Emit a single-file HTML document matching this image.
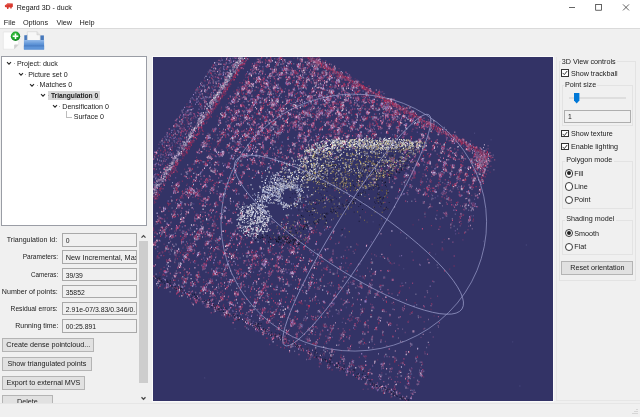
<!DOCTYPE html><html><head><meta charset="utf-8"><title>Regard 3D - duck</title><style>
*{box-sizing:border-box;margin:0;padding:0}
html,body{width:640px;height:417px;overflow:hidden;background:#f0f0f0}
body{filter:blur(0.3px);position:relative;font-family:"Liberation Sans",sans-serif;font-size:7.2px;color:#1a1a1a;line-height:1}
.abs{position:absolute}
.t{position:absolute;white-space:nowrap;line-height:9px;height:9px}
.fld{position:absolute;border:1px solid #a9a9a9;background:#f0f0f0;height:13.5px;left:62px;width:75px;overflow:hidden}
.fld span{position:absolute;left:2.8px;top:2px;white-space:nowrap;line-height:9px;font-size:6.6px}
.lbl{position:absolute;white-space:nowrap;line-height:9px;text-align:right;width:58px;left:0}
.btn{position:absolute;border:1px solid #b4b4b4;background:#e1e1e1;height:13.6px;text-align:center;line-height:12px;white-space:nowrap}
.chk{position:absolute;width:7.6px;height:7.6px;border:1px solid #333;background:#fff}
.rad{position:absolute;width:8.2px;height:8.2px;border:1px solid #3a3a3a;border-radius:50%;background:#fff}
.rad.on::after{content:"";position:absolute;left:1.1px;top:1.1px;width:4px;height:4px;border-radius:50%;background:#222}
.grp{position:absolute;border:1px solid #e3e3e3}
</style></head><body>
<div class="abs" style="left:0;top:0;width:640px;height:28.1px;background:#fff"></div>
<div class="abs" style="left:0;top:28.1px;width:640px;height:1.1px;background:#dadada"></div>
<svg class="abs" style="left:4px;top:1.8px" width="10" height="9" viewBox="0 0 10 9"><path d="M.8 3.4L3.6 1.2L8.8 1.5L8.9 4.8L7.8 5.2L7.6 6.6L6.2 6.6L6.2 5.2L4.6 5.6L4.4 7L3 7L3 5.5L1 5Z" fill="#d93a30"/><path d="M2 3.2L3.8 1.8L6.5 2" stroke="#f08a80" stroke-width=".7" fill="none"/></svg>
<div class="t" style="left:16.8px;top:3px;font-size:7.0px;color:#111">Regard 3D - duck</div>
<svg class="abs" style="left:560px;top:0" width="80" height="16" viewBox="0 0 80 16"><g stroke="#222" stroke-width="0.7" fill="none"><path d="M9 7.5h6"/><rect x="35.7" y="4.4" width="5.8" height="5.8"/><path d="M63 4.4l6 6M69 4.4l-6 6"/></g></svg>
<div class="t" style="left:3.8px;top:18px;font-size:7.3px">File</div>
<div class="t" style="left:22.9px;top:18px;font-size:7.3px">Options</div>
<div class="t" style="left:56.4px;top:18px;font-size:7.3px">View</div>
<div class="t" style="left:79.6px;top:18px;font-size:7.3px">Help</div>
<svg class="abs" style="left:2px;top:31px" width="46" height="21" viewBox="0 0 46 21">
<defs><radialGradient id="gg" cx=".45" cy=".4" r=".6"><stop offset="0" stop-color="#46cf46"/><stop offset=".7" stop-color="#1ea32e"/><stop offset="1" stop-color="#0b7a1c"/></radialGradient>
<linearGradient id="fg" x1="0" y1="0" x2="0" y2="1"><stop offset="0" stop-color="#93baea"/><stop offset=".45" stop-color="#5c92d6"/><stop offset="1" stop-color="#4a80c8"/></linearGradient></defs>
<path d="M1.3 1H16.7V13.5L12.2 18.2H1.3Z" fill="#fdfdfd" stroke="#dadada" stroke-width=".5"/>
<path d="M12.2 18.2V14.2Q12.2 13.5 13 13.5H16.7Z" fill="#cfcfcf"/>
<circle cx="13.5" cy="5.3" r="4.7" fill="url(#gg)"/>
<path d="M13.5 2.5v5.6M10.7 5.3h5.6" stroke="#fff" stroke-width="1.5"/>
<path d="M22.3 4.3h2.2l.8-.9h2.4v9h-5.4z" fill="#4678bc"/>
<path d="M37.6 4.4h4.3v8h-4.3z" fill="#4678bc"/>
<path d="M25.3 .7h9.6l3.3 3.2v6.4h-12.9z" fill="#f7f7f7" stroke="#cdcdcd" stroke-width=".5"/>
<path d="M34.9 .7v3.2h3.3" fill="#e2e2e2" stroke="#c4c4c4" stroke-width=".4"/>
<path d="M21.9 9h20.2v9.5h-20.2z" fill="url(#fg)"/>
<path d="M21.9 15.1h20.2" stroke="#3f73b8" stroke-width=".9"/>
<path d="M21.9 15.6h20.2v2.9h-20.2z" fill="#5e94d8"/>
</svg>
<div class="abs" style="left:1.3px;top:56.2px;width:145.6px;height:170.3px;background:#fff;border:1px solid #9a9da5"></div>
<div class="t" style="left:16.9px;top:59.9px;font-size:7.1px">Project: duck</div>
<svg class="abs" style="left:6.4px;top:61.1px" width="6" height="5" viewBox="0 0 6 5"><path d="M1 1.2l2 2L5 1.2" fill="none" stroke="#2a2a2a" stroke-width="1.1"/></svg>
<div class="abs" style="left:14.0px;top:63.2px;width:1px;height:1px;background:#b4b4b4"></div>
<div class="t" style="left:28.2px;top:70.6px;font-size:7.1px">Picture set 0</div>
<svg class="abs" style="left:17.8px;top:71.8px" width="6" height="5" viewBox="0 0 6 5"><path d="M1 1.2l2 2L5 1.2" fill="none" stroke="#2a2a2a" stroke-width="1.1"/></svg>
<div class="abs" style="left:25.4px;top:73.9px;width:1px;height:1px;background:#b4b4b4"></div>
<div class="t" style="left:39.6px;top:81.3px;font-size:7.1px">Matches 0</div>
<svg class="abs" style="left:29.1px;top:82.5px" width="6" height="5" viewBox="0 0 6 5"><path d="M1 1.2l2 2L5 1.2" fill="none" stroke="#2a2a2a" stroke-width="1.1"/></svg>
<div class="abs" style="left:36.7px;top:84.6px;width:1px;height:1px;background:#b4b4b4"></div>
<div class="abs" style="left:48.4px;top:90.7px;width:52px;height:9.6px;background:#d9d9d9"></div>
<div class="t" style="left:50.9px;top:91.0px;font-weight:bold;font-size:6.66px">Triangulation 0</div>
<svg class="abs" style="left:40.4px;top:93.2px" width="6" height="5" viewBox="0 0 6 5"><path d="M1 1.2l2 2L5 1.2" fill="none" stroke="#2a2a2a" stroke-width="1.1"/></svg>
<div class="abs" style="left:48.0px;top:95.3px;width:1px;height:1px;background:#b4b4b4"></div>
<div class="t" style="left:62.3px;top:102.7px;font-size:7.1px">Densification 0</div>
<svg class="abs" style="left:51.8px;top:103.9px" width="6" height="5" viewBox="0 0 6 5"><path d="M1 1.2l2 2L5 1.2" fill="none" stroke="#2a2a2a" stroke-width="1.1"/></svg>
<div class="abs" style="left:59.4px;top:106.0px;width:1px;height:1px;background:#b4b4b4"></div>
<div class="t" style="left:73.7px;top:113.4px;font-size:7.1px">Surface 0</div>
<div class="abs" style="left:66px;top:111.3px;width:1px;height:6px;background:#bcbcbc"></div><div class="abs" style="left:66px;top:116.6px;width:5.5px;height:1px;background:#bcbcbc"></div>
<div class="lbl" style="top:235.4px;width:57.2px"><span style="display:inline-block;transform-origin:100% 50%;transform:scaleX(0.985)">Triangulation Id:</span></div>
<div class="fld" style="top:233.2px"><span style="font-size:6.8px">0</span></div>
<div class="lbl" style="top:252.4px;width:58px"><span style="display:inline-block;transform-origin:100% 50%;transform:scaleX(0.905)">Parameters:</span></div>
<div class="fld" style="top:250.2px"><span style="font-size:7.3px">New Incremental, Max</span></div>
<div class="lbl" style="top:269.8px;width:58px"><span style="display:inline-block;transform-origin:100% 50%;transform:scaleX(0.87)">Cameras:</span></div>
<div class="fld" style="top:267.6px"><span style="font-size:6.8px">39/39</span></div>
<div class="lbl" style="top:287.1px;width:58px"><span style="display:inline-block;transform-origin:100% 50%;transform:scaleX(0.985)">Number of points:</span></div>
<div class="fld" style="top:284.9px"><span style="font-size:6.8px">35852</span></div>
<div class="lbl" style="top:304.1px;width:58px"><span style="display:inline-block;transform-origin:100% 50%;transform:scaleX(0.93)">Residual errors:</span></div>
<div class="fld" style="top:301.9px"><span style="font-size:6.9px">2.91e-07/3.83/0.346/0.</span></div>
<div class="lbl" style="top:321.4px;width:58px"><span style="display:inline-block;transform-origin:100% 50%;transform:scaleX(0.97)">Running time:</span></div>
<div class="fld" style="top:319.2px"><span style="font-size:6.8px">00:25.891</span></div>
<div class="btn" style="left:2.1px;top:338px;width:92.4px">Create dense pointcloud...</div>
<div class="btn" style="left:2.1px;top:357px;width:89.7px">Show triangulated points</div>
<div class="btn" style="left:2.1px;top:376.4px;width:82.7px">Export to external MVS</div>
<div class="btn" style="left:2.1px;top:394.8px;width:50.6px">Delete</div>
<div class="abs" style="left:139.3px;top:231px;width:8.4px;height:172.5px;background:#f0f0f0"></div>
<div class="abs" style="left:139.3px;top:241.2px;width:8.4px;height:141.8px;background:#cdcdcd"></div>
<svg class="abs" style="left:139.9px;top:234.4px" width="7" height="5" viewBox="0 0 7 5"><path d="M1.5 3.6l2-2L5.5 3.6" fill="none" stroke="#484848" stroke-width="1.25"/></svg>
<svg class="abs" style="left:139.9px;top:395.6px" width="7" height="5" viewBox="0 0 7 5"><path d="M1.5 1.3l2 2L5.5 1.3" fill="none" stroke="#484848" stroke-width="1.25"/></svg>
<div class="abs" style="left:0;top:403.3px;width:640px;height:13.7px;background:#f0f0f0;border-top:1px solid #e6e6e6"></div>
<div class="abs" style="left:556px;top:57px;width:84px;height:344px;border-left:1px solid #e6e6e6;border-bottom:1px solid #e6e6e6"></div>
<svg class="abs" style="left:630px;top:408px" width="9" height="8" viewBox="0 0 9 8"><g fill="#bdbdbd"><rect x="6.5" y="1" width="1" height="1"/><rect x="4.5" y="3" width="1" height="1"/><rect x="6.5" y="3" width="1" height="1"/><rect x="2.5" y="5" width="1" height="1"/><rect x="4.5" y="5" width="1" height="1"/><rect x="6.5" y="5" width="1" height="1"/></g></svg>
<div class="abs" style="left:152.8px;top:56.7px;width:400.09999999999997px;height:344.40000000000003px;background:#333366;overflow:hidden;outline:1px solid #fafafa">
<svg class="abs" style="left:0;top:0" width="400.09999999999997" height="344.40000000000003" viewBox="0 0 400.09999999999997 344.40000000000003">
<defs><filter id="b" x="0" y="0" width="100%" height="100%"><feGaussianBlur stdDeviation="0.45"/></filter></defs>
<g fill="none" filter="url(#b)"><g stroke-width="2.2">
<path stroke="#6e487a" d="M105.7 3.7h2M102.5 9.9h2M99.1 16.4h2M83.5 35.2h2M47.6 88.2h2M41.9 105.0h2M22.0 128.0h2M83.6 54.8h2M82.5 54.6h2M69.1 76.7h2M101.2 45.7h2M95.1 54.3h2M84.8 68.0h2M82.7 74.7h2M32.0 157.2h2M29.6 164.3h2M131.3 11.3h2M120.3 33.1h2M91.4 78.1h2M21.5 197.8h2M138.8 17.4h2M115.2 55.7h2M116.9 57.1h2M98.3 82.4h2M81.8 114.0h2M40.3 180.5h2M129.2 49.3h2M112.3 82.0h2M98.0 103.1h2M53.4 187.0h2M163.2 5.1h2M159.4 17.8h2M125.0 74.0h2M82.3 148.2h2M165.6 39.5h2M148.1 70.9h2M144.9 80.0h2M139.9 91.6h2M136.8 94.9h2M182.1 25.3h2M173.1 42.6h2M145.2 100.3h2M194.3 19.5h2M178.9 52.4h2M175.3 55.9h2M201.6 25.2h2M179.5 69.0h2M172.8 84.2h2M88.3 242.2h2M202.1 42.1h2M184.4 81.0h2M193.4 82.2h2M222.5 60.5h2M216.9 72.3h2M221.5 77.3h2M245.2 64.5h2M263.0 88.7h2M253.4 119.7h2M215.8 228.0h2M294.5 75.8h2M309.1 82.2h2M314.4 92.2h2M313.9 92.2h2M237.8 311.5h2M322.5 90.3h2M319.7 121.0h2"/>
<path stroke="#643363" d="M102.5 10.8h2M88.2 31.0h2M90.6 30.4h2M90.0 30.8h2M82.2 36.6h2M91.3 40.2h2M61.1 115.0h2M15.3 203.4h2M88.3 99.4h2M61.1 169.3h2M60.9 166.7h2M165.0 21.2h2M142.5 59.6h2M168.9 32.6h2M166.7 39.2h2M132.2 101.6h2M57.7 247.2h2M176.1 41.1h2M165.9 55.1h2M101.7 177.9h2M109.9 182.1h2M188.2 74.7h2M132.7 182.0h2M218.3 44.4h2M213.2 56.4h2M205.7 77.8h2M231.6 51.9h2M234.3 49.4h2M228.0 66.4h2M226.2 70.3h2M241.6 56.8h2M239.5 56.9h2M241.1 54.6h2M243.0 57.2h2M273.4 66.2h2M259.3 114.3h2M288.3 91.2h2M295.6 98.7h2M229.2 307.3h2M320.5 122.1h2M329.8 113.5h2"/>
<path stroke="#6a3b6f" d="M101.0 10.8h2M74.8 51.3h2M53.8 79.6h2M103.1 22.1h2M68.8 74.3h2M19.7 154.3h2M95.1 53.2h2M44.7 138.7h2M22.4 171.7h2M93.3 78.7h2M10.8 214.8h2M139.3 14.2h2M123.4 42.6h2M32.5 200.8h2M156.2 7.4h2M118.7 66.4h2M94.0 108.3h2M164.8 5.7h2M127.9 68.9h2M126.5 71.7h2M127.2 70.1h2M155.6 40.5h2M184.7 25.1h2M174.0 43.7h2M173.9 42.2h2M151.8 82.4h2M166.0 72.1h2M198.3 31.1h2M191.1 43.6h2M183.7 64.6h2M204.2 40.4h2M192.2 60.7h2M185.8 74.1h2M214.0 37.3h2M214.7 55.1h2M228.0 46.1h2M215.9 67.3h2M233.0 49.4h2M139.6 265.5h2M242.1 55.8h2M259.0 62.7h2M250.5 76.9h2M234.5 110.9h2M234.1 118.2h2M199.5 224.2h2M258.0 116.5h2M260.1 118.7h2M209.0 275.0h2M298.5 86.0h2M323.0 109.0h2"/>
<path stroke="#a17ea6" d="M101.6 11.3h2M93.9 35.5h2M35.8 135.0h2M8.8 173.9h2M123.1 6.9h2M121.9 12.6h2M120.2 14.1h2M104.0 41.4h2M104.3 40.5h2M69.0 95.1h2M52.5 143.2h2M147.7 4.2h2M118.6 44.9h2M107.2 69.6h2M98.8 83.9h2M42.9 182.2h2M120.3 65.0h2M162.9 10.1h2M161.3 12.0h2M172.2 9.4h2M172.5 16.2h2M157.8 39.7h2M150.8 55.0h2M149.0 55.2h2M161.0 44.0h2M180.2 45.1h2M199.4 30.0h2M191.9 42.5h2M185.2 55.9h2M176.6 78.9h2M185.2 73.1h2M141.6 186.9h2M222.0 60.9h2M209.6 86.6h2M137.0 267.6h2M177.4 203.2h2M250.8 59.5h2M220.5 125.5h2M250.6 75.5h2M236.6 108.4h2M266.7 84.2h2M206.7 226.5h2M279.5 67.4h2M262.8 107.6h2M279.2 89.0h2M205.5 285.5h2M285.0 103.2h2M259.4 274.4h2M315.1 163.3h2"/>
<path stroke="#7664a3" d="M96.3 16.6h2M89.2 31.0h2M88.8 31.1h2M95.2 34.8h2M36.0 132.7h2M114.3 25.7h2M111.7 30.3h2M81.6 76.2h2M132.2 26.2h2M117.7 47.2h2M120.6 46.9h2M150.6 29.8h2M56.6 225.1h2M177.8 33.5h2M173.6 65.1h2M156.5 97.2h2M189.5 49.0h2M187.4 58.4h2M182.4 81.1h2M123.7 200.2h2M232.0 50.4h2M234.4 50.3h2M240.4 54.9h2M244.7 73.4h2M257.5 63.5h2M252.3 67.1h2M316.5 129.9h2"/>
<path stroke="#985789" d="M91.7 28.7h2M88.8 30.4h2M88.1 31.2h2M53.4 79.5h2M115.7 4.5h2M105.5 22.2h2M67.9 76.5h2M36.6 132.4h2M110.3 25.9h2M49.9 141.9h2M117.8 55.6h2M90.4 99.5h2M41.7 179.3h2M134.6 44.1h2M121.8 67.8h2M109.2 90.3h2M109.0 88.3h2M58.6 168.7h2M30.0 224.1h2M164.8 6.0h2M142.2 50.1h2M134.4 56.3h2M132.3 65.0h2M125.8 75.0h2M123.4 78.0h2M159.2 34.2h2M145.6 62.4h2M174.1 42.8h2M148.0 98.5h2M97.5 185.3h2M188.2 30.3h2M179.3 52.6h2M163.4 82.7h2M151.5 102.0h2M194.6 38.8h2M187.2 47.8h2M189.3 49.2h2M187.1 57.5h2M227.1 47.9h2M233.6 51.8h2M233.8 59.9h2M233.2 75.4h2M242.8 70.7h2M155.3 283.3h2M250.7 95.3h2M238.7 222.9h2M222.0 271.4h2"/>
<path stroke="#5a4f8a" d="M93.7 25.6h2M79.5 42.7h2M10.1 151.4h2M75.4 70.5h2M32.4 134.8h2M120.5 48.1h2M111.5 60.7h2M93.2 93.3h2M149.4 28.9h2M146.2 35.2h2M149.8 35.7h2M170.7 10.5h2M166.4 20.6h2M158.0 52.5h2M144.1 79.3h2M185.0 17.7h2M183.3 22.9h2M73.8 229.0h2M194.7 22.9h2M173.9 59.3h2M187.3 50.1h2M179.7 246.7h2M193.2 312.6h2M287.1 119.5h2M307.1 138.6h2"/>
<path stroke="#9286b3" d="M94.7 26.7h2M80.2 45.2h2M24.1 129.1h2M87.1 48.4h2M81.7 54.4h2M83.4 55.0h2M8.5 175.0h2M117.3 18.5h2M96.2 52.0h2M91.6 59.5h2M17.6 178.7h2M111.2 43.2h2M79.1 101.3h2M146.7 2.3h2M30.6 199.4h2M147.2 20.2h2M128.1 52.4h2M102.3 98.7h2M70.7 154.0h2M163.6 12.1h2M149.1 28.3h2M148.4 30.5h2M128.9 70.3h2M120.7 84.8h2M170.6 14.9h2M179.1 12.9h2M174.2 43.5h2M166.7 54.8h2M151.3 83.8h2M108.6 206.8h2M188.9 67.6h2M189.5 67.5h2M178.3 87.8h2M212.1 37.9h2M204.8 79.7h2M228.6 47.1h2M220.2 121.9h2M271.0 136.8h2M208.8 311.3h2M281.9 135.0h2M315.2 143.4h2"/>
<path stroke="#914176" d="M93.8 26.6h2M78.5 44.0h2M52.8 81.0h2M82.9 56.6h2M112.0 26.1h2M79.0 79.7h2M135.8 5.1h2M74.8 106.3h2M65.9 117.2h2M143.8 8.9h2M119.3 47.5h2M145.8 20.6h2M120.6 66.4h2M120.1 67.0h2M128.7 69.3h2M50.3 206.8h2M164.8 21.5h2M175.7 16.9h2M166.7 38.2h2M167.6 37.7h2M185.2 16.6h2M175.5 42.6h2M173.6 44.2h2M164.5 59.2h2M146.1 99.2h2M178.3 53.0h2M202.6 26.6h2M187.2 61.0h2M114.6 193.3h2M194.1 61.5h2M122.7 208.7h2M101.7 245.9h2M215.3 34.3h2M198.5 69.7h2M106.5 259.2h2M225.1 35.0h2M224.2 37.2h2M219.6 44.9h2M228.6 49.7h2M233.4 58.2h2M242.4 57.2h2M240.2 59.4h2M234.5 68.8h2M258.5 62.8h2M239.7 102.6h2M260.9 116.4h2M273.8 105.8h2M291.7 106.9h2"/>
<path stroke="#883261" d="M88.7 31.4h2M54.5 78.7h2M92.3 37.0h2M26.8 140.5h2M108.2 32.4h2M97.7 52.8h2M120.2 31.3h2M107.3 50.6h2M135.1 20.5h2M135.8 21.4h2M134.3 22.3h2M165.3 4.0h2M126.0 73.7h2M172.5 8.0h2M141.3 65.5h2M51.7 232.2h2M152.7 58.4h2M145.3 72.2h2M174.5 57.5h2M198.3 29.7h2M181.7 69.4h2M204.3 42.9h2M233.6 50.7h2M221.1 79.4h2M298.8 82.4h2M329.2 118.5h2"/>
<path stroke="#c0487d" d="M89.0 29.8h2M91.9 41.3h2M74.4 68.9h2M75.4 69.0h2M112.0 43.6h2M145.4 21.3h2M75.5 163.9h2M177.1 51.3h2"/>
<path stroke="#777096" d="M84.3 35.9h2M70.5 59.9h2M55.7 78.1h2M52.8 81.1h2M103.2 22.8h2M83.2 54.6h2M79.3 61.0h2M40.0 123.0h2M124.0 7.7h2M111.4 27.0h2M145.1 10.6h2M139.4 14.6h2M99.6 82.4h2M86.6 103.8h2M165.2 6.2h2M160.1 17.1h2M59.6 216.6h2M167.2 36.6h2M166.3 36.5h2M148.9 66.7h2M140.9 88.9h2M170.7 47.9h2M93.1 199.3h2M184.3 40.4h2M203.0 62.8h2M211.0 60.8h2M207.2 78.7h2M155.2 230.7h2M179.5 216.9h2M257.5 56.6h2M237.8 130.2h2M218.1 205.6h2M270.9 89.9h2M215.8 234.3h2"/>
<path stroke="#a89cb9" d="M79.8 44.5h2M96.1 28.6h2M82.2 55.2h2M80.2 62.8h2M74.3 69.1h2M74.8 88.7h2M127.7 16.4h2M123.8 44.6h2M31.0 225.0h2M125.3 76.1h2M169.2 15.9h2M154.6 40.8h2M139.6 66.5h2M159.6 51.1h2M186.1 18.1h2M177.0 52.5h2M94.9 211.0h2M192.6 79.9h2M138.1 194.8h2M114.4 245.0h2M236.1 50.4h2M259.2 54.9h2M268.2 77.5h2M254.5 110.0h2M177.2 298.3h2M307.8 132.2h2"/>
<path stroke="#977cc2" d="M78.0 44.2h2M73.8 50.0h2M11.6 215.2h2M137.8 37.2h2M117.2 86.0h2M211.5 244.4h2"/>
<path stroke="#6b6493" d="M54.5 79.2h2M33.1 116.7h2M36.1 134.9h2M120.2 13.4h2M91.8 61.0h2M82.0 74.9h2M66.6 98.2h2M27.7 160.8h2M132.5 12.9h2M32.4 176.3h2M137.0 15.8h2M121.6 44.4h2M118.5 45.6h2M25.5 208.6h2M158.1 18.8h2M123.8 76.1h2M171.5 7.9h2M171.3 9.5h2M169.0 14.9h2M167.2 21.6h2M162.1 27.7h2M155.4 40.8h2M150.4 55.3h2M126.7 91.9h2M180.8 11.9h2M162.0 46.9h2M184.1 24.2h2M77.7 223.4h2M177.9 53.0h2M162.3 86.1h2M193.7 36.3h2M179.6 70.0h2M107.7 211.5h2M203.4 41.6h2M93.8 263.6h2M199.9 67.4h2M224.2 38.5h2M206.1 68.3h2M134.8 228.6h2M218.9 62.0h2M232.2 57.5h2M230.2 220.6h2M291.0 107.3h2M293.2 141.8h2M231.3 332.2h2M257.5 287.6h2"/>
<path stroke="#e2d0e2" d="M49.9 88.5h2M165.9 37.8h2M212.3 37.9h2M264.6 64.8h2"/>
<path stroke="#735f8b" d="M5.5 160.8h2M105.6 23.4h2M126.7 1.9h2M113.5 26.3h2M109.3 34.9h2M95.3 54.2h2M93.7 59.8h2M126.2 16.4h2M93.3 79.0h2M93.9 79.5h2M85.0 85.6h2M140.0 14.5h2M139.7 15.0h2M112.3 63.5h2M107.2 70.5h2M93.5 92.4h2M95.3 90.8h2M48.8 170.6h2M150.4 12.7h2M148.0 14.1h2M135.8 37.4h2M121.1 66.3h2M158.7 15.4h2M125.7 76.7h2M150.0 56.4h2M60.2 215.7h2M48.6 233.7h2M166.2 38.5h2M154.7 58.9h2M185.9 18.0h2M182.4 25.3h2M177.9 34.3h2M188.6 31.1h2M163.8 81.8h2M157.5 91.7h2M199.6 30.9h2M179.7 68.9h2M172.0 80.6h2M115.5 193.7h2M110.9 203.6h2M185.2 76.3h2M93.6 263.8h2M194.4 78.9h2M191.2 86.2h2M182.7 100.2h2M219.4 42.9h2M209.2 61.1h2M233.3 51.4h2M226.6 71.5h2M241.3 54.5h2M240.5 85.0h2M232.7 97.2h2M186.5 210.2h2M257.3 63.3h2M256.1 63.6h2M275.1 65.9h2M270.0 69.3h2M210.6 276.9h2M217.9 282.4h2M299.4 78.7h2M306.5 113.5h2M239.2 300.0h2M252.0 330.6h2"/>
<path stroke="#cb699a" d="M87.0 48.5h2M100.1 45.9h2M93.2 59.1h2M88.9 97.6h2M46.8 175.9h2M113.9 74.2h2M86.3 124.8h2M167.6 21.2h2M163.6 57.1h2M159.4 66.4h2M83.8 237.3h2M184.3 81.8h2M263.6 67.4h2"/>
<path stroke="#5c2f5e" d="M79.6 63.1h2M27.9 163.2h2M100.0 81.7h2M134.4 56.9h2M128.7 71.2h2M154.4 41.9h2M150.6 81.0h2M183.8 73.9h2M199.4 71.1h2M213.3 55.6h2M227.7 47.0h2M235.6 68.6h2M146.1 270.2h2M288.5 192.5h2"/>
<path stroke="#792c59" d="M104.8 38.1h2M44.1 158.4h2M129.5 52.2h2M124.2 57.9h2M119.4 84.2h2M169.1 15.2h2M257.6 62.3h2"/>
<path stroke="#c2b0d9" d="M93.2 60.6h2M46.8 172.8h2M137.8 36.5h2M146.2 78.7h2M170.9 43.6h2M185.6 72.7h2"/>
<path stroke="#d8a4c5" d="M69.0 95.0h2M140.2 14.9h2M133.5 44.3h2M164.7 6.6h2M165.8 21.0h2M142.0 60.2h2M175.4 21.4h2M183.9 54.6h2M177.9 69.6h2M237.3 42.5h2"/>
<path stroke="#4f4380" d="M3.5 199.6h2M101.3 95.1h2M159.5 16.0h2M138.7 87.6h2M178.7 35.6h2M102.0 273.5h2"/>
<path stroke="#644e92" d="M128.6 12.2h2M163.2 44.5h2M194.1 20.6h2M194.0 44.0h2M194.9 55.0h2M100.4 246.2h2M197.4 70.2h2M197.5 71.7h2M257.4 62.7h2M252.2 116.5h2"/>
<path stroke="#9c2952" d="M96.1 72.6h2M149.5 169.3h2M225.1 36.0h2M220.3 77.1h2"/>
<path stroke="#b2325f" d="M112.3 60.0h2M134.9 44.0h2M131.9 64.2h2M178.9 45.7h2M81.3 237.5h2M155.0 249.2h2M266.2 60.4h2M273.2 131.2h2"/>
</g><g stroke-width="1.4">
<path stroke="#6e487a" d="M112.3 3.8h1M103.8 2.2h1M101.6 11.5h1M101.8 14.9h1M93.9 20.4h1M89.0 25.8h1M92.0 27.3h1M91.8 31.4h1M87.7 29.7h1M91.3 30.8h1M84.7 33.1h1M80.9 41.0h1M81.7 42.7h1M81.8 41.7h1M80.5 41.3h1M77.3 53.1h1M73.5 61.9h1M65.9 67.3h1M62.3 70.8h1M50.3 87.9h1M56.1 89.9h1M45.1 93.9h1M43.6 103.9h1M42.6 104.0h1M35.7 121.3h1M20.3 134.5h1M5.2 163.8h1M4.8 162.3h1M113.9 8.5h1M105.1 23.0h1M109.4 20.6h1M95.7 35.5h1M97.1 33.4h1M83.4 49.3h1M87.9 47.4h1M80.9 54.7h1M83.7 55.9h1M81.4 53.1h1M88.8 53.9h1M84.0 56.0h1M81.6 63.4h1M80.6 61.4h1M70.1 77.7h1M72.2 77.5h1M60.4 92.4h1M61.4 94.3h1M57.6 97.0h1M39.1 125.3h1M35.2 138.0h1M36.7 132.1h1M39.4 140.3h1M33.1 128.4h1M44.1 132.8h1M27.6 154.0h1M27.4 149.9h1M18.4 158.1h1M13.2 167.1h1M7.5 177.7h1M5.6 173.3h1M1.3 176.0h1M1.4 187.0h1M127.2 1.7h1M125.1 3.5h1M129.1 1.5h1M120.7 14.2h1M115.5 19.6h1M117.5 16.1h1M111.4 26.8h1M117.3 26.6h1M114.5 26.2h1M110.2 29.9h1M109.7 32.7h1M99.1 47.8h1M97.1 43.0h1M99.2 48.1h1M95.8 55.0h1M99.5 49.8h1M95.4 53.9h1M94.1 53.3h1M101.2 55.8h1M87.1 61.9h1M87.3 67.6h1M85.2 67.0h1M87.6 66.5h1M84.4 74.4h1M83.6 73.6h1M80.2 75.0h1M85.8 75.4h1M78.0 89.6h1M70.8 95.2h1M61.5 113.6h1M60.7 113.2h1M52.3 122.6h1M51.3 128.3h1M51.9 127.4h1M47.9 133.4h1M43.9 134.8h1M40.0 136.8h1M46.5 139.2h1M22.7 173.7h1M15.8 177.5h1M20.4 180.0h1M16.1 182.3h1M12.1 193.3h1M7.6 198.3h1M135.6 4.3h1M134.3 6.3h1M131.9 10.7h1M138.0 10.7h1M127.7 10.4h1M135.5 13.5h1M128.3 17.0h1M123.0 14.9h1M121.0 25.5h1M124.4 22.7h1M123.5 29.8h1M116.8 29.7h1M122.3 36.7h1M111.4 43.4h1M107.5 52.0h1M107.4 52.1h1M107.5 54.5h1M103.4 56.7h1M107.1 57.5h1M99.9 66.2h1M85.4 86.3h1M81.4 85.0h1M83.9 98.6h1M81.4 96.0h1M83.2 92.3h1M71.6 106.6h1M63.0 125.3h1M57.1 147.2h1M34.7 172.5h1M29.3 181.0h1M23.7 194.7h1M4.5 222.3h1M142.9 15.7h1M134.3 24.3h1M133.0 19.1h1M136.4 25.3h1M131.8 31.8h1M118.4 51.4h1M118.5 47.9h1M111.6 64.5h1M107.1 78.4h1M104.1 74.9h1M108.6 74.2h1M104.4 76.6h1M100.4 81.4h1M100.1 81.4h1M91.2 90.8h1M96.8 91.7h1M92.9 97.2h1M89.6 98.8h1M93.9 97.5h1M77.1 126.0h1M76.9 123.4h1M77.9 123.0h1M80.0 122.2h1M64.3 148.6h1M59.0 162.9h1M46.9 173.0h1M32.4 195.6h1M42.4 188.2h1M33.5 189.3h1M37.2 186.5h1M36.6 188.8h1M34.9 201.6h1M30.3 200.2h1M24.6 209.8h1M24.0 216.2h1M10.9 231.3h1M159.2 2.7h1M158.9 1.0h1M149.8 16.3h1M148.0 11.9h1M147.4 19.9h1M151.4 21.3h1M140.3 33.1h1M137.7 35.0h1M133.8 44.9h1M129.8 49.6h1M130.7 53.8h1M122.3 53.7h1M128.2 51.3h1M126.0 62.6h1M120.8 63.2h1M116.2 72.6h1M113.1 81.1h1M85.7 125.4h1M77.1 146.8h1M51.4 198.0h1M34.8 217.6h1M29.9 210.6h1M29.0 225.5h1M29.8 226.8h1M29.7 222.6h1M166.3 10.1h1M165.0 5.5h1M162.4 10.4h1M161.5 11.9h1M163.0 8.9h1M161.4 10.4h1M162.0 11.8h1M164.1 17.7h1M159.9 17.8h1M165.1 17.0h1M157.5 22.1h1M152.3 26.5h1M150.2 29.5h1M149.4 30.2h1M147.7 36.0h1M148.5 35.8h1M144.3 41.5h1M138.1 43.6h1M144.0 43.1h1M139.6 45.8h1M143.9 52.4h1M142.2 49.4h1M134.1 66.3h1M135.9 68.6h1M131.5 69.4h1M127.7 68.2h1M126.0 72.6h1M130.2 69.4h1M128.4 69.9h1M129.7 68.8h1M122.6 70.5h1M123.0 80.4h1M120.2 84.5h1M113.5 94.4h1M110.7 98.7h1M119.4 96.1h1M111.1 98.6h1M106.6 108.9h1M109.5 103.0h1M83.2 148.8h1M89.1 147.4h1M75.5 153.2h1M79.3 155.8h1M49.8 211.6h1M49.1 211.2h1M37.8 226.6h1M42.5 221.7h1M168.8 9.1h1M165.2 17.1h1M172.8 14.1h1M165.0 17.4h1M166.7 17.7h1M169.7 24.2h1M164.6 18.1h1M158.2 26.2h1M161.4 27.4h1M162.7 23.2h1M160.1 34.6h1M159.0 31.1h1M160.7 34.2h1M154.4 41.8h1M155.4 39.4h1M150.2 49.8h1M149.6 60.1h1M149.0 55.3h1M148.5 55.4h1M144.6 59.3h1M147.0 57.5h1M141.5 61.2h1M142.0 69.0h1M134.9 79.7h1M127.3 90.1h1M119.0 98.4h1M118.7 101.8h1M117.0 103.5h1M81.8 173.2h1M78.8 183.2h1M79.3 179.5h1M78.8 178.4h1M75.8 187.7h1M70.2 196.1h1M61.3 214.3h1M61.3 215.5h1M59.8 217.1h1M61.1 215.1h1M62.9 213.9h1M56.9 221.9h1M55.4 226.9h1M42.8 243.0h1M172.8 25.0h1M167.6 31.4h1M166.2 40.4h1M169.2 39.3h1M168.2 37.0h1M164.6 34.2h1M163.0 40.5h1M168.6 39.6h1M158.3 50.2h1M153.3 56.7h1M156.8 56.9h1M155.4 55.5h1M154.7 57.9h1M155.7 58.7h1M142.3 73.0h1M144.9 77.1h1M138.8 85.6h1M130.5 102.0h1M129.2 97.4h1M95.2 172.1h1M87.2 183.7h1M83.8 190.1h1M78.9 198.4h1M75.2 200.3h1M76.1 203.6h1M73.0 221.9h1M70.4 217.6h1M57.8 237.7h1M50.0 244.7h1M184.4 19.0h1M185.6 18.6h1M186.7 19.0h1M184.2 22.4h1M185.0 20.2h1M185.8 24.7h1M185.1 24.7h1M183.9 27.0h1M182.1 26.4h1M180.2 34.5h1M176.0 33.0h1M175.7 36.1h1M175.6 34.0h1M168.7 42.2h1M174.0 41.9h1M173.6 45.5h1M171.9 40.8h1M173.7 42.4h1M162.5 51.9h1M165.8 62.1h1M164.6 60.7h1M168.4 61.2h1M153.4 87.7h1M152.3 82.2h1M151.9 83.4h1M146.3 88.1h1M145.1 94.0h1M151.0 98.0h1M140.2 103.5h1M103.1 174.8h1M94.7 193.9h1M98.5 196.6h1M86.4 211.7h1M78.1 217.0h1M66.1 237.0h1M66.8 243.8h1M69.5 241.3h1M195.8 19.6h1M194.2 16.8h1M190.7 27.9h1M188.4 34.3h1M189.4 32.2h1M179.3 52.3h1M178.0 53.3h1M181.0 52.6h1M183.7 51.5h1M174.4 60.9h1M168.0 64.5h1M166.0 73.1h1M166.3 78.6h1M161.1 84.2h1M163.5 86.3h1M161.6 86.1h1M154.5 89.6h1M148.5 110.4h1M111.7 181.4h1M102.8 197.8h1M98.8 207.9h1M95.3 217.6h1M70.5 259.0h1M75.8 259.7h1M68.4 258.1h1M204.2 26.5h1M198.0 30.8h1M198.4 28.1h1M193.0 31.8h1M200.2 40.8h1M192.3 34.2h1M191.8 51.9h1M189.6 52.3h1M184.4 58.5h1M188.1 59.4h1M184.9 56.8h1M182.5 68.0h1M182.4 62.3h1M180.8 65.9h1M179.7 65.0h1M175.8 77.5h1M174.0 82.6h1M174.3 83.0h1M170.0 91.8h1M161.9 102.7h1M116.7 190.9h1M115.3 194.8h1M104.9 206.4h1M105.8 217.8h1M107.2 216.8h1M103.1 226.6h1M95.2 228.8h1M87.3 250.0h1M77.9 258.8h1M80.2 260.8h1M82.0 261.2h1M203.3 36.5h1M204.3 39.8h1M205.6 41.5h1M204.1 42.5h1M189.2 59.2h1M185.5 65.7h1M187.8 74.5h1M188.6 74.1h1M184.8 74.6h1M191.0 76.4h1M185.7 77.3h1M179.6 81.5h1M180.8 81.2h1M183.3 83.0h1M180.8 75.8h1M183.0 89.8h1M144.6 158.7h1M144.9 163.5h1M143.4 167.9h1M144.6 168.1h1M137.6 173.7h1M133.9 182.4h1M129.6 188.8h1M129.2 199.7h1M125.6 201.2h1M119.3 214.7h1M116.8 218.1h1M107.9 235.5h1M111.1 241.1h1M108.7 235.3h1M101.5 241.7h1M94.5 258.5h1M92.1 265.3h1M96.5 268.4h1M216.1 34.3h1M213.2 38.9h1M213.0 39.4h1M201.0 66.0h1M196.8 71.1h1M198.1 71.4h1M198.9 70.2h1M189.7 78.5h1M151.6 165.7h1M145.5 174.3h1M148.4 168.1h1M144.3 175.1h1M146.2 186.6h1M143.9 184.4h1M142.4 185.0h1M139.2 194.6h1M135.3 193.3h1M130.3 216.8h1M127.7 215.7h1M125.9 222.7h1M123.5 228.5h1M109.1 251.3h1M114.4 255.3h1M107.7 262.4h1M106.8 261.0h1M111.2 260.5h1M103.9 258.3h1M108.3 260.4h1M226.0 33.1h1M218.4 43.8h1M218.3 45.9h1M219.0 44.9h1M216.5 46.4h1M217.5 50.3h1M210.4 61.0h1M156.4 172.0h1M154.4 184.5h1M142.5 211.6h1M135.4 212.8h1M134.1 225.4h1M127.6 231.0h1M116.8 264.3h1M119.6 266.5h1M105.1 274.3h1M226.5 48.3h1M223.6 47.5h1M220.5 61.9h1M222.1 62.3h1M217.6 74.6h1M214.5 80.7h1M216.5 85.5h1M157.2 195.5h1M130.5 258.5h1M118.4 283.0h1M126.8 278.7h1M239.6 47.3h1M234.5 50.6h1M236.3 53.9h1M231.8 51.3h1M236.3 51.9h1M232.9 52.0h1M231.9 60.3h1M234.4 60.6h1M227.1 70.4h1M227.0 71.5h1M173.4 191.8h1M158.5 210.6h1M163.9 207.2h1M166.7 207.4h1M157.4 223.7h1M149.8 235.4h1M151.5 230.3h1M143.6 254.2h1M139.6 263.1h1M140.1 265.8h1M243.3 47.1h1M237.9 67.7h1M234.0 63.7h1M233.8 76.1h1M228.5 87.6h1M216.6 125.3h1M191.7 179.9h1M191.2 171.5h1M182.3 186.7h1M168.3 213.0h1M164.2 232.0h1M153.5 248.0h1M148.1 275.4h1M147.7 270.9h1M144.5 269.5h1M144.8 275.2h1M149.0 268.1h1M146.5 269.3h1M145.9 271.6h1M143.7 277.4h1M143.0 276.1h1M137.2 290.6h1M140.0 283.7h1M250.5 60.9h1M244.5 69.8h1M246.2 65.1h1M227.0 112.8h1M220.1 125.9h1M193.7 190.1h1M192.2 206.0h1M183.9 214.0h1M181.3 216.7h1M174.5 226.6h1M174.1 236.7h1M158.3 273.6h1M153.6 282.6h1M155.6 281.1h1M153.6 282.7h1M154.5 291.3h1M259.0 53.9h1M259.6 55.8h1M257.5 54.8h1M259.5 63.8h1M257.6 59.1h1M257.7 63.2h1M252.3 74.8h1M240.6 102.0h1M237.6 106.6h1M235.6 118.2h1M228.8 128.0h1M199.7 194.4h1M181.4 239.4h1M178.4 248.7h1M168.9 273.2h1M163.7 271.3h1M164.3 282.6h1M162.1 285.9h1M157.2 300.3h1M157.4 300.5h1M155.3 302.4h1M251.5 93.2h1M251.7 102.2h1M242.3 115.8h1M242.1 110.8h1M242.7 121.6h1M239.1 124.4h1M213.3 187.7h1M202.5 217.9h1M197.3 225.3h1M203.9 228.9h1M187.7 242.0h1M192.2 246.0h1M185.4 256.9h1M179.5 269.3h1M174.8 273.1h1M172.4 279.1h1M173.9 293.7h1M172.3 292.1h1M168.4 290.0h1M166.2 302.6h1M167.6 303.8h1M166.3 303.5h1M274.9 62.8h1M266.8 76.9h1M269.7 79.0h1M270.2 80.1h1M266.3 85.2h1M258.5 92.4h1M265.3 91.8h1M260.7 99.5h1M256.7 104.3h1M258.6 104.5h1M254.9 108.0h1M252.8 119.6h1M252.7 122.6h1M252.7 119.7h1M251.2 128.0h1M251.2 127.0h1M221.2 197.8h1M222.8 199.1h1M214.0 211.1h1M209.7 219.9h1M211.1 221.5h1M207.0 230.0h1M199.3 247.9h1M195.9 258.2h1M192.4 266.4h1M189.6 275.4h1M189.7 271.7h1M189.4 277.3h1M186.9 282.2h1M185.7 287.7h1M185.7 283.5h1M178.1 294.4h1M178.3 297.9h1M264.4 106.6h1M261.1 115.6h1M259.8 117.0h1M257.2 113.5h1M230.3 200.2h1M222.1 214.5h1M220.7 215.2h1M221.1 217.6h1M215.5 234.1h1M215.8 233.2h1M215.7 234.9h1M212.7 242.6h1M208.5 254.1h1M209.1 251.5h1M205.0 264.2h1M198.4 263.1h1M195.5 281.3h1M195.9 281.4h1M194.6 293.2h1M189.1 302.3h1M187.0 311.9h1M283.1 84.1h1M276.5 104.3h1M269.6 116.9h1M272.1 118.9h1M272.9 124.7h1M263.1 133.9h1M262.2 132.7h1M247.3 175.5h1M240.7 206.3h1M227.4 230.5h1M225.9 229.8h1M226.9 228.9h1M210.6 267.7h1M211.3 270.0h1M196.9 291.5h1M199.3 307.3h1M198.0 307.5h1M290.0 90.2h1M283.7 97.3h1M278.8 114.0h1M277.0 122.6h1M270.7 131.6h1M272.0 136.4h1M272.3 137.6h1M265.2 162.9h1M238.5 236.7h1M232.7 244.0h1M223.4 270.0h1M221.1 287.4h1M206.5 310.2h1M205.3 309.2h1M205.3 321.9h1M287.0 117.3h1M285.7 118.9h1M281.6 132.8h1M281.3 134.9h1M238.6 246.3h1M235.2 268.5h1M235.3 267.3h1M229.1 277.0h1M231.9 284.5h1M219.0 308.4h1M216.8 312.2h1M216.3 315.6h1M213.1 326.2h1M310.2 89.1h1M305.7 82.0h1M308.7 84.6h1M301.4 98.1h1M302.8 96.5h1M298.6 100.3h1M298.4 109.7h1M290.9 131.0h1M291.5 130.5h1M291.8 136.7h1M290.2 137.6h1M290.6 136.4h1M290.6 134.8h1M248.9 252.4h1M244.8 271.6h1M243.5 268.0h1M233.3 288.7h1M235.8 299.7h1M228.6 308.7h1M220.9 329.9h1M222.6 332.0h1M219.9 331.1h1M214.5 332.1h1M316.9 84.0h1M309.4 100.4h1M309.7 100.5h1M308.8 96.1h1M308.8 108.6h1M306.6 111.8h1M307.3 112.7h1M303.7 115.4h1M305.2 120.4h1M304.6 132.3h1M298.2 134.5h1M299.6 131.8h1M295.1 143.1h1M292.9 145.5h1M296.5 143.6h1M286.8 161.7h1M251.7 275.5h1M242.2 303.5h1M242.3 301.3h1M238.0 314.6h1M236.2 307.2h1M236.8 320.1h1M235.4 320.5h1M229.4 329.6h1M232.6 329.0h1M321.0 94.6h1M311.4 118.2h1M308.8 123.5h1M311.4 125.0h1M310.7 129.3h1M303.8 146.9h1M301.8 153.0h1M288.7 185.2h1M267.4 260.3h1M257.0 289.4h1M255.0 294.7h1M244.1 320.0h1M244.3 324.6h1M329.5 97.7h1M327.0 101.4h1M326.5 108.3h1M321.7 107.9h1M325.7 109.4h1M323.4 119.9h1M320.7 122.9h1M320.9 123.4h1M315.8 144.1h1M310.9 148.4h1M306.7 168.7h1M267.5 280.4h1M262.1 300.5h1M254.0 319.5h1M254.3 323.0h1M252.5 320.2h1M260.4 320.6h1M254.4 331.2h1M330.5 114.6h1M321.6 137.0h1M318.4 146.6h1M316.5 160.4h1M317.6 158.9h1M315.2 169.3h1M279.7 280.0h1M271.6 296.8h1M267.8 317.8h1M267.5 318.1h1M269.3 315.0h1M266.9 318.2h1M267.4 315.8h1M263.3 327.3h1M264.0 327.8h1M257.6 336.1h1M260.4 335.4h1M260.3 334.6h1M19.2 79.4h1M16.2 76.6h1M49.8 43.4h1M31.4 73.2h1M17.0 98.4h1M57.0 37.5h1M22.1 75.5h1M0.7 107.7h1M23.3 67.8h1M5.4 87.4h1M45.9 39.0h1M35.4 75.9h1M1.8 97.5h1M38.0 61.4h1M44.7 44.1h1M27.4 70.5h1M25.8 87.1h1M11.4 79.7h1M67.2 10.9h1M18.5 86.0h1M37.9 69.1h1M63.5 5.5h1M31.6 58.4h1M66.0 12.0h1M65.6 26.8h1M14.0 85.2h1M59.2 18.7h1M48.7 37.0h1M15.4 88.1h1M52.4 35.1h1M36.9 56.7h1M35.9 66.7h1M26.0 71.6h1M42.5 36.1h1M58.5 30.9h1M3.5 106.4h1M9.3 106.1h1M51.1 30.7h1M45.4 56.4h1M39.1 52.4h1M2.2 109.3h1M8.7 82.4h1M9.1 81.6h1M51.4 23.7h1M19.5 97.7h1M56.9 25.7h1M33.6 63.5h1M35.6 72.4h1M66.8 14.6h1M76.5 10.0h1M70.6 7.1h1M5.0 106.3h1M38.5 72.3h1M68.7 32.2h1M86.5 2.6h1M71.7 28.5h1M74.2 21.4h1M71.3 28.1h1M85.5 4.3h1M53.6 52.6h1M31.1 88.0h1M0.5 132.5h1M2.2 131.3h1M88.9 2.9h1M35.4 77.2h1M19.3 104.0h1M11.4 117.3h1M29.3 89.4h1M10.9 110.8h1M60.0 45.6h1M84.6 7.5h1M7.0 122.6h1M19.2 100.9h1M68.0 29.5h1M69.3 25.7h1M12.2 113.4h1M48.7 65.2h1M8.8 116.3h1M28.5 92.1h1M69.7 25.8h1M50.0 56.0h1M24.6 95.4h1M18.4 106.6h1M45.9 69.9h1M33.8 84.7h1M12.5 114.5h1M68.8 27.1h1M14.5 116.8h1M14.3 116.5h1M22.4 99.7h1M5.7 126.2h1M19.5 108.0h1M13.0 119.9h1M82.0 16.5h1M59.2 49.7h1M65.8 43.9h1M4.5 138.4h1M58.5 53.5h1M50.7 63.4h1M9.9 123.6h1M0.6 140.4h1M1.5 142.2h1M15.2 117.7h1M40.8 78.8h1M65.5 40.0h1M55.6 57.0h1M72.1 33.5h1M62.2 46.2h1M42.8 78.5h1M87.9 7.9h1M22.4 108.4h1M65.9 42.7h1M21.5 112.4h1M89.6 4.7h1M54.9 60.1h1"/>
<path stroke="#9286b3" d="M113.4 0.8h1M100.9 10.6h1M102.4 16.5h1M94.0 26.2h1M91.1 31.2h1M84.2 35.7h1M79.2 44.7h1M70.3 58.9h1M52.0 80.7h1M53.7 79.0h1M36.4 114.0h1M18.3 128.7h1M19.0 125.6h1M21.2 135.4h1M21.1 134.1h1M9.9 150.5h1M10.1 150.9h1M4.2 159.2h1M104.0 24.2h1M99.6 28.2h1M98.7 33.8h1M92.7 42.0h1M93.0 42.4h1M78.8 58.3h1M87.1 59.1h1M83.8 55.4h1M81.0 69.1h1M75.2 71.6h1M36.8 135.3h1M37.3 133.4h1M41.6 135.5h1M26.9 144.6h1M18.2 157.2h1M2.2 185.4h1M126.0 2.7h1M126.6 1.3h1M127.5 7.2h1M122.1 5.2h1M121.5 9.9h1M114.2 20.2h1M118.2 17.4h1M113.8 26.9h1M109.0 33.3h1M96.4 52.5h1M92.4 59.1h1M93.7 59.9h1M91.4 57.8h1M93.3 59.3h1M94.3 59.5h1M85.1 67.9h1M82.0 75.3h1M84.1 72.4h1M82.4 76.2h1M82.5 77.4h1M82.2 74.3h1M79.4 84.3h1M56.6 122.5h1M40.3 137.0h1M44.6 138.1h1M24.6 169.6h1M13.7 189.0h1M2.6 217.1h1M131.7 4.9h1M133.2 10.8h1M129.3 13.1h1M134.3 12.0h1M125.6 16.2h1M115.9 40.5h1M105.7 56.2h1M105.2 56.5h1M99.5 67.7h1M99.7 65.8h1M99.1 60.2h1M93.1 71.9h1M95.8 67.8h1M91.9 78.1h1M86.5 86.1h1M84.9 87.3h1M86.3 87.1h1M80.8 98.6h1M70.0 108.7h1M67.0 118.8h1M54.9 139.6h1M51.5 148.8h1M42.7 158.4h1M31.5 179.2h1M32.3 175.4h1M21.3 194.0h1M13.9 205.8h1M4.2 224.6h1M11.9 223.0h1M145.7 8.4h1M138.4 13.5h1M132.9 23.1h1M129.0 33.5h1M123.6 43.4h1M119.7 46.8h1M120.3 52.4h1M121.0 49.1h1M112.6 62.9h1M109.0 70.6h1M102.5 75.5h1M100.1 83.4h1M89.8 100.0h1M94.3 99.6h1M92.4 98.7h1M87.5 108.7h1M82.3 112.9h1M81.3 114.0h1M82.8 108.0h1M65.8 140.9h1M66.6 136.4h1M61.7 148.5h1M58.0 155.9h1M53.8 174.4h1M41.9 182.1h1M44.8 181.7h1M46.3 179.2h1M30.9 201.4h1M32.3 197.9h1M27.3 206.5h1M26.7 208.1h1M15.2 228.0h1M154.6 7.0h1M147.8 20.4h1M139.7 32.4h1M137.4 46.6h1M130.2 51.9h1M120.3 71.1h1M89.3 108.2h1M89.1 118.0h1M85.4 136.9h1M76.8 143.0h1M68.8 157.2h1M54.1 186.6h1M165.9 4.5h1M160.7 16.4h1M158.8 17.9h1M158.1 17.3h1M150.2 29.0h1M152.1 30.8h1M150.9 28.1h1M145.4 31.7h1M128.4 69.5h1M123.4 77.9h1M123.6 77.1h1M123.6 76.7h1M118.6 84.2h1M118.8 82.9h1M120.1 91.9h1M109.8 106.2h1M94.6 141.1h1M74.7 164.8h1M67.0 182.1h1M62.4 190.9h1M169.7 7.2h1M172.8 13.2h1M163.2 25.2h1M158.7 33.1h1M154.6 40.5h1M157.0 41.1h1M154.5 39.7h1M149.4 48.8h1M151.1 58.3h1M127.9 75.6h1M116.7 108.9h1M86.1 163.0h1M84.6 170.8h1M83.5 182.6h1M73.8 191.6h1M74.9 187.8h1M69.2 217.3h1M54.6 226.3h1M56.3 225.0h1M62.8 223.1h1M53.0 230.0h1M50.9 231.5h1M50.8 230.2h1M49.2 231.1h1M173.2 28.2h1M168.6 31.6h1M169.0 39.0h1M167.0 37.5h1M167.2 38.4h1M157.7 46.9h1M160.8 46.7h1M164.9 50.2h1M159.6 49.5h1M156.4 57.5h1M157.3 59.6h1M145.4 77.8h1M139.1 86.1h1M90.0 170.1h1M78.5 201.0h1M71.7 211.3h1M71.3 217.2h1M70.5 218.9h1M52.8 250.1h1M53.4 247.8h1M184.6 24.8h1M185.5 23.2h1M177.8 35.3h1M178.6 44.4h1M174.5 41.7h1M178.7 44.7h1M174.2 43.2h1M167.2 55.9h1M166.4 51.7h1M169.3 58.0h1M167.9 54.2h1M165.5 56.5h1M148.0 90.2h1M83.4 221.0h1M84.3 226.6h1M63.2 251.5h1M194.3 21.5h1M191.0 33.9h1M178.5 53.0h1M164.6 81.4h1M149.5 102.1h1M101.8 200.4h1M102.5 199.6h1M87.5 226.8h1M87.6 230.5h1M87.8 229.4h1M84.7 235.3h1M76.0 248.0h1M75.6 252.3h1M200.3 25.7h1M198.9 31.6h1M198.2 30.9h1M196.8 38.5h1M195.4 37.3h1M187.8 48.6h1M186.8 57.5h1M187.9 58.4h1M179.8 70.7h1M119.1 188.2h1M116.4 195.2h1M112.0 210.5h1M108.3 226.8h1M83.9 246.0h1M195.2 55.5h1M190.0 67.8h1M191.3 68.1h1M188.8 67.4h1M181.4 80.1h1M178.9 89.1h1M125.0 202.4h1M128.8 202.2h1M126.4 200.9h1M116.6 217.4h1M115.7 216.3h1M107.7 233.8h1M107.9 238.6h1M108.6 236.8h1M107.5 234.4h1M108.5 237.6h1M97.0 253.6h1M210.9 44.3h1M207.2 53.6h1M199.6 64.4h1M196.4 70.5h1M199.1 71.4h1M144.7 183.6h1M144.0 184.0h1M140.3 194.2h1M138.8 193.6h1M134.1 191.4h1M135.5 203.9h1M128.7 214.1h1M114.5 239.6h1M110.4 253.1h1M110.9 250.8h1M109.3 261.8h1M219.4 44.3h1M217.5 48.6h1M218.3 45.0h1M211.0 62.2h1M211.2 62.1h1M204.2 79.1h1M154.3 180.6h1M134.5 227.1h1M134.0 224.8h1M129.8 249.6h1M126.6 245.7h1M122.6 252.8h1M115.2 265.2h1M114.0 263.1h1M109.3 273.5h1M225.7 52.3h1M222.3 61.3h1M219.5 59.9h1M220.8 60.5h1M214.8 74.2h1M156.8 203.3h1M130.9 255.5h1M234.4 50.1h1M236.3 53.2h1M229.3 50.7h1M234.0 51.2h1M229.1 56.0h1M229.8 62.7h1M227.7 64.0h1M228.3 64.2h1M191.5 149.8h1M164.0 197.2h1M163.9 207.6h1M160.0 218.2h1M241.9 57.2h1M242.2 54.5h1M243.2 55.9h1M239.6 61.1h1M241.1 59.7h1M229.1 87.9h1M152.8 261.9h1M148.1 269.3h1M251.3 55.5h1M250.8 59.2h1M178.0 225.9h1M159.8 269.4h1M156.9 283.6h1M257.9 63.7h1M251.0 67.7h1M247.9 85.7h1M246.3 93.7h1M236.7 109.8h1M225.4 133.7h1M188.0 231.4h1M170.4 269.3h1M265.7 60.0h1M248.6 101.1h1M245.1 111.6h1M200.2 226.8h1M191.1 246.3h1M178.7 271.3h1M170.3 293.1h1M168.0 303.8h1M274.0 65.5h1M269.9 68.7h1M265.0 85.4h1M263.3 84.0h1M264.4 84.1h1M263.9 91.6h1M256.5 103.7h1M251.8 119.4h1M254.0 117.9h1M208.3 231.0h1M173.9 308.4h1M276.9 72.1h1M275.2 80.6h1M271.5 93.2h1M268.6 103.0h1M221.5 217.1h1M190.5 301.7h1M263.6 132.9h1M263.0 131.4h1M223.1 237.4h1M207.9 284.1h1M289.9 90.9h1M270.4 137.3h1M215.9 285.2h1M209.1 312.5h1M205.2 319.1h1M300.5 83.9h1M296.7 93.6h1M290.9 104.7h1M290.1 105.4h1M290.6 113.5h1M290.5 115.7h1M291.9 112.4h1M287.3 119.2h1M288.0 119.1h1M225.0 296.9h1M304.3 90.1h1M300.5 102.2h1M295.1 125.4h1M290.7 130.9h1M229.5 307.6h1M226.6 321.8h1M227.4 319.2h1M224.6 332.7h1M313.4 87.7h1M312.6 92.5h1M315.5 91.9h1M310.4 101.6h1M305.8 114.8h1M293.1 156.1h1M322.7 102.7h1M312.5 116.3h1M325.2 108.8h1M322.3 115.1h1M320.2 121.1h1M315.6 127.9h1M312.0 148.7h1M311.6 150.6h1M262.5 301.7h1M263.2 304.0h1M257.2 314.7h1M255.3 316.6h1M257.7 317.1h1M333.5 110.2h1M324.3 140.7h1M319.1 151.9h1M317.7 153.6h1M317.4 150.3h1M316.4 160.5h1M316.9 163.0h1M257.4 333.3h1M25.7 69.2h1M73.8 15.3h1M70.1 9.9h1M60.2 11.5h1M60.7 14.1h1M3.5 96.0h1M47.0 26.8h1M7.8 104.0h1M49.4 41.1h1M31.9 77.1h1M34.8 53.3h1M61.1 5.8h1M49.3 29.3h1M53.5 40.2h1M27.7 67.0h1M70.3 15.6h1M29.3 63.9h1M45.1 39.9h1M10.6 85.6h1M26.7 71.5h1M37.4 66.6h1M37.7 65.8h1M47.9 55.9h1M12.8 82.7h1M44.2 58.7h1M60.3 33.3h1M50.8 59.7h1M87.4 5.6h1M1.3 132.1h1M48.6 62.3h1M88.8 1.5h1M25.3 95.1h1M73.3 27.5h1M36.7 76.5h1M62.6 44.5h1M75.2 23.3h1M1.4 133.1h1M34.7 84.7h1M10.0 126.9h1M14.8 118.0h1M21.9 100.5h1M77.4 16.5h1M56.0 48.7h1M1.8 129.5h1M88.1 1.8h1M86.6 8.4h1M84.8 9.3h1M72.2 26.9h1M32.3 87.7h1M72.2 22.7h1M49.7 61.5h1M75.7 19.9h1M67.3 33.7h1M5.7 129.2h1M37.1 78.8h1M76.7 17.4h1M35.0 83.1h1M52.2 55.9h1M33.2 82.2h1M33.1 87.5h1M93.8 1.7h1M59.8 46.7h1M50.7 61.1h1M1.7 128.2h1M22.7 101.6h1M0.7 135.3h1M16.2 112.4h1M49.4 61.2h1M44.2 65.9h1M24.6 98.9h1M34.1 85.0h1M74.2 19.5h1M66.1 35.9h1"/>
<path stroke="#c0487d" d="M108.2 0.8h1M97.3 12.7h1M99.6 13.2h1M101.2 8.4h1M96.5 17.1h1M94.1 25.1h1M92.2 24.1h1M85.9 34.9h1M83.5 33.0h1M81.1 43.8h1M81.8 43.7h1M82.3 40.5h1M79.4 42.4h1M79.3 42.8h1M80.2 42.9h1M74.3 51.8h1M73.5 52.8h1M72.1 58.6h1M70.9 58.5h1M60.6 73.4h1M51.7 86.1h1M53.4 79.3h1M53.2 89.2h1M53.5 87.3h1M51.2 89.3h1M36.2 112.1h1M36.5 111.2h1M37.2 112.0h1M33.9 121.4h1M38.0 119.5h1M22.3 130.7h1M24.3 125.9h1M24.1 127.5h1M25.4 127.4h1M23.3 133.2h1M15.4 146.9h1M9.8 154.2h1M8.5 161.8h1M1.2 179.6h1M114.9 3.3h1M106.2 19.7h1M105.9 23.0h1M98.7 26.5h1M103.0 25.8h1M88.2 48.3h1M90.0 48.4h1M84.5 53.3h1M83.3 55.9h1M83.1 55.5h1M79.4 64.0h1M75.0 72.5h1M78.8 71.3h1M64.3 84.0h1M62.1 93.9h1M57.4 100.9h1M61.7 98.9h1M54.6 103.4h1M54.0 107.8h1M42.8 122.4h1M40.0 123.9h1M36.3 130.8h1M37.2 132.5h1M35.6 135.6h1M37.0 133.7h1M38.4 135.8h1M34.0 138.7h1M23.0 143.0h1M21.9 159.5h1M21.2 156.2h1M15.7 167.9h1M8.9 171.3h1M126.6 1.7h1M120.7 13.4h1M118.4 12.1h1M119.0 14.4h1M117.4 16.8h1M113.9 26.3h1M112.5 26.7h1M111.3 30.0h1M107.0 33.2h1M107.5 33.1h1M103.8 38.4h1M100.2 45.6h1M99.7 46.4h1M99.2 45.9h1M99.4 41.9h1M100.2 46.1h1M99.1 45.8h1M95.6 56.0h1M97.6 51.5h1M97.0 52.7h1M92.0 59.6h1M84.5 68.0h1M88.5 74.5h1M83.9 76.1h1M80.6 79.9h1M81.9 78.5h1M79.6 81.5h1M69.7 97.8h1M67.4 96.8h1M64.6 97.1h1M61.6 114.8h1M62.0 112.8h1M52.9 121.8h1M51.9 125.2h1M59.2 123.4h1M50.8 124.9h1M51.5 128.2h1M49.0 129.7h1M44.5 138.8h1M43.2 135.9h1M40.4 132.6h1M29.4 161.9h1M26.9 165.7h1M24.6 170.8h1M26.1 168.9h1M22.2 178.8h1M19.4 178.9h1M0.8 209.1h1M135.2 6.6h1M136.1 5.3h1M132.0 12.0h1M130.0 13.7h1M133.7 11.6h1M131.8 15.4h1M127.8 18.0h1M128.7 17.1h1M129.2 17.7h1M120.8 21.6h1M124.9 22.2h1M120.4 30.2h1M119.8 29.1h1M120.7 32.5h1M118.1 37.9h1M109.6 37.4h1M106.7 52.4h1M104.9 54.0h1M100.3 68.2h1M98.4 72.0h1M95.9 73.6h1M94.3 77.0h1M92.7 80.2h1M91.7 79.2h1M89.7 89.7h1M84.1 87.1h1M86.2 86.9h1M81.2 93.2h1M68.1 117.0h1M69.2 118.2h1M65.1 125.5h1M57.0 132.6h1M61.2 128.5h1M57.5 132.8h1M58.1 130.8h1M49.6 144.2h1M53.3 147.4h1M54.5 142.7h1M49.7 147.3h1M47.0 159.0h1M43.9 159.2h1M44.0 160.8h1M44.6 159.5h1M41.5 164.0h1M23.6 193.6h1M11.6 213.8h1M10.6 214.2h1M148.2 4.2h1M147.4 3.1h1M143.6 7.5h1M138.6 17.9h1M136.2 20.9h1M136.0 19.8h1M132.1 17.3h1M133.0 20.2h1M133.6 26.3h1M127.9 34.4h1M123.6 42.9h1M119.5 47.6h1M120.7 48.3h1M117.8 50.0h1M119.8 47.6h1M112.6 60.7h1M106.1 69.6h1M109.5 68.1h1M104.2 75.9h1M105.0 74.9h1M108.1 74.9h1M99.0 81.6h1M102.2 84.5h1M99.0 84.4h1M95.0 89.3h1M95.7 91.9h1M97.1 91.7h1M92.9 97.8h1M84.1 109.6h1M80.0 118.1h1M74.2 121.3h1M75.0 129.1h1M66.4 143.3h1M67.7 139.8h1M66.4 143.3h1M67.4 137.1h1M59.6 153.3h1M62.4 145.5h1M61.4 147.4h1M56.6 153.7h1M57.5 160.3h1M55.5 171.6h1M51.7 177.1h1M42.8 181.5h1M43.0 179.0h1M42.7 180.2h1M36.8 177.7h1M42.1 180.0h1M35.8 189.7h1M37.3 190.8h1M29.9 204.1h1M33.4 200.9h1M24.3 211.0h1M22.6 218.6h1M158.0 1.9h1M155.0 6.2h1M154.6 7.9h1M154.1 11.1h1M146.0 13.8h1M146.3 21.8h1M143.7 26.4h1M140.5 23.6h1M140.1 32.6h1M135.4 36.1h1M137.9 36.1h1M133.8 44.5h1M126.2 51.0h1M129.0 53.7h1M125.3 53.3h1M119.8 60.3h1M121.0 66.0h1M118.0 64.8h1M117.0 73.4h1M116.3 72.0h1M114.1 76.5h1M113.3 72.2h1M116.5 73.9h1M110.8 78.6h1M112.8 80.3h1M112.8 82.5h1M109.0 85.8h1M99.9 103.1h1M100.7 104.4h1M100.8 101.5h1M93.3 109.6h1M88.0 120.6h1M88.8 126.1h1M83.3 133.5h1M63.2 154.7h1M64.4 171.2h1M54.7 178.6h1M56.7 177.7h1M58.9 178.1h1M52.3 188.1h1M45.4 197.6h1M39.7 196.6h1M41.1 203.8h1M31.2 229.1h1M29.4 225.9h1M23.1 236.9h1M23.8 235.7h1M165.5 4.9h1M163.5 1.5h1M161.1 12.4h1M162.8 8.8h1M160.7 11.9h1M161.8 18.1h1M160.3 17.9h1M160.2 17.2h1M152.5 30.2h1M142.0 50.4h1M135.7 56.8h1M139.8 57.4h1M137.3 56.4h1M133.7 65.8h1M130.6 73.1h1M123.0 77.4h1M116.3 92.1h1M111.8 97.1h1M111.7 98.2h1M109.4 101.0h1M107.8 105.8h1M82.2 148.8h1M74.5 163.7h1M72.8 166.8h1M76.6 164.2h1M64.8 183.5h1M64.4 189.9h1M57.9 200.9h1M58.0 199.3h1M57.0 203.1h1M61.2 192.5h1M45.2 215.1h1M44.1 220.8h1M43.4 223.1h1M37.3 225.7h1M41.6 227.6h1M171.4 7.8h1M172.7 17.7h1M167.2 21.4h1M168.0 20.2h1M164.7 23.3h1M159.4 32.2h1M160.1 34.6h1M159.4 33.7h1M157.2 41.2h1M155.9 40.1h1M154.8 46.7h1M145.0 61.6h1M141.2 59.8h1M146.7 59.6h1M145.0 60.3h1M146.0 61.3h1M134.9 68.9h1M142.0 68.7h1M140.2 69.2h1M119.3 102.4h1M86.6 169.5h1M79.2 177.2h1M80.9 177.3h1M73.9 188.5h1M73.4 196.6h1M70.5 207.5h1M60.4 214.2h1M63.3 211.0h1M62.2 214.1h1M62.1 214.0h1M62.2 213.9h1M56.4 223.9h1M49.3 231.7h1M48.4 232.6h1M43.5 244.0h1M42.8 245.7h1M176.2 20.0h1M169.7 29.7h1M164.9 39.1h1M163.5 44.2h1M159.5 50.4h1M151.4 66.4h1M151.1 65.7h1M148.6 70.3h1M147.4 72.4h1M142.2 70.2h1M147.1 72.5h1M148.2 77.0h1M140.2 96.5h1M134.2 93.4h1M134.8 100.0h1M126.1 118.4h1M93.3 174.8h1M87.0 179.5h1M87.1 185.8h1M84.3 188.0h1M80.4 187.2h1M79.2 200.1h1M78.5 199.6h1M73.2 208.3h1M72.5 216.0h1M67.4 226.0h1M59.1 236.7h1M59.3 234.9h1M58.4 236.0h1M60.9 238.1h1M55.6 247.0h1M53.9 247.7h1M183.3 26.2h1M182.3 25.2h1M185.1 25.1h1M183.9 24.9h1M183.8 23.6h1M186.2 21.4h1M182.6 29.0h1M185.1 29.0h1M181.3 29.6h1M177.9 34.8h1M180.0 35.2h1M178.8 35.0h1M179.3 33.9h1M177.8 36.7h1M176.6 39.0h1M176.4 33.1h1M177.3 41.8h1M174.6 42.4h1M174.9 43.7h1M176.3 38.6h1M169.7 47.3h1M165.8 54.5h1M166.0 57.7h1M164.2 59.9h1M163.4 59.0h1M159.2 68.6h1M159.4 69.3h1M156.2 73.8h1M156.9 74.4h1M155.4 76.0h1M157.4 74.8h1M152.3 82.0h1M148.5 90.5h1M147.8 89.3h1M139.0 107.5h1M105.0 172.1h1M102.8 178.3h1M95.0 196.4h1M90.6 203.8h1M84.6 214.2h1M83.2 216.0h1M85.2 216.2h1M80.5 224.4h1M68.0 240.9h1M67.3 240.3h1M63.6 249.7h1M194.3 21.2h1M192.4 15.1h1M196.3 20.2h1M187.9 29.2h1M189.9 33.2h1M188.2 34.9h1M187.0 40.1h1M174.3 53.0h1M177.6 52.4h1M178.9 53.7h1M176.1 49.9h1M175.2 53.7h1M176.9 55.5h1M174.1 56.0h1M175.1 58.5h1M174.9 58.8h1M167.1 72.5h1M159.1 87.9h1M154.3 95.9h1M100.3 199.2h1M100.7 198.6h1M100.4 199.6h1M103.0 198.9h1M100.2 198.5h1M98.0 195.0h1M98.0 207.6h1M102.2 208.4h1M96.5 212.4h1M102.4 207.5h1M86.0 219.9h1M87.4 228.5h1M74.9 239.7h1M78.5 245.8h1M73.8 254.8h1M73.9 256.4h1M202.4 27.9h1M204.3 25.0h1M202.2 26.5h1M201.4 28.7h1M203.6 26.6h1M200.5 29.4h1M193.4 35.6h1M191.2 35.8h1M195.0 42.8h1M188.4 47.9h1M189.1 49.5h1M182.3 49.9h1M188.1 49.4h1M187.0 58.3h1M184.8 57.3h1M186.3 58.3h1M185.8 57.1h1M188.3 59.1h1M185.2 54.8h1M183.3 55.7h1M182.5 62.8h1M183.7 62.2h1M178.1 70.8h1M176.3 72.3h1M178.3 71.8h1M176.8 78.3h1M120.7 187.6h1M114.9 193.3h1M111.6 204.4h1M101.5 223.7h1M81.8 261.7h1M206.3 33.5h1M203.8 43.6h1M200.7 47.8h1M195.7 55.3h1M197.9 53.5h1M190.4 56.7h1M199.1 52.0h1M189.9 68.1h1M186.8 73.5h1M184.3 75.3h1M183.4 79.8h1M183.1 81.3h1M178.9 89.8h1M145.8 165.5h1M135.2 186.1h1M134.9 181.3h1M126.0 200.8h1M122.5 196.2h1M126.9 198.9h1M119.3 213.4h1M113.0 223.9h1M115.7 214.3h1M116.9 216.6h1M111.7 226.4h1M110.8 230.5h1M104.8 231.8h1M109.5 240.6h1M98.1 253.2h1M94.8 265.5h1M212.7 38.3h1M212.5 37.8h1M209.9 44.0h1M210.4 43.2h1M211.9 52.5h1M206.8 63.2h1M201.8 64.4h1M200.7 65.6h1M201.2 69.9h1M199.1 78.8h1M195.6 77.8h1M194.5 80.7h1M190.9 86.8h1M189.5 90.7h1M187.1 91.7h1M161.6 145.7h1M141.2 186.8h1M142.7 185.6h1M138.6 194.1h1M139.2 189.7h1M140.9 191.4h1M128.6 214.4h1M125.9 220.1h1M128.6 220.2h1M109.3 252.5h1M108.8 256.6h1M102.7 271.3h1M104.1 272.8h1M215.9 45.6h1M215.5 42.9h1M214.8 44.6h1M216.4 42.9h1M218.1 49.9h1M219.2 45.4h1M219.0 49.8h1M214.1 57.1h1M213.8 56.2h1M215.5 56.1h1M214.0 55.5h1M213.9 54.6h1M207.9 69.4h1M207.4 76.8h1M207.5 76.7h1M173.0 141.5h1M152.3 180.4h1M150.3 190.2h1M146.2 203.2h1M149.4 203.3h1M139.9 214.4h1M140.4 214.5h1M138.0 215.3h1M141.6 215.0h1M134.0 226.1h1M129.2 233.7h1M129.1 233.3h1M120.0 243.9h1M131.9 245.1h1M127.6 244.0h1M121.8 245.8h1M121.2 255.2h1M117.2 254.9h1M115.1 263.7h1M109.7 261.7h1M113.5 264.4h1M114.4 266.1h1M110.7 274.2h1M230.4 41.7h1M227.7 49.0h1M225.3 51.1h1M220.7 59.6h1M219.1 72.9h1M212.8 82.4h1M163.0 184.7h1M156.2 201.9h1M157.6 204.3h1M152.3 213.6h1M150.9 213.1h1M151.9 209.9h1M146.0 224.7h1M145.6 226.6h1M137.0 244.7h1M131.9 251.9h1M134.5 249.2h1M125.0 270.4h1M119.6 281.0h1M120.3 281.1h1M238.6 46.2h1M233.6 50.4h1M232.7 51.0h1M232.6 52.2h1M235.7 50.4h1M235.4 50.6h1M233.5 50.7h1M234.2 49.6h1M232.0 59.2h1M233.9 59.6h1M233.0 58.5h1M233.7 58.1h1M229.1 65.1h1M219.1 76.8h1M164.7 205.4h1M161.1 225.7h1M159.7 220.9h1M157.4 228.1h1M145.6 245.1h1M141.8 247.6h1M144.0 261.9h1M137.3 264.0h1M141.7 266.3h1M140.7 266.1h1M133.9 274.8h1M133.0 276.0h1M135.2 277.4h1M242.7 49.0h1M240.4 48.6h1M243.9 49.8h1M243.7 55.1h1M244.0 54.6h1M243.3 55.6h1M242.3 55.0h1M235.4 67.0h1M146.9 269.0h1M143.5 279.7h1M142.9 277.9h1M140.0 284.6h1M246.8 66.2h1M246.2 65.4h1M245.1 71.4h1M168.0 260.3h1M162.4 269.8h1M146.0 290.1h1M257.6 63.9h1M256.3 58.4h1M250.7 77.6h1M250.3 79.6h1M240.1 101.0h1M197.5 206.6h1M163.8 285.9h1M162.3 287.0h1M257.4 79.9h1M254.9 98.7h1M241.6 119.9h1M178.5 272.5h1M273.7 65.9h1M271.1 69.2h1M272.3 76.7h1M267.2 84.0h1M266.2 83.2h1M257.1 103.9h1M190.3 284.1h1M278.4 68.6h1M275.7 81.7h1M268.4 95.6h1M270.1 93.0h1M268.1 103.1h1M265.0 107.4h1M264.2 106.5h1M263.4 105.7h1M201.5 266.7h1M290.1 73.7h1M278.0 84.4h1M275.5 105.1h1M267.1 124.5h1M234.2 213.8h1M221.7 236.8h1M195.9 310.0h1M288.6 90.1h1M289.9 90.6h1M288.8 90.2h1M290.0 90.2h1M288.5 95.8h1M284.4 109.5h1M281.5 117.0h1M279.6 116.8h1M280.7 115.7h1M274.1 133.0h1M272.1 136.9h1M211.3 299.6h1M205.2 321.9h1M297.5 83.4h1M296.8 100.3h1M291.0 109.0h1M290.9 106.0h1M293.5 102.8h1M292.0 106.4h1M291.2 113.6h1M287.3 119.2h1M286.1 121.7h1M280.3 131.2h1M268.9 171.8h1M245.7 235.7h1M212.3 327.0h1M308.3 84.4h1M297.4 116.1h1M296.6 117.0h1M291.6 131.2h1M316.4 94.0h1M313.2 91.8h1M309.0 99.9h1M308.4 100.2h1M309.0 100.0h1M308.2 109.3h1M306.3 113.0h1M305.2 120.4h1M293.7 147.1h1M295.0 142.1h1M320.4 99.9h1M315.3 109.9h1M311.7 117.1h1M306.6 139.0h1M298.3 147.7h1M303.0 153.4h1M299.0 163.2h1M250.4 301.9h1M327.3 102.0h1M327.5 100.9h1M327.5 99.9h1M327.3 100.3h1M324.8 110.4h1M325.6 107.1h1M321.5 120.6h1M319.0 117.6h1M318.3 129.7h1M314.9 135.4h1M329.7 118.0h1M327.3 125.4h1M329.9 126.4h1M326.9 132.3h1M323.9 138.6h1M268.7 318.7h1M61.5 10.7h1M70.5 7.4h1M20.6 68.6h1M46.0 29.9h1M40.4 56.6h1M11.0 111.4h1M10.2 111.9h1M36.8 44.1h1M56.7 13.2h1M26.1 60.5h1M2.1 117.5h1M26.9 58.2h1M73.4 12.0h1M23.5 77.6h1M18.7 90.3h1M29.0 62.1h1M71.0 20.1h1M60.3 8.5h1M26.9 84.4h1M0.5 111.7h1M47.4 47.1h1M64.5 38.9h1M12.3 123.6h1M48.1 69.9h1M45.0 72.5h1M23.5 105.8h1M71.8 33.4h1M55.0 58.7h1M24.3 106.7h1M35.4 89.5h1M37.4 84.0h1M66.5 42.0h1M29.2 96.5h1M74.1 30.6h1M1.7 141.6h1M48.5 66.9h1M61.8 48.3h1M87.8 7.7h1M58.0 54.8h1M91.2 6.7h1M72.2 34.6h1M80.4 22.7h1M31.8 91.2h1M88.3 4.5h1M64.6 40.5h1M20.1 115.2h1M88.5 10.7h1M71.0 29.7h1M190.5 19.7h1M282.2 69.7h1M199.3 24.7h1M270.4 63.6h1M159.6 3.4h1M321.4 93.9h1M158.1 1.8h1M317.7 90.6h1M320.5 90.4h1M161.1 4.3h1M311.9 85.9h1M225.2 40.4h1M253.4 56.2h1M265.8 62.9h1M275.6 66.0h1M249.5 52.0h1M206.8 28.2h1M283.4 74.1h1M256.7 56.7h1M170.8 8.3h1M180.9 15.4h1M244.5 50.5h1M241.7 48.7h1M286.5 72.2h1M193.4 20.1h1M255.1 54.9h1M217.0 33.5h1M336.4 99.3h1M180.1 14.5h1M313.7 87.6h1M275.7 66.2h1M237.9 43.9h1M324.5 94.0h1M199.3 26.6h1M285.9 75.5h1M312.0 86.6h1M303.4 82.0h1M160.4 3.3h1M329.3 97.7h1M268.1 62.1h1M211.8 31.5h1M291.3 76.1h1M256.9 55.9h1M179.2 16.0h1M170.4 8.4h1M304.3 81.8h1M167.1 7.5h1M156.8 1.4h1M303.3 81.5h1M324.0 92.1h1M200.5 27.4h1M331.7 109.1h1M329.2 113.1h1M323.5 112.1h1M330.5 97.6h1M328.9 110.6h1M330.6 100.8h1M336.7 98.8h1M334.3 107.2h1M319.2 108.6h1M317.3 102.1h1M329.5 100.7h1M322.9 101.7h1M130.8 282.0h1M133.4 284.8h1M196.6 315.0h1M118.3 278.0h1M101.2 268.8h1M139.0 287.0h1M107.5 272.0h1M250.3 340.5h1M155.7 296.9h1M129.3 283.6h1M33.3 236.9h1M102.0 268.7h1M252.7 343.7h1M176.4 302.3h1M147.1 288.8h1M60.7 250.9h1M220.5 326.8h1M172.8 304.0h1M95.3 266.7h1M164.4 301.3h1M71.5 252.6h1M190.2 311.9h1M200.0 317.7h1M132.6 283.4h1M166.6 302.0h1M141.6 286.3h1M224.5 330.6h1M251.5 342.8h1M180.7 307.9h1M112.5 276.2h1M132.8 283.3h1M220.8 328.6h1M59.8 247.2h1M35.9 238.8h1M71.0 250.9h1M150.0 293.5h1M218.5 322.6h1M129.3 280.4h1M25.9 230.0h1M0.5 219.2h1M26.2 234.3h1M226.8 330.2h1M63.5 248.5h1M246.3 336.1h1"/>
<path stroke="#a17ea6" d="M106.9 5.6h1M104.8 2.4h1M100.5 10.0h1M100.3 11.0h1M95.5 17.2h1M80.7 44.1h1M86.1 42.4h1M72.7 50.6h1M74.6 50.3h1M68.0 58.0h1M61.6 73.9h1M54.2 80.2h1M45.9 93.0h1M45.0 103.9h1M40.6 107.1h1M34.2 107.9h1M31.4 119.0h1M34.4 114.4h1M5.9 163.4h1M117.4 4.9h1M114.5 7.5h1M105.3 22.2h1M103.0 20.7h1M104.9 21.0h1M97.0 26.9h1M95.3 34.7h1M91.1 40.5h1M91.1 42.3h1M81.4 57.9h1M79.6 62.4h1M74.2 69.0h1M67.2 82.8h1M65.9 84.4h1M63.8 84.7h1M57.0 110.5h1M51.8 108.2h1M38.0 131.1h1M35.3 135.4h1M36.0 133.1h1M24.8 148.7h1M27.3 148.3h1M10.8 173.0h1M10.1 174.7h1M3.7 184.2h1M2.1 188.3h1M127.5 1.9h1M127.3 0.8h1M121.5 13.1h1M120.6 12.7h1M110.5 25.1h1M108.0 29.4h1M108.0 33.0h1M94.7 44.5h1M101.2 45.9h1M101.5 46.1h1M102.5 44.6h1M98.8 51.0h1M95.3 53.0h1M94.3 62.6h1M92.1 60.5h1M91.6 59.3h1M90.2 54.6h1M87.6 64.9h1M78.1 73.7h1M77.8 74.4h1M83.2 74.6h1M83.3 74.7h1M75.7 87.8h1M76.2 86.3h1M67.4 97.9h1M65.2 108.0h1M56.1 111.2h1M61.8 113.1h1M63.9 114.0h1M61.0 115.3h1M54.3 123.3h1M53.5 122.5h1M55.9 119.0h1M43.3 136.8h1M44.0 135.5h1M31.9 147.9h1M27.4 157.6h1M19.2 187.5h1M13.2 192.0h1M2.0 207.8h1M134.3 9.4h1M133.8 12.7h1M132.8 14.0h1M122.7 15.3h1M120.9 29.5h1M120.6 29.4h1M124.7 27.6h1M116.4 32.7h1M124.6 33.8h1M116.2 37.4h1M115.4 34.8h1M101.2 64.9h1M94.7 76.8h1M92.8 83.0h1M92.2 79.6h1M86.2 90.4h1M86.6 84.6h1M82.0 92.9h1M78.7 92.3h1M78.3 100.2h1M75.6 110.4h1M69.7 126.4h1M56.9 136.2h1M49.1 148.8h1M50.1 148.8h1M45.9 160.0h1M41.5 161.7h1M46.2 159.1h1M13.3 215.2h1M6.4 229.3h1M148.7 3.4h1M138.4 17.7h1M143.7 19.8h1M144.3 16.5h1M143.2 19.2h1M130.8 34.7h1M126.7 31.1h1M124.2 43.2h1M120.5 47.7h1M120.2 45.8h1M114.2 48.3h1M116.3 47.6h1M117.5 55.3h1M110.7 60.1h1M107.5 70.1h1M108.7 78.2h1M104.0 76.5h1M101.0 82.6h1M81.5 120.4h1M77.4 121.2h1M73.6 129.6h1M71.8 136.8h1M49.8 170.2h1M46.3 172.3h1M46.1 177.5h1M45.4 177.2h1M48.0 171.6h1M44.8 177.3h1M46.4 173.6h1M42.9 181.3h1M44.9 177.5h1M36.7 192.0h1M33.0 197.4h1M25.1 209.1h1M31.3 212.3h1M25.5 208.0h1M13.0 230.1h1M14.5 227.1h1M14.6 230.0h1M155.2 6.5h1M154.6 7.6h1M150.0 13.0h1M149.3 15.5h1M150.8 10.9h1M146.5 19.2h1M147.9 21.0h1M148.0 20.1h1M149.0 18.0h1M135.3 37.1h1M131.9 47.4h1M135.8 42.7h1M127.9 52.6h1M128.5 52.4h1M127.7 51.8h1M126.7 59.5h1M120.6 65.9h1M116.0 66.6h1M120.3 64.2h1M120.0 66.4h1M116.4 73.4h1M117.1 73.2h1M111.9 80.6h1M100.0 94.2h1M99.5 105.0h1M101.3 105.0h1M97.5 103.0h1M88.5 119.6h1M83.0 126.6h1M56.2 178.0h1M57.2 179.0h1M49.0 180.0h1M52.1 187.9h1M53.9 187.2h1M31.0 224.9h1M164.1 5.6h1M165.3 5.5h1M167.2 7.6h1M165.9 2.3h1M169.7 6.1h1M166.7 2.4h1M162.2 12.1h1M162.2 6.1h1M161.1 18.3h1M160.0 17.1h1M153.3 23.3h1M152.8 31.9h1M150.8 30.0h1M150.0 35.0h1M142.2 45.6h1M147.1 44.3h1M141.9 49.3h1M144.0 51.3h1M143.0 50.9h1M135.0 56.0h1M136.4 56.9h1M127.1 70.9h1M124.1 76.4h1M124.5 74.2h1M120.1 83.8h1M119.3 87.9h1M112.9 97.4h1M105.6 100.6h1M79.8 156.3h1M78.3 165.7h1M63.1 191.1h1M61.0 192.6h1M62.1 200.5h1M44.5 224.7h1M45.2 219.2h1M35.5 234.6h1M169.4 10.0h1M172.1 18.2h1M169.1 21.2h1M168.4 20.7h1M165.7 21.3h1M160.4 23.7h1M165.2 27.5h1M159.5 33.7h1M156.5 41.8h1M151.4 49.3h1M148.9 45.3h1M149.0 54.4h1M150.0 57.2h1M150.3 56.3h1M145.3 59.7h1M134.4 75.4h1M124.4 93.2h1M116.8 111.3h1M108.2 118.8h1M76.8 183.5h1M73.0 188.8h1M69.1 200.3h1M66.5 203.9h1M60.1 213.7h1M60.8 217.5h1M63.9 217.5h1M59.1 229.8h1M47.6 229.9h1M40.0 247.9h1M181.7 11.3h1M181.3 13.7h1M176.3 20.4h1M166.2 30.2h1M166.8 37.4h1M167.6 37.7h1M157.7 51.3h1M155.6 56.6h1M153.8 56.1h1M154.6 57.5h1M149.1 69.1h1M154.3 62.2h1M150.9 66.4h1M146.4 72.4h1M145.4 72.4h1M145.4 69.3h1M145.2 79.1h1M146.4 78.8h1M140.8 87.8h1M141.7 86.5h1M136.2 95.5h1M128.6 100.6h1M130.9 105.1h1M121.0 123.5h1M74.2 208.1h1M73.2 208.5h1M68.8 218.4h1M74.0 211.2h1M57.6 243.3h1M186.9 17.8h1M187.5 16.3h1M185.7 25.0h1M184.6 23.1h1M184.2 22.6h1M186.2 21.6h1M182.1 28.7h1M174.2 33.4h1M179.9 34.0h1M175.6 35.2h1M178.6 34.1h1M174.9 41.9h1M174.3 40.5h1M167.5 47.7h1M167.9 53.9h1M162.4 58.5h1M165.3 53.3h1M160.5 72.9h1M162.0 70.4h1M158.1 69.1h1M155.1 73.0h1M150.0 84.8h1M152.0 80.9h1M150.7 78.6h1M148.7 90.4h1M146.0 97.0h1M99.6 182.9h1M95.1 195.0h1M94.8 194.2h1M78.7 223.8h1M67.2 240.0h1M190.6 33.4h1M184.3 40.2h1M185.0 38.6h1M187.2 41.4h1M179.3 45.5h1M182.5 50.1h1M183.3 46.8h1M179.6 52.9h1M177.1 55.5h1M173.3 53.9h1M179.9 47.2h1M164.1 81.5h1M153.0 101.9h1M150.0 109.0h1M120.5 165.4h1M118.5 164.5h1M114.5 172.0h1M107.5 191.7h1M101.3 200.8h1M100.9 201.2h1M91.0 219.0h1M81.6 235.4h1M76.1 246.5h1M76.2 245.2h1M80.1 248.3h1M200.6 34.1h1M203.6 31.3h1M197.4 32.0h1M199.2 31.0h1M195.0 37.2h1M195.3 39.6h1M195.3 38.2h1M197.4 46.2h1M188.6 47.9h1M187.3 57.7h1M172.4 84.1h1M170.8 85.3h1M170.6 89.7h1M169.1 86.6h1M131.0 174.1h1M124.1 183.6h1M112.2 201.7h1M111.1 205.5h1M110.4 198.0h1M112.7 205.3h1M107.6 213.0h1M91.6 234.1h1M100.9 232.0h1M87.1 252.3h1M83.1 260.6h1M203.9 37.6h1M205.2 42.3h1M201.1 43.6h1M196.9 53.4h1M190.9 57.3h1M193.1 56.8h1M195.3 66.5h1M188.5 66.9h1M184.6 70.6h1M184.8 73.3h1M185.3 74.2h1M180.8 73.7h1M185.8 72.3h1M184.3 80.5h1M182.4 79.9h1M181.3 79.6h1M176.6 95.4h1M171.1 100.2h1M129.6 189.4h1M122.4 209.0h1M111.8 215.6h1M115.5 219.2h1M111.4 227.2h1M107.6 234.5h1M106.2 237.7h1M106.8 240.0h1M104.3 240.8h1M113.7 238.1h1M102.6 245.3h1M99.5 249.0h1M98.7 253.6h1M93.3 255.9h1M214.7 35.8h1M214.9 38.6h1M210.8 43.4h1M207.0 52.0h1M203.3 57.4h1M200.0 68.6h1M200.7 65.5h1M197.2 74.1h1M183.7 99.8h1M145.6 182.9h1M148.2 183.5h1M143.8 195.7h1M130.5 214.3h1M128.5 215.6h1M127.1 214.0h1M126.3 221.9h1M127.5 234.0h1M112.4 244.6h1M106.3 263.2h1M222.8 33.0h1M222.7 40.1h1M217.5 43.7h1M211.5 52.0h1M213.4 56.5h1M213.7 56.5h1M213.5 56.6h1M207.2 69.8h1M157.9 171.4h1M155.8 179.1h1M137.3 215.2h1M137.3 216.8h1M134.1 236.6h1M119.9 255.3h1M117.4 259.4h1M110.4 276.2h1M110.2 275.0h1M226.0 56.9h1M221.1 60.2h1M221.7 60.4h1M160.6 208.3h1M158.1 203.7h1M144.9 221.6h1M149.8 228.3h1M140.6 243.2h1M140.5 239.2h1M132.1 252.0h1M126.0 266.6h1M125.6 271.0h1M233.6 50.4h1M234.0 49.8h1M232.3 50.1h1M237.9 50.1h1M238.0 52.0h1M233.2 49.9h1M233.3 50.7h1M235.0 50.4h1M232.0 51.1h1M234.3 49.3h1M234.6 48.2h1M232.7 50.0h1M234.7 57.0h1M233.4 58.4h1M227.0 70.3h1M221.8 77.8h1M174.4 191.7h1M167.2 206.3h1M161.6 205.7h1M158.5 225.0h1M155.7 225.9h1M152.3 235.8h1M135.0 273.7h1M140.0 263.4h1M138.7 265.4h1M130.0 285.0h1M243.6 50.2h1M243.5 59.3h1M243.6 53.5h1M242.6 54.3h1M240.5 61.7h1M235.7 69.5h1M173.5 210.4h1M166.9 223.9h1M167.3 228.6h1M165.6 232.0h1M159.1 242.1h1M152.0 259.6h1M139.2 287.2h1M251.3 51.3h1M256.6 50.8h1M246.8 67.9h1M244.8 69.5h1M244.8 71.6h1M248.4 73.8h1M244.2 75.8h1M244.0 74.3h1M241.4 77.9h1M234.2 95.4h1M230.2 105.2h1M224.3 114.3h1M230.9 113.5h1M178.2 225.5h1M162.3 260.6h1M162.5 262.1h1M155.6 277.4h1M257.9 55.1h1M255.8 51.1h1M259.5 56.6h1M258.1 63.6h1M229.1 124.9h1M192.6 220.0h1M180.7 241.6h1M171.5 270.2h1M162.1 286.7h1M267.5 60.6h1M265.9 70.2h1M253.7 88.0h1M252.1 95.3h1M252.6 102.1h1M192.4 245.2h1M180.2 268.3h1M182.0 265.7h1M176.0 280.8h1M170.4 297.0h1M168.0 302.2h1M274.6 66.4h1M273.2 64.7h1M268.9 69.9h1M270.0 80.2h1M264.9 91.0h1M259.4 105.0h1M259.3 110.8h1M254.4 111.7h1M252.1 118.5h1M251.4 117.6h1M248.2 137.9h1M242.4 141.3h1M227.5 176.8h1M208.3 230.1h1M208.4 229.1h1M207.0 229.5h1M187.3 280.8h1M177.8 295.3h1M276.2 81.6h1M264.7 107.3h1M222.0 217.2h1M205.2 260.9h1M203.6 260.7h1M200.8 268.6h1M195.4 293.3h1M190.3 301.6h1M190.2 299.5h1M188.6 302.2h1M187.7 311.4h1M280.1 90.9h1M281.6 93.9h1M229.5 228.5h1M224.2 234.8h1M219.7 250.1h1M196.2 306.8h1M290.5 88.0h1M288.5 89.1h1M288.1 91.5h1M286.0 103.3h1M284.0 110.1h1M281.2 117.1h1M279.2 116.9h1M278.7 116.1h1M276.7 123.6h1M230.5 254.3h1M227.4 261.0h1M223.0 270.7h1M205.4 321.9h1M302.2 78.4h1M301.3 75.2h1M295.3 93.0h1M296.1 91.4h1M291.6 106.1h1M292.2 106.2h1M291.2 112.0h1M286.6 118.2h1M287.9 117.1h1M236.7 257.9h1M227.6 283.1h1M221.1 306.2h1M214.8 315.9h1M211.9 326.6h1M308.8 82.6h1M302.9 99.1h1M300.1 101.8h1M300.7 100.9h1M245.4 260.5h1M229.6 308.9h1M225.9 317.9h1M226.1 318.6h1M313.7 92.9h1M307.8 98.7h1M309.7 99.7h1M307.5 115.1h1M307.3 113.3h1M301.6 128.4h1M294.8 142.2h1M241.8 294.0h1M236.7 311.8h1M234.8 327.4h1M322.9 92.6h1M321.2 91.0h1M319.1 93.7h1M311.9 117.8h1M308.1 128.9h1M308.1 129.7h1M308.4 138.4h1M302.6 148.2h1M256.9 286.5h1M248.8 305.9h1M247.6 319.0h1M243.0 327.3h1M327.3 91.9h1M331.4 93.8h1M324.7 109.7h1M328.1 109.8h1M319.9 123.7h1M318.5 132.1h1M316.6 130.8h1M314.5 134.9h1M312.3 141.6h1M313.3 141.4h1M309.0 149.1h1M307.7 159.1h1M269.7 277.4h1M321.9 138.9h1M320.0 152.9h1M317.0 168.5h1M267.1 316.8h1M261.6 335.4h1M259.4 337.2h1M59.7 25.0h1M74.6 10.0h1M43.6 41.7h1M10.8 90.4h1M15.5 97.4h1M37.0 69.1h1M65.4 17.8h1M72.1 17.0h1M15.7 83.2h1M4.0 102.8h1M0.5 119.1h1M36.8 55.9h1M27.9 62.8h1M55.6 31.4h1M50.3 40.1h1M60.0 38.7h1M53.7 47.3h1M48.7 36.7h1M20.0 77.9h1M59.6 14.3h1M55.0 53.6h1M74.9 18.0h1M43.7 69.0h1M7.7 121.0h1M75.1 23.6h1M56.2 47.1h1M1.4 130.0h1M35.5 79.7h1M0.2 136.6h1M46.6 61.2h1M48.8 63.9h1M39.3 76.1h1M61.2 42.4h1M35.9 78.3h1M17.2 110.5h1M82.3 13.6h1M60.8 42.3h1M60.8 43.3h1M82.3 6.0h1M14.1 110.7h1M53.6 52.6h1M10.1 115.4h1M7.4 123.2h1M44.9 69.0h1M42.0 74.4h1M59.6 44.9h1M53.5 51.9h1M28.2 90.4h1M76.6 19.8h1M12.9 121.1h1M86.1 0.6h1M46.8 66.0h1M15.5 108.7h1M34.8 85.6h1M38.7 76.3h1M37.0 75.0h1M67.8 29.4h1M36.7 78.9h1M75.5 17.6h1M57.0 46.0h1M83.2 1.1h1M56.0 53.9h1M4.6 122.2h1M8.8 123.1h1M33.5 83.1h1M13.3 114.5h1M49.3 61.3h1M7.2 127.1h1M77.5 22.1h1M2.6 130.4h1M58.6 44.9h1M40.4 72.4h1M20.6 103.4h1M63.7 35.3h1M86.9 4.0h1M84.7 5.8h1M18.2 106.5h1M51.0 51.7h1M81.4 10.2h1M44.9 61.8h1M71.7 26.0h1M57.7 52.0h1M37.0 75.2h1M59.9 45.7h1M31.5 88.6h1M80.6 10.0h1M83.8 8.5h1M72.2 27.6h1M37.0 79.8h1M61.2 41.8h1M70.5 26.1h1M2.7 135.4h1M16.4 111.6h1M29.4 91.0h1M3.3 135.1h1M23.7 96.7h1M11.4 115.2h1M29.7 87.9h1M2.5 131.5h1M13.2 115.8h1M67.0 35.2h1M48.1 57.1h1M49.5 58.5h1M75.6 18.5h1M78.2 18.1h1M16.9 110.4h1M49.7 59.0h1M115.7 276.4h1M48.8 244.8h1M225.9 330.9h1M40.9 241.3h1M75.4 257.2h1M149.9 292.4h1M82.8 254.6h1M76.5 257.1h1M1.9 221.4h1M70.6 255.5h1M114.1 272.7h1M47.4 242.9h1M253.2 339.5h1M24.0 230.7h1M117.1 278.2h1M194.3 314.7h1M38.0 236.9h1M126.8 282.6h1M102.7 266.1h1M97.4 266.6h1M100.0 268.2h1M198.1 313.3h1M112.5 274.1h1M159.0 293.3h1M162.7 295.9h1M145.2 292.0h1M90.2 264.1h1M1.0 221.2h1M21.2 226.4h1M205.9 319.3h1M96.4 262.8h1M100.2 270.1h1M66.0 253.3h1"/>
<path stroke="#7664a3" d="M104.2 4.8h1M101.2 10.1h1M101.3 10.9h1M103.4 8.1h1M99.5 13.4h1M94.1 14.7h1M91.4 27.6h1M89.1 32.0h1M89.0 30.6h1M85.6 34.5h1M81.6 43.4h1M76.7 39.0h1M69.2 59.0h1M54.4 79.0h1M54.8 79.3h1M53.8 78.9h1M17.6 139.8h1M10.9 151.9h1M117.7 3.4h1M112.4 9.3h1M109.3 9.8h1M107.6 14.0h1M106.2 9.2h1M105.6 22.7h1M98.7 31.7h1M93.6 34.1h1M90.6 44.9h1M79.5 61.3h1M80.9 59.6h1M80.6 60.9h1M68.7 75.5h1M63.9 96.8h1M61.6 94.1h1M56.3 105.8h1M53.9 107.5h1M49.4 104.7h1M53.2 107.6h1M42.4 135.3h1M33.9 131.7h1M26.1 143.1h1M28.3 145.2h1M19.0 160.8h1M13.5 166.1h1M9.9 174.1h1M10.0 175.4h1M122.2 8.2h1M123.9 17.5h1M120.2 12.9h1M117.5 16.7h1M112.8 27.2h1M106.8 33.7h1M107.7 32.6h1M100.4 45.9h1M100.2 47.0h1M100.3 47.4h1M98.7 45.4h1M99.0 42.2h1M92.8 53.1h1M96.5 63.2h1M91.4 54.9h1M87.5 67.2h1M85.0 67.8h1M83.6 73.4h1M84.7 76.5h1M81.1 77.1h1M83.3 74.1h1M78.9 83.3h1M82.0 79.3h1M68.5 92.9h1M64.1 105.9h1M52.2 128.7h1M43.0 138.1h1M35.5 152.9h1M29.3 162.5h1M19.9 177.9h1M7.6 198.6h1M133.7 5.6h1M131.9 11.6h1M132.3 11.4h1M133.0 11.6h1M126.7 17.1h1M125.2 19.3h1M122.6 29.9h1M115.6 39.5h1M106.9 43.9h1M111.2 44.9h1M106.6 56.2h1M98.5 67.3h1M92.4 77.7h1M86.2 82.6h1M88.1 87.6h1M76.8 101.5h1M77.7 101.3h1M68.3 123.8h1M60.1 133.4h1M51.8 145.5h1M43.4 157.2h1M28.8 169.9h1M29.1 174.2h1M33.8 177.1h1M25.6 194.3h1M20.8 196.9h1M23.2 194.1h1M25.1 191.5h1M16.6 209.6h1M13.7 211.3h1M13.3 219.1h1M140.4 16.2h1M135.3 21.9h1M134.2 28.1h1M133.0 27.1h1M124.4 42.1h1M124.7 43.4h1M122.3 54.8h1M116.2 54.8h1M113.7 57.8h1M112.0 64.3h1M110.8 61.9h1M107.9 71.4h1M106.8 71.0h1M103.9 74.7h1M106.6 73.2h1M102.5 75.0h1M95.9 93.3h1M80.2 117.3h1M82.5 115.0h1M82.8 111.8h1M76.0 120.4h1M67.7 144.5h1M68.5 139.7h1M62.5 148.9h1M60.3 164.8h1M47.0 176.6h1M38.4 193.8h1M30.3 203.7h1M13.1 227.4h1M147.0 11.4h1M151.7 12.1h1M149.4 19.1h1M143.5 25.6h1M135.2 38.9h1M123.3 54.3h1M129.4 53.6h1M128.9 50.9h1M116.1 73.2h1M109.5 84.9h1M98.5 107.2h1M100.0 102.8h1M88.9 118.8h1M80.9 133.4h1M80.0 144.5h1M52.2 186.9h1M52.5 184.5h1M44.0 197.7h1M39.9 205.0h1M166.2 4.2h1M161.2 10.5h1M159.9 12.2h1M158.7 17.8h1M161.5 18.7h1M147.6 32.9h1M145.0 31.8h1M142.9 49.9h1M133.1 63.5h1M122.9 75.8h1M127.9 73.8h1M114.0 98.7h1M107.1 108.6h1M66.7 181.6h1M42.3 229.4h1M38.7 228.8h1M38.2 234.9h1M40.1 228.1h1M173.9 9.7h1M165.2 23.8h1M158.3 34.8h1M159.2 35.4h1M161.5 32.2h1M155.6 39.8h1M155.4 39.4h1M157.3 39.9h1M151.3 48.8h1M145.4 61.2h1M139.8 71.0h1M142.4 64.2h1M137.0 70.6h1M128.8 85.1h1M125.8 95.8h1M125.3 99.7h1M81.1 178.9h1M77.7 179.6h1M80.9 176.1h1M55.6 233.7h1M174.2 22.6h1M172.8 33.1h1M165.7 37.8h1M160.5 44.3h1M155.8 56.0h1M157.4 54.3h1M155.1 57.9h1M153.9 53.8h1M148.4 72.7h1M136.5 93.7h1M91.9 174.5h1M88.3 179.4h1M75.0 204.3h1M77.3 197.5h1M76.7 197.3h1M78.6 199.9h1M72.0 210.7h1M70.3 207.8h1M72.2 208.1h1M64.2 235.5h1M57.6 238.9h1M186.1 19.2h1M183.4 24.4h1M184.4 23.3h1M180.8 30.0h1M179.3 33.2h1M178.5 34.7h1M171.7 44.4h1M165.0 56.6h1M167.6 55.5h1M168.6 53.9h1M161.4 62.0h1M156.7 75.0h1M150.6 84.6h1M151.6 79.1h1M152.2 78.7h1M149.0 88.0h1M152.3 90.8h1M134.5 119.7h1M95.7 195.9h1M93.7 190.3h1M82.0 207.2h1M81.2 212.9h1M89.6 216.2h1M77.8 224.1h1M75.4 227.0h1M78.0 225.7h1M193.5 16.6h1M190.8 26.4h1M189.6 32.9h1M191.7 36.4h1M184.6 39.5h1M183.8 38.4h1M184.6 40.6h1M182.3 42.9h1M178.9 57.7h1M181.9 56.7h1M175.5 50.0h1M176.0 57.7h1M174.9 56.4h1M173.4 55.0h1M145.1 114.7h1M96.5 213.7h1M87.7 228.3h1M82.5 239.5h1M202.8 26.9h1M204.7 27.4h1M204.3 26.8h1M204.3 23.7h1M201.0 35.1h1M200.2 28.9h1M189.5 49.1h1M185.7 56.9h1M186.1 57.3h1M185.6 59.3h1M180.2 69.9h1M173.6 83.6h1M173.4 83.7h1M173.7 85.3h1M123.5 168.8h1M111.3 204.8h1M112.2 207.0h1M111.6 208.3h1M95.1 230.3h1M90.2 244.9h1M204.3 35.1h1M197.7 48.7h1M196.0 54.4h1M190.4 66.6h1M185.9 73.7h1M185.3 73.3h1M186.2 80.0h1M178.5 89.9h1M110.9 227.8h1M106.0 230.7h1M94.8 272.3h1M94.0 260.7h1M216.1 40.5h1M209.6 34.1h1M212.0 40.3h1M212.1 40.4h1M211.1 43.2h1M198.6 65.0h1M196.0 66.9h1M154.1 164.9h1M149.3 170.5h1M137.4 189.6h1M139.7 194.9h1M138.1 206.9h1M129.2 214.1h1M225.1 38.6h1M219.8 42.4h1M218.8 43.9h1M204.8 79.1h1M197.3 90.5h1M156.1 171.4h1M155.7 181.3h1M146.3 203.4h1M140.4 216.0h1M139.9 216.4h1M119.8 256.6h1M229.4 48.2h1M220.9 57.1h1M221.1 68.8h1M171.1 173.0h1M159.7 198.2h1M157.9 195.4h1M152.4 212.4h1M153.4 214.4h1M134.1 250.9h1M118.9 282.1h1M236.1 42.2h1M237.7 44.9h1M235.7 54.8h1M233.2 51.1h1M232.9 50.4h1M235.7 47.9h1M234.5 49.8h1M232.6 52.1h1M238.4 51.1h1M233.2 49.6h1M232.4 58.3h1M235.6 62.9h1M228.1 66.7h1M172.1 193.5h1M171.3 191.7h1M155.9 220.7h1M136.6 261.9h1M243.3 50.6h1M244.0 49.5h1M243.2 49.1h1M242.1 55.3h1M245.7 57.1h1M235.6 63.3h1M232.8 76.3h1M229.0 87.7h1M147.6 268.8h1M252.3 55.2h1M187.8 200.4h1M188.0 206.4h1M173.3 234.2h1M151.8 287.4h1M257.7 54.7h1M258.5 55.5h1M259.2 64.2h1M257.6 58.9h1M258.2 84.4h1M249.0 101.4h1M251.4 101.4h1M212.8 189.3h1M198.7 227.2h1M194.8 233.6h1M165.9 309.6h1M267.7 81.9h1M252.6 118.0h1M206.9 229.2h1M187.7 278.0h1M189.8 277.7h1M268.4 102.3h1M217.3 229.5h1M216.0 226.4h1M207.0 247.6h1M200.1 271.0h1M196.0 280.4h1M289.8 73.2h1M283.1 86.8h1M279.5 89.3h1M227.1 232.2h1M211.5 266.6h1M295.3 76.4h1M288.4 92.6h1M281.1 115.4h1M280.1 115.1h1M277.4 123.6h1M248.1 198.6h1M229.8 253.1h1M224.8 261.2h1M237.1 268.3h1M309.2 83.0h1M306.5 88.4h1M301.6 96.5h1M299.2 110.0h1M293.7 127.8h1M290.8 134.3h1M290.3 133.6h1M266.8 208.1h1M225.3 319.6h1M227.2 322.4h1M220.1 331.1h1M304.6 119.7h1M289.4 160.7h1M314.8 110.3h1M314.7 118.8h1M300.3 153.2h1M276.7 229.3h1M328.5 92.5h1M327.3 106.7h1M325.6 110.1h1M326.2 109.9h1M258.0 311.3h1M324.2 137.9h1M319.4 150.7h1M314.8 148.6h1M16.4 90.5h1M41.1 57.2h1M13.7 79.9h1M23.3 85.6h1M12.7 102.6h1M7.4 100.3h1M31.2 80.5h1M28.7 54.9h1M17.9 98.1h1M43.2 42.7h1M39.6 51.6h1M5.6 91.2h1M1.2 117.6h1M18.0 75.4h1M34.6 69.6h1M17.2 80.4h1M51.5 34.0h1M41.8 35.5h1M43.4 41.8h1M47.7 28.0h1M76.6 1.5h1M47.3 34.8h1M29.1 65.5h1M81.9 1.3h1M70.7 12.6h1M50.8 42.0h1M47.9 48.6h1M66.3 17.2h1M29.7 59.2h1M45.5 52.3h1M61.3 14.2h1M2.5 120.3h1M2.7 106.5h1M35.8 57.2h1M16.1 88.5h1M77.0 1.5h1M62.3 7.9h1M53.4 47.2h1M28.6 64.6h1M18.0 75.4h1M18.2 96.7h1M57.7 13.6h1M39.8 42.1h1M62.0 10.6h1M56.2 20.2h1M16.6 97.4h1M48.0 41.6h1M24.5 73.8h1M48.4 51.8h1M20.6 83.7h1M6.2 111.9h1M61.1 30.3h1M23.4 93.5h1M76.4 13.2h1M46.4 37.2h1M47.0 56.4h1M24.6 90.4h1M35.1 58.3h1M0.4 101.7h1M46.1 56.9h1M51.2 49.1h1M36.5 43.6h1M14.8 91.6h1M6.1 103.5h1M26.6 81.2h1M16.6 95.5h1M64.9 21.2h1M36.6 49.3h1M38.7 40.7h1M65.4 23.9h1M68.0 21.5h1M58.2 35.6h1M79.4 7.4h1M14.2 79.2h1M13.8 76.0h1M73.1 6.2h1M7.5 97.3h1M42.0 47.3h1M60.0 35.3h1M167.8 299.3h1M230.6 329.7h1M111.0 272.9h1M135.6 283.7h1M80.7 258.4h1M106.8 270.6h1M104.6 269.4h1M119.6 279.4h1M214.0 322.6h1M9.7 221.4h1M45.1 241.3h1M205.9 317.2h1M144.0 289.2h1M192.2 314.8h1M46.8 240.2h1M232.0 329.2h1M59.2 249.0h1M164.4 300.7h1M165.6 301.0h1M210.3 319.3h1M187.7 312.0h1M39.4 240.5h1M224.1 327.0h1M108.3 270.8h1M140.2 287.7h1M126.0 281.3h1M101.2 270.0h1M74.6 254.7h1M40.8 239.8h1M36.5 236.5h1M16.7 228.9h1M178.6 305.3h1M79.5 254.3h1M16.0 228.5h1"/>
<path stroke="#5a4f8a" d="M106.7 1.7h1M98.7 11.7h1M102.2 11.7h1M95.9 17.3h1M94.1 25.1h1M90.9 31.0h1M84.6 30.5h1M83.4 36.4h1M79.6 44.3h1M54.6 76.4h1M50.5 88.0h1M50.0 89.0h1M41.2 105.7h1M21.1 135.1h1M6.2 164.3h1M117.9 1.1h1M105.7 20.8h1M109.5 23.0h1M95.0 36.3h1M95.5 38.7h1M76.6 55.1h1M85.4 61.8h1M82.9 56.3h1M79.8 60.1h1M72.8 67.7h1M41.1 123.5h1M34.4 135.5h1M36.9 134.2h1M43.1 131.5h1M35.5 134.5h1M27.5 147.6h1M20.2 157.7h1M8.6 174.4h1M11.9 180.3h1M6.9 184.0h1M124.8 1.7h1M120.8 13.5h1M122.2 18.8h1M118.2 17.5h1M108.6 33.0h1M105.0 39.7h1M100.1 48.6h1M93.2 60.5h1M84.0 66.8h1M88.5 65.7h1M82.5 77.7h1M78.8 80.1h1M81.3 80.9h1M76.1 89.9h1M73.1 90.9h1M75.5 91.4h1M73.4 90.4h1M66.8 99.1h1M65.5 105.1h1M57.8 107.8h1M29.2 163.4h1M16.6 197.3h1M4.2 194.4h1M125.9 31.0h1M122.2 28.2h1M111.4 44.3h1M99.7 59.2h1M93.3 80.2h1M90.1 80.6h1M84.6 86.9h1M82.5 85.7h1M83.0 92.7h1M84.0 92.2h1M78.3 98.0h1M78.5 100.5h1M58.1 131.5h1M47.4 155.1h1M37.4 172.9h1M38.7 169.0h1M35.5 173.3h1M29.0 174.8h1M136.8 17.7h1M118.4 43.3h1M103.9 76.4h1M103.3 78.7h1M105.5 75.7h1M97.9 90.1h1M62.1 155.5h1M54.5 156.4h1M55.2 162.7h1M55.6 163.2h1M47.8 173.0h1M42.1 181.8h1M44.7 182.0h1M29.4 191.1h1M35.8 191.3h1M37.5 194.0h1M35.9 191.1h1M32.8 199.1h1M26.9 210.3h1M25.0 223.5h1M14.8 225.7h1M153.4 13.2h1M150.2 13.3h1M150.5 17.7h1M134.2 44.9h1M134.2 42.5h1M125.1 48.5h1M129.0 52.5h1M125.7 53.7h1M126.7 62.0h1M125.8 59.2h1M119.5 62.6h1M121.4 66.7h1M116.6 74.0h1M116.6 72.4h1M115.9 72.2h1M100.9 104.2h1M86.3 126.5h1M87.6 125.5h1M72.2 150.2h1M57.5 177.5h1M60.3 173.4h1M50.0 191.1h1M47.2 196.7h1M50.2 201.0h1M43.3 199.7h1M41.5 206.2h1M31.0 224.0h1M164.1 4.4h1M160.5 6.6h1M167.7 7.6h1M166.3 6.1h1M164.9 5.4h1M160.8 9.5h1M153.7 28.2h1M148.9 25.9h1M148.9 36.4h1M123.3 79.3h1M123.6 77.9h1M118.8 82.5h1M90.3 138.2h1M85.7 145.1h1M77.5 164.8h1M74.1 166.2h1M60.1 191.3h1M65.5 187.6h1M51.0 203.1h1M50.7 208.5h1M38.4 239.4h1M37.7 237.1h1M172.4 3.8h1M170.2 14.0h1M169.0 14.7h1M160.4 22.4h1M166.6 21.3h1M156.5 38.8h1M155.2 40.7h1M141.6 59.6h1M142.8 68.5h1M142.0 65.2h1M117.8 111.0h1M80.7 176.0h1M80.8 178.2h1M73.9 189.3h1M66.5 205.1h1M65.4 211.2h1M62.0 212.2h1M61.3 214.4h1M58.7 222.1h1M52.0 227.6h1M49.6 230.0h1M51.1 231.2h1M180.6 10.6h1M179.9 10.3h1M176.6 20.2h1M168.2 27.2h1M169.3 40.9h1M168.9 35.4h1M154.7 52.2h1M154.2 70.9h1M148.8 66.1h1M151.9 63.9h1M149.3 70.2h1M95.0 169.5h1M88.3 180.7h1M81.7 206.1h1M74.3 199.3h1M67.6 220.8h1M64.9 227.5h1M52.4 250.1h1M186.2 17.3h1M178.0 24.6h1M181.5 30.2h1M176.1 34.2h1M177.9 31.1h1M174.3 32.0h1M177.2 32.1h1M179.0 38.2h1M177.5 34.7h1M174.9 40.8h1M175.7 43.4h1M173.8 45.5h1M169.6 55.1h1M167.5 57.2h1M165.3 61.2h1M157.9 80.2h1M152.9 82.2h1M144.9 97.0h1M93.9 195.6h1M94.4 199.6h1M68.8 238.8h1M75.2 238.9h1M195.7 19.4h1M192.4 21.2h1M189.4 33.6h1M182.0 45.9h1M179.5 49.5h1M177.3 52.9h1M172.1 53.8h1M171.6 58.5h1M158.6 90.8h1M150.7 100.9h1M101.6 198.8h1M105.9 198.7h1M98.9 198.5h1M90.7 215.4h1M86.6 226.8h1M77.9 246.7h1M74.8 245.5h1M78.9 253.4h1M202.2 26.0h1M199.5 30.0h1M197.5 32.0h1M194.6 38.3h1M192.8 50.8h1M185.0 60.6h1M179.9 68.3h1M177.9 72.5h1M173.4 81.5h1M177.8 75.4h1M169.6 94.1h1M139.3 158.3h1M132.2 166.9h1M116.6 192.5h1M117.4 202.3h1M115.0 205.5h1M112.4 205.5h1M100.1 215.2h1M92.0 246.5h1M88.1 257.8h1M202.8 45.6h1M187.9 67.6h1M184.5 67.0h1M154.7 140.2h1M132.2 184.8h1M124.9 206.6h1M101.6 238.2h1M102.2 242.6h1M99.7 264.4h1M93.1 263.0h1M220.2 35.1h1M221.1 36.0h1M213.5 36.9h1M210.7 43.7h1M201.1 65.7h1M201.3 65.2h1M193.5 80.6h1M151.2 166.3h1M145.1 179.6h1M132.5 213.5h1M104.9 273.5h1M107.6 263.3h1M218.5 51.1h1M214.2 54.3h1M204.9 86.2h1M198.6 93.0h1M156.8 172.0h1M153.1 184.7h1M144.2 194.7h1M138.9 215.4h1M136.0 216.9h1M137.5 227.5h1M130.1 227.7h1M112.8 264.9h1M227.5 35.0h1M229.3 43.6h1M220.1 71.0h1M211.9 71.8h1M213.0 72.6h1M212.1 82.4h1M135.6 252.2h1M238.1 46.2h1M234.5 52.8h1M233.6 58.2h1M228.5 64.1h1M221.2 77.9h1M160.0 226.8h1M137.2 266.2h1M240.6 60.2h1M176.8 202.4h1M173.6 212.7h1M175.8 215.3h1M164.7 243.4h1M153.1 261.7h1M149.2 268.3h1M151.8 260.0h1M149.0 269.7h1M253.1 61.3h1M246.3 64.8h1M239.1 77.7h1M177.7 228.8h1M174.9 235.2h1M177.0 236.9h1M158.0 274.8h1M153.5 281.9h1M258.7 63.3h1M259.3 67.3h1M250.1 67.7h1M252.2 67.7h1M250.1 79.4h1M182.1 235.3h1M176.1 248.0h1M176.5 246.8h1M179.0 259.2h1M166.5 276.6h1M162.1 285.6h1M265.4 65.2h1M254.7 93.6h1M243.3 106.0h1M206.6 206.9h1M194.2 234.4h1M193.5 244.8h1M194.5 245.3h1M193.9 245.6h1M183.8 256.6h1M188.8 265.4h1M178.8 280.2h1M174.2 280.1h1M272.7 70.6h1M267.9 89.4h1M254.5 111.9h1M253.9 110.5h1M251.3 129.3h1M244.2 140.2h1M209.7 220.9h1M195.2 261.7h1M197.1 258.0h1M194.8 262.8h1M189.7 276.4h1M280.3 68.6h1M280.7 66.3h1M269.6 94.8h1M261.3 114.7h1M249.8 137.2h1M252.1 144.0h1M222.5 213.9h1M220.8 217.1h1M216.9 233.1h1M206.9 257.9h1M189.3 301.3h1M285.1 75.5h1M283.5 86.6h1M272.4 112.3h1M273.6 107.4h1M274.1 122.0h1M227.8 228.9h1M223.9 236.6h1M222.9 236.8h1M205.9 290.4h1M199.1 306.2h1M293.2 81.7h1M287.2 95.9h1M281.3 116.6h1M281.3 117.5h1M274.4 130.8h1M271.0 137.2h1M269.7 144.6h1M246.2 199.1h1M229.9 253.2h1M210.1 299.2h1M209.4 311.0h1M206.1 320.9h1M301.4 79.4h1M292.4 104.7h1M286.7 117.4h1M285.8 127.4h1M281.7 140.8h1M248.5 226.3h1M244.5 238.1h1M227.1 284.6h1M219.2 309.2h1M303.1 95.3h1M297.2 116.2h1M292.6 131.0h1M292.1 130.5h1M287.8 136.6h1M290.7 133.3h1M284.3 139.0h1M283.3 158.2h1M230.9 299.7h1M228.0 311.9h1M227.7 319.8h1M220.7 328.3h1M308.5 108.0h1M306.4 123.8h1M301.8 128.2h1M295.8 134.0h1M311.7 110.7h1M319.8 112.9h1M305.2 129.4h1M306.7 130.0h1M327.5 100.6h1M321.0 120.8h1M307.5 156.4h1M302.2 176.9h1M258.4 311.5h1M255.0 325.1h1M251.5 329.0h1M329.6 111.5h1M326.0 124.1h1M328.0 123.7h1M321.1 142.2h1M319.6 146.3h1M318.4 151.9h1M319.8 158.8h1M314.8 165.2h1M267.5 316.8h1M266.5 317.7h1M264.7 327.0h1M259.3 335.9h1M259.0 333.5h1M73.1 6.4h1M48.9 33.8h1M27.1 58.0h1M11.5 99.5h1M63.3 8.5h1M61.6 10.8h1M48.7 32.7h1M75.5 6.5h1M80.7 0.7h1M28.5 53.2h1M59.8 28.6h1M20.5 72.3h1M66.9 4.0h1M67.2 16.6h1M2.1 117.0h1M79.3 1.3h1M36.2 71.4h1M30.0 61.0h1M77.1 5.5h1M51.6 46.5h1M21.7 63.6h1M55.8 24.4h1M7.1 98.8h1M8.7 107.4h1M19.0 88.3h1M36.0 45.2h1M22.6 68.6h1M25.3 84.4h1M65.4 5.7h1M32.3 57.5h1M35.0 52.7h1M37.4 56.9h1M72.5 3.6h1M24.6 82.1h1M59.1 19.5h1M37.8 55.9h1M64.6 13.3h1M29.2 79.2h1M19.0 99.4h1M12.8 98.2h1M45.0 44.2h1M11.3 79.9h1M33.0 74.3h1M55.8 40.0h1M47.0 37.7h1M12.2 81.8h1M55.6 24.8h1M27.7 77.1h1M14.6 83.0h1M28.1 73.8h1M10.8 84.2h1M20.6 72.8h1M28.0 81.9h1M69.0 18.4h1M3.7 116.8h1M57.0 26.1h1M72.8 11.0h1M46.6 32.2h1M22.7 82.0h1M56.3 44.4h1M70.7 9.7h1M51.2 28.2h1M33.4 55.3h1M18.3 81.6h1M59.1 31.8h1M56.8 14.1h1M8.8 85.1h1M23.0 63.8h1M63.7 24.2h1M77.7 4.3h1M219.8 326.2h1M80.5 260.0h1M13.6 226.4h1M101.1 267.5h1M144.5 291.4h1M234.8 332.5h1M175.4 306.5h1M113.6 274.6h1M230.6 332.9h1M24.4 232.5h1M204.6 320.5h1M43.1 241.4h1M50.9 245.8h1M83.5 256.8h1M106.4 271.1h1M145.3 290.1h1M186.7 306.1h1M45.2 241.3h1M154.7 292.7h1"/>
<path stroke="#985789" d="M104.8 5.1h1M106.5 4.8h1M104.4 5.2h1M98.7 14.6h1M91.9 25.5h1M94.3 27.7h1M79.3 39.9h1M84.4 37.7h1M77.3 46.8h1M83.5 40.7h1M81.0 44.2h1M76.9 39.7h1M81.3 41.8h1M75.7 52.5h1M75.3 52.0h1M71.2 58.3h1M68.8 55.6h1M66.1 61.0h1M69.7 58.7h1M70.1 58.4h1M70.9 58.0h1M61.4 72.2h1M66.3 74.6h1M60.4 74.7h1M53.7 82.0h1M49.4 77.2h1M51.1 85.1h1M45.9 96.3h1M35.3 111.3h1M11.6 157.9h1M3.6 164.6h1M7.6 170.4h1M116.5 3.9h1M111.9 6.1h1M107.1 13.8h1M111.9 17.4h1M109.3 15.7h1M103.7 22.6h1M109.9 21.4h1M95.6 35.3h1M89.1 40.9h1M91.0 42.4h1M82.3 56.2h1M82.1 55.4h1M80.8 52.1h1M78.5 62.7h1M80.9 62.1h1M74.6 63.6h1M80.2 60.6h1M70.1 75.4h1M66.4 82.8h1M64.7 86.8h1M65.5 84.1h1M61.2 92.7h1M54.2 99.6h1M56.9 100.0h1M56.4 99.0h1M53.1 108.6h1M52.2 106.7h1M44.0 118.0h1M37.4 133.0h1M35.5 139.4h1M35.5 134.1h1M35.8 135.1h1M35.9 134.3h1M36.6 131.1h1M36.4 133.5h1M36.2 133.8h1M28.3 138.7h1M25.5 150.7h1M12.9 169.6h1M12.2 170.5h1M8.6 176.2h1M11.1 172.4h1M2.1 185.1h1M3.0 183.7h1M127.3 1.5h1M123.4 5.5h1M118.8 15.3h1M116.8 21.3h1M117.5 18.7h1M114.6 29.1h1M109.2 41.8h1M101.1 42.2h1M98.2 48.7h1M101.0 45.7h1M99.5 43.6h1M100.2 48.0h1M101.0 45.6h1M95.6 54.0h1M95.9 52.1h1M93.5 52.1h1M93.5 61.3h1M92.7 60.6h1M96.6 60.8h1M86.7 58.6h1M90.5 64.3h1M92.9 60.4h1M98.5 58.4h1M92.8 60.1h1M82.6 63.0h1M79.6 72.9h1M84.1 76.0h1M79.6 80.3h1M75.3 78.5h1M74.5 88.2h1M68.1 97.7h1M61.4 108.2h1M56.6 119.7h1M48.7 131.2h1M42.7 137.7h1M35.2 140.6h1M37.1 146.1h1M31.0 161.1h1M23.8 170.6h1M30.3 174.2h1M23.6 169.8h1M23.3 171.4h1M19.6 179.9h1M5.4 200.8h1M134.5 7.9h1M132.8 16.8h1M135.3 12.8h1M131.5 13.1h1M130.7 9.5h1M130.6 17.3h1M126.4 17.4h1M121.5 26.3h1M125.2 22.2h1M127.3 20.7h1M116.2 34.7h1M113.5 43.1h1M109.1 41.2h1M107.9 49.9h1M107.8 51.0h1M105.0 57.0h1M106.0 57.6h1M101.6 66.1h1M98.2 67.1h1M94.7 73.9h1M93.4 78.1h1M94.1 78.0h1M94.3 79.0h1M90.3 74.0h1M84.9 86.2h1M86.1 84.6h1M65.2 121.0h1M68.2 117.3h1M66.5 117.5h1M48.4 143.8h1M31.3 177.3h1M33.0 177.6h1M28.1 186.5h1M14.5 214.3h1M4.8 224.2h1M149.1 2.3h1M147.1 3.1h1M147.6 2.4h1M138.9 12.1h1M141.4 13.5h1M134.9 20.2h1M134.6 20.9h1M136.2 21.4h1M136.7 17.6h1M134.5 22.4h1M133.5 26.9h1M124.7 34.4h1M123.9 42.6h1M122.3 43.5h1M120.2 47.2h1M123.1 49.0h1M116.2 45.8h1M119.0 58.0h1M116.7 56.4h1M116.4 63.2h1M112.0 64.0h1M108.1 68.4h1M107.6 72.3h1M108.3 70.4h1M105.9 69.6h1M104.0 75.3h1M103.8 75.9h1M109.7 76.0h1M101.2 91.7h1M92.4 99.0h1M90.9 98.3h1M83.0 113.2h1M77.2 124.3h1M69.4 138.7h1M66.1 141.0h1M66.1 142.7h1M51.6 155.5h1M57.1 152.7h1M47.6 172.1h1M50.2 175.6h1M45.5 178.7h1M38.5 190.1h1M41.1 187.0h1M35.8 192.8h1M36.5 192.1h1M35.2 203.2h1M32.1 199.5h1M30.4 205.3h1M27.3 210.0h1M21.8 219.7h1M16.8 216.5h1M14.1 230.2h1M159.5 1.1h1M153.6 6.3h1M148.1 20.3h1M147.6 20.7h1M149.1 18.3h1M143.8 16.9h1M145.4 22.4h1M143.4 25.1h1M144.2 22.9h1M139.8 31.9h1M137.2 36.3h1M135.5 38.0h1M137.9 43.5h1M132.5 41.9h1M136.5 42.6h1M134.7 44.6h1M132.3 39.4h1M118.7 67.3h1M119.5 67.7h1M120.5 66.1h1M124.4 69.0h1M111.8 80.2h1M111.6 76.3h1M100.0 104.4h1M103.3 107.1h1M101.7 105.8h1M94.6 110.6h1M89.6 116.4h1M90.0 116.7h1M82.9 134.4h1M79.2 132.9h1M67.0 161.5h1M67.8 159.7h1M60.4 166.9h1M58.0 178.1h1M54.6 186.1h1M54.5 186.1h1M45.4 196.2h1M48.2 202.4h1M41.0 203.9h1M31.1 224.0h1M32.2 222.5h1M24.5 234.8h1M30.8 233.1h1M163.6 8.3h1M162.2 3.3h1M162.1 4.6h1M166.2 5.3h1M169.3 5.2h1M162.4 8.3h1M162.7 11.4h1M157.0 13.0h1M159.2 7.2h1M160.2 16.1h1M159.3 15.8h1M158.6 19.6h1M160.4 19.1h1M159.1 17.9h1M150.0 23.6h1M153.1 21.7h1M149.6 30.0h1M151.4 28.2h1M144.2 35.9h1M144.4 48.1h1M146.5 50.1h1M135.9 56.9h1M134.1 61.8h1M129.0 74.2h1M121.3 74.2h1M119.4 83.9h1M118.1 85.2h1M108.5 95.8h1M109.9 96.5h1M109.4 105.4h1M104.7 114.4h1M99.4 113.2h1M94.5 128.6h1M92.9 141.2h1M66.0 181.5h1M53.5 201.1h1M55.8 201.0h1M51.6 209.7h1M44.7 208.1h1M42.6 218.7h1M45.5 217.5h1M43.3 218.1h1M42.6 218.5h1M40.4 226.9h1M38.9 234.2h1M36.9 241.8h1M172.4 8.4h1M171.5 9.4h1M171.0 14.9h1M169.7 21.0h1M166.6 23.0h1M169.7 27.6h1M168.1 19.2h1M167.4 21.3h1M162.1 38.0h1M158.2 32.7h1M152.9 42.0h1M155.1 40.1h1M156.2 40.1h1M154.3 43.0h1M147.4 49.3h1M148.1 42.5h1M151.1 48.0h1M151.4 48.8h1M151.5 56.7h1M150.2 57.4h1M142.0 69.7h1M138.5 65.0h1M139.3 70.2h1M141.8 68.3h1M134.1 68.8h1M139.3 69.6h1M140.6 64.9h1M141.4 68.8h1M134.8 88.5h1M121.4 97.8h1M121.1 96.4h1M120.3 107.5h1M84.6 171.6h1M83.1 177.6h1M79.2 177.1h1M71.7 195.7h1M66.6 205.3h1M60.2 215.6h1M60.9 217.0h1M62.8 214.1h1M60.2 217.7h1M58.8 224.3h1M53.1 226.8h1M50.9 231.5h1M48.9 232.2h1M50.0 232.9h1M54.0 227.9h1M45.3 241.0h1M180.9 10.8h1M181.6 10.4h1M177.4 19.4h1M176.1 20.9h1M169.2 34.9h1M165.7 37.7h1M167.1 38.1h1M166.3 35.3h1M160.7 49.9h1M155.6 52.1h1M156.7 56.7h1M155.4 53.7h1M155.2 56.1h1M153.1 67.1h1M153.8 64.2h1M151.6 66.6h1M148.7 72.8h1M145.3 83.7h1M139.0 86.8h1M131.7 98.6h1M129.0 112.5h1M129.7 107.2h1M122.7 126.1h1M94.4 173.0h1M94.5 171.4h1M86.1 179.0h1M84.1 202.1h1M83.0 200.4h1M72.7 218.6h1M71.0 217.9h1M64.9 227.3h1M67.7 229.2h1M59.3 242.4h1M54.8 245.6h1M55.8 250.4h1M187.1 17.6h1M188.7 18.5h1M184.0 15.5h1M184.2 24.2h1M184.0 21.5h1M188.4 22.5h1M179.0 35.7h1M180.3 38.1h1M177.9 40.2h1M173.5 37.5h1M177.1 39.9h1M175.1 42.9h1M173.8 42.9h1M173.7 42.3h1M173.6 41.4h1M173.0 41.3h1M174.1 46.2h1M164.9 56.3h1M163.3 54.2h1M167.7 57.0h1M163.3 60.7h1M165.2 60.4h1M162.7 60.8h1M154.9 74.4h1M149.7 88.7h1M100.1 179.3h1M101.5 170.4h1M97.5 186.0h1M97.1 198.3h1M91.2 204.2h1M95.6 204.5h1M91.1 203.6h1M82.5 213.5h1M74.9 229.3h1M190.1 19.5h1M196.1 18.0h1M194.3 28.9h1M190.0 32.4h1M189.0 37.5h1M176.2 54.8h1M180.1 49.9h1M179.2 51.5h1M179.0 52.9h1M173.5 57.2h1M175.0 65.6h1M176.5 65.2h1M171.0 67.9h1M167.3 71.9h1M170.2 79.2h1M151.3 104.7h1M117.1 173.0h1M99.5 201.9h1M108.6 199.9h1M100.6 206.8h1M96.5 207.5h1M96.7 211.7h1M89.8 224.5h1M87.0 230.9h1M87.8 229.5h1M87.9 225.9h1M88.2 229.4h1M77.5 245.2h1M70.9 257.3h1M205.0 28.6h1M202.0 24.1h1M195.0 27.0h1M193.1 29.9h1M198.9 30.7h1M199.0 28.0h1M195.4 36.9h1M195.0 37.2h1M197.2 43.8h1M195.1 38.6h1M193.6 43.2h1M193.3 43.4h1M190.6 45.3h1M187.3 50.2h1M187.0 56.8h1M185.9 59.6h1M182.6 57.3h1M188.6 59.7h1M189.9 56.9h1M176.2 67.5h1M178.1 63.8h1M183.8 70.6h1M177.8 78.2h1M172.5 83.6h1M173.8 88.2h1M174.1 84.7h1M163.5 100.1h1M144.9 142.0h1M132.7 167.6h1M124.4 176.5h1M111.0 206.4h1M110.8 203.7h1M113.5 205.6h1M111.0 204.4h1M103.0 225.0h1M98.0 231.5h1M98.0 231.3h1M82.1 248.8h1M87.4 251.5h1M87.1 250.6h1M81.7 261.6h1M81.6 256.8h1M208.5 29.4h1M203.8 47.0h1M204.2 48.4h1M203.4 48.7h1M195.7 55.3h1M194.3 59.4h1M190.0 66.7h1M187.6 69.7h1M191.2 63.6h1M189.7 67.7h1M186.7 72.4h1M183.8 80.1h1M184.9 87.7h1M177.4 97.3h1M135.6 173.6h1M134.4 183.2h1M129.2 181.1h1M129.9 181.9h1M131.8 185.9h1M129.5 193.9h1M125.0 200.2h1M120.8 197.6h1M124.5 199.2h1M122.2 208.4h1M116.5 218.4h1M116.6 216.2h1M124.4 214.9h1M117.5 217.1h1M118.0 215.3h1M114.6 230.0h1M108.9 243.5h1M108.7 235.0h1M107.2 235.9h1M101.9 246.7h1M104.3 252.4h1M92.4 257.6h1M212.4 38.0h1M208.4 44.9h1M211.3 41.7h1M207.6 50.6h1M205.8 52.8h1M204.1 58.4h1M201.5 67.0h1M198.4 72.5h1M201.0 67.4h1M190.0 78.2h1M194.5 78.2h1M190.5 85.5h1M191.6 85.3h1M147.7 178.0h1M142.9 187.0h1M139.5 194.5h1M133.9 205.5h1M133.2 202.8h1M135.5 199.6h1M132.2 207.6h1M123.4 213.9h1M132.4 212.2h1M126.2 223.7h1M120.6 232.5h1M121.3 232.5h1M111.1 252.7h1M110.8 251.5h1M224.7 37.0h1M224.6 36.3h1M214.3 42.8h1M223.7 43.4h1M219.4 47.1h1M214.2 56.3h1M210.7 59.2h1M207.5 69.2h1M208.2 80.9h1M205.3 80.2h1M207.3 82.9h1M204.9 78.1h1M157.6 171.5h1M154.4 183.3h1M148.1 197.9h1M138.5 218.2h1M129.7 224.7h1M130.6 233.6h1M124.4 246.3h1M120.0 257.0h1M114.9 264.3h1M106.6 268.6h1M229.3 47.4h1M231.6 47.9h1M221.6 63.3h1M222.0 61.8h1M216.2 69.2h1M213.3 72.1h1M156.4 193.5h1M148.6 227.9h1M145.9 223.5h1M146.1 223.8h1M138.1 242.8h1M141.4 241.1h1M139.4 239.6h1M139.2 238.4h1M134.4 249.6h1M136.3 257.0h1M134.4 260.9h1M126.1 270.7h1M239.8 42.4h1M240.8 42.5h1M233.4 49.5h1M235.1 49.0h1M231.9 50.8h1M238.7 52.3h1M230.5 47.3h1M234.2 49.5h1M233.4 53.5h1M234.2 51.4h1M235.4 49.4h1M233.9 52.4h1M234.2 50.5h1M232.0 57.1h1M234.4 58.5h1M230.6 54.5h1M234.0 56.8h1M229.9 62.0h1M232.1 61.7h1M228.5 71.2h1M225.2 69.7h1M219.3 77.1h1M203.7 128.5h1M166.2 201.3h1M163.6 206.3h1M158.9 217.2h1M156.4 226.8h1M138.2 266.5h1M140.2 266.5h1M139.2 264.6h1M133.0 274.9h1M132.9 277.0h1M131.0 285.9h1M131.1 286.0h1M244.5 49.0h1M245.4 56.3h1M238.8 54.2h1M243.3 56.3h1M243.2 55.4h1M242.6 55.2h1M247.0 57.3h1M242.3 57.2h1M243.2 59.4h1M232.9 66.5h1M233.7 75.4h1M179.6 193.1h1M183.3 200.9h1M179.5 197.0h1M177.5 201.7h1M179.2 205.3h1M176.8 215.3h1M170.1 218.0h1M143.8 276.9h1M142.5 280.6h1M250.3 55.2h1M250.5 58.8h1M246.9 55.6h1M246.8 64.9h1M245.1 72.2h1M239.3 85.9h1M227.8 111.8h1M223.0 120.0h1M164.4 259.2h1M154.3 272.8h1M155.3 271.2h1M158.7 272.6h1M151.0 277.2h1M159.1 269.7h1M145.5 297.5h1M259.6 55.9h1M257.5 55.3h1M257.6 63.6h1M261.1 67.5h1M251.0 75.7h1M252.5 77.5h1M251.9 75.6h1M240.8 100.5h1M234.4 108.7h1M236.6 107.9h1M178.3 246.3h1M177.3 268.6h1M163.9 282.8h1M157.5 296.3h1M266.8 60.0h1M266.5 62.1h1M263.4 71.1h1M245.8 104.5h1M246.1 107.9h1M249.0 112.3h1M248.7 108.3h1M243.2 121.2h1M240.7 126.2h1M235.9 125.2h1M200.5 227.1h1M194.1 242.7h1M184.7 271.6h1M175.5 280.2h1M175.6 283.5h1M172.4 290.9h1M273.7 66.8h1M274.2 70.2h1M268.3 68.8h1M269.4 70.1h1M268.6 79.4h1M266.0 84.0h1M262.7 92.5h1M265.0 88.2h1M262.1 98.2h1M256.7 105.1h1M253.5 111.3h1M244.4 141.7h1M205.6 229.8h1M203.9 242.5h1M274.8 79.2h1M275.5 80.4h1M267.9 104.1h1M271.2 105.1h1M261.5 104.1h1M265.5 108.5h1M259.3 121.0h1M257.8 130.5h1M253.6 135.7h1M215.2 229.7h1M218.2 231.1h1M207.7 256.3h1M188.5 310.3h1M283.7 82.8h1M279.4 92.1h1M275.8 98.9h1M271.3 112.9h1M269.2 124.9h1M265.6 132.3h1M262.2 144.4h1M228.5 234.8h1M223.8 236.0h1M218.7 250.3h1M214.5 263.5h1M212.1 264.9h1M214.7 268.8h1M207.5 285.1h1M295.5 76.7h1M297.1 77.7h1M294.0 80.6h1M293.2 82.9h1M289.2 92.4h1M289.4 92.9h1M287.4 94.1h1M284.8 102.6h1M279.5 114.9h1M275.3 128.4h1M275.8 128.4h1M271.6 135.2h1M270.5 146.0h1M234.5 232.8h1M232.9 240.2h1M296.0 92.0h1M295.8 92.8h1M291.9 105.5h1M291.7 106.1h1M291.4 104.7h1M292.3 106.9h1M292.8 112.5h1M290.0 107.3h1M292.0 111.8h1M286.6 117.9h1M284.6 128.7h1M249.4 228.6h1M240.1 245.4h1M240.8 252.6h1M233.6 265.1h1M235.8 266.9h1M221.2 304.8h1M212.5 308.1h1M211.6 326.9h1M216.8 327.2h1M213.0 325.2h1M307.6 87.9h1M300.7 100.6h1M296.8 126.6h1M292.0 132.1h1M288.7 135.8h1M253.0 242.8h1M251.0 249.1h1M250.8 251.7h1M249.7 253.5h1M249.3 250.9h1M246.8 259.7h1M242.0 274.0h1M228.8 308.0h1M229.7 311.2h1M230.3 324.6h1M218.6 330.2h1M222.7 330.7h1M314.9 93.0h1M312.1 101.9h1M305.6 102.2h1M305.7 113.0h1M303.8 120.9h1M301.0 127.2h1M292.7 135.5h1M297.8 143.0h1M290.9 156.5h1M292.3 157.3h1M285.4 172.4h1M274.4 202.5h1M321.5 90.8h1M321.0 99.2h1M322.3 95.5h1M313.4 117.9h1M312.2 117.6h1M301.1 150.3h1M271.4 239.9h1M270.2 248.7h1M252.7 294.7h1M235.7 335.4h1M327.6 100.9h1M327.2 102.9h1M328.6 112.0h1M319.2 123.1h1M319.4 126.7h1M312.8 147.0h1M307.2 156.7h1M305.9 165.2h1M299.4 185.1h1M336.5 95.8h1M335.1 97.7h1M333.7 105.3h1M331.0 112.8h1M329.9 114.8h1M327.7 127.2h1M327.1 135.0h1M322.8 138.8h1M319.4 148.3h1M318.8 147.6h1M316.4 161.7h1M316.0 159.8h1M311.2 175.5h1M284.9 259.6h1M273.9 297.2h1M268.3 305.2h1M265.4 324.7h1M258.8 336.7h1M258.0 339.9h1M33.6 58.2h1M32.0 72.7h1M79.2 8.8h1M46.1 46.2h1M0.1 102.2h1M25.4 74.7h1M64.1 20.5h1M21.8 80.3h1M77.2 3.1h1M72.5 15.9h1M41.6 59.2h1M51.7 35.0h1M30.6 71.0h1M23.0 62.5h1M16.4 91.5h1M59.8 26.2h1M47.8 28.4h1M34.4 54.5h1M81.5 3.9h1M12.3 96.3h1M22.2 63.4h1M61.3 32.6h1M61.8 19.9h1M14.3 95.1h1M14.5 100.9h1M73.7 0.8h1M30.6 71.8h1M58.0 16.5h1M9.5 97.8h1M72.7 5.8h1M11.6 104.2h1M55.6 14.5h1M13.7 75.8h1M9.9 104.0h1M32.2 60.6h1M57.9 42.7h1M79.6 14.0h1M6.4 123.7h1M16.0 111.3h1M24.3 101.6h1M21.4 100.3h1M45.5 66.6h1M45.1 65.2h1M60.0 46.9h1M85.0 3.3h1M63.6 40.3h1M54.0 56.6h1M81.1 6.8h1M53.6 53.3h1M27.3 86.9h1M3.1 127.5h1M15.3 110.6h1M38.3 73.4h1M60.3 38.4h1M64.6 35.8h1M70.7 29.0h1M69.7 27.7h1M26.2 90.7h1M15.1 112.7h1M19.4 101.7h1M58.2 40.3h1M68.5 32.1h1M46.8 60.4h1M47.4 66.1h1M1.3 133.6h1M0.9 130.2h1M44.2 70.4h1M46.7 63.7h1M41.1 71.0h1M71.6 22.4h1M60.8 38.2h1M45.1 66.2h1M55.9 53.7h1M13.4 110.5h1M63.1 39.4h1M54.5 52.9h1M31.5 90.9h1M5.0 127.8h1M33.2 93.8h1M72.6 32.6h1M49.6 65.0h1M16.4 118.3h1M89.8 11.6h1M44.1 77.1h1M11.8 123.7h1M70.7 35.7h1M60.8 51.3h1M62.3 46.8h1M4.0 139.2h1M92.1 1.8h1M17.8 114.4h1M62.2 49.1h1M84.0 12.7h1M59.5 52.1h1M17.0 119.0h1M71.2 34.6h1M84.5 13.5h1M89.2 5.9h1M3.3 137.4h1"/>
<path stroke="#cb699a" d="M108.7 5.1h1M105.2 5.0h1M101.6 15.4h1M95.8 25.3h1M94.9 25.9h1M90.1 32.7h1M89.4 30.2h1M81.9 39.7h1M85.8 39.3h1M83.5 38.2h1M81.6 36.6h1M80.0 41.8h1M81.5 41.2h1M75.6 51.2h1M77.7 53.2h1M69.0 60.2h1M59.4 72.1h1M60.0 74.1h1M61.6 72.2h1M54.6 79.6h1M54.8 79.7h1M54.4 79.9h1M54.6 81.3h1M52.3 85.8h1M50.6 84.1h1M52.2 86.2h1M48.7 85.9h1M51.2 86.7h1M36.0 113.2h1M22.8 127.0h1M22.2 136.0h1M21.1 133.2h1M5.6 163.5h1M5.1 164.0h1M115.9 3.2h1M117.8 2.9h1M115.5 7.7h1M108.9 16.7h1M104.5 12.9h1M105.1 23.2h1M104.4 24.7h1M103.7 21.4h1M105.8 20.2h1M98.2 26.6h1M96.0 33.3h1M96.4 34.9h1M96.7 35.9h1M90.1 40.3h1M87.8 49.6h1M83.5 53.6h1M85.4 53.0h1M83.0 54.3h1M84.0 54.2h1M78.9 62.8h1M77.7 62.5h1M79.3 60.2h1M82.8 60.9h1M72.0 72.8h1M75.5 68.0h1M76.3 70.1h1M68.9 80.0h1M66.6 83.5h1M66.0 84.2h1M66.2 83.8h1M62.2 93.7h1M58.7 101.6h1M55.6 99.7h1M49.2 113.0h1M42.9 119.8h1M32.5 137.6h1M38.2 134.5h1M38.9 132.0h1M29.4 136.8h1M35.5 135.7h1M30.9 136.0h1M25.0 148.0h1M24.1 149.0h1M26.1 148.7h1M26.1 148.1h1M28.5 151.3h1M26.9 146.8h1M14.2 167.7h1M10.4 173.3h1M12.6 178.9h1M7.0 173.3h1M3.7 176.6h1M5.8 183.5h1M1.3 186.9h1M1.3 185.4h1M0.2 187.5h1M118.9 15.7h1M120.2 14.3h1M116.7 17.9h1M120.5 19.7h1M108.3 29.2h1M113.4 27.9h1M112.0 26.7h1M113.2 27.1h1M102.5 42.8h1M105.2 37.6h1M100.0 48.4h1M97.3 54.2h1M94.0 59.1h1M94.8 60.6h1M91.8 63.5h1M82.9 67.9h1M90.0 65.9h1M88.1 67.0h1M83.7 74.1h1M85.0 78.8h1M79.1 79.6h1M76.9 81.9h1M81.1 79.4h1M65.2 97.7h1M67.5 98.8h1M70.3 96.4h1M68.4 97.1h1M62.4 117.3h1M50.6 119.0h1M52.4 123.2h1M51.0 127.7h1M47.3 127.2h1M35.1 147.9h1M32.6 154.4h1M27.9 162.6h1M23.9 170.9h1M23.0 168.8h1M23.5 171.1h1M31.6 168.7h1M18.5 179.6h1M18.2 180.2h1M12.3 190.3h1M126.5 16.7h1M121.8 29.7h1M120.0 31.8h1M121.3 30.8h1M113.2 41.4h1M100.8 64.4h1M99.6 75.9h1M90.7 83.4h1M90.6 78.2h1M91.0 77.6h1M93.5 78.0h1M92.3 80.1h1M86.0 95.4h1M82.7 92.3h1M83.0 93.5h1M78.7 100.0h1M74.1 109.0h1M75.6 109.4h1M73.7 110.7h1M66.9 117.8h1M58.4 133.2h1M48.8 148.7h1M51.9 158.6h1M23.8 195.9h1M23.8 194.1h1M15.5 203.0h1M4.4 223.3h1M146.8 6.4h1M146.5 8.5h1M144.6 7.9h1M145.5 9.5h1M139.0 17.3h1M132.9 24.4h1M140.4 20.4h1M135.5 33.3h1M134.7 26.7h1M124.5 42.0h1M121.5 47.8h1M117.5 50.6h1M117.7 45.2h1M117.9 41.9h1M120.9 47.1h1M122.9 46.3h1M116.7 56.7h1M111.8 66.5h1M111.6 64.1h1M109.8 59.3h1M107.9 72.0h1M109.9 71.2h1M109.0 70.1h1M107.9 71.5h1M109.0 69.9h1M104.5 81.4h1M106.4 74.4h1M103.4 77.6h1M100.0 83.4h1M101.7 81.3h1M95.9 89.7h1M97.3 87.6h1M91.3 97.3h1M90.5 97.5h1M82.1 114.4h1M81.1 115.5h1M79.3 122.2h1M78.8 122.0h1M78.6 122.2h1M66.9 139.4h1M55.3 157.6h1M46.9 172.9h1M52.9 175.1h1M41.2 184.6h1M36.6 193.2h1M36.8 189.1h1M37.6 194.0h1M37.2 192.6h1M29.6 197.7h1M32.6 200.5h1M26.7 215.7h1M26.9 209.0h1M20.1 223.1h1M20.6 218.5h1M14.0 225.9h1M17.1 228.6h1M157.5 2.8h1M151.4 11.5h1M150.2 12.2h1M146.0 22.1h1M145.5 19.3h1M141.6 28.1h1M139.3 34.7h1M140.7 31.3h1M135.6 36.4h1M133.5 43.4h1M133.9 45.8h1M133.7 45.0h1M135.4 43.2h1M123.7 59.4h1M120.0 66.1h1M115.4 75.4h1M113.1 82.3h1M114.5 81.0h1M114.6 79.9h1M102.4 95.1h1M100.2 104.8h1M100.6 103.6h1M96.6 101.7h1M91.0 116.5h1M89.4 115.0h1M85.5 124.9h1M86.6 126.7h1M66.8 156.6h1M71.5 159.5h1M56.1 177.4h1M58.4 178.5h1M56.9 191.5h1M50.9 196.0h1M33.6 221.4h1M36.1 215.9h1M32.0 222.8h1M165.2 6.4h1M163.4 3.5h1M163.2 3.2h1M164.9 4.7h1M163.6 4.2h1M167.6 10.2h1M160.6 10.5h1M161.6 11.1h1M156.8 17.1h1M160.1 15.5h1M163.9 19.4h1M154.4 23.1h1M156.1 23.5h1M150.5 25.9h1M150.5 30.0h1M147.3 39.5h1M152.4 38.2h1M144.7 42.0h1M144.3 42.5h1M146.6 46.5h1M142.5 51.1h1M141.4 49.9h1M141.6 48.7h1M133.0 63.2h1M129.3 69.5h1M123.5 76.2h1M117.5 85.1h1M107.4 106.1h1M105.5 115.8h1M105.3 116.3h1M77.2 161.8h1M63.7 182.4h1M52.7 207.7h1M50.5 212.1h1M49.7 209.8h1M42.9 218.1h1M175.9 7.4h1M170.1 6.9h1M172.4 7.4h1M173.8 9.1h1M172.4 7.4h1M171.0 23.7h1M156.7 43.2h1M154.9 39.2h1M155.7 40.8h1M157.3 40.8h1M154.8 39.1h1M157.2 39.2h1M149.8 54.4h1M149.8 55.8h1M149.5 55.6h1M149.3 55.7h1M147.8 56.0h1M146.7 66.6h1M140.5 67.6h1M139.9 68.6h1M134.0 74.1h1M121.7 104.5h1M116.9 110.8h1M117.5 111.5h1M116.7 110.4h1M84.2 171.3h1M83.1 181.8h1M79.7 177.7h1M70.1 197.0h1M56.7 224.0h1M56.3 224.7h1M50.0 230.7h1M44.1 244.3h1M42.4 245.4h1M41.9 243.9h1M178.4 20.4h1M173.4 24.3h1M166.1 37.8h1M167.8 37.5h1M167.0 38.5h1M166.6 36.8h1M154.2 56.5h1M153.4 55.9h1M149.9 65.6h1M152.0 66.7h1M147.2 70.5h1M146.8 78.3h1M145.4 78.2h1M139.6 87.1h1M129.2 107.2h1M95.3 172.7h1M93.9 173.2h1M84.1 188.4h1M80.1 198.2h1M80.0 199.2h1M78.5 207.9h1M72.3 210.0h1M62.4 232.0h1M59.4 238.8h1M58.8 242.5h1M56.5 239.4h1M54.9 249.0h1M54.0 247.0h1M187.4 15.9h1M184.3 23.7h1M179.6 34.7h1M173.8 45.1h1M173.9 40.7h1M174.9 40.5h1M176.3 42.9h1M171.7 48.7h1M171.9 49.2h1M168.5 54.4h1M169.0 56.0h1M167.1 55.0h1M162.9 62.7h1M160.3 68.1h1M150.9 75.8h1M151.7 84.5h1M152.5 80.2h1M145.3 96.8h1M144.7 96.8h1M74.6 224.8h1M73.2 230.6h1M69.2 242.5h1M69.1 241.2h1M188.8 28.6h1M195.8 25.8h1M184.5 38.7h1M182.2 42.1h1M185.1 39.0h1M184.7 38.9h1M179.8 47.7h1M177.4 54.1h1M178.3 52.4h1M179.9 51.3h1M176.5 53.4h1M177.1 53.9h1M178.7 53.1h1M179.0 50.8h1M174.9 58.1h1M175.3 56.6h1M173.1 65.5h1M166.2 72.8h1M160.6 83.2h1M169.2 80.8h1M158.6 90.9h1M159.7 87.8h1M106.8 191.0h1M107.3 190.5h1M101.7 200.1h1M102.9 197.9h1M102.9 199.2h1M101.5 199.1h1M90.7 219.7h1M81.5 235.8h1M77.2 245.2h1M202.9 27.4h1M203.8 25.1h1M197.9 30.5h1M199.8 28.5h1M198.4 29.4h1M194.9 28.6h1M199.8 29.9h1M198.2 31.5h1M199.8 41.1h1M195.8 37.1h1M193.6 42.9h1M187.5 48.9h1M189.3 49.8h1M189.0 50.8h1M189.5 52.0h1M182.3 63.4h1M178.7 71.2h1M173.1 80.1h1M169.9 91.5h1M133.3 160.0h1M130.1 176.6h1M112.6 203.7h1M111.2 202.9h1M105.6 221.8h1M103.2 224.5h1M98.1 232.1h1M88.6 247.5h1M79.6 265.7h1M85.9 253.9h1M202.5 40.7h1M204.8 41.2h1M197.4 45.2h1M191.7 57.5h1M190.5 66.0h1M193.3 63.6h1M190.0 67.0h1M185.8 72.6h1M181.7 80.6h1M184.5 80.3h1M182.3 77.2h1M181.5 100.6h1M144.1 158.4h1M134.7 180.2h1M134.3 181.6h1M125.1 210.8h1M125.8 210.3h1M124.8 206.3h1M112.4 233.5h1M113.4 229.9h1M109.8 231.5h1M103.1 233.6h1M107.6 237.4h1M105.4 238.0h1M95.4 254.8h1M96.6 252.8h1M93.8 265.6h1M93.8 265.3h1M206.8 52.3h1M206.1 52.4h1M203.0 57.5h1M203.7 63.1h1M199.8 66.5h1M200.5 65.6h1M199.2 70.1h1M191.4 85.1h1M190.6 86.0h1M188.7 85.5h1M192.9 90.0h1M142.0 184.1h1M143.3 189.3h1M140.4 192.7h1M139.7 193.3h1M140.1 195.3h1M140.1 190.7h1M124.9 214.1h1M108.9 255.3h1M108.5 255.9h1M224.8 36.4h1M219.0 43.6h1M219.0 45.2h1M215.7 52.2h1M212.7 61.7h1M207.5 70.2h1M206.1 78.7h1M207.0 77.1h1M204.7 73.4h1M200.5 91.0h1M158.3 174.7h1M154.7 180.6h1M155.1 179.4h1M151.1 189.4h1M146.9 200.7h1M145.1 206.8h1M143.9 209.1h1M139.7 217.1h1M133.8 227.0h1M131.1 232.0h1M122.7 254.3h1M115.4 270.7h1M232.0 46.3h1M212.0 71.2h1M214.1 79.4h1M176.4 170.2h1M167.5 176.9h1M166.3 175.9h1M151.9 210.7h1M119.1 282.2h1M119.6 281.3h1M121.1 279.1h1M237.2 43.7h1M232.1 45.9h1M232.8 49.8h1M233.7 52.7h1M234.5 50.2h1M232.8 58.2h1M231.9 60.1h1M228.9 64.9h1M227.0 63.7h1M228.5 66.6h1M224.4 69.1h1M225.0 71.8h1M179.8 175.7h1M167.5 197.8h1M167.7 199.0h1M160.7 211.3h1M156.8 226.0h1M157.4 225.9h1M147.9 244.0h1M138.3 266.8h1M139.9 265.7h1M138.2 269.3h1M139.2 263.8h1M140.6 266.4h1M244.4 47.7h1M242.8 55.3h1M238.9 58.5h1M243.3 55.5h1M238.4 57.7h1M244.0 64.6h1M206.2 124.2h1M173.1 211.8h1M252.1 52.8h1M252.0 52.7h1M253.3 51.2h1M250.0 58.2h1M250.9 60.1h1M247.5 63.0h1M236.8 80.8h1M227.9 114.0h1M187.2 212.0h1M171.3 245.7h1M159.6 259.8h1M261.9 56.2h1M257.0 62.1h1M258.0 62.4h1M257.2 64.0h1M253.0 68.2h1M252.2 69.1h1M253.0 68.5h1M239.7 102.9h1M191.1 220.3h1M182.8 239.8h1M171.1 268.8h1M163.1 284.8h1M266.5 60.8h1M263.3 66.9h1M257.9 81.5h1M256.0 85.0h1M176.9 280.8h1M178.4 292.1h1M274.6 66.1h1M271.2 68.4h1M269.9 68.9h1M270.9 72.0h1M268.7 77.8h1M269.1 81.1h1M266.4 84.2h1M265.3 82.4h1M265.8 94.3h1M261.4 99.8h1M257.7 104.0h1M250.8 119.7h1M188.6 277.3h1M175.8 310.8h1M218.5 223.0h1M227.4 213.6h1M197.0 289.2h1M280.5 90.9h1M277.2 97.1h1M273.2 110.0h1M266.5 133.0h1M224.3 237.6h1M214.6 275.0h1M193.3 318.0h1M194.2 314.0h1M295.1 76.2h1M290.3 91.8h1M285.1 103.2h1M281.1 117.0h1M281.0 117.6h1M279.9 115.3h1M281.0 117.4h1M279.0 115.6h1M275.3 132.7h1M273.3 137.0h1M205.8 320.1h1M297.7 78.8h1M303.4 81.0h1M297.8 94.3h1M295.1 99.4h1M290.0 101.3h1M292.1 106.8h1M286.5 119.7h1M287.8 119.4h1M285.7 117.5h1M236.6 266.3h1M212.2 308.2h1M301.1 96.6h1M298.7 110.7h1M299.1 109.5h1M235.7 292.0h1M316.8 88.5h1M313.1 92.3h1M307.5 107.7h1M306.4 112.1h1M306.6 113.6h1M305.8 112.9h1M306.8 113.7h1M306.5 113.1h1M301.1 117.6h1M306.6 121.7h1M303.6 125.5h1M302.5 126.8h1M292.6 155.8h1M322.1 91.3h1M316.8 111.4h1M314.7 111.5h1M309.2 123.3h1M251.0 307.6h1M241.6 324.9h1M328.2 102.3h1M326.2 102.0h1M324.2 110.0h1M325.3 108.7h1M326.3 108.4h1M324.5 110.6h1M324.6 109.4h1M323.8 111.2h1M319.4 124.2h1M320.0 126.0h1M252.0 321.8h1M337.4 98.6h1M328.7 118.9h1M329.4 118.5h1M329.4 119.1h1M327.0 133.1h1M321.4 149.2h1M55.3 26.0h1M35.1 66.9h1M65.5 3.4h1M27.4 75.5h1M73.9 9.8h1M65.3 26.5h1M2.9 96.6h1M52.7 44.7h1M15.7 71.9h1M22.5 66.9h1M2.0 95.4h1M10.7 112.2h1M51.4 43.8h1M7.1 108.2h1M61.6 33.0h1M35.7 50.1h1M65.5 7.1h1M80.2 7.4h1M63.9 35.7h1M72.6 21.6h1M65.8 34.5h1M18.9 105.9h1M72.8 24.6h1M60.1 44.1h1M66.9 32.0h1M64.6 36.0h1M42.0 70.1h1M73.5 22.5h1M45.1 67.4h1M61.0 42.6h1M4.0 131.3h1M80.9 9.7h1M72.4 21.1h1M32.7 85.3h1M52.8 55.8h1M8.0 118.8h1M19.9 109.1h1M22.8 103.7h1M69.6 26.7h1M28.5 88.7h1M37.9 78.0h1M72.5 25.1h1M76.9 17.7h1M45.1 63.3h1M49.0 60.9h1M40.0 75.3h1M63.5 41.0h1M4.7 123.7h1M12.2 114.2h1M30.8 88.8h1M51.5 57.7h1M41.8 80.6h1M37.3 85.6h1M61.7 45.4h1M1.8 135.9h1M58.6 51.9h1M87.6 11.0h1M71.4 33.1h1M10.8 128.2h1M19.3 111.7h1M40.3 83.6h1M0.5 139.2h1M65.7 40.6h1M84.2 17.7h1M22.3 106.9h1"/>
<path stroke="#6a3b6f" d="M102.8 5.4h1M103.5 5.8h1M101.4 11.8h1M104.2 7.7h1M98.3 9.3h1M100.6 11.1h1M100.3 11.6h1M96.1 17.9h1M91.9 18.0h1M92.3 20.3h1M90.4 23.1h1M94.3 23.8h1M88.6 32.1h1M85.9 32.2h1M89.5 32.3h1M91.4 31.5h1M80.7 43.5h1M81.5 45.5h1M81.0 49.0h1M68.1 50.3h1M72.2 54.0h1M72.3 49.8h1M70.8 59.5h1M71.5 56.5h1M75.5 59.9h1M53.4 82.1h1M53.1 78.8h1M53.1 93.8h1M50.6 88.3h1M55.5 87.1h1M46.0 91.6h1M47.9 95.5h1M43.0 100.4h1M45.8 106.3h1M31.4 119.0h1M22.9 130.3h1M24.5 128.6h1M26.1 125.1h1M19.6 129.9h1M23.4 128.1h1M17.9 129.6h1M23.9 131.7h1M8.1 153.3h1M11.9 150.1h1M6.6 164.6h1M4.9 159.4h1M6.0 163.1h1M114.3 5.0h1M116.8 1.7h1M112.7 3.8h1M113.8 10.2h1M115.6 7.1h1M104.9 22.2h1M106.5 22.8h1M111.0 20.0h1M108.3 24.3h1M102.7 22.2h1M101.2 33.5h1M99.3 26.7h1M99.8 28.5h1M97.1 28.5h1M95.9 35.1h1M95.5 34.1h1M98.5 37.7h1M87.0 42.0h1M91.1 50.3h1M77.9 57.7h1M87.5 57.6h1M74.9 69.5h1M77.0 68.2h1M79.6 72.0h1M70.1 77.7h1M69.6 77.5h1M62.9 94.4h1M65.5 88.9h1M55.6 97.2h1M59.4 97.8h1M56.7 103.5h1M43.4 124.3h1M42.9 119.4h1M36.5 134.5h1M34.0 133.4h1M34.4 133.6h1M31.2 135.5h1M33.6 139.9h1M37.4 134.6h1M28.9 139.8h1M29.6 141.0h1M29.0 135.9h1M28.5 138.9h1M29.2 138.3h1M24.3 142.2h1M21.9 145.8h1M21.8 152.7h1M25.0 157.9h1M14.3 170.3h1M16.5 168.3h1M8.9 173.5h1M2.2 187.3h1M126.1 1.0h1M126.6 2.0h1M129.2 6.2h1M126.4 2.2h1M125.6 5.1h1M119.6 14.5h1M121.2 11.6h1M119.1 19.5h1M110.5 25.1h1M107.8 27.2h1M108.5 32.8h1M107.5 36.3h1M100.4 46.3h1M101.9 46.4h1M101.8 44.2h1M101.5 45.4h1M103.8 46.5h1M100.7 45.0h1M92.8 52.2h1M94.6 54.3h1M98.8 52.1h1M96.5 51.3h1M89.6 53.8h1M90.5 60.3h1M91.8 62.9h1M81.2 74.6h1M82.8 72.7h1M80.4 78.6h1M82.3 81.0h1M80.3 78.7h1M72.7 90.3h1M68.9 97.3h1M67.9 92.6h1M69.1 97.6h1M64.3 104.5h1M59.0 112.1h1M56.8 112.3h1M52.7 123.5h1M55.3 124.4h1M54.5 121.4h1M51.9 127.4h1M52.5 124.3h1M49.7 127.1h1M46.1 137.5h1M38.3 134.8h1M44.2 133.0h1M38.9 135.2h1M46.5 137.2h1M29.2 160.9h1M32.2 159.6h1M25.7 169.8h1M22.8 170.4h1M21.1 174.1h1M14.2 178.9h1M15.5 195.0h1M17.9 191.4h1M10.6 187.1h1M133.4 10.3h1M129.9 10.9h1M133.5 12.9h1M132.0 16.9h1M124.7 17.0h1M131.3 17.9h1M130.2 17.8h1M126.5 18.0h1M126.1 16.9h1M122.1 23.9h1M125.4 23.6h1M123.2 28.7h1M119.5 31.4h1M118.4 28.0h1M117.6 35.2h1M117.3 35.9h1M105.8 44.4h1M109.7 46.0h1M107.4 54.8h1M99.6 66.2h1M94.9 65.5h1M101.2 64.4h1M102.0 65.3h1M97.0 68.8h1M92.9 74.6h1M94.1 76.2h1M95.2 76.9h1M91.8 75.1h1M95.5 76.6h1M87.6 89.2h1M78.0 99.1h1M73.2 110.3h1M58.5 130.6h1M47.3 142.9h1M52.3 134.0h1M55.4 141.6h1M44.9 159.4h1M45.0 159.0h1M44.6 158.3h1M49.5 155.0h1M44.5 159.0h1M42.7 167.8h1M27.8 175.2h1M35.2 173.4h1M32.2 176.2h1M24.5 194.8h1M23.0 198.9h1M21.8 201.4h1M21.4 193.1h1M7.3 222.4h1M147.2 2.2h1M141.1 19.6h1M141.8 17.4h1M143.2 16.2h1M137.3 12.7h1M140.5 19.0h1M141.8 15.2h1M115.7 43.1h1M120.9 49.5h1M113.0 55.9h1M118.7 50.7h1M104.7 66.6h1M106.7 69.9h1M107.9 69.8h1M106.8 81.0h1M100.4 79.7h1M107.3 77.5h1M104.1 78.1h1M98.5 83.2h1M96.6 94.4h1M100.0 88.9h1M98.6 88.9h1M97.6 90.9h1M86.6 97.0h1M95.0 94.6h1M87.8 102.6h1M88.9 101.9h1M82.9 113.5h1M80.1 120.3h1M76.4 120.6h1M72.1 131.7h1M67.9 137.5h1M72.2 140.2h1M69.6 137.6h1M62.6 145.6h1M63.2 145.3h1M49.0 167.2h1M49.2 172.8h1M44.9 173.6h1M34.0 197.2h1M36.5 190.3h1M37.6 188.8h1M32.5 200.2h1M32.9 198.4h1M25.5 215.3h1M147.6 12.5h1M145.5 20.8h1M148.1 20.4h1M140.6 21.9h1M144.5 29.6h1M145.0 24.3h1M144.3 25.8h1M144.5 26.4h1M140.2 34.7h1M136.6 36.9h1M135.2 34.2h1M134.5 46.1h1M125.1 51.9h1M126.4 58.7h1M119.2 62.3h1M119.0 66.1h1M118.7 65.5h1M115.7 74.4h1M114.2 72.1h1M116.0 73.4h1M112.0 71.3h1M113.8 82.0h1M106.0 87.5h1M107.2 87.4h1M109.7 83.4h1M104.5 83.1h1M94.5 110.1h1M82.0 135.2h1M76.9 143.7h1M59.6 166.9h1M55.8 180.2h1M51.8 179.6h1M56.0 184.2h1M51.3 187.7h1M53.1 185.3h1M46.4 194.6h1M45.3 197.5h1M41.0 195.8h1M37.0 205.5h1M29.1 225.4h1M30.3 222.2h1M28.6 229.5h1M32.8 224.3h1M22.3 231.0h1M27.8 234.4h1M24.0 232.6h1M164.2 6.0h1M166.6 7.0h1M162.2 6.0h1M164.9 3.3h1M162.9 8.1h1M161.7 15.8h1M159.0 7.0h1M162.6 12.0h1M162.3 12.7h1M160.5 16.3h1M151.8 23.4h1M152.5 27.3h1M150.2 30.7h1M141.6 42.9h1M141.0 45.3h1M145.4 51.9h1M141.2 48.5h1M131.7 56.5h1M140.8 54.6h1M138.1 53.8h1M127.2 71.4h1M130.0 75.2h1M125.6 72.9h1M118.6 85.9h1M124.9 81.9h1M113.0 97.3h1M108.7 95.9h1M110.5 103.1h1M109.8 109.6h1M106.5 108.6h1M94.7 130.9h1M91.4 137.7h1M83.9 146.8h1M80.6 155.1h1M77.5 161.9h1M77.0 163.4h1M62.7 185.5h1M60.7 183.1h1M62.5 196.9h1M69.5 188.7h1M58.5 199.9h1M57.5 200.3h1M62.4 197.0h1M56.2 200.4h1M62.6 199.5h1M51.9 209.4h1M48.1 208.6h1M43.1 222.4h1M42.4 235.5h1M35.7 231.5h1M169.8 9.3h1M171.5 6.2h1M172.4 8.7h1M172.2 8.3h1M166.8 23.5h1M169.5 21.3h1M162.7 23.2h1M158.0 25.2h1M167.3 24.7h1M160.0 21.0h1M158.2 35.5h1M155.6 38.4h1M152.0 36.3h1M158.6 42.3h1M155.7 50.8h1M151.8 53.9h1M150.8 55.1h1M149.7 57.1h1M146.4 57.1h1M139.3 71.3h1M135.3 68.9h1M141.7 63.3h1M140.6 68.3h1M141.6 72.6h1M136.0 72.2h1M134.8 81.9h1M129.7 89.5h1M89.0 155.4h1M86.5 157.7h1M88.5 157.8h1M80.7 177.5h1M83.5 171.7h1M85.7 177.9h1M73.0 191.2h1M72.0 196.1h1M64.2 205.5h1M60.3 216.2h1M58.0 213.0h1M61.9 213.0h1M52.8 224.4h1M56.7 222.7h1M48.1 232.8h1M50.4 235.7h1M48.0 234.5h1M55.5 232.3h1M42.5 241.8h1M38.4 245.7h1M185.6 11.6h1M182.3 16.2h1M179.2 12.3h1M173.7 21.2h1M180.7 17.0h1M179.7 18.4h1M177.2 21.9h1M175.7 16.1h1M176.1 19.0h1M173.2 20.4h1M173.4 24.8h1M168.3 27.9h1M165.2 28.5h1M163.7 34.1h1M165.3 38.0h1M166.8 37.9h1M161.1 44.7h1M159.2 52.9h1M152.3 60.2h1M153.6 52.4h1M155.8 67.6h1M146.7 68.5h1M145.3 70.5h1M148.7 70.0h1M145.8 76.4h1M145.6 81.6h1M150.2 81.5h1M139.4 95.5h1M128.6 99.9h1M128.5 108.2h1M126.6 115.1h1M97.5 172.6h1M88.5 180.9h1M86.8 183.7h1M90.1 182.6h1M91.0 177.6h1M87.3 181.6h1M87.9 189.8h1M76.7 195.4h1M84.5 196.3h1M80.7 199.2h1M80.5 201.0h1M82.2 201.1h1M74.4 209.6h1M79.4 205.4h1M73.7 208.6h1M63.7 233.5h1M59.4 238.4h1M51.5 248.8h1M186.8 18.2h1M179.4 24.1h1M185.1 20.0h1M183.8 25.6h1M182.8 28.5h1M184.5 23.6h1M180.5 24.7h1M176.5 39.2h1M175.5 39.4h1M175.0 41.4h1M172.7 42.0h1M174.4 43.3h1M175.4 43.4h1M171.0 39.3h1M175.3 51.0h1M165.4 61.3h1M163.3 57.8h1M159.9 70.5h1M154.1 74.5h1M155.9 74.4h1M155.6 74.8h1M156.1 74.7h1M153.0 81.3h1M150.2 77.4h1M151.6 86.4h1M148.4 77.2h1M157.8 81.3h1M145.4 88.2h1M151.6 86.7h1M141.8 100.3h1M129.6 123.2h1M91.8 186.7h1M98.5 198.6h1M89.0 196.9h1M92.4 196.2h1M90.6 206.0h1M77.6 223.4h1M84.0 222.1h1M76.4 224.4h1M69.1 236.6h1M68.8 233.9h1M67.3 244.4h1M62.6 248.9h1M60.6 255.2h1M196.5 19.3h1M191.4 23.1h1M186.9 27.5h1M188.0 32.9h1M179.5 47.1h1M182.8 46.0h1M181.6 45.3h1M181.3 46.8h1M177.6 53.5h1M179.9 51.2h1M178.9 58.2h1M176.6 53.0h1M175.7 57.3h1M172.4 69.4h1M165.7 74.4h1M165.6 79.9h1M162.4 76.6h1M163.7 82.3h1M159.7 80.5h1M158.1 88.1h1M156.4 94.8h1M111.1 185.3h1M111.8 183.3h1M101.3 205.8h1M101.4 198.3h1M104.6 198.5h1M101.4 210.7h1M95.6 213.2h1M91.8 216.0h1M98.1 214.6h1M93.5 216.6h1M87.6 216.6h1M86.8 228.0h1M73.4 256.7h1M73.2 254.1h1M76.0 258.8h1M73.9 254.5h1M73.6 255.3h1M74.2 253.7h1M202.6 26.7h1M203.4 23.2h1M199.4 27.3h1M201.9 35.0h1M201.6 34.3h1M199.4 31.3h1M199.1 27.3h1M200.8 33.5h1M202.8 32.8h1M201.9 28.8h1M198.2 28.0h1M193.7 31.0h1M194.2 39.2h1M192.7 40.1h1M195.2 37.5h1M195.4 44.3h1M193.2 43.4h1M188.9 45.0h1M184.2 50.8h1M185.0 50.8h1M188.2 59.9h1M181.8 62.1h1M185.0 65.7h1M186.1 66.2h1M178.8 67.9h1M180.9 66.8h1M184.1 67.7h1M177.3 67.8h1M181.3 65.2h1M180.8 68.4h1M172.3 81.3h1M168.2 94.6h1M137.5 168.8h1M122.2 181.2h1M117.1 193.4h1M116.6 193.6h1M112.0 205.4h1M116.3 206.2h1M104.6 208.2h1M110.1 225.9h1M93.0 241.8h1M83.1 252.4h1M86.4 251.6h1M82.0 247.4h1M209.7 30.7h1M204.9 33.9h1M206.9 36.7h1M192.7 55.4h1M197.8 53.6h1M192.9 63.3h1M195.2 60.4h1M189.6 67.3h1M182.3 75.6h1M184.7 73.2h1M183.6 79.9h1M183.0 79.6h1M180.8 77.4h1M187.3 83.6h1M177.2 92.4h1M178.9 88.7h1M181.4 90.4h1M178.5 97.1h1M136.5 183.2h1M132.8 184.6h1M133.9 191.2h1M125.7 189.6h1M129.1 187.8h1M128.5 188.4h1M126.5 197.7h1M123.3 205.4h1M123.6 202.3h1M117.1 216.4h1M114.9 216.7h1M116.9 217.7h1M110.3 220.8h1M108.5 226.4h1M112.8 233.1h1M108.1 235.0h1M109.4 232.8h1M112.3 238.9h1M109.4 233.2h1M103.5 243.1h1M91.4 261.5h1M217.2 35.1h1M209.2 40.2h1M211.3 39.1h1M213.8 41.7h1M208.1 39.3h1M205.3 48.5h1M206.0 57.7h1M198.5 62.7h1M198.2 70.4h1M200.7 66.9h1M199.4 63.2h1M201.4 64.9h1M199.6 65.2h1M199.0 67.8h1M192.0 80.7h1M194.9 78.6h1M191.9 82.7h1M155.2 169.0h1M149.5 169.9h1M151.7 164.6h1M150.2 181.8h1M147.4 179.6h1M141.4 184.5h1M145.7 188.6h1M138.2 183.0h1M139.4 195.7h1M138.5 192.9h1M138.9 194.1h1M137.4 187.8h1M137.8 192.1h1M135.5 204.0h1M133.1 222.2h1M115.2 241.2h1M106.9 252.3h1M228.7 39.1h1M217.5 38.6h1M217.1 50.5h1M220.6 53.4h1M217.4 48.7h1M212.6 55.7h1M212.3 52.6h1M211.6 62.5h1M208.0 67.0h1M209.0 69.7h1M211.4 77.0h1M201.8 79.1h1M203.5 76.7h1M201.7 76.9h1M202.1 82.3h1M163.4 172.6h1M150.8 191.1h1M143.0 212.2h1M137.8 212.1h1M143.0 219.4h1M133.5 222.6h1M133.3 227.2h1M117.9 261.9h1M114.3 264.4h1M117.1 263.5h1M120.4 260.4h1M111.5 272.7h1M229.2 34.7h1M222.2 62.0h1M221.9 62.4h1M221.3 61.4h1M219.4 66.0h1M215.6 74.9h1M217.6 73.3h1M219.0 74.4h1M160.0 197.0h1M156.4 202.3h1M152.7 212.4h1M152.2 211.8h1M153.1 215.5h1M137.3 252.0h1M135.1 249.6h1M129.8 258.7h1M129.8 257.9h1M129.8 267.1h1M124.9 268.7h1M123.1 272.3h1M130.6 270.9h1M116.2 287.5h1M234.2 48.2h1M233.0 52.4h1M236.3 51.1h1M233.0 58.9h1M230.2 56.1h1M232.9 57.8h1M229.9 59.4h1M234.2 56.4h1M230.0 59.7h1M229.4 65.5h1M229.8 62.1h1M226.1 70.7h1M224.3 80.7h1M177.3 169.8h1M167.4 201.4h1M170.1 204.5h1M163.3 205.9h1M162.2 208.2h1M155.8 229.6h1M157.8 226.0h1M139.7 267.8h1M137.9 266.8h1M138.1 267.6h1M142.2 267.1h1M140.8 263.9h1M135.8 272.5h1M134.7 276.3h1M130.1 285.0h1M123.6 288.4h1M244.8 51.8h1M245.0 49.4h1M242.6 54.4h1M242.7 55.1h1M240.3 55.4h1M243.6 51.5h1M243.6 55.3h1M240.6 60.1h1M240.1 65.3h1M238.1 67.8h1M233.6 66.0h1M233.4 68.6h1M233.8 74.8h1M233.7 73.0h1M233.1 75.2h1M212.0 123.5h1M179.6 195.3h1M178.7 202.7h1M172.7 212.3h1M163.8 231.7h1M166.7 230.8h1M162.5 239.8h1M161.8 240.2h1M154.8 251.8h1M152.3 263.5h1M147.1 274.3h1M146.4 271.0h1M143.7 278.7h1M137.6 290.2h1M136.1 295.2h1M250.4 59.2h1M249.2 59.5h1M239.7 83.0h1M236.4 90.1h1M227.8 111.9h1M228.9 111.7h1M226.5 113.0h1M215.3 137.6h1M191.7 193.4h1M179.9 228.8h1M172.5 229.4h1M169.0 244.4h1M170.2 251.3h1M170.7 246.1h1M166.3 253.0h1M173.0 252.5h1M159.6 270.2h1M158.4 261.1h1M162.6 262.1h1M155.5 272.8h1M156.2 272.2h1M162.1 275.2h1M154.3 282.9h1M154.3 284.3h1M152.6 281.8h1M153.7 279.9h1M147.0 293.1h1M259.7 58.5h1M249.3 78.9h1M254.1 76.8h1M240.0 102.3h1M236.3 110.1h1M239.6 118.3h1M235.8 123.2h1M203.1 187.0h1M195.3 192.8h1M190.1 221.6h1M191.0 219.6h1M185.2 232.0h1M182.0 238.3h1M179.3 243.3h1M177.2 248.6h1M176.1 247.7h1M177.6 246.5h1M175.0 256.0h1M170.4 267.1h1M175.0 260.1h1M170.9 268.8h1M172.8 268.3h1M162.6 287.9h1M162.6 287.4h1M162.5 287.7h1M161.2 287.9h1M162.1 288.0h1M156.0 301.3h1M258.5 74.2h1M253.5 84.2h1M253.0 93.8h1M253.3 93.5h1M252.1 99.5h1M242.5 114.5h1M242.2 121.0h1M240.9 119.5h1M210.0 200.3h1M200.7 224.3h1M194.7 229.3h1M193.8 236.3h1M193.5 244.4h1M191.0 245.9h1M176.6 270.3h1M172.3 279.2h1M172.4 284.7h1M170.5 298.2h1M165.8 309.5h1M265.0 83.5h1M253.3 119.8h1M252.1 119.5h1M252.6 120.2h1M247.0 133.2h1M216.3 214.5h1M206.4 227.9h1M196.1 259.2h1M199.4 259.7h1M189.8 261.5h1M189.0 278.2h1M192.1 275.2h1M189.7 277.7h1M188.1 279.9h1M181.1 294.8h1M280.1 66.9h1M275.0 81.9h1M274.2 83.7h1M271.5 81.4h1M272.3 88.2h1M269.0 92.1h1M272.4 92.5h1M261.4 114.5h1M260.8 115.4h1M259.6 120.8h1M256.0 130.0h1M257.2 128.8h1M257.5 128.1h1M221.0 216.3h1M219.4 217.2h1M217.5 228.0h1M214.6 236.9h1M216.5 230.8h1M214.6 237.5h1M207.8 255.6h1M205.4 263.3h1M204.8 263.6h1M201.0 267.2h1M202.5 269.6h1M196.3 278.8h1M196.1 292.3h1M194.9 291.1h1M188.2 300.9h1M189.9 301.5h1M186.8 310.3h1M186.4 313.6h1M286.2 77.6h1M280.0 89.5h1M275.2 96.4h1M271.9 117.1h1M269.5 119.5h1M268.0 124.0h1M264.5 133.0h1M265.1 133.0h1M238.4 206.9h1M226.9 228.7h1M225.1 234.7h1M224.8 238.1h1M217.1 247.1h1M218.3 251.0h1M218.7 247.8h1M220.5 251.3h1M213.3 267.5h1M214.9 270.7h1M212.5 286.8h1M205.8 300.3h1M198.2 307.0h1M196.6 316.5h1M194.2 311.3h1M278.3 110.0h1M281.9 108.1h1M279.2 116.5h1M276.9 122.4h1M276.5 124.8h1M276.9 131.5h1M273.4 136.8h1M245.6 208.1h1M229.1 241.6h1M229.2 241.7h1M232.6 254.7h1M225.0 260.5h1M219.2 279.0h1M218.2 280.6h1M211.6 298.6h1M294.9 98.3h1M289.5 108.5h1M290.1 117.9h1M283.7 128.8h1M280.9 135.5h1M277.0 134.4h1M278.4 149.7h1M275.4 150.3h1M271.6 159.7h1M258.6 194.8h1M247.5 229.1h1M229.2 274.0h1M227.9 283.1h1M214.6 317.8h1M217.6 315.7h1M216.2 323.6h1M209.7 332.4h1M313.4 86.4h1M298.1 113.0h1M296.0 128.3h1M293.1 132.5h1M291.4 126.7h1M288.9 136.6h1M278.6 187.2h1M255.9 230.9h1M239.4 279.8h1M231.2 298.7h1M230.0 308.2h1M230.2 306.0h1M226.5 319.1h1M228.3 315.9h1M226.9 318.8h1M226.8 319.3h1M316.2 86.4h1M312.4 87.4h1M309.1 100.7h1M310.0 98.1h1M309.3 105.2h1M307.1 110.0h1M303.9 122.1h1M299.6 127.5h1M290.9 140.8h1M294.9 143.2h1M291.9 158.8h1M292.4 157.6h1M256.6 257.3h1M241.1 300.5h1M241.1 301.8h1M237.9 312.0h1M236.5 313.8h1M233.4 329.2h1M231.3 335.8h1M321.9 98.6h1M321.5 96.8h1M306.2 139.0h1M307.2 137.5h1M307.0 148.9h1M298.5 165.8h1M297.4 168.7h1M288.8 191.0h1M277.3 241.4h1M266.6 260.0h1M253.3 296.7h1M251.4 307.9h1M249.7 306.2h1M247.6 306.2h1M246.5 314.2h1M245.6 315.7h1M240.9 329.0h1M236.4 335.4h1M238.3 336.6h1M326.2 101.3h1M328.3 107.5h1M324.3 111.7h1M321.0 116.2h1M322.3 124.6h1M315.2 128.4h1M317.6 129.9h1M317.3 129.4h1M317.1 130.1h1M318.3 138.4h1M315.2 136.1h1M310.7 146.8h1M310.1 152.4h1M310.2 157.8h1M305.3 176.3h1M284.1 239.3h1M277.8 248.7h1M278.6 247.1h1M270.7 264.7h1M270.2 272.0h1M262.4 305.2h1M263.9 299.1h1M256.3 312.3h1M257.1 319.3h1M255.7 326.2h1M256.6 320.7h1M257.5 313.6h1M253.8 317.3h1M253.1 343.9h1M336.8 98.7h1M332.4 106.2h1M332.9 117.0h1M327.3 115.3h1M319.4 149.3h1M320.4 146.0h1M318.4 151.7h1M320.4 147.9h1M316.5 160.3h1M314.5 172.7h1M309.4 182.9h1M275.5 287.7h1M271.3 295.0h1M267.4 310.5h1M265.8 316.9h1M268.0 314.8h1M267.1 317.1h1M266.0 324.6h1M56.7 39.6h1M57.1 38.7h1M31.0 57.3h1M51.6 46.0h1M54.7 24.3h1M31.2 81.6h1M48.5 49.2h1M0.7 100.1h1M46.4 49.3h1M38.2 63.1h1M65.2 29.5h1M6.5 108.2h1M64.1 29.7h1M0.8 109.0h1M20.4 75.6h1M35.1 50.1h1M58.2 40.7h1M54.0 31.4h1M65.6 12.6h1M46.1 47.0h1M29.2 73.1h1M51.6 23.9h1M11.3 88.2h1M37.3 63.2h1M51.1 50.9h1M48.3 51.4h1M14.7 85.8h1M38.0 46.8h1M6.7 97.6h1M25.6 68.1h1M51.8 48.3h1M83.0 0.8h1M33.1 58.8h1M67.9 1.2h1M40.0 59.8h1M26.2 70.7h1M48.5 32.4h1M40.3 61.4h1M33.8 66.9h1M38.3 55.4h1M62.5 20.3h1M28.8 71.6h1M41.2 65.3h1M6.2 119.7h1M42.7 39.4h1M34.8 64.6h1M24.7 68.5h1M25.9 68.5h1M60.1 20.1h1M23.7 85.1h1M48.9 26.3h1M66.1 12.6h1M63.1 17.6h1M34.7 90.8h1M6.3 133.4h1M32.0 94.5h1M64.4 43.5h1M88.3 8.0h1M1.4 139.9h1M73.3 28.1h1M84.8 4.9h1M91.4 5.0h1M28.4 97.2h1M7.7 134.6h1M55.1 58.0h1M80.8 19.7h1M80.9 18.4h1M3.3 134.5h1M56.8 58.0h1M37.7 84.4h1M90.1 4.0h1M74.8 27.2h1M66.6 39.9h1M63.4 47.3h1M54.3 57.8h1M45.5 75.8h1M33.4 92.9h1M83.9 15.6h1M23.5 105.6h1M86.2 9.0h1M53.0 66.1h1M45.1 77.4h1M31.3 97.1h1M39.7 80.3h1M8.0 127.1h1M323.1 92.1h1M201.7 23.9h1M291.8 77.4h1M233.0 46.6h1M324.8 93.8h1M322.0 93.4h1M204.2 27.8h1M313.3 88.5h1M193.0 21.7h1M294.7 76.4h1M226.2 40.0h1M300.1 79.2h1M306.2 82.6h1M263.3 61.0h1M319.1 88.9h1M304.7 84.4h1M210.7 30.0h1M214.7 31.8h1M317.5 89.5h1M281.5 73.1h1M198.6 23.4h1M258.7 55.4h1M232.6 42.6h1M257.8 57.4h1M267.8 62.2h1M218.8 35.8h1M311.4 84.8h1M295.5 79.4h1M170.4 8.8h1M313.0 86.6h1M200.8 27.3h1M167.3 6.3h1M168.9 9.1h1M178.0 12.3h1M224.6 39.0h1M180.7 13.4h1M250.8 52.2h1M253.0 53.1h1M179.1 13.7h1M295.3 76.2h1M305.2 84.4h1M317.4 89.8h1M278.1 69.0h1M198.9 23.7h1M233.7 43.5h1M272.1 65.9h1M171.2 9.7h1M281.0 69.1h1M292.2 76.9h1M170.8 8.1h1M279.0 71.9h1M250.6 52.3h1M186.9 17.6h1M285.5 74.8h1M310.4 84.4h1M245.3 50.7h1M239.1 46.9h1M154.4 1.1h1M292.4 75.4h1M228.5 40.5h1M312.7 87.7h1M252.8 53.8h1M181.1 14.0h1M178.7 13.4h1M327.4 96.2h1M205.1 28.7h1M154.3 1.6h1M198.2 23.3h1M186.6 19.4h1M170.5 7.9h1M330.7 98.8h1M307.5 83.5h1M298.5 79.8h1M282.9 69.1h1M315.8 90.6h1M235.3 44.2h1M183.1 15.3h1M329.7 99.6h1M329.3 103.6h1M337.7 101.0h1M337.3 100.1h1M323.0 101.6h1M326.0 115.1h1M329.3 103.0h1M331.5 108.8h1M330.4 99.5h1M327.5 105.0h1M328.9 102.3h1M330.2 105.8h1M332.4 101.7h1M321.5 105.0h1M337.4 109.2h1M327.1 96.6h1M326.7 104.7h1M331.3 100.6h1M327.6 99.6h1M329.4 105.1h1M333.3 101.6h1M330.5 102.6h1M322.3 99.2h1M327.9 109.2h1M331.7 98.8h1M110.4 272.8h1M139.2 280.6h1M146.8 291.0h1M155.9 296.6h1M140.0 288.5h1M145.4 286.9h1M123.2 278.5h1M93.0 262.0h1M208.3 321.9h1M125.1 278.2h1M223.8 325.7h1M232.3 334.0h1M94.9 261.5h1M243.9 334.1h1M245.5 336.5h1M73.6 253.9h1M124.8 277.8h1"/>
<path stroke="#914176" d="M105.3 3.1h1M105.9 5.8h1M98.9 6.7h1M101.8 11.0h1M97.6 17.4h1M96.9 18.6h1M93.1 16.8h1M94.9 21.0h1M93.8 26.0h1M92.7 26.7h1M93.8 30.7h1M90.4 30.6h1M90.0 33.3h1M90.0 32.1h1M94.0 33.4h1M90.9 30.2h1M78.9 43.4h1M80.9 46.2h1M82.2 41.3h1M75.4 46.1h1M80.0 43.8h1M69.8 59.0h1M69.5 57.0h1M74.7 60.0h1M71.1 56.8h1M70.2 59.5h1M69.6 57.5h1M67.5 66.1h1M65.2 64.9h1M51.1 89.1h1M53.1 84.3h1M43.1 95.0h1M44.3 95.2h1M47.1 94.7h1M42.6 105.8h1M42.9 104.8h1M43.1 103.3h1M36.4 112.4h1M24.2 126.4h1M25.2 127.0h1M20.1 134.0h1M6.4 150.5h1M8.7 154.6h1M6.8 165.3h1M6.3 164.0h1M7.5 161.1h1M10.7 162.1h1M7.1 165.3h1M113.4 10.2h1M109.6 12.0h1M100.4 21.5h1M106.4 22.0h1M104.0 22.8h1M110.2 22.7h1M96.9 27.5h1M89.6 36.6h1M92.2 42.0h1M90.8 49.1h1M82.1 56.1h1M82.8 56.3h1M82.3 55.4h1M82.6 55.2h1M84.5 55.6h1M85.1 54.3h1M88.9 53.7h1M80.5 60.6h1M82.7 67.5h1M80.3 62.3h1M80.6 60.4h1M70.0 76.7h1M70.5 75.4h1M66.6 77.8h1M60.7 91.1h1M53.1 107.9h1M53.4 107.4h1M52.2 105.1h1M47.6 122.0h1M41.5 124.3h1M43.8 118.2h1M36.5 134.4h1M43.1 137.1h1M36.6 138.6h1M32.3 132.3h1M40.9 136.0h1M39.6 135.8h1M36.4 136.0h1M24.1 150.5h1M18.9 159.2h1M17.6 165.1h1M10.0 174.2h1M10.3 175.2h1M1.8 187.0h1M0.3 187.3h1M1.5 186.3h1M0.2 187.2h1M2.1 191.6h1M130.4 2.8h1M127.2 0.5h1M124.4 5.7h1M124.5 6.5h1M129.0 3.6h1M123.0 7.5h1M129.2 7.1h1M118.9 12.1h1M123.5 18.0h1M120.0 15.8h1M117.4 17.7h1M116.9 24.0h1M113.2 26.2h1M115.0 28.4h1M104.6 30.8h1M111.4 34.6h1M104.1 41.2h1M102.7 39.6h1M101.4 45.3h1M96.1 54.6h1M99.1 53.0h1M97.2 51.5h1M95.4 54.6h1M93.0 59.3h1M91.7 61.2h1M96.2 61.7h1M93.7 59.6h1M93.9 59.3h1M92.8 61.6h1M86.6 66.7h1M83.1 74.3h1M83.0 73.5h1M81.8 76.7h1M68.0 97.1h1M64.9 107.5h1M61.7 112.3h1M53.6 122.2h1M53.8 125.2h1M43.1 137.0h1M42.9 135.7h1M42.8 135.5h1M29.5 161.1h1M23.0 172.6h1M16.6 179.2h1M17.6 179.4h1M17.8 179.7h1M16.3 180.7h1M17.8 180.1h1M15.3 191.8h1M6.3 196.0h1M0.1 208.9h1M136.0 5.9h1M133.0 10.8h1M131.9 12.2h1M126.1 16.6h1M126.4 17.1h1M126.1 17.4h1M123.3 29.4h1M122.2 31.3h1M115.2 39.7h1M115.8 35.4h1M110.5 43.6h1M107.2 53.4h1M109.8 50.6h1M108.8 58.6h1M101.3 66.1h1M98.6 62.5h1M94.5 78.3h1M84.3 88.1h1M85.7 87.1h1M87.2 82.7h1M82.5 94.1h1M83.2 91.2h1M78.3 99.2h1M74.2 108.3h1M64.5 125.4h1M60.2 135.7h1M59.0 133.9h1M60.2 127.8h1M54.3 139.9h1M54.2 142.6h1M45.6 160.7h1M44.7 160.1h1M41.2 160.3h1M41.2 163.3h1M40.1 168.4h1M31.5 176.9h1M31.4 178.0h1M31.7 177.5h1M30.4 181.3h1M33.0 179.6h1M16.2 202.7h1M13.4 204.7h1M17.4 204.3h1M12.2 213.6h1M9.8 217.2h1M10.6 210.4h1M148.1 3.6h1M146.8 9.9h1M140.1 14.4h1M140.7 15.1h1M140.4 15.0h1M132.2 20.5h1M139.2 25.5h1M127.9 35.5h1M126.7 32.7h1M124.1 42.8h1M124.5 43.8h1M123.0 42.4h1M123.8 42.8h1M123.5 43.3h1M119.6 48.6h1M123.9 47.1h1M119.3 42.3h1M121.1 45.5h1M120.5 47.9h1M117.5 46.7h1M119.2 46.3h1M120.9 47.7h1M118.2 55.3h1M119.7 51.8h1M111.6 63.1h1M105.1 70.4h1M107.3 71.4h1M108.3 65.9h1M106.4 70.4h1M109.4 68.2h1M103.0 68.9h1M109.3 66.8h1M104.6 81.3h1M103.9 77.8h1M104.8 74.2h1M103.0 71.2h1M100.3 83.1h1M92.9 96.6h1M88.3 107.3h1M70.9 126.9h1M71.9 127.0h1M72.2 128.5h1M75.8 129.7h1M71.0 131.8h1M72.9 126.5h1M63.6 136.7h1M65.8 138.1h1M55.4 158.8h1M59.0 154.3h1M56.4 161.5h1M49.2 159.8h1M60.2 163.4h1M48.7 176.8h1M42.4 178.7h1M44.1 176.1h1M41.7 179.2h1M39.1 175.9h1M42.5 181.0h1M45.3 176.3h1M31.8 187.9h1M37.4 190.7h1M40.6 192.5h1M39.4 186.4h1M36.3 190.7h1M39.5 186.6h1M35.3 194.4h1M34.0 186.5h1M32.9 199.7h1M34.7 197.9h1M34.7 197.4h1M35.9 202.3h1M21.6 216.1h1M13.4 228.8h1M158.8 1.8h1M159.0 0.5h1M160.7 1.8h1M154.2 5.9h1M149.7 13.2h1M151.0 13.0h1M146.5 21.7h1M143.6 26.6h1M134.8 40.3h1M136.8 37.4h1M127.1 48.0h1M129.5 50.8h1M128.0 54.5h1M127.2 54.1h1M130.4 48.8h1M126.6 59.3h1M124.1 60.6h1M125.3 57.4h1M119.4 66.5h1M120.3 65.8h1M121.1 66.5h1M121.5 64.6h1M117.2 68.9h1M122.3 64.6h1M115.3 73.8h1M116.8 72.6h1M116.5 74.0h1M114.3 79.3h1M111.6 82.9h1M97.8 103.0h1M101.2 103.7h1M95.0 111.9h1M95.0 111.8h1M80.0 133.5h1M61.3 159.1h1M54.4 175.4h1M54.5 187.3h1M53.0 187.6h1M56.6 183.6h1M44.4 199.0h1M45.7 195.9h1M41.1 204.6h1M36.0 211.8h1M33.4 214.7h1M34.2 217.9h1M23.8 232.5h1M24.6 233.0h1M25.6 232.6h1M25.9 239.2h1M25.1 234.2h1M166.1 5.0h1M163.9 6.6h1M166.4 6.6h1M165.5 0.6h1M165.0 4.3h1M164.7 4.0h1M161.7 12.0h1M161.9 10.4h1M164.4 16.2h1M162.0 10.7h1M161.3 12.8h1M160.3 18.2h1M155.8 15.4h1M155.5 21.1h1M153.5 22.4h1M152.2 24.7h1M154.2 22.7h1M157.5 24.9h1M149.3 28.4h1M145.0 30.6h1M150.0 29.7h1M147.8 28.7h1M151.0 30.4h1M148.3 36.3h1M146.7 36.9h1M137.5 48.6h1M138.5 47.7h1M140.3 59.0h1M134.7 57.7h1M132.1 57.3h1M137.9 58.1h1M138.5 60.4h1M135.0 61.3h1M138.5 60.1h1M134.8 60.4h1M131.8 64.6h1M128.5 69.5h1M128.2 72.5h1M130.6 68.2h1M124.5 74.4h1M125.1 76.8h1M114.3 93.9h1M112.1 96.8h1M113.4 97.1h1M112.0 98.2h1M113.0 97.4h1M113.8 95.9h1M108.6 107.2h1M106.0 103.8h1M75.6 166.1h1M69.0 165.6h1M71.9 173.7h1M68.5 177.9h1M65.6 192.6h1M66.0 183.6h1M60.4 194.0h1M58.0 198.9h1M54.5 203.0h1M50.9 211.1h1M51.5 207.7h1M50.2 209.3h1M45.0 218.0h1M46.5 220.0h1M36.4 236.5h1M176.3 6.9h1M171.4 8.1h1M175.3 10.7h1M173.5 17.4h1M170.0 15.2h1M173.6 17.4h1M166.9 22.3h1M169.2 20.5h1M164.9 16.1h1M158.2 35.7h1M159.0 32.5h1M155.2 41.0h1M159.0 41.1h1M156.9 39.8h1M158.1 39.5h1M156.0 40.3h1M154.6 41.1h1M144.1 59.8h1M145.6 61.4h1M144.9 59.8h1M142.4 68.1h1M137.4 66.0h1M143.3 68.5h1M136.1 73.1h1M134.6 74.9h1M127.2 96.2h1M123.4 98.7h1M118.6 103.2h1M118.6 103.5h1M88.6 158.2h1M77.1 176.1h1M83.5 178.0h1M79.4 177.2h1M75.8 187.7h1M70.1 197.1h1M69.4 194.9h1M69.9 208.6h1M66.1 205.4h1M65.6 206.1h1M62.1 214.9h1M64.2 215.8h1M58.6 223.4h1M57.2 222.6h1M52.1 231.5h1M51.0 233.3h1M51.0 232.0h1M49.8 237.4h1M42.0 242.1h1M40.7 242.8h1M43.6 242.2h1M172.7 25.7h1M168.7 32.1h1M165.2 30.9h1M168.9 38.6h1M169.1 43.9h1M167.9 36.4h1M164.0 42.1h1M166.3 38.6h1M162.2 44.3h1M167.0 42.7h1M161.3 46.3h1M164.7 51.2h1M159.0 48.9h1M153.5 54.2h1M148.5 67.3h1M151.9 66.5h1M150.4 66.1h1M149.0 72.7h1M145.9 77.9h1M143.3 85.7h1M139.9 86.5h1M137.3 93.4h1M136.3 104.5h1M133.8 109.2h1M128.3 105.2h1M94.3 173.1h1M90.6 177.3h1M93.4 180.8h1M79.9 199.8h1M84.1 201.1h1M73.2 199.1h1M77.4 200.6h1M74.1 207.4h1M70.4 214.2h1M70.6 216.6h1M60.8 232.5h1M61.8 239.1h1M59.1 234.8h1M57.7 255.8h1M53.3 246.7h1M55.6 246.9h1M54.2 249.0h1M55.9 245.5h1M188.2 17.4h1M192.6 15.6h1M185.1 29.1h1M183.7 24.6h1M184.1 31.5h1M178.8 30.0h1M179.3 36.0h1M178.1 36.5h1M172.0 42.4h1M173.6 41.5h1M174.0 42.8h1M175.6 42.5h1M172.8 45.0h1M174.2 41.8h1M174.5 42.1h1M173.6 47.1h1M164.2 51.4h1M167.0 54.9h1M155.5 67.9h1M159.0 70.2h1M160.2 68.8h1M150.0 84.9h1M151.2 83.9h1M150.7 82.7h1M151.7 82.1h1M147.8 89.6h1M152.8 92.0h1M147.5 90.5h1M149.9 91.2h1M149.8 89.2h1M145.0 100.4h1M144.5 98.3h1M96.3 177.9h1M92.1 187.6h1M98.8 184.1h1M84.5 208.3h1M84.4 214.8h1M71.0 228.8h1M70.4 239.7h1M68.5 240.6h1M67.4 235.3h1M62.3 251.0h1M62.0 249.1h1M193.6 20.6h1M194.3 21.7h1M191.5 23.0h1M197.5 20.5h1M197.0 22.5h1M190.6 27.1h1M190.3 28.9h1M190.1 27.4h1M191.7 27.9h1M189.9 31.2h1M187.6 37.1h1M178.9 47.9h1M177.2 52.2h1M178.0 52.9h1M174.9 48.5h1M177.0 58.8h1M175.0 58.1h1M173.6 56.9h1M171.6 56.4h1M175.4 56.0h1M174.7 67.8h1M167.5 70.6h1M162.3 71.9h1M168.1 86.2h1M158.8 89.5h1M158.6 89.1h1M161.2 85.6h1M154.8 93.3h1M151.8 96.7h1M153.3 100.8h1M111.9 182.6h1M112.0 186.5h1M107.8 198.2h1M101.2 201.3h1M100.3 199.0h1M101.8 195.5h1M102.0 197.8h1M93.4 208.2h1M94.9 203.0h1M98.2 211.5h1M92.8 216.0h1M87.9 227.2h1M81.1 235.0h1M83.3 236.9h1M78.2 245.8h1M77.6 246.6h1M76.0 247.7h1M72.3 258.2h1M200.0 27.9h1M201.8 27.5h1M205.3 24.7h1M202.5 29.5h1M205.0 28.3h1M198.4 31.4h1M198.3 32.6h1M199.6 29.4h1M196.4 39.5h1M188.6 46.3h1M188.1 50.9h1M188.1 45.1h1M184.8 47.0h1M186.5 44.6h1M179.2 68.3h1M178.5 68.9h1M172.3 84.6h1M171.1 93.7h1M134.2 161.0h1M133.5 160.5h1M130.2 171.0h1M128.1 171.8h1M131.2 169.7h1M116.9 189.9h1M119.5 196.9h1M109.5 204.6h1M112.0 205.2h1M113.6 205.8h1M109.4 207.3h1M112.2 205.6h1M97.7 231.5h1M98.0 231.6h1M97.7 231.8h1M96.8 240.1h1M86.4 249.4h1M87.1 249.1h1M87.5 252.1h1M207.4 28.8h1M201.3 52.0h1M196.5 56.3h1M195.5 60.9h1M192.3 60.2h1M190.9 66.7h1M189.6 66.1h1M192.6 67.1h1M185.3 73.8h1M184.2 75.0h1M180.3 75.1h1M181.4 73.5h1M181.4 79.5h1M184.3 81.2h1M188.8 80.8h1M178.7 89.3h1M151.6 148.2h1M147.0 167.6h1M151.0 164.0h1M128.2 191.4h1M131.0 186.9h1M127.9 189.7h1M126.2 196.3h1M125.3 200.9h1M118.7 202.2h1M125.5 203.0h1M127.2 211.7h1M117.8 215.9h1M115.1 222.1h1M111.8 227.2h1M111.0 226.7h1M109.5 231.7h1M114.7 229.2h1M112.3 228.3h1M111.6 231.0h1M103.3 238.0h1M100.0 247.5h1M101.9 245.6h1M91.6 269.5h1M213.4 31.1h1M217.8 33.1h1M209.7 37.7h1M214.4 39.0h1M213.2 38.2h1M211.3 45.0h1M210.8 44.1h1M209.1 42.9h1M208.4 49.4h1M207.8 52.1h1M204.9 55.7h1M198.2 70.6h1M194.9 73.8h1M197.6 70.2h1M191.6 78.6h1M146.9 180.0h1M141.7 180.8h1M136.4 193.0h1M139.1 193.5h1M137.9 195.9h1M136.2 194.5h1M137.5 196.6h1M135.2 205.4h1M125.4 213.3h1M124.7 220.6h1M112.1 251.5h1M110.4 252.4h1M108.8 253.8h1M109.9 253.8h1M227.7 38.2h1M225.4 36.9h1M219.4 44.7h1M219.1 50.4h1M217.8 50.5h1M220.1 52.0h1M214.6 56.2h1M213.3 54.8h1M209.6 64.4h1M208.0 70.1h1M208.0 68.8h1M205.3 72.5h1M204.5 81.2h1M196.8 88.6h1M199.8 90.5h1M154.4 185.3h1M154.7 182.0h1M143.3 208.9h1M133.3 226.1h1M130.3 234.3h1M123.5 247.5h1M127.9 242.3h1M124.4 246.2h1M127.5 247.0h1M125.6 247.9h1M126.2 256.0h1M113.0 265.7h1M114.5 273.9h1M111.4 272.5h1M230.2 42.2h1M225.8 39.5h1M228.0 50.2h1M221.0 62.4h1M220.4 63.1h1M226.6 61.2h1M218.8 67.7h1M219.2 66.6h1M214.6 76.0h1M191.9 132.3h1M162.6 187.2h1M164.4 192.5h1M159.1 209.4h1M151.0 213.1h1M158.3 211.4h1M150.1 214.5h1M147.1 222.2h1M151.6 223.7h1M145.0 230.3h1M129.5 258.5h1M127.5 264.7h1M234.2 48.8h1M234.3 47.1h1M232.9 51.7h1M234.7 50.4h1M234.3 49.8h1M233.9 51.1h1M233.1 54.5h1M235.9 52.4h1M221.9 68.3h1M219.3 79.7h1M221.6 75.0h1M219.5 74.7h1M193.1 143.3h1M166.0 199.3h1M157.2 224.8h1M155.2 233.0h1M161.1 230.5h1M163.1 225.8h1M155.8 230.6h1M156.6 225.6h1M148.9 233.6h1M139.1 265.7h1M138.4 266.3h1M136.2 257.8h1M128.3 271.3h1M131.3 279.9h1M127.3 290.4h1M244.8 48.8h1M241.6 49.5h1M244.1 56.4h1M242.0 53.5h1M243.5 54.5h1M244.1 56.2h1M242.7 62.5h1M238.8 61.1h1M239.9 61.7h1M236.0 69.3h1M236.2 68.8h1M233.8 74.8h1M228.6 84.3h1M215.1 113.1h1M176.3 204.0h1M178.1 201.9h1M170.4 211.1h1M161.6 243.0h1M158.9 243.8h1M153.6 256.9h1M157.9 259.2h1M147.1 269.4h1M143.5 262.2h1M145.6 271.5h1M143.4 284.1h1M137.2 290.4h1M253.2 51.4h1M252.2 51.8h1M245.9 68.8h1M248.0 66.0h1M227.6 113.9h1M185.9 209.7h1M174.4 235.2h1M174.6 234.9h1M167.3 255.2h1M159.2 262.3h1M161.6 277.6h1M154.4 283.7h1M257.1 57.9h1M255.1 59.8h1M250.7 76.6h1M248.8 80.4h1M251.2 76.6h1M249.9 81.0h1M248.6 93.1h1M236.9 101.8h1M239.9 105.0h1M239.4 102.3h1M238.9 101.1h1M242.4 106.4h1M185.2 232.2h1M180.1 239.2h1M179.8 247.9h1M173.3 269.9h1M169.3 273.9h1M162.3 287.6h1M154.2 295.9h1M158.1 297.1h1M157.7 298.1h1M259.4 72.3h1M252.8 92.8h1M250.2 102.8h1M246.6 107.4h1M240.7 111.2h1M231.4 145.4h1M204.8 207.9h1M190.6 243.4h1M190.1 247.5h1M195.7 245.4h1M176.8 271.1h1M178.0 273.8h1M177.4 274.9h1M173.0 284.4h1M270.5 61.2h1M274.3 66.0h1M270.2 71.2h1M269.7 77.6h1M269.1 78.0h1M265.7 84.9h1M265.8 82.8h1M266.1 95.9h1M250.9 119.2h1M245.1 134.7h1M199.0 254.1h1M196.4 263.7h1M193.2 280.0h1M187.9 281.3h1M190.6 278.4h1M280.4 69.6h1M279.0 72.6h1M270.8 84.4h1M264.6 109.2h1M258.7 114.3h1M261.7 115.2h1M215.9 235.2h1M208.6 252.7h1M201.9 261.3h1M203.8 262.2h1M201.9 268.4h1M196.6 278.8h1M190.0 302.0h1M284.7 86.5h1M286.7 87.0h1M278.9 92.7h1M271.9 117.9h1M265.2 136.3h1M234.3 201.3h1M224.3 238.3h1M211.3 265.8h1M209.5 282.1h1M198.3 304.8h1M190.4 306.5h1M289.7 90.8h1M289.8 90.7h1M291.0 96.5h1M278.3 119.4h1M279.3 115.1h1M279.7 116.5h1M277.0 124.3h1M275.8 130.1h1M274.9 139.2h1M270.4 145.3h1M235.4 236.2h1M230.4 252.9h1M225.1 260.4h1M226.0 263.0h1M223.3 272.6h1M219.1 280.1h1M208.3 309.2h1M295.7 83.8h1M300.0 84.4h1M290.7 109.1h1M291.2 106.3h1M291.3 107.1h1M289.3 110.7h1M289.1 117.1h1M290.2 112.2h1M286.5 122.2h1M288.3 117.7h1M287.0 119.4h1M286.8 115.7h1M286.1 120.0h1M286.8 127.6h1M276.9 148.9h1M259.7 203.1h1M236.4 258.8h1M213.4 327.5h1M309.3 83.8h1M308.2 84.5h1M310.6 82.6h1M304.4 93.0h1M301.3 91.9h1M302.0 101.9h1M300.9 102.0h1M297.5 108.2h1M300.9 108.3h1M291.8 122.7h1M295.1 127.3h1M288.5 139.8h1M289.8 135.2h1M259.1 226.3h1M220.1 328.2h1M314.3 86.3h1M316.1 87.1h1M309.4 99.5h1M310.0 103.2h1M307.0 114.3h1M305.1 122.4h1M303.0 117.1h1M301.2 129.5h1M293.3 139.1h1M293.4 157.4h1M276.2 195.6h1M254.7 265.1h1M237.9 322.4h1M321.7 91.8h1M323.4 90.7h1M321.4 96.9h1M316.0 111.2h1M313.1 118.0h1M311.3 123.0h1M305.7 135.0h1M306.7 138.9h1M305.8 138.2h1M304.4 145.3h1M297.3 167.5h1M279.3 224.3h1M270.8 249.7h1M241.0 329.9h1M330.7 94.3h1M329.2 101.8h1M328.2 101.2h1M325.7 107.8h1M326.7 109.7h1M330.1 108.3h1M325.8 109.4h1M320.9 114.3h1M320.1 120.2h1M320.0 122.9h1M318.3 121.1h1M312.2 149.0h1M310.7 152.9h1M307.3 164.4h1M306.9 161.3h1M253.8 327.0h1M334.1 99.7h1M332.2 112.6h1M324.6 140.5h1M316.2 146.0h1M316.4 161.8h1M300.7 199.0h1M285.8 265.7h1M269.1 312.8h1M268.0 318.3h1M24.6 84.3h1M33.5 49.8h1M52.5 41.9h1M74.8 15.9h1M13.4 88.5h1M15.8 77.5h1M19.7 96.1h1M28.7 74.2h1M11.5 92.3h1M13.2 97.7h1M42.3 33.1h1M16.8 91.1h1M34.5 65.1h1M44.2 55.4h1M49.2 39.1h1M41.4 43.2h1M40.9 57.8h1M53.7 27.8h1M45.5 35.6h1M65.1 29.1h1M16.3 80.6h1M43.2 32.2h1M27.6 75.7h1M14.6 88.8h1M45.0 56.0h1M34.7 57.6h1M59.2 22.9h1M0.9 125.3h1M26.4 82.9h1M57.5 37.0h1M33.0 76.1h1M14.3 107.5h1M65.1 20.4h1M31.4 57.7h1M27.4 71.8h1M56.3 23.6h1M4.2 93.5h1M30.2 74.5h1M77.3 5.0h1M35.9 71.4h1M81.3 0.9h1M4.9 98.8h1M71.5 8.0h1M23.8 86.4h1M46.8 41.3h1M53.9 32.4h1M54.3 61.6h1M21.9 111.2h1M65.1 43.7h1M69.9 34.4h1M57.8 56.5h1M57.3 55.1h1M22.3 107.8h1M22.5 113.2h1M48.8 73.2h1M68.8 38.1h1M20.5 110.7h1M85.2 12.6h1M42.5 78.0h1M64.4 46.9h1M92.8 3.5h1M53.7 60.4h1M9.5 131.8h1M54.9 60.7h1M13.0 121.4h1M51.5 62.5h1M4.5 136.0h1M85.8 7.7h1M30.3 93.3h1M83.7 15.8h1M40.8 80.2h1M71.0 35.6h1M84.5 14.8h1M67.8 36.7h1M50.4 67.3h1M234.7 44.4h1M301.8 82.0h1M294.9 77.7h1M301.5 81.0h1M222.4 38.4h1M163.2 6.0h1M237.0 45.3h1M250.6 52.9h1M275.7 66.8h1M239.9 47.8h1M243.2 47.4h1M255.9 58.7h1M284.4 70.9h1M315.5 88.8h1M166.2 6.4h1M212.3 33.9h1M244.5 49.7h1M304.8 84.0h1M326.9 94.0h1M189.9 20.2h1M173.8 10.4h1M249.3 52.8h1M199.6 24.4h1M233.3 44.0h1M301.6 81.3h1M224.0 38.1h1M289.9 72.9h1M270.4 67.7h1M225.5 39.5h1M322.3 92.1h1M235.6 43.5h1M160.9 4.4h1M300.2 80.6h1M231.6 42.4h1M292.8 78.0h1M318.7 91.0h1M165.8 4.9h1M211.5 32.4h1M277.2 68.2h1M321.9 91.9h1M284.8 70.5h1M188.1 16.3h1M235.9 43.9h1M158.5 1.3h1M272.6 65.2h1M188.9 18.7h1M274.8 69.2h1M167.2 9.5h1M175.2 12.0h1M214.4 34.4h1M294.7 78.0h1M171.2 9.2h1M258.2 57.3h1M332.7 96.8h1M190.1 20.9h1M301.5 81.2h1M323.7 93.6h1M279.9 69.9h1M318.2 90.0h1M319.3 90.9h1M162.7 6.7h1M302.7 82.1h1M302.6 81.2h1M270.7 64.4h1M241.4 46.2h1M202.6 27.6h1M299.8 78.6h1M320.0 90.2h1M336.0 99.1h1M203.7 28.6h1M266.3 60.4h1M305.2 86.5h1M179.7 12.5h1M330.1 96.0h1M213.6 34.9h1M328.4 111.0h1M325.6 106.0h1M331.8 113.4h1M330.4 102.5h1M324.9 106.1h1M322.2 95.9h1M333.7 100.0h1M323.4 102.9h1M336.4 103.2h1M325.4 103.2h1M319.5 102.9h1M329.7 109.0h1M67.7 252.9h1M34.6 237.3h1M89.2 262.4h1M134.7 286.2h1M121.3 277.3h1M241.2 337.4h1M183.4 310.4h1M124.7 281.8h1M154.6 293.0h1M199.4 314.6h1M132.2 281.6h1M22.7 231.1h1M23.0 230.2h1M209.4 320.5h1M215.5 322.4h1M117.6 277.7h1M40.2 240.5h1M154.8 294.2h1M235.4 331.7h1M131.6 284.1h1M37.4 236.3h1M84.6 262.0h1M64.7 249.2h1M142.6 288.0h1M106.5 272.6h1M73.8 254.3h1M194.2 314.5h1M80.6 257.2h1M144.4 290.4h1M118.9 277.3h1M238.3 336.6h1M183.9 306.3h1M186.6 304.5h1M149.1 292.0h1M115.8 273.4h1M47.4 241.6h1M165.8 300.3h1M193.7 315.1h1M155.8 294.6h1M185.1 308.3h1M50.8 245.2h1M84.0 262.0h1M123.7 280.1h1M57.9 244.2h1M236.6 335.0h1M241.9 332.1h1M62.1 251.0h1"/>
<path stroke="#735f8b" d="M103.8 5.0h1M101.2 7.0h1M93.3 32.3h1M89.9 30.3h1M90.1 36.0h1M85.1 35.5h1M78.8 45.4h1M79.5 43.6h1M76.4 45.6h1M83.6 45.2h1M70.1 58.2h1M66.4 65.3h1M58.6 73.9h1M63.8 78.0h1M58.9 81.7h1M54.3 79.2h1M50.1 86.8h1M53.1 87.8h1M53.7 86.6h1M50.7 92.2h1M43.8 102.9h1M45.8 105.7h1M42.1 104.1h1M37.7 113.3h1M36.7 112.1h1M37.4 113.6h1M22.1 129.1h1M21.2 133.0h1M4.1 162.7h1M2.5 167.1h1M117.0 2.7h1M106.8 14.9h1M102.4 24.8h1M103.2 25.3h1M105.9 22.5h1M98.5 28.1h1M94.9 29.4h1M93.7 44.0h1M91.0 54.0h1M76.8 55.8h1M78.1 65.6h1M72.5 64.9h1M69.9 77.3h1M60.4 92.6h1M61.9 92.3h1M62.3 98.9h1M53.9 107.9h1M44.3 110.3h1M42.9 121.3h1M43.2 131.6h1M33.3 135.2h1M37.6 135.1h1M39.2 133.9h1M36.8 133.5h1M20.0 157.4h1M21.7 154.8h1M8.2 177.7h1M10.0 175.0h1M0.5 185.7h1M123.8 2.4h1M121.3 1.7h1M120.7 13.4h1M119.9 12.7h1M115.1 19.0h1M117.4 17.3h1M108.4 33.1h1M102.1 45.4h1M100.8 45.2h1M97.8 50.0h1M90.3 55.7h1M86.3 69.2h1M79.6 82.9h1M70.1 98.1h1M70.4 94.7h1M62.3 112.1h1M61.8 116.3h1M50.0 129.6h1M52.2 126.9h1M46.2 134.3h1M30.4 165.1h1M26.5 173.2h1M17.1 184.5h1M13.4 189.1h1M135.2 13.2h1M134.0 16.1h1M132.5 12.0h1M128.7 13.6h1M124.2 22.2h1M127.3 21.0h1M124.0 22.3h1M124.7 27.1h1M120.6 30.1h1M121.1 29.0h1M117.5 34.3h1M112.2 42.1h1M106.1 45.5h1M110.5 48.6h1M107.4 49.0h1M96.7 70.6h1M94.0 78.6h1M93.1 78.8h1M97.1 80.6h1M79.5 97.9h1M79.1 100.9h1M81.7 96.4h1M74.4 109.4h1M55.7 140.2h1M46.8 161.7h1M29.7 180.4h1M21.6 202.9h1M149.0 1.0h1M145.4 8.0h1M144.9 7.8h1M140.5 14.2h1M136.0 19.7h1M136.3 25.9h1M140.9 19.9h1M133.0 23.3h1M129.0 34.3h1M118.3 42.7h1M114.4 48.4h1M120.7 58.4h1M114.8 64.7h1M107.9 71.0h1M103.7 74.6h1M103.1 76.2h1M99.8 90.7h1M63.6 134.3h1M69.8 136.9h1M61.9 149.1h1M53.3 161.5h1M47.4 168.4h1M50.5 174.8h1M42.4 180.2h1M36.6 192.1h1M41.2 193.8h1M35.6 193.8h1M39.8 186.4h1M33.5 191.0h1M38.8 192.8h1M31.2 202.4h1M18.8 221.1h1M22.8 214.0h1M17.8 223.5h1M19.2 230.7h1M158.9 0.6h1M150.1 13.6h1M146.6 23.4h1M141.5 37.2h1M131.1 48.4h1M133.7 43.2h1M134.8 43.7h1M129.3 53.7h1M131.6 53.3h1M130.0 52.5h1M116.5 71.1h1M116.5 75.6h1M103.1 95.8h1M100.1 104.7h1M70.9 151.9h1M61.5 167.4h1M57.5 184.3h1M57.7 177.4h1M53.1 185.3h1M54.7 190.8h1M35.2 216.7h1M30.6 221.0h1M31.4 221.7h1M31.3 224.9h1M27.8 229.9h1M22.3 231.6h1M164.8 4.4h1M165.0 8.6h1M158.0 7.2h1M160.5 13.8h1M157.8 8.9h1M162.9 11.3h1M162.3 9.8h1M160.6 16.5h1M154.3 23.4h1M152.5 17.3h1M145.4 28.7h1M148.6 36.6h1M145.9 43.0h1M139.4 48.2h1M143.7 54.9h1M130.9 66.8h1M124.7 76.8h1M119.0 85.7h1M119.4 84.1h1M112.5 98.0h1M110.2 92.0h1M111.0 100.8h1M107.4 107.4h1M104.8 115.3h1M101.8 118.2h1M89.9 145.4h1M77.1 163.0h1M63.9 185.8h1M57.2 196.5h1M48.2 208.6h1M49.2 212.8h1M48.6 208.0h1M45.0 220.4h1M44.3 215.1h1M42.1 235.5h1M177.8 7.5h1M170.4 8.2h1M171.3 10.7h1M168.2 16.1h1M165.6 22.1h1M164.7 24.5h1M161.9 26.5h1M159.3 42.4h1M145.8 55.7h1M140.5 67.8h1M143.5 64.1h1M122.5 90.3h1M123.3 101.6h1M119.1 115.7h1M111.9 125.9h1M80.7 177.5h1M71.5 196.3h1M60.4 214.2h1M66.8 215.6h1M57.1 226.3h1M56.7 225.2h1M50.1 222.8h1M181.2 8.6h1M183.9 15.7h1M173.5 25.6h1M174.2 24.5h1M173.8 25.3h1M168.3 30.9h1M162.0 37.8h1M167.1 42.6h1M171.1 39.9h1M162.7 55.1h1M150.9 57.8h1M151.8 66.3h1M147.4 66.2h1M149.7 77.3h1M147.8 70.6h1M148.5 72.8h1M150.1 67.0h1M145.7 75.6h1M147.8 76.3h1M145.1 79.9h1M145.2 78.5h1M135.8 89.4h1M135.9 93.2h1M101.8 165.3h1M78.8 198.5h1M77.2 196.6h1M73.7 208.9h1M70.4 207.2h1M65.4 231.0h1M64.8 229.2h1M58.9 243.2h1M189.4 18.8h1M186.9 20.2h1M186.5 17.1h1M185.3 25.1h1M185.3 23.9h1M176.5 29.6h1M176.6 43.1h1M164.5 56.9h1M163.5 57.1h1M164.4 54.5h1M167.0 51.1h1M164.7 59.1h1M156.0 83.9h1M152.0 82.1h1M149.5 89.9h1M144.9 100.2h1M97.0 185.6h1M90.3 205.9h1M92.3 203.7h1M83.6 215.5h1M88.0 217.7h1M81.0 220.8h1M78.7 223.3h1M67.3 243.5h1M67.5 240.3h1M62.4 251.1h1M190.7 27.6h1M180.6 37.7h1M189.3 38.7h1M175.3 57.3h1M170.7 65.2h1M171.5 67.5h1M168.8 73.4h1M163.0 79.1h1M165.5 86.0h1M160.6 90.9h1M112.0 182.6h1M110.1 191.9h1M103.2 200.6h1M91.5 229.8h1M82.1 237.7h1M79.1 247.1h1M72.8 256.3h1M198.4 30.7h1M201.3 36.2h1M191.5 39.4h1M194.1 38.5h1M199.6 38.4h1M195.8 38.0h1M190.8 43.5h1M176.5 78.8h1M124.9 173.8h1M111.4 202.4h1M111.0 206.8h1M111.8 205.3h1M110.3 206.6h1M108.2 207.2h1M112.8 205.4h1M105.6 214.3h1M103.3 227.2h1M99.4 227.2h1M90.6 242.4h1M209.6 25.1h1M203.1 30.7h1M205.2 33.7h1M193.6 58.9h1M186.0 73.9h1M187.0 69.2h1M176.8 96.8h1M148.6 154.3h1M136.5 173.6h1M134.2 184.2h1M108.5 236.5h1M105.4 234.8h1M104.8 236.3h1M99.8 249.0h1M96.8 248.8h1M214.0 35.8h1M214.5 37.4h1M210.5 39.7h1M210.6 46.1h1M210.1 43.5h1M196.5 67.5h1M203.8 62.8h1M198.4 71.2h1M188.3 87.2h1M160.3 153.5h1M146.9 179.2h1M141.5 178.3h1M136.7 195.5h1M141.4 195.2h1M139.2 195.0h1M136.8 191.6h1M128.3 215.9h1M115.7 247.5h1M219.6 50.4h1M211.6 61.2h1M208.7 79.1h1M204.7 80.8h1M173.5 143.4h1M164.1 166.2h1M154.1 181.3h1M124.8 249.5h1M127.0 252.8h1M118.7 261.4h1M121.4 257.1h1M112.1 273.1h1M227.5 46.6h1M216.3 60.1h1M220.9 63.6h1M222.4 61.3h1M220.1 61.5h1M221.0 72.3h1M220.0 68.1h1M214.8 72.6h1M216.1 74.5h1M216.3 70.2h1M209.0 87.6h1M172.6 171.7h1M166.7 178.0h1M160.9 193.2h1M142.1 222.9h1M236.8 52.6h1M234.4 50.5h1M238.3 52.1h1M230.6 49.0h1M233.4 48.0h1M235.3 50.5h1M222.4 78.5h1M206.0 120.4h1M158.5 218.4h1M151.6 243.8h1M126.1 277.9h1M131.5 279.0h1M249.4 49.3h1M243.7 59.5h1M244.2 52.5h1M243.4 53.5h1M243.6 55.6h1M241.6 55.0h1M243.1 62.6h1M178.3 200.4h1M167.3 221.8h1M166.6 223.6h1M166.0 246.2h1M150.6 261.5h1M150.2 263.3h1M142.3 277.3h1M137.6 288.1h1M137.0 289.0h1M245.7 61.1h1M237.8 83.9h1M232.1 87.3h1M224.0 108.5h1M222.4 119.2h1M206.9 160.2h1M190.1 199.3h1M184.4 211.8h1M183.7 216.0h1M176.9 228.4h1M167.4 256.4h1M161.4 266.4h1M158.8 273.4h1M156.1 271.7h1M158.8 277.0h1M155.9 281.6h1M154.1 282.3h1M255.0 54.5h1M258.3 63.3h1M258.4 63.4h1M256.0 63.8h1M235.9 101.2h1M239.1 105.1h1M240.0 101.3h1M200.7 196.2h1M190.8 219.8h1M185.5 228.5h1M184.8 231.0h1M185.6 230.7h1M177.6 249.8h1M171.0 267.5h1M171.8 267.0h1M166.4 278.0h1M167.2 277.5h1M153.1 302.5h1M157.0 298.5h1M264.1 59.4h1M255.7 84.4h1M246.5 108.3h1M242.3 109.0h1M242.7 116.8h1M241.6 121.8h1M199.4 225.6h1M200.3 227.0h1M194.8 225.9h1M195.8 232.9h1M189.6 247.5h1M192.4 245.0h1M185.5 255.1h1M184.7 253.6h1M179.4 271.6h1M173.3 286.0h1M176.9 275.2h1M269.0 79.2h1M261.4 97.2h1M248.5 127.2h1M217.9 202.2h1M208.2 226.8h1M204.9 235.7h1M198.3 249.4h1M200.0 247.2h1M192.0 266.2h1M190.9 273.9h1M188.8 277.6h1M179.0 295.0h1M280.0 66.1h1M277.3 63.0h1M275.4 81.7h1M275.3 81.2h1M268.3 101.9h1M270.4 101.3h1M258.1 123.1h1M254.5 133.4h1M234.5 202.7h1M217.5 218.9h1M217.6 230.8h1M215.9 233.7h1M207.4 252.2h1M195.8 282.0h1M196.3 291.3h1M194.3 290.8h1M190.1 302.5h1M188.0 311.4h1M184.5 305.6h1M279.2 89.6h1M284.0 89.8h1M272.6 110.5h1M267.4 125.1h1M264.3 134.0h1M261.5 142.1h1M222.3 238.2h1M224.7 235.4h1M218.2 259.6h1M211.2 268.0h1M207.0 283.7h1M197.7 307.4h1M200.2 303.6h1M199.3 305.6h1M296.7 77.5h1M290.5 95.2h1M282.6 110.5h1M285.2 116.3h1M283.0 116.7h1M280.6 115.8h1M276.8 124.8h1M274.4 130.4h1M273.8 129.6h1M271.6 136.2h1M230.6 254.6h1M222.6 271.1h1M219.3 290.9h1M209.0 310.9h1M208.6 310.2h1M206.4 310.5h1M206.0 320.9h1M295.3 102.7h1M292.6 106.5h1M290.9 112.5h1M281.9 132.7h1M279.6 141.6h1M278.3 142.5h1M276.6 147.2h1M276.0 149.8h1M274.9 150.7h1M229.0 275.7h1M227.4 284.8h1M216.4 315.5h1M213.4 324.0h1M292.9 129.9h1M289.2 125.6h1M291.5 131.7h1M288.9 137.6h1M289.0 148.9h1M266.1 207.5h1M244.5 271.6h1M239.5 279.8h1M228.1 309.7h1M227.4 307.2h1M305.9 113.0h1M304.1 121.9h1M298.3 134.7h1M289.9 155.9h1M292.5 155.4h1M258.4 256.2h1M249.1 272.1h1M244.9 281.0h1M233.0 330.2h1M231.0 335.3h1M320.9 97.7h1M316.4 109.9h1M305.7 137.5h1M297.0 167.7h1M297.3 170.7h1M273.7 233.8h1M274.1 235.5h1M257.7 287.1h1M237.7 337.6h1M238.3 339.6h1M330.6 94.5h1M326.4 105.6h1M325.0 110.5h1M324.9 109.4h1M321.0 120.5h1M316.9 130.4h1M314.9 135.3h1M315.8 142.2h1M311.9 148.9h1M312.2 151.7h1M312.2 150.5h1M312.3 147.2h1M307.5 157.6h1M308.0 156.9h1M277.4 248.6h1M275.0 262.5h1M271.3 271.5h1M264.0 292.2h1M254.8 321.6h1M254.8 320.4h1M254.5 320.1h1M335.6 98.8h1M329.1 119.4h1M325.9 133.6h1M327.0 133.9h1M320.5 147.8h1M318.8 171.8h1M312.2 175.0h1M285.0 270.1h1M284.6 268.6h1M268.3 317.5h1M265.9 315.1h1M268.1 315.6h1M264.2 327.2h1M265.2 327.1h1M24.1 68.2h1M37.2 41.9h1M58.9 22.0h1M51.1 20.9h1M44.4 32.2h1M0.4 120.2h1M78.2 8.5h1M51.4 33.5h1M44.9 47.4h1M32.2 57.0h1M65.2 23.7h1M43.5 33.8h1M47.7 25.4h1M66.5 13.8h1M67.2 17.6h1M0.6 127.5h1M35.4 66.6h1M61.6 16.5h1M2.9 112.3h1M34.7 61.1h1M57.8 18.0h1M28.6 53.8h1M60.2 23.3h1M32.5 54.9h1M10.6 101.9h1M25.9 59.5h1M24.7 69.1h1M29.3 55.8h1M66.2 17.6h1M72.3 19.8h1M67.6 31.8h1M12.8 116.4h1M60.2 41.8h1M9.6 123.2h1M84.2 9.1h1M6.7 126.4h1M38.2 80.2h1M40.1 73.9h1M30.7 87.6h1M76.5 18.3h1M23.6 98.0h1M11.8 118.7h1M75.3 19.0h1M29.4 90.6h1M18.3 110.4h1M79.4 12.6h1M56.8 48.0h1M21.3 100.6h1M38.8 79.1h1M66.5 32.9h1M36.0 84.5h1M71.8 26.4h1M76.8 21.8h1M32.9 82.3h1M31.5 88.4h1M22.9 101.4h1M73.6 21.1h1M76.7 14.9h1M47.4 58.2h1M11.1 117.4h1M86.1 7.8h1M67.5 31.1h1M1.2 133.7h1M26.3 95.7h1M7.7 122.7h1M57.7 46.8h1M29.9 86.3h1M24.4 94.4h1M18.0 107.6h1M23.4 99.5h1M76.1 18.8h1M2.6 128.5h1M84.4 8.3h1M27.2 94.8h1M41.9 69.2h1M53.9 51.3h1M70.0 31.8h1M44.9 62.2h1M56.2 46.2h1M49.6 59.8h1M63.9 37.8h1M19.5 104.5h1M41.2 71.7h1M158.3 298.0h1M189.8 312.6h1M225.1 329.1h1M222.0 328.6h1M249.3 340.3h1M6.6 221.0h1M96.4 265.0h1M37.7 236.8h1M64.3 252.8h1M29.1 230.8h1M122.0 279.3h1M143.4 289.1h1M1.1 221.6h1M15.1 227.0h1M26.5 233.4h1M240.4 334.7h1M228.0 331.8h1M69.9 255.5h1M13.4 227.1h1M19.8 227.6h1M159.8 298.2h1M87.3 257.3h1"/>
<path stroke="#e2d0e2" d="M102.8 12.6h1M100.2 9.5h1M98.0 18.7h1M84.6 36.9h1M70.7 59.6h1M67.1 56.9h1M68.6 57.8h1M65.1 68.1h1M56.5 80.8h1M50.4 85.5h1M50.6 87.0h1M48.3 94.6h1M43.5 104.2h1M22.9 128.2h1M8.3 154.6h1M105.3 20.7h1M103.3 23.0h1M99.6 27.9h1M98.7 27.5h1M94.9 35.0h1M97.5 35.0h1M95.2 34.7h1M85.6 54.8h1M80.9 62.4h1M69.8 76.1h1M63.1 95.1h1M54.0 108.1h1M52.5 107.3h1M45.1 117.7h1M34.1 135.9h1M36.8 134.1h1M40.3 135.9h1M21.3 157.6h1M11.3 175.3h1M3.5 183.3h1M0.5 188.2h1M128.0 2.1h1M121.2 13.7h1M113.3 26.8h1M113.0 26.4h1M102.4 45.9h1M98.9 45.5h1M96.3 54.3h1M94.7 54.0h1M96.8 52.9h1M93.0 62.0h1M94.0 58.0h1M84.9 74.1h1M79.0 81.5h1M65.2 95.3h1M62.7 105.6h1M60.7 114.0h1M57.7 114.0h1M27.1 162.2h1M30.1 160.7h1M17.1 179.3h1M128.5 16.0h1M111.5 42.5h1M118.8 43.3h1M115.9 43.4h1M108.4 51.5h1M108.0 52.7h1M107.3 51.6h1M105.6 56.1h1M91.4 76.6h1M92.5 78.2h1M77.9 98.7h1M66.3 125.2h1M60.2 132.4h1M49.6 152.2h1M45.0 160.4h1M37.9 168.0h1M40.4 167.9h1M33.9 177.2h1M25.2 192.2h1M21.4 195.8h1M14.7 205.6h1M16.7 203.9h1M4.5 226.1h1M141.2 13.6h1M133.6 22.4h1M124.4 43.6h1M123.7 42.5h1M123.7 44.2h1M123.4 43.1h1M124.0 43.5h1M121.0 47.5h1M119.3 48.3h1M113.2 63.7h1M107.3 73.4h1M104.0 76.5h1M105.0 76.3h1M103.7 76.5h1M105.1 76.7h1M94.3 88.3h1M81.9 113.4h1M79.6 122.5h1M69.8 136.8h1M70.1 137.8h1M53.0 162.0h1M53.3 162.9h1M48.0 174.2h1M44.3 179.7h1M41.2 174.5h1M41.2 181.4h1M37.5 189.9h1M32.9 200.1h1M26.0 210.3h1M26.8 206.1h1M21.4 218.9h1M155.3 6.6h1M150.0 13.2h1M151.2 15.5h1M145.7 20.6h1M144.4 25.2h1M138.4 38.7h1M129.2 45.0h1M128.6 52.6h1M130.3 51.8h1M106.5 87.2h1M103.3 94.5h1M99.0 104.7h1M99.2 103.2h1M76.9 141.4h1M71.5 150.2h1M68.3 160.9h1M32.1 221.8h1M37.6 221.6h1M26.1 231.8h1M26.1 234.0h1M26.2 233.3h1M165.0 5.8h1M161.9 11.0h1M161.5 11.3h1M160.1 17.2h1M153.3 23.4h1M142.6 48.5h1M140.5 47.8h1M141.6 48.3h1M136.8 57.3h1M132.9 51.5h1M133.9 65.3h1M111.4 98.2h1M107.4 105.5h1M104.8 115.3h1M83.2 152.1h1M83.6 146.7h1M39.7 226.9h1M28.4 238.7h1M172.5 7.9h1M171.8 5.6h1M165.1 23.5h1M166.9 20.3h1M166.7 23.0h1M166.3 21.8h1M165.6 22.6h1M162.1 27.3h1M162.2 29.1h1M155.8 39.1h1M150.2 55.4h1M146.9 50.6h1M141.6 67.7h1M88.8 158.6h1M79.8 176.7h1M75.8 186.6h1M72.0 189.3h1M60.2 214.4h1M62.1 215.5h1M63.1 215.3h1M178.5 20.7h1M177.3 20.7h1M178.0 18.4h1M176.1 22.9h1M172.7 24.7h1M170.0 31.2h1M167.1 31.2h1M157.6 44.7h1M157.3 58.1h1M152.0 67.2h1M145.5 78.0h1M124.7 116.7h1M78.0 201.5h1M78.0 199.3h1M80.1 198.9h1M57.1 234.9h1M55.9 246.7h1M54.5 245.2h1M189.0 16.3h1M185.7 22.4h1M185.9 22.7h1M176.1 34.3h1M175.6 42.8h1M174.6 39.9h1M173.3 43.0h1M154.9 74.2h1M68.0 242.6h1M61.7 254.1h1M62.2 251.3h1M196.6 23.8h1M180.6 44.8h1M175.5 56.9h1M171.8 68.3h1M158.4 89.2h1M153.0 100.9h1M104.6 184.9h1M110.2 184.5h1M95.6 214.3h1M73.0 256.4h1M202.7 24.5h1M193.7 39.4h1M191.9 38.1h1M189.1 53.3h1M189.6 45.5h1M182.9 64.4h1M173.1 81.2h1M173.5 88.2h1M117.3 186.7h1M110.2 203.7h1M110.6 208.9h1M111.3 204.7h1M184.0 73.2h1M182.8 82.2h1M183.0 81.8h1M179.6 88.5h1M179.7 89.1h1M178.0 96.6h1M144.2 166.9h1M132.5 183.7h1M124.5 200.3h1M101.6 249.3h1M209.9 44.5h1M202.7 65.4h1M200.6 66.0h1M192.1 85.1h1M142.3 186.4h1M138.9 195.3h1M117.2 229.1h1M220.4 44.8h1M219.4 51.5h1M219.7 48.9h1M216.1 55.6h1M211.7 62.0h1M207.5 75.3h1M158.3 171.2h1M147.3 203.6h1M138.7 216.3h1M138.3 216.4h1M139.8 215.7h1M138.8 219.7h1M132.5 227.3h1M228.9 46.4h1M213.1 78.9h1M160.9 210.6h1M150.1 200.9h1M155.7 204.3h1M151.8 213.5h1M131.7 252.3h1M129.7 253.2h1M232.9 51.3h1M234.8 50.0h1M233.5 50.5h1M222.0 78.1h1M156.5 229.3h1M152.8 234.0h1M140.4 267.1h1M138.9 266.4h1M243.7 50.5h1M246.0 49.7h1M241.6 56.9h1M239.7 62.7h1M233.0 75.3h1M170.7 229.1h1M253.2 51.1h1M251.8 63.5h1M250.3 59.4h1M248.9 59.3h1M247.1 65.5h1M243.7 79.0h1M170.4 244.7h1M258.7 56.9h1M257.0 63.3h1M257.9 62.0h1M254.5 62.2h1M253.2 71.8h1M157.0 297.6h1M261.2 66.4h1M170.2 290.3h1M253.0 118.5h1M280.4 63.7h1M279.8 67.6h1M277.6 74.2h1M284.7 77.5h1M276.7 106.7h1M273.3 110.3h1M218.4 253.5h1M217.4 259.9h1M202.3 310.7h1M290.8 87.3h1M289.2 94.4h1M304.6 89.6h1M301.9 102.9h1M316.6 87.1h1M313.4 92.1h1M307.8 113.0h1M299.8 129.6h1M317.0 110.5h1M315.1 112.2h1M313.3 119.1h1M312.4 117.0h1M310.9 122.8h1M252.7 297.5h1M255.1 294.9h1M247.3 315.4h1M242.4 327.6h1M326.5 101.5h1M324.5 109.0h1M326.2 109.9h1M320.4 123.6h1M315.7 136.2h1M315.8 136.5h1M335.0 97.3h1M267.3 316.3h1M36.1 81.0h1M41.2 73.1h1M14.1 113.2h1M82.6 5.5h1M71.8 26.0h1M58.3 43.6h1M86.3 3.3h1M85.2 1.3h1M71.6 26.9h1M62.9 38.2h1M48.4 63.9h1M47.9 65.8h1M18.8 105.9h1M49.6 59.2h1M13.2 116.4h1M3.8 127.6h1M91.0 1.4h1M32.7 88.6h1M10.4 119.6h1M64.1 36.0h1M47.4 64.0h1M10.1 121.5h1M25.2 95.4h1M28.0 94.6h1M40.9 72.7h1M65.8 35.8h1M71.8 23.0h1M49.8 55.8h1M85.2 8.7h1M10.5 119.4h1M73.9 24.8h1M27.9 96.5h1M72.4 25.4h1M77.6 16.7h1M87.1 1.3h1M45.2 67.5h1M37.2 80.0h1M330.1 106.6h1M327.3 107.8h1M328.3 107.2h1M319.4 105.8h1M330.9 105.5h1M323.2 103.9h1M324.4 104.1h1"/>
<path stroke="#644e92" d="M101.3 6.2h1M90.1 36.5h1M72.0 54.0h1M50.7 87.5h1M22.2 120.8h1M94.4 37.1h1M35.8 129.7h1M6.6 175.6h1M123.9 5.5h1M107.6 31.4h1M98.2 53.1h1M94.6 61.2h1M40.0 151.9h1M13.9 190.3h1M9.3 195.2h1M134.6 13.5h1M122.2 15.2h1M117.6 35.4h1M88.4 77.4h1M92.1 78.4h1M80.5 90.2h1M70.2 114.0h1M43.7 169.1h1M123.7 43.4h1M120.2 46.9h1M102.6 74.2h1M67.8 139.3h1M46.4 173.5h1M22.3 216.8h1M136.6 38.5h1M137.5 37.2h1M120.1 66.5h1M105.3 86.9h1M98.6 103.2h1M167.1 6.4h1M162.7 11.1h1M161.2 17.8h1M113.8 96.1h1M103.2 115.5h1M58.2 189.5h1M174.0 9.4h1M175.3 10.5h1M157.3 40.7h1M155.0 46.7h1M139.5 70.8h1M134.3 74.1h1M116.1 109.8h1M79.4 180.4h1M64.8 218.9h1M63.1 213.3h1M43.1 242.6h1M159.5 50.4h1M85.3 185.9h1M85.6 187.4h1M180.9 34.3h1M166.1 56.6h1M157.2 72.2h1M161.9 70.6h1M87.8 215.3h1M78.6 223.4h1M83.9 220.1h1M180.8 43.7h1M90.2 218.7h1M172.6 83.8h1M129.9 167.9h1M203.0 40.7h1M190.5 68.3h1M184.2 81.4h1M133.3 182.6h1M110.7 228.8h1M101.3 244.1h1M98.3 258.1h1M98.9 266.2h1M93.4 265.6h1M210.3 42.1h1M206.5 57.2h1M208.7 48.3h1M191.7 85.6h1M139.9 206.9h1M199.6 90.1h1M157.7 174.9h1M155.0 174.5h1M128.1 249.4h1M119.7 257.4h1M234.0 46.9h1M235.9 52.5h1M227.7 75.9h1M155.9 229.3h1M153.8 234.0h1M170.4 243.6h1M159.5 268.3h1M181.4 241.0h1M158.5 299.0h1M263.8 75.2h1M217.8 184.9h1M271.2 68.4h1M206.6 219.2h1M176.7 310.3h1M279.4 67.7h1M222.1 215.3h1M267.7 124.7h1M296.0 92.6h1M287.2 120.4h1M316.2 86.8h1M303.6 123.3h1M301.8 173.8h1M334.8 99.5h1M318.7 146.8h1M319.6 147.3h1M319.1 146.5h1"/>
<path stroke="#792c59" d="M100.1 9.1h1M85.8 34.5h1M88.6 26.3h1M90.5 29.5h1M89.0 37.3h1M80.4 43.4h1M81.6 40.5h1M67.8 51.9h1M74.0 53.5h1M70.3 60.4h1M68.9 57.1h1M66.1 71.6h1M54.6 80.1h1M51.0 85.4h1M16.8 146.6h1M15.4 154.1h1M7.4 166.4h1M105.7 23.1h1M104.0 23.5h1M97.5 29.4h1M99.6 26.9h1M95.4 35.3h1M89.8 48.9h1M70.1 76.8h1M61.6 93.1h1M38.6 135.3h1M37.0 135.5h1M35.4 133.0h1M36.8 134.7h1M33.7 146.9h1M9.3 173.1h1M10.5 171.0h1M113.1 23.8h1M104.4 40.6h1M102.9 42.9h1M97.4 51.8h1M92.1 58.4h1M85.9 61.5h1M95.1 60.6h1M86.5 69.8h1M66.8 97.1h1M53.8 121.6h1M53.5 123.2h1M36.7 136.7h1M45.0 135.0h1M45.7 134.3h1M34.3 156.4h1M13.2 189.8h1M14.9 191.1h1M3.5 201.2h1M136.0 6.0h1M132.0 12.4h1M130.5 11.9h1M116.0 36.3h1M112.0 43.2h1M115.8 46.0h1M100.6 64.4h1M96.4 72.5h1M76.8 102.7h1M75.4 107.3h1M58.0 131.1h1M58.1 132.3h1M32.1 177.4h1M30.0 180.2h1M7.5 212.2h1M140.3 14.9h1M141.4 14.2h1M133.0 27.6h1M128.1 32.0h1M114.8 47.4h1M119.5 49.0h1M118.3 48.4h1M113.3 61.0h1M111.0 63.4h1M113.0 60.3h1M106.8 72.8h1M110.1 75.9h1M97.8 84.9h1M97.5 90.6h1M81.0 107.2h1M82.1 111.9h1M73.3 128.8h1M73.1 138.8h1M46.4 182.1h1M43.3 177.0h1M33.7 194.2h1M30.6 195.8h1M159.1 1.3h1M161.4 1.5h1M156.9 0.7h1M150.5 11.4h1M150.6 22.1h1M135.8 38.5h1M136.4 37.3h1M135.4 45.1h1M127.6 53.2h1M124.3 54.1h1M127.6 58.8h1M100.1 102.8h1M100.3 104.6h1M91.5 112.8h1M89.3 123.7h1M83.3 132.1h1M69.6 145.7h1M63.9 162.2h1M43.0 189.4h1M41.3 204.7h1M31.9 223.3h1M31.8 221.9h1M165.2 4.4h1M164.4 5.8h1M162.0 10.7h1M164.4 9.6h1M159.4 18.9h1M145.0 41.9h1M124.6 75.0h1M123.8 77.9h1M108.8 94.6h1M93.8 140.0h1M84.3 145.1h1M72.7 167.9h1M72.0 175.0h1M59.8 193.9h1M55.8 201.8h1M169.1 4.1h1M169.9 17.3h1M168.4 21.6h1M166.9 22.5h1M166.7 20.1h1M163.6 31.3h1M161.9 25.1h1M156.3 40.1h1M149.9 56.4h1M143.5 63.8h1M147.2 58.6h1M142.8 68.4h1M135.5 74.7h1M76.0 185.9h1M70.7 183.4h1M73.7 199.0h1M69.9 208.6h1M61.8 215.3h1M62.6 214.8h1M50.4 225.3h1M49.9 229.8h1M50.0 229.1h1M181.4 15.1h1M167.2 37.9h1M166.9 37.1h1M166.7 40.5h1M165.2 38.7h1M160.8 38.6h1M163.7 45.9h1M159.7 50.4h1M157.9 53.1h1M156.2 55.0h1M151.6 64.9h1M151.5 66.3h1M144.1 80.9h1M135.4 91.5h1M94.6 171.8h1M87.1 186.8h1M69.7 219.0h1M71.5 217.6h1M59.7 226.1h1M185.7 15.2h1M185.8 19.8h1M184.2 23.0h1M185.6 27.4h1M180.0 36.2h1M175.5 34.4h1M176.9 38.3h1M167.0 64.6h1M159.8 59.8h1M155.5 68.1h1M152.4 82.6h1M152.2 81.5h1M151.7 79.8h1M149.7 88.8h1M99.6 185.6h1M76.9 225.5h1M71.1 236.0h1M68.7 239.3h1M193.9 21.7h1M197.2 25.5h1M190.3 34.0h1M183.5 46.2h1M177.3 48.9h1M178.5 52.2h1M172.0 55.3h1M173.7 66.6h1M149.5 109.5h1M100.4 197.8h1M99.8 200.1h1M90.2 218.5h1M85.1 231.1h1M76.4 258.4h1M204.3 26.2h1M198.3 30.7h1M198.6 31.1h1M195.8 38.0h1M194.4 37.3h1M188.3 49.4h1M185.2 59.6h1M191.9 56.8h1M186.4 57.2h1M181.8 67.5h1M179.3 69.5h1M175.6 82.7h1M165.1 92.5h1M129.9 162.3h1M116.5 192.8h1M110.9 204.4h1M108.0 203.6h1M111.7 205.8h1M110.9 206.5h1M108.0 212.5h1M82.5 252.3h1M204.0 42.9h1M205.9 42.0h1M197.3 53.3h1M198.1 56.1h1M193.3 62.0h1M190.3 67.0h1M187.7 74.9h1M185.5 75.0h1M178.0 87.4h1M175.8 97.8h1M135.2 180.1h1M124.0 204.0h1M116.4 216.1h1M109.6 232.7h1M108.6 236.6h1M107.5 235.4h1M108.4 236.4h1M104.2 244.2h1M101.0 242.8h1M98.3 255.7h1M213.9 39.9h1M207.1 55.2h1M192.1 83.3h1M137.4 188.1h1M132.7 204.2h1M132.3 204.3h1M126.8 221.7h1M124.5 219.4h1M214.6 43.1h1M216.8 52.4h1M215.1 54.1h1M215.2 55.4h1M213.4 56.2h1M208.9 60.2h1M162.5 175.3h1M156.0 177.9h1M144.6 199.7h1M141.0 212.0h1M143.8 207.5h1M122.9 237.1h1M119.7 258.0h1M118.6 249.9h1M108.9 277.4h1M226.2 50.8h1M221.9 52.7h1M218.8 67.2h1M238.2 52.1h1M234.4 50.6h1M234.2 49.7h1M236.0 52.7h1M233.8 50.1h1M228.7 64.5h1M225.5 70.5h1M223.0 66.2h1M177.4 179.8h1M167.1 198.8h1M164.4 207.7h1M139.3 264.6h1M139.6 268.5h1M133.0 278.4h1M135.1 289.9h1M243.7 50.0h1M239.4 65.9h1M240.0 63.1h1M188.7 177.4h1M155.3 250.0h1M136.8 288.3h1M255.0 49.5h1M249.3 59.2h1M244.7 72.4h1M243.6 70.7h1M189.7 201.2h1M174.7 234.9h1M163.1 246.6h1M258.0 66.0h1M242.8 106.6h1M233.5 106.7h1M201.8 192.7h1M187.8 231.3h1M181.3 237.8h1M171.3 253.6h1M161.7 287.4h1M156.0 301.1h1M262.6 68.2h1M242.3 120.5h1M242.1 120.6h1M234.0 140.4h1M179.2 269.7h1M263.9 86.4h1M261.7 85.3h1M262.7 89.8h1M199.0 248.3h1M197.7 261.9h1M280.6 66.2h1M268.2 103.1h1M256.9 128.8h1M203.9 265.9h1M187.5 312.3h1M283.8 86.4h1M278.7 92.0h1M268.7 125.9h1M266.9 124.6h1M236.3 213.8h1M289.1 89.4h1M285.5 98.7h1M281.2 115.5h1M281.2 115.3h1M277.6 125.0h1M275.0 131.3h1M208.0 312.8h1M301.7 80.3h1M302.9 79.4h1M294.2 93.5h1M292.1 110.4h1M279.4 134.1h1M276.6 149.5h1M236.5 267.2h1M214.5 316.4h1M309.7 82.8h1M310.1 83.8h1M295.1 123.4h1M218.8 331.5h1M319.5 87.5h1M309.5 108.5h1M300.1 118.0h1M301.1 127.7h1M301.6 127.4h1M296.4 141.9h1M295.8 140.4h1M261.6 245.9h1M241.3 305.4h1M321.4 98.5h1M313.1 118.0h1M311.6 119.1h1M240.3 331.7h1M237.5 340.1h1M329.5 96.4h1M324.0 112.5h1M323.9 109.9h1M321.6 116.4h1M320.6 120.5h1M333.3 105.4h1M327.8 123.3h1M324.1 149.8h1M320.0 162.2h1M315.6 163.1h1M316.6 159.7h1M300.6 209.0h1M35.1 87.1h1M29.4 101.2h1M64.4 41.5h1M63.5 48.4h1M88.2 6.4h1M39.5 84.0h1M39.7 80.6h1M0.9 141.6h1M61.6 48.4h1M37.2 87.5h1M60.1 48.6h1M29.6 98.8h1M71.3 33.3h1M79.5 21.9h1M46.2 70.5h1M78.5 22.6h1M1.5 137.9h1M53.5 61.9h1M81.6 17.6h1M68.3 40.7h1M14.8 118.8h1M54.1 60.7h1M91.5 4.8h1M86.7 11.7h1M84.2 11.5h1M22.2 106.4h1M53.0 59.6h1M14.6 120.2h1"/>
<path stroke="#b2325f" d="M101.6 11.0h1M101.0 11.5h1M102.6 8.0h1M95.4 24.7h1M96.9 28.9h1M95.0 22.4h1M93.6 25.2h1M92.6 32.5h1M89.0 31.5h1M80.2 41.7h1M74.8 41.6h1M82.2 39.8h1M68.5 61.0h1M71.1 58.0h1M60.0 73.6h1M55.7 83.7h1M46.7 103.4h1M43.0 103.6h1M39.0 112.0h1M24.9 134.4h1M23.4 131.3h1M20.2 134.9h1M117.1 0.6h1M114.7 8.0h1M114.6 9.9h1M107.3 27.5h1M103.9 21.3h1M108.5 22.7h1M95.3 33.3h1M94.6 34.9h1M84.7 53.1h1M83.8 54.7h1M78.2 61.4h1M80.5 60.4h1M81.0 61.4h1M73.8 71.2h1M75.1 69.0h1M67.3 81.3h1M71.5 75.5h1M68.6 77.4h1M72.3 78.4h1M66.4 84.9h1M56.6 100.1h1M52.2 107.2h1M38.2 132.0h1M34.8 133.2h1M37.2 135.8h1M37.3 134.6h1M20.4 157.6h1M7.0 179.3h1M11.2 173.7h1M127.7 1.3h1M126.8 1.1h1M126.3 2.0h1M121.3 13.2h1M121.2 15.0h1M116.6 17.2h1M115.3 18.7h1M113.7 28.0h1M110.8 21.7h1M108.2 32.3h1M106.5 34.9h1M103.7 41.4h1M100.2 46.2h1M96.3 43.9h1M96.4 52.7h1M88.7 58.6h1M98.2 61.0h1M92.9 61.1h1M92.8 61.0h1M94.1 58.4h1M82.2 74.4h1M79.6 89.3h1M69.2 96.6h1M51.9 129.9h1M43.4 136.9h1M43.1 137.1h1M23.1 171.3h1M19.0 180.4h1M11.5 194.1h1M138.0 6.8h1M132.3 11.5h1M130.9 10.7h1M131.2 13.2h1M126.7 18.2h1M124.0 35.2h1M122.1 33.9h1M114.7 32.1h1M121.5 29.7h1M113.8 47.5h1M112.6 45.4h1M110.2 46.4h1M107.5 52.5h1M108.6 51.5h1M109.4 51.0h1M103.6 57.2h1M107.8 55.2h1M100.1 64.1h1M101.6 62.2h1M97.1 71.6h1M89.6 78.3h1M93.6 79.9h1M94.7 75.4h1M97.8 76.5h1M83.6 90.8h1M61.6 126.3h1M52.7 142.5h1M27.2 179.2h1M28.4 182.5h1M148.4 3.0h1M144.1 9.3h1M145.9 9.8h1M138.7 13.9h1M135.7 20.7h1M135.8 27.1h1M133.0 27.3h1M128.1 33.5h1M124.7 41.5h1M121.5 41.8h1M118.5 50.6h1M117.2 64.4h1M113.3 62.9h1M110.1 75.6h1M105.0 75.5h1M98.6 81.1h1M96.4 89.5h1M91.6 100.0h1M84.1 106.5h1M84.6 106.0h1M78.3 125.4h1M49.5 163.9h1M42.6 180.7h1M35.7 194.8h1M37.5 190.4h1M37.4 190.9h1M35.9 190.9h1M38.1 190.0h1M34.0 198.3h1M155.5 9.5h1M142.6 16.3h1M144.4 24.9h1M144.1 27.3h1M140.9 38.8h1M133.9 46.2h1M126.9 50.0h1M127.1 60.0h1M124.6 53.0h1M129.1 62.3h1M120.3 66.9h1M114.3 73.3h1M115.8 81.2h1M87.5 118.4h1M66.0 159.5h1M68.2 159.3h1M58.2 181.7h1M52.8 186.7h1M32.6 222.5h1M25.2 235.1h1M28.3 234.5h1M164.3 6.9h1M162.6 10.5h1M161.5 11.6h1M162.5 11.8h1M154.4 20.1h1M149.6 27.3h1M145.7 40.6h1M145.4 40.8h1M140.2 51.6h1M140.7 49.6h1M128.5 68.4h1M121.5 76.3h1M124.1 78.1h1M124.1 74.8h1M119.9 84.3h1M116.8 77.7h1M113.6 96.3h1M108.7 107.5h1M102.2 114.1h1M100.5 120.4h1M82.2 155.5h1M74.8 164.0h1M72.2 173.9h1M53.2 204.0h1M49.3 209.9h1M37.5 228.3h1M41.3 225.6h1M174.8 9.8h1M172.9 11.9h1M172.6 8.5h1M174.3 20.3h1M170.4 15.2h1M170.3 17.8h1M164.7 22.2h1M167.0 21.5h1M163.3 26.1h1M163.4 36.2h1M157.1 40.3h1M157.1 40.4h1M157.2 39.8h1M153.0 48.4h1M156.7 46.1h1M148.9 53.9h1M144.6 61.4h1M142.7 58.2h1M144.8 59.7h1M140.2 68.5h1M142.2 66.7h1M142.5 64.3h1M134.3 80.7h1M128.3 88.5h1M125.1 93.5h1M129.3 100.0h1M108.9 116.5h1M88.1 158.9h1M87.9 156.3h1M81.0 176.0h1M79.2 177.8h1M80.4 176.7h1M75.3 188.8h1M73.4 187.2h1M70.1 195.6h1M71.4 196.7h1M71.7 196.6h1M70.0 195.9h1M66.8 205.9h1M62.9 217.6h1M60.3 217.4h1M65.7 215.6h1M61.4 214.7h1M49.6 233.3h1M50.9 232.4h1M49.6 230.2h1M162.1 46.7h1M161.0 43.6h1M159.4 56.7h1M151.8 67.2h1M147.5 70.6h1M147.3 81.3h1M128.2 108.5h1M128.1 107.1h1M93.1 174.5h1M95.5 173.0h1M80.6 197.8h1M53.9 249.7h1M185.2 27.5h1M186.2 19.2h1M182.5 30.0h1M177.2 29.7h1M177.3 38.2h1M178.9 34.9h1M176.1 29.6h1M171.3 38.7h1M173.7 42.8h1M174.3 43.2h1M160.8 63.8h1M162.8 59.9h1M157.6 67.2h1M155.9 73.4h1M154.7 78.2h1M156.2 78.6h1M148.2 92.2h1M113.3 167.8h1M93.4 196.6h1M87.6 212.5h1M84.2 214.1h1M79.5 224.5h1M77.0 224.6h1M73.9 230.4h1M63.5 248.9h1M64.5 252.5h1M62.2 249.8h1M190.3 32.6h1M178.8 52.1h1M173.4 60.5h1M174.6 64.5h1M169.1 69.8h1M164.9 79.6h1M159.7 88.9h1M151.8 101.9h1M117.2 181.4h1M106.6 192.5h1M101.6 202.4h1M98.6 203.2h1M102.7 194.2h1M91.0 217.8h1M90.6 227.7h1M77.7 250.6h1M75.3 258.0h1M73.6 257.1h1M200.9 29.8h1M199.9 26.8h1M194.0 27.1h1M193.5 39.0h1M195.0 38.8h1M186.9 51.0h1M187.3 47.0h1M188.8 48.2h1M188.3 48.3h1M187.2 55.7h1M183.0 63.8h1M178.4 68.9h1M167.7 92.1h1M130.3 171.0h1M117.0 189.2h1M115.3 208.2h1M108.4 212.4h1M93.2 242.4h1M89.3 256.4h1M88.5 250.0h1M81.4 262.8h1M205.2 34.7h1M202.0 35.8h1M204.0 40.6h1M204.5 40.9h1M202.7 36.7h1M181.2 74.0h1M178.3 88.8h1M141.7 169.5h1M128.2 195.1h1M125.4 199.7h1M122.1 208.9h1M108.3 233.4h1M108.3 237.4h1M109.6 236.3h1M111.5 229.0h1M101.9 244.5h1M104.1 242.1h1M92.2 264.6h1M218.4 34.6h1M210.6 39.5h1M210.1 42.8h1M209.4 43.1h1M197.3 70.0h1M197.7 72.4h1M198.5 70.0h1M192.2 76.4h1M145.6 192.3h1M140.7 194.6h1M132.7 205.4h1M118.4 227.1h1M120.2 231.6h1M118.2 241.4h1M115.4 237.8h1M113.7 243.2h1M222.4 37.4h1M220.2 44.0h1M220.9 44.5h1M223.4 46.9h1M218.8 50.2h1M214.9 55.4h1M209.9 61.7h1M213.2 61.0h1M208.0 69.5h1M206.2 75.9h1M205.7 79.1h1M163.2 166.9h1M159.8 175.7h1M160.4 173.5h1M150.4 189.6h1M142.8 200.5h1M141.1 209.3h1M125.8 237.0h1M119.3 258.0h1M117.2 259.3h1M113.4 281.2h1M224.3 62.5h1M222.5 64.8h1M216.5 74.4h1M130.5 259.9h1M125.8 272.9h1M238.8 45.2h1M236.0 51.5h1M237.2 46.1h1M233.6 50.0h1M235.8 55.0h1M235.9 62.5h1M223.7 67.3h1M226.3 69.6h1M220.2 81.4h1M176.7 182.3h1M168.5 204.2h1M147.4 245.9h1M141.7 254.4h1M141.6 259.9h1M138.6 264.7h1M138.0 265.8h1M140.2 265.9h1M131.0 286.4h1M244.9 57.4h1M241.6 61.8h1M236.6 57.8h1M240.5 58.1h1M233.4 75.1h1M173.4 212.7h1M251.5 54.8h1M249.3 58.9h1M249.7 60.9h1M248.2 66.4h1M245.7 67.5h1M245.5 66.3h1M241.6 79.6h1M184.9 219.0h1M157.9 275.8h1M258.1 53.5h1M255.8 61.2h1M258.9 63.7h1M257.9 61.2h1M247.3 87.0h1M238.3 102.9h1M240.3 100.7h1M185.3 227.7h1M185.7 229.9h1M266.7 61.8h1M264.0 67.5h1M187.7 253.0h1M166.4 306.6h1M274.3 67.0h1M274.4 66.3h1M273.3 69.2h1M268.1 70.7h1M246.2 131.8h1M176.5 304.4h1M281.2 69.0h1M271.1 92.3h1M263.4 107.9h1M265.3 107.1h1M209.3 255.2h1M280.3 91.1h1M280.5 90.3h1M276.4 99.0h1M275.6 104.0h1M273.0 111.6h1M236.7 205.9h1M227.4 228.4h1M211.4 266.2h1M210.9 285.7h1M292.0 85.6h1M291.0 89.8h1M279.2 115.8h1M278.8 131.1h1M271.9 138.0h1M233.0 245.0h1M228.9 253.0h1M225.3 266.0h1M222.0 271.4h1M208.2 311.3h1M205.9 318.6h1M300.1 78.2h1M299.8 79.6h1M297.3 94.5h1M295.3 97.6h1M291.8 106.1h1M291.4 107.3h1M293.1 113.8h1M290.8 113.8h1M287.4 118.1h1M285.4 125.8h1M279.5 134.0h1M307.8 86.7h1M301.6 102.2h1M296.9 125.3h1M239.4 279.1h1M315.0 90.3h1M314.1 91.6h1M307.4 113.6h1M305.7 119.1h1M306.4 116.7h1M301.6 127.4h1M302.1 127.2h1M230.0 336.1h1M321.4 94.0h1M320.8 98.0h1M316.9 103.8h1M309.8 131.0h1M249.7 306.1h1M327.8 98.6h1M327.2 110.4h1M324.2 113.0h1M321.8 121.6h1M320.1 123.8h1M319.7 130.5h1M322.6 129.6h1M315.0 133.6h1M306.5 159.8h1M291.0 213.9h1M263.7 300.3h1M330.2 106.9h1M329.5 118.1h1M327.9 120.6h1M329.7 123.2h1M58.0 21.2h1M5.2 117.7h1M28.1 74.1h1M31.2 80.7h1M20.6 69.8h1M27.2 78.2h1M18.3 93.2h1M47.0 47.5h1M18.4 78.2h1M56.9 16.0h1M11.6 93.7h1M87.4 7.6h1M88.8 3.4h1M33.9 92.2h1M90.1 6.8h1M6.4 131.4h1M66.1 42.7h1M40.5 77.9h1M81.7 16.1h1M75.6 29.4h1M86.2 8.3h1M87.0 7.9h1M82.0 20.2h1M55.3 59.7h1M70.2 35.8h1M44.4 77.0h1M71.3 33.7h1M92.5 0.7h1M43.1 81.7h1M19.2 112.1h1M3.3 141.8h1M89.3 3.3h1M7.3 131.3h1M20.9 109.3h1M54.6 58.6h1M47.4 70.3h1M32.7 91.5h1M80.0 19.8h1M83.0 15.0h1M23.8 104.1h1M29.5 98.1h1M81.0 22.6h1"/>
<path stroke="#d8a4c5" d="M105.1 12.3h1M103.0 10.7h1M102.2 10.8h1M100.4 8.8h1M95.1 24.4h1M93.2 25.2h1M91.0 31.2h1M77.6 46.9h1M72.1 59.0h1M71.5 55.8h1M65.7 63.2h1M66.8 66.0h1M55.1 80.9h1M50.1 89.2h1M50.7 87.6h1M47.8 94.7h1M44.4 95.5h1M41.7 104.0h1M32.6 115.1h1M32.7 119.8h1M23.7 127.4h1M25.5 128.6h1M24.4 135.3h1M28.9 134.4h1M18.0 143.5h1M10.0 151.9h1M4.8 164.2h1M2.8 164.6h1M115.7 9.3h1M106.1 14.9h1M103.4 22.1h1M105.8 24.8h1M105.0 20.3h1M106.9 22.4h1M100.1 26.8h1M102.7 30.1h1M85.4 42.1h1M84.6 44.3h1M83.6 55.1h1M84.3 54.8h1M81.0 62.8h1M81.2 61.7h1M80.2 61.4h1M61.1 92.7h1M53.6 100.4h1M56.6 99.5h1M58.0 102.1h1M54.5 101.0h1M42.0 123.6h1M32.6 134.8h1M40.3 133.2h1M35.0 140.8h1M19.2 159.4h1M15.0 168.1h1M15.0 168.3h1M8.6 170.3h1M0.0 187.3h1M114.3 21.1h1M116.6 16.7h1M110.7 26.4h1M108.6 33.6h1M104.4 39.8h1M101.9 50.4h1M103.1 51.7h1M101.4 43.7h1M95.5 47.8h1M96.0 61.1h1M87.3 67.2h1M83.9 77.1h1M75.0 88.4h1M67.7 97.8h1M61.8 105.3h1M59.3 114.2h1M49.9 129.8h1M42.4 136.3h1M43.9 136.7h1M42.0 139.4h1M42.0 138.9h1M38.6 150.7h1M34.8 155.0h1M33.3 155.1h1M35.1 155.7h1M29.5 164.4h1M27.7 164.7h1M134.6 6.4h1M132.6 12.4h1M131.5 12.4h1M124.7 21.7h1M121.2 30.8h1M120.9 30.0h1M119.8 30.4h1M116.3 37.7h1M116.8 35.1h1M114.5 37.2h1M107.0 53.3h1M97.5 71.1h1M101.5 65.6h1M100.5 64.5h1M91.8 79.2h1M95.5 80.1h1M87.3 81.5h1M95.4 77.0h1M82.0 94.2h1M84.5 92.0h1M87.0 95.1h1M83.3 94.2h1M77.8 90.6h1M84.6 102.1h1M74.8 110.3h1M66.8 117.1h1M57.9 130.7h1M58.6 131.0h1M51.7 141.2h1M54.3 141.7h1M45.5 161.0h1M46.9 157.7h1M28.2 184.7h1M23.8 194.3h1M14.2 212.1h1M6.4 224.4h1M147.9 2.8h1M147.7 2.5h1M148.8 2.8h1M144.1 9.5h1M145.2 11.1h1M146.6 7.1h1M139.5 13.9h1M135.0 20.4h1M128.6 34.5h1M123.4 42.2h1M120.4 48.1h1M119.5 46.8h1M119.5 49.1h1M118.7 57.6h1M116.1 55.5h1M119.6 59.2h1M106.3 70.4h1M108.9 67.9h1M109.1 70.8h1M104.8 74.9h1M105.7 77.2h1M105.5 73.7h1M104.9 77.1h1M101.7 78.7h1M95.8 93.3h1M102.2 90.2h1M97.0 89.4h1M99.0 96.7h1M91.6 99.2h1M80.0 121.1h1M74.4 126.0h1M67.0 137.6h1M66.2 139.7h1M59.8 153.1h1M48.9 171.4h1M42.0 179.3h1M34.8 191.2h1M36.0 192.8h1M26.1 209.0h1M21.4 219.8h1M154.4 7.8h1M150.7 13.7h1M150.5 11.9h1M143.7 25.6h1M136.2 37.2h1M133.1 46.6h1M127.4 52.4h1M126.7 53.8h1M125.7 57.4h1M128.5 56.4h1M121.3 65.7h1M122.3 65.0h1M115.6 66.0h1M119.9 66.8h1M116.8 72.9h1M118.1 73.5h1M114.1 80.0h1M105.5 86.8h1M104.2 92.8h1M98.3 103.0h1M95.8 112.4h1M95.7 111.7h1M87.5 125.7h1M85.2 126.8h1M80.4 133.8h1M77.1 144.4h1M68.3 159.5h1M60.3 172.9h1M55.6 177.7h1M54.6 185.9h1M54.4 184.4h1M53.6 186.7h1M41.4 210.8h1M33.6 215.1h1M165.1 5.6h1M165.0 3.1h1M161.9 5.5h1M165.0 6.6h1M161.2 11.7h1M162.3 11.0h1M161.1 9.0h1M159.3 14.9h1M160.6 10.4h1M161.0 15.7h1M153.1 24.8h1M153.3 25.0h1M149.5 29.0h1M144.4 28.8h1M149.5 36.6h1M148.4 43.0h1M140.1 49.4h1M138.0 52.5h1M135.0 55.8h1M134.1 62.5h1M129.1 69.0h1M124.8 76.0h1M125.3 75.4h1M119.0 83.5h1M117.0 90.6h1M113.3 99.0h1M106.3 98.9h1M112.7 98.2h1M93.0 136.8h1M84.6 150.0h1M71.8 161.0h1M77.0 163.4h1M69.3 174.3h1M70.0 174.3h1M66.5 181.4h1M64.4 191.9h1M62.3 190.8h1M38.8 224.7h1M35.1 237.9h1M171.9 7.2h1M171.9 7.1h1M169.7 16.3h1M167.1 21.6h1M161.9 26.2h1M160.8 25.9h1M161.7 26.5h1M159.4 34.2h1M159.1 31.3h1M155.7 43.3h1M150.4 60.4h1M148.4 60.8h1M144.6 58.9h1M141.6 65.3h1M134.5 82.2h1M127.7 95.3h1M121.8 101.0h1M115.4 106.6h1M84.2 177.0h1M76.6 186.8h1M74.6 188.6h1M73.3 188.8h1M72.5 193.0h1M71.8 196.1h1M71.0 196.5h1M61.0 216.3h1M62.2 217.6h1M43.7 239.3h1M39.5 247.1h1M180.9 9.6h1M182.3 16.0h1M180.6 13.2h1M177.3 20.4h1M176.5 20.6h1M176.2 19.2h1M171.0 26.0h1M173.4 24.8h1M164.9 30.5h1M169.1 31.7h1M162.9 35.4h1M162.1 45.2h1M152.6 55.6h1M145.8 78.2h1M140.1 86.6h1M139.3 88.4h1M140.3 86.7h1M137.2 92.2h1M133.4 101.2h1M88.0 180.3h1M86.0 186.5h1M79.4 200.1h1M79.3 200.3h1M71.3 212.7h1M77.1 213.9h1M59.2 236.6h1M56.8 236.6h1M55.2 247.3h1M186.6 17.1h1M186.6 18.0h1M184.6 23.9h1M184.0 23.9h1M177.3 36.0h1M177.8 34.2h1M178.9 36.1h1M173.1 42.9h1M174.1 42.1h1M174.3 43.1h1M174.9 43.2h1M173.0 40.7h1M171.3 48.0h1M171.4 49.1h1M168.6 56.6h1M163.8 59.8h1M158.4 68.5h1M155.4 77.5h1M155.2 87.5h1M97.5 185.4h1M98.4 185.3h1M95.3 195.9h1M79.1 223.2h1M71.9 231.8h1M65.8 244.1h1M70.8 239.2h1M65.0 246.1h1M63.4 252.1h1M65.4 250.4h1M194.9 20.6h1M195.1 31.3h1M185.1 28.8h1M185.6 36.5h1M181.0 49.8h1M179.7 50.6h1M174.8 66.4h1M168.9 72.4h1M169.7 83.6h1M149.4 110.0h1M100.6 199.1h1M98.7 202.8h1M103.7 199.4h1M91.6 218.7h1M93.2 217.0h1M82.5 234.6h1M81.1 236.8h1M76.7 246.6h1M73.1 255.9h1M72.4 255.5h1M202.7 26.5h1M202.6 26.7h1M203.1 27.9h1M190.9 42.6h1M186.9 50.4h1M190.1 47.4h1M188.8 49.5h1M189.9 48.7h1M185.3 56.7h1M186.5 56.1h1M185.6 57.8h1M182.5 63.5h1M182.9 61.5h1M178.5 68.3h1M179.9 68.7h1M180.4 69.3h1M120.0 188.4h1M111.9 207.1h1M109.5 207.9h1M105.0 222.0h1M208.4 29.5h1M201.4 45.9h1M194.1 60.6h1M190.4 67.7h1M191.5 64.4h1M185.5 70.6h1M178.5 97.3h1M144.0 166.1h1M124.9 202.1h1M119.1 202.0h1M120.5 209.0h1M102.7 245.8h1M98.8 255.1h1M93.2 266.6h1M211.5 45.9h1M212.6 45.4h1M206.7 51.6h1M195.2 79.1h1M194.1 79.3h1M191.2 86.9h1M191.9 86.3h1M147.2 178.9h1M144.2 182.8h1M144.3 195.4h1M138.1 195.4h1M140.0 196.9h1M135.7 205.0h1M133.1 203.1h1M133.7 202.5h1M130.1 211.9h1M129.7 222.5h1M123.3 232.6h1M102.0 272.1h1M223.9 37.1h1M213.8 54.5h1M213.7 55.6h1M214.9 55.4h1M209.7 68.5h1M205.0 77.8h1M205.3 79.0h1M206.3 78.3h1M202.9 81.5h1M156.6 170.5h1M158.2 175.0h1M156.2 181.7h1M144.4 209.3h1M129.6 233.6h1M125.8 247.2h1M113.9 262.3h1M116.1 263.2h1M108.9 275.6h1M109.6 277.5h1M235.0 41.6h1M229.8 52.1h1M223.6 53.1h1M162.5 186.6h1M155.0 206.9h1M150.9 212.3h1M150.5 212.1h1M144.0 231.7h1M134.4 250.7h1M127.5 259.6h1M128.7 260.4h1M131.2 257.2h1M128.8 259.5h1M125.7 257.4h1M124.8 272.0h1M127.5 268.7h1M237.7 44.4h1M236.9 42.8h1M234.6 51.1h1M235.4 51.2h1M234.9 50.6h1M233.2 45.6h1M235.8 50.0h1M233.5 58.1h1M229.4 58.7h1M228.7 65.6h1M223.0 77.4h1M196.1 139.4h1M180.3 174.3h1M168.5 200.4h1M158.6 220.4h1M142.6 254.3h1M144.1 254.9h1M139.0 266.2h1M138.2 266.0h1M132.8 273.3h1M132.1 283.2h1M245.4 49.2h1M245.3 50.1h1M241.9 53.6h1M241.8 54.1h1M241.8 54.9h1M242.8 54.0h1M238.7 60.1h1M236.5 68.0h1M235.7 71.5h1M233.3 74.9h1M162.2 239.5h1M136.1 293.8h1M245.0 73.1h1M215.9 141.7h1M259.1 63.6h1M251.9 68.5h1M173.7 256.3h1M262.8 57.9h1M253.6 92.4h1M250.4 100.6h1M213.0 188.7h1M272.9 67.3h1M268.3 77.7h1M265.9 85.7h1M263.1 89.0h1M256.9 103.7h1M258.2 104.1h1M207.8 242.7h1M190.3 277.5h1M178.6 293.7h1M272.5 88.4h1M273.0 88.7h1M272.6 93.4h1M268.4 103.1h1M264.3 106.3h1M264.9 107.1h1M228.4 197.4h1M221.9 214.7h1M190.2 304.1h1M281.4 85.6h1M282.6 85.9h1M281.1 90.4h1M279.9 88.4h1M281.1 89.9h1M211.2 266.7h1M287.9 96.3h1M279.6 116.8h1M278.0 115.2h1M280.1 114.1h1M269.8 137.8h1M232.1 240.1h1M301.2 81.3h1M298.6 84.0h1M299.3 84.4h1M297.2 90.9h1M292.5 106.4h1M292.5 114.0h1M286.6 119.0h1M235.2 267.8h1M218.4 316.7h1M214.8 315.6h1M309.8 84.0h1M310.6 84.5h1M302.0 98.2h1M299.0 109.9h1M299.2 108.1h1M300.3 110.9h1M300.1 110.5h1M297.2 118.2h1M233.1 311.7h1M230.7 306.5h1M308.8 100.0h1M307.4 110.4h1M307.2 113.1h1M302.4 128.6h1M301.8 128.3h1M275.5 205.7h1M231.8 332.4h1M322.4 91.8h1M322.4 91.3h1M310.1 123.2h1M308.2 131.5h1M302.6 147.6h1M295.4 181.8h1M330.5 93.9h1M328.9 95.3h1M321.6 121.8h1M255.2 319.4h1M333.3 103.2h1M332.4 108.8h1M329.4 124.5h1M325.9 136.8h1M326.0 132.7h1M51.2 45.1h1M48.0 34.0h1M51.6 32.8h1M64.1 14.6h1M21.7 76.9h1M26.3 64.5h1M18.3 100.4h1M7.2 115.3h1M62.2 11.7h1M3.0 95.3h1M55.3 30.2h1M62.7 26.5h1M8.5 83.7h1M65.3 7.3h1M49.1 59.1h1M17.6 110.7h1M13.4 110.5h1M21.3 100.5h1M9.5 121.8h1M56.9 48.8h1M69.3 30.6h1M55.0 54.7h1M34.9 82.0h1M60.2 45.7h1M84.0 6.3h1M38.3 72.6h1M0.4 132.6h1M79.4 12.5h1M13.7 110.3h1M86.1 3.3h1M0.3 132.0h1M3.2 124.0h1M74.2 19.5h1M59.0 42.8h1M38.9 74.2h1M67.9 30.4h1M70.2 27.9h1M58.3 44.9h1M7.8 120.2h1M22.5 100.9h1M13.0 116.7h1M83.0 12.2h1M21.2 99.2h1M25.7 96.2h1M75.5 15.8h1M51.7 49.5h1M25.4 97.8h1M76.6 16.6h1M26.3 96.8h1M18.5 109.7h1M36.3 237.0h1M236.4 333.9h1M249.1 340.6h1M243.3 336.9h1M73.3 254.2h1M183.4 310.6h1M257.4 341.3h1M227.8 329.8h1M58.9 248.1h1M237.8 332.4h1M251.6 341.5h1M96.9 267.4h1M242.9 335.3h1M241.4 338.6h1M145.5 288.7h1M102.4 267.6h1M5.1 223.6h1M182.9 306.1h1M105.1 271.1h1M184.6 310.3h1M211.3 320.6h1M222.5 327.8h1M166.8 298.4h1M61.0 250.4h1M102.8 268.3h1M86.0 261.0h1M154.9 296.1h1M108.1 272.4h1M124.4 279.3h1M228.9 329.2h1M243.2 338.1h1"/>
<path stroke="#883261" d="M100.8 12.6h1M102.7 7.2h1M95.1 19.4h1M94.1 25.9h1M93.3 30.8h1M88.7 33.2h1M86.4 25.6h1M82.1 39.6h1M83.4 33.3h1M82.9 39.0h1M80.9 41.8h1M54.4 84.0h1M51.7 86.5h1M47.5 95.5h1M42.7 106.1h1M37.0 112.1h1M30.7 119.4h1M28.8 124.3h1M25.0 127.3h1M20.7 128.6h1M23.2 133.5h1M18.2 143.2h1M14.9 148.0h1M0.2 173.0h1M1.7 175.1h1M0.1 171.1h1M117.9 4.0h1M112.0 2.8h1M108.1 14.5h1M106.3 21.4h1M104.7 24.2h1M105.1 23.0h1M107.4 25.4h1M96.8 27.1h1M95.9 34.7h1M97.2 33.9h1M91.9 41.5h1M89.2 48.9h1M78.8 54.1h1M78.4 64.5h1M72.2 80.2h1M71.7 79.4h1M64.0 87.9h1M55.5 94.4h1M62.7 90.1h1M52.1 105.6h1M53.1 106.7h1M47.8 103.8h1M50.6 107.2h1M40.0 124.2h1M35.3 134.2h1M19.7 158.2h1M12.0 177.2h1M12.2 175.8h1M2.3 184.8h1M0.8 188.2h1M130.4 4.8h1M128.3 1.2h1M124.0 6.6h1M122.9 8.3h1M124.5 4.2h1M123.7 2.0h1M121.7 12.8h1M122.1 13.7h1M115.3 27.4h1M110.2 30.3h1M110.0 23.4h1M99.8 42.3h1M103.8 43.5h1M103.0 47.2h1M98.5 49.6h1M95.6 55.6h1M96.0 54.5h1M94.8 52.6h1M94.1 59.0h1M93.5 59.3h1M89.3 58.3h1M95.8 65.6h1M92.7 60.5h1M88.0 68.0h1M83.1 75.9h1M75.9 73.7h1M80.2 81.7h1M81.2 80.9h1M79.8 79.3h1M74.0 93.0h1M77.3 91.0h1M73.8 89.7h1M67.6 95.9h1M67.3 96.9h1M63.5 107.4h1M60.8 106.2h1M63.5 104.9h1M53.5 123.6h1M50.7 128.4h1M42.1 136.9h1M45.6 133.5h1M41.9 138.0h1M43.3 136.7h1M41.7 139.8h1M42.5 136.8h1M24.9 158.9h1M18.6 180.1h1M8.6 194.9h1M131.8 12.9h1M122.0 27.6h1M117.5 37.4h1M99.6 65.3h1M98.7 71.7h1M91.1 72.9h1M93.9 76.6h1M86.0 87.3h1M82.8 87.1h1M83.2 93.4h1M85.3 95.1h1M79.1 100.0h1M74.3 110.4h1M75.6 107.2h1M73.8 109.5h1M75.5 108.1h1M68.7 115.8h1M67.8 116.6h1M64.8 126.4h1M58.9 134.1h1M55.3 142.0h1M54.1 141.4h1M53.8 142.5h1M42.3 157.9h1M31.8 178.4h1M33.0 174.8h1M29.7 182.6h1M28.0 183.7h1M13.1 202.9h1M13.6 203.9h1M11.1 218.2h1M9.4 218.1h1M5.1 230.8h1M141.1 13.6h1M142.8 14.7h1M133.4 23.9h1M135.5 21.3h1M139.0 23.9h1M134.8 21.9h1M128.8 35.3h1M122.4 34.8h1M124.1 35.1h1M129.1 33.5h1M120.0 46.1h1M117.5 56.2h1M117.2 55.4h1M122.4 56.4h1M106.8 70.0h1M108.9 69.9h1M107.5 73.4h1M102.5 80.0h1M100.0 72.7h1M100.9 79.3h1M104.9 76.4h1M101.8 83.7h1M100.0 77.3h1M95.6 90.7h1M96.3 89.4h1M93.7 102.6h1M87.1 101.0h1M92.1 99.9h1M83.9 106.7h1M87.0 107.9h1M78.0 113.6h1M78.9 124.1h1M79.4 121.4h1M73.9 132.3h1M67.4 143.3h1M68.7 137.0h1M67.4 138.1h1M62.9 147.6h1M56.2 147.9h1M61.6 148.6h1M64.2 147.7h1M63.1 146.1h1M54.4 166.6h1M46.6 176.0h1M47.7 172.7h1M43.1 179.8h1M42.1 179.2h1M46.1 181.2h1M34.1 193.3h1M35.0 194.5h1M36.2 191.0h1M37.6 193.6h1M23.9 201.8h1M31.5 202.1h1M29.6 198.1h1M12.3 230.5h1M16.0 228.2h1M7.0 228.0h1M153.3 8.4h1M149.4 9.3h1M149.7 7.6h1M151.6 11.7h1M148.9 11.4h1M146.0 19.7h1M147.7 23.4h1M149.4 24.8h1M144.3 15.9h1M136.2 37.7h1M138.8 36.6h1M134.6 44.6h1M134.5 46.0h1M129.8 52.8h1M128.8 52.6h1M131.1 48.5h1M127.5 58.6h1M125.1 58.5h1M128.4 58.8h1M115.8 74.4h1M112.9 80.4h1M112.9 81.5h1M106.8 89.7h1M107.1 91.5h1M97.3 102.6h1M100.1 104.5h1M82.2 132.2h1M83.0 134.4h1M59.1 166.8h1M59.0 179.5h1M60.5 172.5h1M56.4 176.2h1M58.5 176.1h1M53.3 185.4h1M46.8 197.4h1M46.1 196.1h1M30.5 213.4h1M28.3 220.8h1M30.2 224.3h1M23.7 231.9h1M29.7 237.8h1M23.6 236.2h1M20.8 230.8h1M161.5 5.6h1M165.6 5.5h1M165.0 5.3h1M164.7 0.6h1M165.0 5.8h1M160.8 13.0h1M159.5 16.7h1M158.9 17.8h1M157.8 18.1h1M158.7 14.5h1M155.1 19.1h1M147.4 29.9h1M151.2 30.3h1M149.9 29.9h1M149.6 29.1h1M149.9 36.7h1M149.5 34.9h1M144.8 44.3h1M140.7 48.7h1M134.0 59.0h1M128.0 70.0h1M128.0 72.9h1M130.2 68.5h1M124.4 75.9h1M116.3 79.6h1M118.3 83.2h1M116.0 91.8h1M112.1 99.4h1M110.4 97.7h1M108.3 105.1h1M109.6 106.3h1M111.3 107.2h1M95.6 119.4h1M91.4 140.1h1M92.5 138.8h1M84.9 146.1h1M62.8 181.5h1M63.1 190.0h1M60.1 191.5h1M52.7 206.5h1M45.1 218.3h1M45.2 225.3h1M172.3 7.4h1M174.2 8.5h1M171.9 4.6h1M172.3 7.3h1M171.0 16.3h1M168.5 17.1h1M166.2 22.3h1M166.1 22.7h1M161.1 23.0h1M167.8 18.6h1M165.1 24.5h1M169.1 23.4h1M166.6 22.9h1M159.4 33.8h1M156.1 36.4h1M151.3 38.4h1M155.1 39.7h1M149.1 56.2h1M145.5 59.5h1M142.4 63.9h1M136.2 67.0h1M140.4 68.9h1M141.8 66.6h1M142.9 65.5h1M124.5 96.4h1M120.0 103.4h1M81.0 178.0h1M81.4 178.2h1M74.3 178.9h1M76.6 187.2h1M78.0 190.0h1M66.6 205.1h1M65.7 207.4h1M69.3 201.4h1M54.7 215.8h1M64.3 216.7h1M56.1 224.2h1M56.1 223.6h1M52.0 228.6h1M53.3 234.2h1M50.4 232.4h1M54.2 234.0h1M42.2 245.3h1M179.7 11.1h1M178.9 15.7h1M178.5 24.0h1M171.8 28.0h1M168.5 34.9h1M167.3 31.8h1M169.2 37.1h1M169.7 40.7h1M150.9 67.9h1M147.7 64.4h1M145.2 78.0h1M139.4 86.4h1M138.3 94.5h1M134.7 106.5h1M129.4 105.7h1M127.4 111.4h1M82.8 180.3h1M86.9 185.3h1M76.9 204.9h1M70.2 214.5h1M68.7 227.3h1M54.9 242.8h1M54.3 248.3h1M53.9 249.9h1M53.8 249.4h1M187.8 16.0h1M185.5 21.1h1M185.8 21.5h1M183.9 24.3h1M182.8 19.2h1M183.8 21.0h1M181.5 30.6h1M180.8 29.2h1M182.2 27.1h1M177.1 36.3h1M176.7 29.6h1M175.7 41.5h1M173.1 43.6h1M175.8 45.4h1M173.2 45.6h1M173.2 44.5h1M172.0 48.4h1M171.3 48.7h1M166.2 55.2h1M166.5 57.6h1M169.0 52.8h1M165.7 56.2h1M167.4 53.6h1M159.2 59.8h1M153.9 74.2h1M155.1 75.3h1M152.8 81.8h1M148.1 90.2h1M144.8 92.1h1M139.6 109.8h1M101.9 176.1h1M95.7 189.9h1M96.2 195.0h1M87.5 218.5h1M77.4 223.9h1M71.4 225.3h1M80.5 222.0h1M73.5 231.9h1M73.6 242.7h1M67.0 241.3h1M67.6 240.6h1M62.1 252.8h1M194.6 22.8h1M191.3 29.0h1M190.1 29.8h1M184.1 38.4h1M184.7 38.0h1M181.0 45.1h1M179.7 48.6h1M178.5 51.7h1M178.8 50.5h1M181.0 51.2h1M177.0 51.8h1M176.1 57.9h1M173.6 67.1h1M162.6 71.4h1M163.4 80.6h1M159.7 88.5h1M153.6 92.7h1M156.0 96.7h1M100.8 200.4h1M100.7 200.7h1M105.3 201.0h1M99.5 201.8h1M99.0 205.0h1M100.8 200.3h1M83.3 235.7h1M80.9 243.2h1M83.0 242.0h1M78.0 245.4h1M72.0 259.9h1M72.0 257.3h1M69.8 249.0h1M205.2 31.8h1M203.6 24.5h1M203.2 26.9h1M198.5 31.7h1M199.8 29.7h1M191.2 40.6h1M198.5 35.7h1M187.0 51.5h1M187.0 48.2h1M190.8 49.5h1M187.2 51.9h1M183.8 60.3h1M186.9 55.5h1M182.5 65.4h1M181.4 63.5h1M179.2 70.1h1M172.7 77.6h1M175.1 72.7h1M174.7 77.1h1M145.8 136.5h1M132.2 167.4h1M127.9 167.2h1M114.9 195.5h1M118.3 202.8h1M104.7 204.5h1M109.3 207.0h1M113.0 203.2h1M113.5 203.6h1M111.1 206.9h1M112.3 205.3h1M111.4 206.3h1M104.3 217.7h1M98.4 230.0h1M97.1 234.3h1M89.3 242.0h1M88.3 246.8h1M86.1 252.0h1M80.8 263.4h1M81.2 258.0h1M209.4 25.0h1M211.1 31.0h1M202.6 40.2h1M197.2 52.8h1M191.1 57.5h1M189.8 66.3h1M187.4 67.0h1M188.9 69.1h1M189.7 66.7h1M189.9 67.9h1M188.6 71.8h1M188.2 75.1h1M185.0 74.9h1M177.4 98.3h1M149.8 149.3h1M133.7 182.5h1M132.9 184.4h1M134.2 182.8h1M128.7 190.6h1M125.1 201.5h1M122.4 207.4h1M123.8 201.5h1M127.6 201.3h1M117.2 211.8h1M122.1 210.2h1M123.8 209.9h1M115.4 216.7h1M115.4 216.8h1M110.8 227.0h1M111.6 227.4h1M107.0 236.0h1M107.5 237.5h1M105.6 247.1h1M99.2 252.6h1M93.2 262.4h1M215.5 29.2h1M215.7 42.1h1M212.6 39.2h1M210.3 43.7h1M210.1 48.2h1M207.1 52.5h1M198.5 69.0h1M202.3 60.8h1M189.8 87.0h1M147.9 168.6h1M144.9 184.6h1M142.7 186.8h1M137.5 193.6h1M140.7 195.0h1M141.7 196.7h1M136.5 187.9h1M126.4 222.6h1M111.2 253.0h1M109.1 253.7h1M219.7 44.5h1M220.9 49.9h1M215.5 56.4h1M212.3 62.8h1M206.8 79.1h1M181.4 133.5h1M162.1 169.9h1M158.5 173.5h1M156.3 176.8h1M155.1 181.0h1M134.3 224.4h1M132.7 240.3h1M123.7 251.6h1M118.6 258.7h1M121.1 255.6h1M114.4 264.3h1M109.0 276.1h1M230.9 39.6h1M233.8 42.2h1M228.1 47.2h1M229.5 46.7h1M232.9 49.0h1M224.2 66.4h1M221.1 61.9h1M221.1 60.5h1M221.4 61.5h1M216.7 74.4h1M216.4 73.5h1M161.9 203.8h1M156.8 205.0h1M151.4 212.5h1M151.8 213.2h1M145.8 223.5h1M145.5 222.5h1M127.5 259.3h1M240.6 43.1h1M234.7 48.9h1M234.8 53.2h1M233.2 49.8h1M237.6 49.9h1M236.3 51.5h1M231.3 54.7h1M222.2 78.9h1M220.5 89.0h1M162.9 211.6h1M158.0 219.8h1M157.1 228.2h1M156.5 227.0h1M139.8 267.0h1M139.4 267.2h1M140.1 263.9h1M137.3 266.1h1M140.0 266.6h1M138.9 266.2h1M129.1 285.9h1M131.0 290.9h1M244.0 49.3h1M242.2 54.5h1M244.9 55.4h1M243.0 55.1h1M241.3 54.2h1M238.8 52.6h1M246.8 53.8h1M241.6 63.6h1M237.0 66.6h1M229.1 89.0h1M217.4 118.9h1M185.6 185.2h1M175.7 202.4h1M171.6 212.3h1M172.7 211.5h1M168.3 220.1h1M167.7 224.2h1M156.2 241.1h1M253.1 51.1h1M245.5 71.7h1M243.1 79.7h1M241.8 80.0h1M226.9 113.8h1M227.9 111.1h1M193.3 201.0h1M146.8 291.4h1M259.6 56.2h1M258.4 63.3h1M257.8 62.5h1M257.8 62.6h1M258.3 64.6h1M239.6 101.7h1M233.7 116.7h1M193.8 214.2h1M182.0 237.5h1M179.3 242.5h1M173.7 255.4h1M171.6 269.4h1M166.0 281.2h1M162.1 287.1h1M160.8 300.4h1M156.9 297.4h1M258.0 80.4h1M257.1 83.1h1M257.9 82.8h1M252.4 86.4h1M243.7 112.3h1M241.6 120.5h1M203.2 214.1h1M176.6 281.7h1M274.1 66.7h1M271.4 69.4h1M259.5 102.0h1M258.0 103.2h1M251.8 123.4h1M217.5 205.5h1M211.3 219.0h1M208.9 230.4h1M207.3 229.0h1M194.2 262.4h1M179.8 292.6h1M175.0 308.1h1M178.6 312.9h1M174.6 311.7h1M278.3 75.4h1M274.5 81.4h1M268.9 103.7h1M263.9 106.0h1M265.0 108.3h1M257.5 122.1h1M252.2 144.2h1M219.5 216.6h1M215.9 234.1h1M212.8 242.4h1M196.2 272.7h1M201.3 272.4h1M187.3 300.3h1M188.4 311.7h1M292.5 77.0h1M282.1 84.3h1M283.2 84.7h1M279.9 89.8h1M275.7 100.1h1M273.9 97.0h1M276.5 104.6h1M276.3 106.7h1M275.2 105.6h1M274.0 113.6h1M267.2 127.8h1M217.5 257.8h1M207.3 286.9h1M200.3 308.5h1M197.5 307.9h1M289.5 90.4h1M289.9 90.6h1M289.1 89.9h1M283.5 107.2h1M280.4 117.8h1M279.2 114.5h1M279.3 115.8h1M280.4 116.0h1M277.2 123.5h1M272.3 136.5h1M274.0 133.7h1M222.8 271.9h1M207.3 308.9h1M202.8 320.2h1M301.7 79.5h1M302.7 79.2h1M295.8 96.1h1M296.1 98.4h1M293.9 108.2h1M288.8 104.9h1M286.8 119.1h1M288.7 116.5h1M287.4 119.0h1M286.5 117.4h1M280.3 133.8h1M246.8 229.1h1M246.4 234.1h1M229.5 278.3h1M309.4 82.6h1M303.0 96.5h1M290.9 131.0h1M292.4 130.3h1M290.5 136.6h1M283.6 153.6h1M277.9 168.6h1M314.7 93.8h1M314.2 90.7h1M308.5 108.6h1M305.9 112.8h1M301.7 127.6h1M295.6 141.9h1M286.5 169.7h1M257.8 255.8h1M258.9 254.9h1M229.7 333.6h1M324.0 92.6h1M321.6 94.4h1M322.1 97.9h1M320.1 99.9h1M320.2 105.3h1M318.3 110.6h1M314.0 117.0h1M313.7 117.5h1M314.0 117.7h1M306.0 135.6h1M300.3 149.0h1M256.0 295.0h1M245.2 308.4h1M245.7 314.2h1M246.8 325.4h1M322.2 105.5h1M320.1 122.6h1M318.7 127.7h1M314.5 136.5h1M309.6 158.4h1M307.6 166.9h1M278.0 246.9h1M254.0 324.1h1M255.1 324.3h1M255.5 327.9h1M336.1 98.9h1M329.9 110.9h1M328.5 121.2h1M331.6 119.7h1M329.6 115.3h1M326.4 125.5h1M326.8 124.6h1M326.6 123.6h1M326.4 129.9h1M319.5 164.0h1M311.1 176.0h1M269.1 307.1h1M59.9 34.2h1M38.4 60.8h1M3.8 117.8h1M33.7 62.9h1M73.5 3.2h1M21.3 74.0h1M59.7 8.0h1M66.5 21.8h1M9.0 88.7h1M29.1 66.8h1M27.8 65.1h1M12.1 108.8h1M9.9 95.0h1M23.4 67.1h1M58.9 10.3h1M58.2 21.2h1M79.3 8.9h1M2.3 100.1h1M71.1 20.4h1M22.2 69.7h1M7.2 93.5h1M11.1 84.9h1M31.6 73.6h1M74.1 17.2h1M58.1 16.5h1M14.6 85.2h1M44.8 58.6h1M72.7 12.4h1M29.1 84.4h1M25.1 81.4h1M67.6 17.3h1M21.1 67.9h1M64.8 28.3h1M33.8 73.7h1M58.4 30.0h1M0.8 98.2h1M38.4 49.5h1M10.3 90.2h1M41.9 73.5h1M76.7 27.0h1M70.6 38.1h1M22.4 110.5h1M75.4 28.2h1M85.6 13.3h1M48.7 67.2h1M36.1 85.0h1M34.8 90.3h1M45.1 74.2h1M4.2 133.9h1M30.3 94.2h1M6.5 132.0h1M23.5 107.8h1M13.1 119.4h1M63.6 42.5h1M77.3 27.3h1M16.3 122.7h1M83.1 17.4h1M85.1 13.3h1M70.0 34.2h1M55.0 60.0h1M50.7 66.3h1M45.2 70.9h1M92.0 4.2h1M20.9 115.0h1M3.4 136.4h1M43.8 78.2h1M53.6 58.3h1M6.7 133.2h1M83.7 15.6h1M62.9 46.9h1M57.9 59.7h1M39.3 84.0h1M65.8 39.2h1M18.6 116.1h1M22.8 108.4h1M85.5 14.2h1M32.1 91.0h1M61.4 45.5h1M39.9 78.2h1M20.7 113.6h1M74.6 26.9h1M73.5 29.9h1M6.5 131.7h1M59.6 53.1h1M4.0 139.1h1"/>
<path stroke="#643363" d="M105.1 13.6h1M105.2 8.3h1M93.3 27.9h1M80.4 34.5h1M88.2 35.2h1M82.3 43.6h1M81.3 41.4h1M83.6 45.2h1M63.7 59.3h1M75.0 55.3h1M66.2 62.5h1M67.0 64.3h1M57.0 77.9h1M56.4 76.7h1M53.9 79.6h1M49.5 86.2h1M57.7 86.5h1M50.8 87.7h1M53.3 84.8h1M47.1 95.5h1M49.6 91.0h1M31.1 112.3h1M41.6 115.3h1M25.7 124.7h1M24.2 128.6h1M23.9 128.3h1M22.4 129.6h1M15.8 146.7h1M13.5 151.2h1M6.7 160.8h1M4.3 163.9h1M13.7 161.1h1M2.9 175.5h1M117.3 2.8h1M102.7 25.2h1M100.6 21.8h1M102.6 22.3h1M102.7 25.2h1M104.7 25.5h1M97.9 32.2h1M97.6 35.4h1M87.5 40.0h1M89.2 47.7h1M89.3 45.6h1M88.7 47.1h1M82.6 54.5h1M77.2 56.6h1M83.8 54.4h1M80.4 56.1h1M83.5 55.7h1M81.2 53.1h1M81.2 62.8h1M82.1 60.0h1M82.0 61.6h1M79.1 70.9h1M64.3 85.6h1M62.4 92.8h1M60.3 92.2h1M59.9 93.2h1M56.4 100.0h1M45.8 118.0h1M33.7 127.3h1M34.1 138.0h1M37.0 134.1h1M35.6 134.3h1M30.9 147.8h1M21.2 155.1h1M14.1 168.5h1M8.5 175.6h1M8.5 175.2h1M0.4 186.2h1M127.8 1.4h1M125.7 11.6h1M123.0 10.1h1M122.0 8.8h1M123.0 14.9h1M118.5 11.1h1M120.1 13.7h1M117.7 17.4h1M111.5 27.5h1M110.5 33.2h1M97.3 53.0h1M93.4 51.9h1M91.6 62.2h1M86.5 66.1h1M86.0 63.1h1M86.6 66.9h1M84.7 79.9h1M86.1 74.9h1M80.0 71.8h1M81.6 77.8h1M84.1 81.0h1M68.1 96.5h1M66.2 98.5h1M46.3 132.9h1M44.1 135.6h1M16.7 172.4h1M18.2 179.6h1M16.1 173.1h1M9.2 196.1h1M5.0 196.7h1M4.6 199.8h1M140.4 1.2h1M135.4 10.6h1M135.6 12.7h1M131.4 16.7h1M125.8 17.0h1M122.7 17.4h1M128.4 17.4h1M122.1 22.5h1M122.3 22.1h1M126.4 29.8h1M121.9 30.2h1M107.9 42.7h1M108.0 45.8h1M104.5 61.3h1M97.2 72.8h1M92.9 77.0h1M94.4 78.1h1M93.6 77.5h1M85.2 88.6h1M84.3 84.2h1M88.2 84.6h1M84.5 87.4h1M78.5 109.4h1M65.1 116.4h1M60.7 130.5h1M46.3 159.2h1M40.9 154.9h1M33.4 177.2h1M32.7 179.2h1M32.1 180.2h1M24.7 195.0h1M17.8 190.5h1M22.6 199.7h1M12.5 217.9h1M152.6 0.6h1M147.2 3.2h1M144.3 2.3h1M145.1 11.0h1M141.4 15.2h1M123.3 42.1h1M120.6 44.1h1M118.5 54.4h1M102.7 71.5h1M102.6 74.6h1M105.7 75.4h1M104.1 78.8h1M100.4 82.5h1M100.0 84.3h1M91.4 99.5h1M81.9 114.9h1M83.2 113.5h1M85.5 115.7h1M77.8 121.3h1M69.8 135.8h1M59.9 149.4h1M58.2 151.9h1M46.8 179.8h1M48.4 173.9h1M45.0 174.5h1M36.3 183.0h1M42.5 178.9h1M38.7 190.6h1M35.0 194.1h1M29.7 190.2h1M28.1 193.9h1M25.7 199.5h1M33.6 200.2h1M35.2 199.1h1M21.5 205.8h1M18.7 225.5h1M11.9 231.2h1M8.5 227.5h1M155.3 10.3h1M149.0 7.5h1M150.5 12.4h1M151.6 14.5h1M138.8 33.9h1M134.8 42.8h1M127.4 54.2h1M132.4 54.4h1M125.7 59.5h1M130.2 55.5h1M125.6 62.0h1M120.2 65.2h1M116.8 62.2h1M117.4 72.7h1M113.5 76.9h1M99.9 104.1h1M88.7 117.6h1M87.1 127.2h1M82.8 136.2h1M70.4 150.7h1M60.9 160.7h1M62.0 168.3h1M57.9 179.6h1M58.8 177.3h1M54.6 176.2h1M60.3 175.5h1M51.3 186.1h1M53.7 187.7h1M55.7 183.2h1M57.0 187.8h1M42.3 204.0h1M29.4 221.8h1M30.3 224.5h1M28.3 221.8h1M29.2 225.7h1M30.8 224.3h1M165.2 6.3h1M160.8 2.5h1M160.9 10.9h1M162.1 11.4h1M162.1 13.1h1M162.5 15.6h1M160.4 14.5h1M159.9 17.3h1M154.4 22.9h1M154.2 23.1h1M148.4 29.8h1M139.7 42.2h1M131.3 56.2h1M130.7 57.5h1M134.2 52.7h1M130.0 69.4h1M129.9 71.2h1M124.2 79.3h1M124.4 77.7h1M117.8 87.4h1M116.5 91.4h1M112.3 99.7h1M112.6 97.4h1M107.5 107.5h1M80.0 155.3h1M58.4 196.5h1M57.0 199.8h1M55.7 202.6h1M45.4 217.7h1M36.6 235.9h1M37.0 235.3h1M175.7 10.2h1M170.6 15.7h1M168.5 18.6h1M164.8 22.3h1M166.9 20.6h1M167.4 22.4h1M161.8 27.0h1M161.9 26.5h1M158.5 33.3h1M157.1 37.2h1M139.2 67.0h1M88.4 159.9h1M79.2 178.4h1M81.5 174.9h1M81.8 175.7h1M79.1 179.5h1M69.0 194.5h1M67.5 193.5h1M68.3 189.9h1M58.9 218.9h1M61.6 215.7h1M60.6 208.3h1M57.3 223.1h1M51.3 230.3h1M44.1 244.4h1M45.5 238.3h1M180.2 9.5h1M175.7 19.9h1M174.9 19.1h1M167.7 31.0h1M173.3 30.1h1M167.4 36.7h1M164.3 34.2h1M166.0 34.1h1M166.8 36.4h1M167.8 37.6h1M169.2 37.4h1M167.2 34.4h1M159.3 47.8h1M154.3 58.1h1M150.8 64.8h1M149.2 71.0h1M147.9 75.9h1M125.4 117.9h1M100.9 164.8h1M78.7 198.3h1M79.7 196.2h1M81.8 194.7h1M72.4 210.3h1M71.1 207.4h1M73.4 210.7h1M67.9 221.9h1M67.8 222.0h1M51.7 243.5h1M184.9 17.4h1M183.8 20.1h1M180.5 21.0h1M185.7 22.8h1M182.1 26.8h1M185.5 22.6h1M179.5 25.2h1M179.1 28.9h1M181.0 36.9h1M175.7 40.0h1M172.9 43.7h1M173.8 41.9h1M175.3 41.6h1M176.8 39.6h1M167.6 55.6h1M171.5 58.0h1M166.3 58.1h1M167.3 54.2h1M164.0 59.1h1M155.7 63.4h1M153.1 67.6h1M157.8 70.2h1M152.2 81.8h1M151.9 83.0h1M149.5 76.5h1M151.5 81.2h1M85.3 212.8h1M79.7 224.7h1M70.2 247.5h1M62.8 241.5h1M69.6 237.8h1M60.7 252.2h1M61.5 249.5h1M192.8 23.4h1M189.4 25.5h1M186.4 30.6h1M184.7 41.0h1M178.3 40.2h1M183.9 44.1h1M182.2 41.4h1M175.9 53.5h1M175.0 53.0h1M178.3 52.3h1M179.6 52.9h1M176.5 60.4h1M163.3 84.1h1M166.9 77.3h1M160.8 88.7h1M155.7 98.0h1M113.0 165.9h1M103.8 197.7h1M102.0 200.5h1M97.0 219.8h1M87.5 228.8h1M82.0 234.7h1M75.3 253.9h1M203.5 26.4h1M203.9 25.6h1M200.9 28.1h1M201.6 21.9h1M200.3 32.9h1M196.6 27.0h1M196.4 45.8h1M193.9 44.0h1M186.1 50.5h1M187.5 50.3h1M189.6 49.9h1M185.6 60.7h1M188.2 58.9h1M181.6 65.7h1M176.9 73.3h1M180.8 66.2h1M182.5 73.8h1M179.5 67.3h1M178.7 73.0h1M169.3 91.3h1M143.0 144.8h1M133.0 160.4h1M133.0 169.9h1M133.0 166.1h1M130.7 171.0h1M117.4 193.4h1M119.1 191.6h1M110.8 206.5h1M105.2 207.0h1M110.1 203.7h1M106.8 210.7h1M80.6 249.6h1M206.3 43.2h1M197.4 53.5h1M192.2 52.7h1M196.3 53.6h1M191.5 65.8h1M189.4 65.0h1M186.4 73.2h1M185.4 78.3h1M180.7 77.6h1M188.7 82.7h1M183.4 80.9h1M131.3 180.3h1M125.4 200.1h1M128.6 206.9h1M122.0 210.7h1M116.2 218.4h1M113.1 224.3h1M108.1 235.5h1M215.1 32.0h1M212.5 38.2h1M210.7 43.4h1M211.3 43.7h1M211.9 49.2h1M199.0 69.9h1M140.3 193.0h1M110.6 253.0h1M224.5 36.3h1M218.7 47.8h1M213.6 51.2h1M210.8 60.7h1M211.7 60.5h1M206.9 67.7h1M207.0 69.7h1M207.2 79.4h1M206.1 75.8h1M153.7 181.6h1M140.0 214.8h1M115.1 254.3h1M120.4 259.2h1M120.4 256.0h1M121.4 255.7h1M124.6 263.4h1M122.7 254.2h1M115.6 266.4h1M114.6 262.9h1M230.1 43.2h1M229.5 48.5h1M230.0 47.7h1M226.6 53.0h1M220.9 62.8h1M224.7 63.4h1M216.3 65.2h1M213.9 69.0h1M223.2 67.6h1M218.2 80.3h1M157.3 203.6h1M148.2 210.6h1M150.4 211.6h1M145.4 223.6h1M145.2 227.3h1M140.2 232.3h1M130.3 259.8h1M121.2 277.9h1M236.4 43.9h1M231.1 44.5h1M233.0 50.9h1M236.3 51.9h1M233.7 51.7h1M239.4 48.9h1M235.4 50.4h1M238.4 50.5h1M225.5 71.9h1M167.3 199.1h1M162.9 207.2h1M148.6 246.7h1M147.5 245.2h1M140.5 265.6h1M140.6 261.8h1M138.4 264.3h1M139.5 266.9h1M137.2 262.8h1M139.9 264.5h1M133.2 281.4h1M131.5 286.6h1M239.0 53.2h1M240.2 61.3h1M238.3 72.3h1M238.0 67.4h1M237.2 68.4h1M234.6 75.9h1M173.9 208.5h1M166.2 229.9h1M161.6 241.5h1M145.4 267.5h1M146.5 266.8h1M146.2 270.0h1M252.3 53.3h1M252.1 63.1h1M247.5 56.3h1M244.9 72.5h1M242.1 79.1h1M244.7 75.2h1M241.1 85.4h1M212.0 155.2h1M189.9 210.5h1M176.0 225.7h1M174.6 234.7h1M162.2 259.2h1M160.0 262.9h1M163.1 262.0h1M156.5 274.0h1M160.6 270.4h1M260.4 56.1h1M258.5 56.0h1M258.5 60.3h1M238.6 89.5h1M245.7 95.3h1M240.1 102.5h1M228.6 128.2h1M230.5 120.7h1M204.3 188.0h1M196.3 208.0h1M194.6 210.9h1M190.6 216.6h1M188.8 231.9h1M182.0 236.7h1M180.5 237.7h1M181.5 238.4h1M169.9 269.3h1M169.8 268.2h1M166.6 278.5h1M167.1 275.0h1M154.6 299.0h1M157.5 298.1h1M261.9 70.8h1M252.4 100.4h1M251.3 106.9h1M242.3 120.1h1M193.8 235.9h1M196.0 234.9h1M195.9 233.5h1M195.0 231.6h1M193.0 236.8h1M194.2 237.4h1M187.1 252.2h1M177.7 274.5h1M174.3 283.1h1M175.5 277.1h1M165.8 306.3h1M167.7 307.1h1M261.7 90.5h1M257.0 103.8h1M250.0 119.4h1M250.8 113.5h1M248.3 125.4h1M218.2 196.9h1M210.9 221.6h1M208.9 219.2h1M204.8 237.5h1M199.7 247.6h1M197.7 257.8h1M188.9 276.0h1M189.3 279.9h1M190.1 276.4h1M189.9 274.2h1M191.1 275.4h1M178.7 298.4h1M174.7 308.9h1M175.9 305.3h1M175.7 308.4h1M275.9 85.8h1M272.0 90.6h1M268.5 103.7h1M267.9 103.6h1M265.5 115.3h1M253.9 128.4h1M257.6 128.0h1M236.9 188.0h1M229.9 199.8h1M229.4 199.9h1M217.4 226.2h1M211.0 251.9h1M207.1 264.1h1M204.7 262.6h1M196.4 278.8h1M198.2 287.9h1M194.7 291.4h1M187.6 298.3h1M186.7 309.9h1M288.1 72.9h1M279.6 89.2h1M274.3 111.0h1M273.0 110.4h1M271.5 117.4h1M267.7 122.0h1M264.7 133.8h1M234.9 213.5h1M230.7 221.3h1M226.5 229.7h1M226.3 228.2h1M226.3 239.2h1M207.0 284.0h1M198.7 307.9h1M198.8 302.8h1M199.0 307.4h1M194.3 311.5h1M290.3 90.1h1M286.7 101.0h1M282.9 109.1h1M281.5 113.6h1M280.5 115.6h1M281.4 117.1h1M280.0 114.9h1M230.8 242.6h1M224.8 262.8h1M225.0 266.9h1M213.0 299.3h1M212.2 301.1h1M207.3 310.6h1M211.6 314.3h1M203.7 318.8h1M300.0 86.5h1M296.0 93.3h1M295.8 100.2h1M299.0 101.3h1M291.5 112.1h1M291.1 114.4h1M285.2 122.0h1M286.1 121.2h1M286.4 127.7h1M280.3 133.6h1M282.1 133.1h1M271.5 155.5h1M238.0 266.8h1M224.2 302.9h1M216.0 313.0h1M215.2 313.5h1M310.0 81.9h1M304.1 98.0h1M301.6 101.7h1M303.7 102.6h1M297.8 118.8h1M297.5 118.5h1M296.6 125.4h1M292.0 131.0h1M294.1 132.6h1M294.3 128.5h1M287.5 144.0h1M227.0 321.4h1M312.0 91.3h1M310.0 99.5h1M308.7 116.1h1M306.2 113.1h1M309.5 115.1h1M305.4 117.4h1M305.8 118.1h1M296.9 134.0h1M297.6 145.3h1M291.5 141.6h1M296.0 141.3h1M292.6 155.1h1M254.3 264.8h1M255.1 264.3h1M248.2 285.3h1M242.3 303.3h1M232.1 331.4h1M322.3 91.4h1M316.0 111.4h1M312.3 120.4h1M313.9 114.3h1M310.0 125.5h1M312.7 122.6h1M310.6 135.5h1M303.0 147.7h1M249.8 304.9h1M246.8 314.0h1M242.5 319.6h1M245.4 316.4h1M241.4 329.8h1M244.4 324.9h1M240.8 332.7h1M325.8 109.0h1M319.4 125.2h1M309.4 157.4h1M307.6 158.9h1M296.2 212.1h1M258.3 311.8h1M256.8 316.3h1M332.8 107.7h1M331.9 112.8h1M329.3 112.3h1M328.9 119.4h1M325.2 122.3h1M327.1 135.6h1M320.6 147.6h1M318.8 146.5h1M280.6 258.9h1M270.1 312.9h1M270.2 320.0h1M268.6 315.2h1M256.9 332.4h1M60.7 30.5h1M29.5 69.6h1M33.2 60.9h1M31.0 50.6h1M12.1 98.4h1M11.7 85.3h1M19.6 82.5h1M12.7 100.4h1M21.6 89.4h1M54.6 36.5h1M1.3 112.8h1M33.7 60.4h1M31.1 67.8h1M16.4 87.5h1M21.5 67.7h1M50.7 23.2h1M71.5 21.3h1M27.1 84.9h1M35.9 65.9h1M51.9 47.7h1M22.7 64.4h1M60.4 14.1h1M37.5 62.2h1M15.9 93.0h1M62.3 14.4h1M36.6 50.2h1M21.8 87.0h1M29.9 60.2h1M40.3 43.1h1M33.4 47.1h1M48.6 50.8h1M63.3 33.9h1M55.8 40.1h1M54.0 17.0h1M45.2 33.5h1M19.0 90.8h1M37.9 84.7h1M66.1 45.7h1M0.5 141.0h1M27.4 98.3h1M84.0 15.4h1M72.4 33.3h1M84.6 6.1h1M79.6 19.2h1M22.3 106.5h1M55.3 59.2h1M85.2 10.3h1M80.5 17.8h1M37.1 85.5h1M76.5 27.1h1M60.8 51.0h1M8.0 129.7h1M68.5 40.6h1M47.8 71.9h1M2.2 145.4h1M57.0 55.6h1M19.2 111.7h1M53.9 62.1h1M46.6 74.2h1M75.9 26.0h1M71.1 33.9h1M21.5 112.0h1M89.2 5.4h1M25.1 105.7h1M9.7 126.2h1M56.1 60.3h1M71.9 37.2h1M63.4 47.1h1M57.2 54.0h1M63.1 46.7h1M40.3 85.2h1M39.9 82.6h1M29.1 96.1h1M56.3 56.8h1M47.2 70.5h1M34.3 90.8h1M76.3 25.7h1M90.5 8.9h1M0.7 146.2h1M57.5 59.4h1M37.8 85.7h1M33.6 88.5h1M74.9 30.0h1M25.0 103.3h1M59.5 54.7h1M27.3 103.0h1M38.8 85.9h1M76.3 29.3h1M61.5 50.5h1M88.7 5.2h1M30.9 97.4h1M53.4 65.2h1M19.0 112.4h1M62.0 47.5h1M26.2 103.2h1"/>
<path stroke="#5c2f5e" d="M100.9 11.5h1M97.4 28.3h1M88.3 36.4h1M79.9 45.5h1M78.5 46.5h1M81.6 44.4h1M74.9 50.2h1M69.1 61.9h1M61.4 77.6h1M54.5 79.5h1M50.1 92.0h1M38.7 107.2h1M36.9 119.4h1M20.9 135.9h1M6.8 162.0h1M6.2 165.2h1M5.5 164.3h1M5.7 158.1h1M112.5 3.9h1M109.6 12.0h1M102.3 12.5h1M95.7 35.4h1M101.9 33.2h1M84.1 54.9h1M85.2 56.6h1M84.1 52.8h1M69.6 83.4h1M60.9 83.0h1M65.6 84.6h1M31.3 133.9h1M37.6 133.2h1M116.6 12.0h1M113.8 21.7h1M100.8 43.5h1M98.4 51.0h1M93.5 58.8h1M85.8 68.2h1M81.6 80.8h1M60.8 98.1h1M60.6 114.1h1M64.8 116.9h1M48.4 139.4h1M24.9 169.2h1M132.4 11.9h1M132.1 10.6h1M127.4 17.6h1M122.0 25.7h1M120.0 31.5h1M80.3 97.0h1M78.7 100.1h1M58.1 130.1h1M48.4 139.9h1M51.3 149.9h1M23.3 195.1h1M6.1 215.8h1M144.3 3.0h1M141.8 17.2h1M126.1 33.5h1M128.7 44.0h1M120.7 48.0h1M121.3 50.0h1M112.2 62.1h1M111.0 62.8h1M113.3 59.0h1M106.2 73.6h1M105.5 81.4h1M83.8 108.1h1M77.6 123.8h1M67.5 137.4h1M47.0 175.6h1M36.9 192.0h1M38.5 191.9h1M35.9 194.4h1M37.8 187.8h1M37.3 191.9h1M38.6 203.3h1M35.6 191.4h1M25.8 208.8h1M23.6 220.9h1M155.2 7.3h1M154.7 4.9h1M141.2 28.2h1M139.7 32.0h1M129.1 52.9h1M125.0 49.4h1M123.4 57.8h1M120.5 67.0h1M89.6 118.6h1M66.4 159.4h1M52.6 179.4h1M58.7 176.8h1M31.1 215.9h1M25.5 221.5h1M158.8 5.2h1M163.3 6.8h1M162.0 6.9h1M160.0 15.4h1M152.3 23.9h1M148.7 34.5h1M147.0 32.3h1M146.6 35.7h1M124.0 78.8h1M121.4 86.0h1M111.5 115.4h1M77.4 163.2h1M61.6 191.6h1M60.9 187.6h1M63.4 191.1h1M55.0 197.4h1M55.9 194.4h1M36.0 236.4h1M174.0 6.6h1M170.4 16.6h1M169.3 14.2h1M170.7 15.0h1M161.0 23.1h1M161.7 27.1h1M160.4 31.8h1M158.3 33.2h1M150.2 42.6h1M154.0 47.7h1M137.0 70.1h1M135.0 69.0h1M124.3 85.1h1M126.4 95.0h1M81.7 176.0h1M81.0 178.8h1M71.0 192.8h1M68.8 199.8h1M58.4 214.0h1M67.3 215.8h1M55.4 222.0h1M51.8 231.5h1M46.2 244.4h1M180.1 21.6h1M177.0 20.2h1M168.3 41.4h1M154.6 54.1h1M158.9 51.3h1M126.4 107.8h1M81.7 199.1h1M79.1 200.0h1M81.1 195.6h1M75.9 194.5h1M59.3 226.7h1M58.4 237.3h1M55.1 246.6h1M59.8 249.0h1M187.5 18.7h1M183.3 24.3h1M177.7 38.3h1M174.4 35.8h1M174.2 42.2h1M174.4 44.5h1M169.9 52.2h1M167.2 59.0h1M169.7 54.8h1M160.9 58.1h1M149.8 75.2h1M151.1 80.0h1M103.2 179.1h1M73.5 229.5h1M68.3 242.0h1M196.0 20.9h1M188.3 24.6h1M104.0 200.6h1M98.2 192.7h1M98.6 209.4h1M93.7 207.0h1M96.4 217.8h1M85.8 221.6h1M89.8 228.7h1M84.7 235.1h1M197.7 46.6h1M192.9 44.8h1M179.3 69.4h1M176.9 76.6h1M172.7 80.2h1M125.3 175.8h1M120.2 183.9h1M115.6 197.0h1M117.5 193.8h1M89.8 245.2h1M85.5 251.8h1M200.6 39.2h1M195.7 50.6h1M189.3 58.7h1M186.8 66.4h1M178.0 88.6h1M152.2 142.1h1M127.0 199.1h1M105.7 236.4h1M210.8 44.4h1M214.7 43.5h1M199.6 74.9h1M143.2 187.2h1M137.3 197.8h1M139.3 189.3h1M134.3 202.3h1M129.1 214.2h1M126.6 221.1h1M120.7 231.6h1M118.0 236.8h1M224.0 36.9h1M222.4 40.8h1M214.6 56.6h1M206.0 70.7h1M157.7 176.9h1M155.9 180.0h1M150.8 207.7h1M139.6 223.2h1M126.6 246.3h1M119.4 257.4h1M218.4 63.3h1M170.4 170.1h1M153.8 212.8h1M231.8 54.2h1M231.7 47.0h1M171.8 192.2h1M148.4 246.7h1M141.0 264.6h1M131.8 285.5h1M243.3 54.8h1M243.9 51.8h1M242.7 54.9h1M240.6 51.5h1M242.8 52.7h1M236.7 69.9h1M174.8 210.0h1M152.3 262.9h1M148.0 266.5h1M246.1 77.0h1M227.8 112.2h1M178.1 224.6h1M169.0 250.0h1M237.3 108.5h1M234.9 113.4h1M235.5 117.6h1M189.7 221.7h1M185.0 229.2h1M176.0 251.7h1M175.7 252.5h1M175.0 257.4h1M174.0 258.5h1M170.1 267.8h1M161.8 292.0h1M231.6 151.7h1M189.5 234.3h1M174.1 282.4h1M171.1 286.7h1M170.3 296.2h1M268.2 83.4h1M269.7 74.7h1M246.6 132.1h1M211.6 220.3h1M198.5 249.3h1M186.7 280.2h1M186.5 276.6h1M188.1 293.9h1M177.6 300.4h1M173.7 309.4h1M275.6 72.2h1M267.5 101.3h1M266.9 102.5h1M266.2 106.6h1M256.9 119.8h1M209.6 254.3h1M209.7 253.8h1M205.4 262.2h1M196.5 292.1h1M285.3 76.6h1M276.7 123.4h1M259.6 167.8h1M210.4 299.4h1M209.4 308.5h1M301.9 82.7h1M291.5 95.3h1M282.8 127.7h1M284.9 131.0h1M284.6 127.6h1M278.3 137.0h1M245.2 235.6h1M240.6 242.0h1M240.6 247.3h1M235.4 266.1h1M221.5 304.1h1M310.4 85.3h1M302.7 96.2h1M294.1 128.8h1M289.7 135.9h1M230.0 305.3h1M226.5 319.5h1M227.7 319.5h1M304.3 118.1h1M290.8 182.4h1M268.8 252.1h1M248.3 306.0h1M314.7 139.4h1M311.2 149.7h1M305.6 162.9h1M277.5 252.5h1M332.1 116.9h1M332.3 116.7h1M328.5 122.2h1M325.5 134.2h1M319.8 147.1h1M316.5 159.4h1M267.7 317.5h1M263.8 323.7h1M65.9 41.8h1M83.0 12.5h1M7.3 131.1h1M65.0 39.4h1M2.2 140.1h1M77.1 24.8h1M31.5 97.3h1M30.1 96.7h1M64.7 42.7h1M15.8 120.4h1M62.8 50.4h1M34.7 91.0h1M86.6 8.1h1M18.2 113.8h1M30.6 96.1h1M55.8 53.4h1M87.5 8.2h1M62.2 46.6h1M4.9 140.7h1M20.4 110.6h1M77.1 23.4h1M78.1 22.7h1M49.1 68.1h1M60.4 48.1h1M45.2 70.7h1M58.8 55.4h1M7.3 131.7h1M35.7 86.2h1"/>
<path stroke="#4f4380" d="M105.0 11.7h1M81.4 44.3h1M55.3 89.5h1M50.6 91.1h1M45.2 96.2h1M82.3 54.9h1M62.6 92.9h1M110.3 28.4h1M94.0 55.5h1M92.3 60.7h1M80.7 80.0h1M67.4 99.2h1M60.9 111.2h1M40.3 147.0h1M132.2 16.7h1M121.1 33.1h1M119.9 29.2h1M114.2 52.3h1M97.0 74.9h1M31.1 175.5h1M29.8 184.4h1M143.8 12.4h1M102.5 72.0h1M105.5 78.0h1M102.9 76.2h1M91.0 98.8h1M30.1 224.6h1M164.9 5.0h1M67.0 177.9h1M43.9 218.3h1M42.1 229.6h1M141.3 67.0h1M82.1 176.0h1M79.9 176.1h1M162.3 44.8h1M48.9 246.8h1M172.6 41.4h1M98.9 206.6h1M204.1 23.5h1M203.1 25.4h1M198.2 31.1h1M197.6 29.5h1M193.9 42.6h1M200.1 34.1h1M205.9 45.1h1M198.9 51.0h1M135.1 176.6h1M124.7 187.5h1M122.8 203.7h1M135.3 204.7h1M106.3 257.8h1M116.7 251.9h1M219.2 50.1h1M229.8 41.9h1M174.8 172.4h1M231.8 52.2h1M233.2 56.2h1M155.1 230.1h1M241.6 51.6h1M162.2 237.0h1M243.4 79.8h1M233.2 99.3h1M164.1 255.1h1M258.6 53.7h1M192.8 250.5h1M180.0 271.0h1M252.9 119.6h1M252.9 120.9h1M244.6 138.7h1M280.2 92.2h1M275.8 105.3h1M263.9 136.1h1M223.7 235.0h1M219.4 251.6h1M279.7 115.1h1M292.7 105.5h1M284.1 127.6h1M278.2 137.8h1M288.9 135.2h1M305.1 129.5h1M300.1 148.1h1M325.9 108.2h1"/>
<path stroke="#6b6493" d="M101.1 11.8h1M97.9 17.1h1M97.0 28.5h1M88.5 30.6h1M90.2 30.4h1M82.8 39.0h1M80.8 40.5h1M78.4 43.5h1M74.6 50.4h1M73.8 51.6h1M66.6 64.0h1M64.7 67.4h1M61.2 72.0h1M27.8 117.3h1M4.2 166.6h1M102.2 25.5h1M104.5 21.4h1M107.2 17.9h1M90.6 40.4h1M81.8 55.3h1M77.2 66.7h1M67.9 80.8h1M52.3 109.4h1M48.3 114.6h1M36.7 136.6h1M33.3 135.3h1M24.0 157.4h1M8.4 176.7h1M8.1 177.2h1M124.9 6.8h1M129.1 4.8h1M118.8 16.5h1M117.0 18.2h1M114.3 19.6h1M111.8 27.0h1M107.9 35.2h1M99.1 59.1h1M91.6 61.8h1M93.8 65.7h1M91.5 60.8h1M87.3 68.0h1M82.8 75.4h1M61.0 111.9h1M46.0 124.3h1M44.8 135.9h1M37.1 148.4h1M38.4 146.6h1M140.3 6.8h1M134.6 16.8h1M120.2 29.6h1M124.6 28.8h1M113.5 40.7h1M111.4 45.2h1M112.2 54.6h1M92.3 78.6h1M80.6 84.0h1M86.8 84.2h1M87.3 90.1h1M69.2 106.5h1M76.5 111.2h1M66.6 123.8h1M59.8 130.0h1M56.3 134.6h1M57.5 132.6h1M52.1 145.5h1M22.7 187.7h1M18.8 192.4h1M17.4 192.7h1M13.4 207.7h1M144.1 1.5h1M124.8 39.7h1M127.8 40.4h1M117.1 45.7h1M114.1 53.0h1M114.4 63.6h1M104.9 71.3h1M104.0 76.4h1M96.9 89.4h1M87.6 108.3h1M43.9 180.8h1M37.5 190.7h1M34.3 196.4h1M37.4 190.1h1M33.1 184.8h1M36.3 190.9h1M38.7 192.6h1M12.9 229.6h1M153.0 7.0h1M147.9 20.1h1M143.4 25.7h1M141.4 33.4h1M139.9 31.9h1M135.7 45.8h1M125.3 55.8h1M115.7 67.4h1M119.8 66.9h1M103.5 87.2h1M98.7 103.7h1M82.6 133.4h1M62.7 168.4h1M60.4 176.6h1M57.5 178.5h1M54.3 186.2h1M45.9 195.3h1M28.0 230.8h1M33.1 225.4h1M33.9 222.2h1M32.9 226.0h1M29.9 226.1h1M30.1 226.8h1M25.9 234.3h1M23.9 233.5h1M163.6 7.3h1M166.7 8.7h1M162.7 11.8h1M158.3 18.8h1M156.2 14.7h1M149.1 28.9h1M146.7 31.2h1M123.7 75.7h1M125.2 79.9h1M119.5 84.7h1M117.4 82.8h1M112.6 98.3h1M63.8 183.5h1M52.5 215.3h1M51.8 211.6h1M169.9 6.9h1M172.3 7.2h1M171.2 18.8h1M160.8 29.8h1M160.7 30.8h1M154.5 39.4h1M151.2 46.4h1M147.3 48.7h1M143.5 70.0h1M124.7 94.5h1M118.8 105.3h1M63.8 211.8h1M58.3 212.0h1M51.7 230.6h1M49.3 233.5h1M180.6 13.4h1M179.5 16.8h1M177.5 21.6h1M171.1 32.4h1M167.4 38.8h1M154.7 56.5h1M154.6 59.0h1M151.9 67.1h1M148.9 62.6h1M140.9 80.8h1M79.8 197.1h1M72.4 208.3h1M68.4 211.7h1M185.6 20.7h1M184.4 23.9h1M181.4 30.9h1M182.3 29.8h1M175.2 35.5h1M176.0 42.0h1M169.1 53.1h1M168.1 55.6h1M148.6 84.9h1M102.2 181.2h1M103.4 178.3h1M86.5 201.0h1M79.7 222.4h1M78.0 233.1h1M188.6 31.0h1M190.1 32.4h1M185.4 31.9h1M177.8 54.6h1M174.9 54.0h1M171.1 57.7h1M116.6 167.0h1M98.6 200.1h1M101.6 199.4h1M103.1 200.1h1M96.9 208.4h1M85.9 221.1h1M89.8 227.8h1M199.2 30.9h1M198.6 30.5h1M180.2 68.1h1M174.8 66.5h1M178.7 70.0h1M176.1 83.2h1M111.7 206.0h1M114.9 207.9h1M109.8 204.2h1M99.5 229.5h1M82.0 261.5h1M82.9 262.1h1M200.7 37.5h1M203.4 43.5h1M204.4 40.8h1M195.7 55.5h1M198.2 58.0h1M191.3 64.0h1M192.4 68.4h1M187.3 63.4h1M185.8 75.0h1M141.6 164.8h1M126.1 195.7h1M111.4 227.3h1M93.3 264.3h1M209.1 51.1h1M205.6 53.7h1M206.3 52.9h1M206.5 56.7h1M204.0 57.0h1M151.4 165.5h1M144.1 191.8h1M141.0 195.2h1M145.1 191.1h1M111.5 255.3h1M219.9 47.2h1M207.2 81.9h1M206.4 77.4h1M142.3 209.7h1M113.5 274.0h1M230.5 36.6h1M218.7 60.2h1M219.6 66.4h1M213.8 72.3h1M217.5 74.4h1M214.0 78.9h1M162.2 187.4h1M163.0 186.2h1M150.4 212.2h1M117.8 280.8h1M233.1 50.8h1M235.0 49.0h1M235.1 49.1h1M229.9 64.3h1M221.6 78.7h1M163.1 222.4h1M158.4 222.1h1M156.0 229.2h1M137.4 267.3h1M139.6 268.3h1M243.5 56.1h1M231.0 82.0h1M230.7 82.0h1M216.3 111.8h1M213.9 115.6h1M187.7 178.7h1M185.2 186.4h1M179.5 194.4h1M176.6 212.8h1M160.8 240.7h1M149.1 276.2h1M147.4 268.3h1M147.9 267.8h1M138.0 288.0h1M138.9 288.4h1M253.6 53.5h1M247.0 63.9h1M239.1 85.3h1M187.8 200.0h1M178.1 226.5h1M160.1 272.0h1M157.0 275.4h1M147.8 292.8h1M141.1 294.2h1M258.9 56.2h1M255.4 59.1h1M240.8 102.7h1M239.0 100.8h1M240.1 102.7h1M240.8 102.9h1M192.5 213.6h1M171.7 260.2h1M163.5 285.7h1M162.2 288.7h1M156.6 302.3h1M265.2 64.6h1M256.7 83.0h1M256.6 84.7h1M208.1 203.6h1M204.0 213.3h1M195.6 235.5h1M193.3 233.9h1M192.5 244.3h1M180.0 271.3h1M174.6 281.4h1M175.0 281.3h1M166.7 305.4h1M271.0 67.1h1M266.4 81.7h1M264.2 87.9h1M207.6 226.7h1M199.8 247.0h1M188.2 278.2h1M184.7 288.3h1M275.9 67.1h1M281.0 67.7h1M270.4 107.9h1M254.4 137.5h1M254.0 144.6h1M218.8 227.9h1M217.5 228.4h1M212.8 240.1h1M209.1 254.7h1M208.3 254.4h1M203.9 262.9h1M191.2 302.8h1M291.0 70.4h1M267.8 125.7h1M235.6 204.3h1M235.0 214.2h1M226.6 229.9h1M223.1 238.0h1M222.8 236.7h1M224.2 262.4h1M211.3 266.8h1M205.9 285.8h1M209.7 287.1h1M198.0 308.8h1M197.4 309.6h1M196.2 305.8h1M193.5 315.7h1M290.7 91.1h1M286.9 100.4h1M279.1 115.5h1M280.5 116.4h1M281.6 116.9h1M271.4 137.2h1M230.1 243.4h1M218.6 284.5h1M208.8 310.4h1M207.8 309.4h1M302.0 79.0h1M293.7 92.3h1M290.3 110.1h1M294.4 115.1h1M286.7 124.1h1M284.4 127.8h1M278.6 141.2h1M279.1 138.6h1M252.2 225.8h1M244.1 238.2h1M239.5 252.3h1M234.0 265.8h1M227.3 285.2h1M213.1 326.3h1M297.2 118.1h1M293.9 125.5h1M292.3 131.1h1M290.8 131.7h1M289.8 136.1h1M282.7 162.3h1M233.5 299.5h1M228.7 306.4h1M226.8 318.1h1M228.3 318.1h1M221.6 329.8h1M313.7 88.1h1M307.9 112.2h1M303.9 119.4h1M303.9 130.6h1M297.0 133.4h1M295.0 140.7h1M263.2 247.7h1M232.5 317.1h1M310.8 123.4h1M301.8 157.1h1M284.4 210.6h1M283.7 207.9h1M280.4 224.7h1M257.2 286.9h1M249.3 306.8h1M245.9 315.0h1M248.1 318.8h1M239.3 335.2h1M324.6 115.5h1M319.9 122.8h1M322.5 123.2h1M257.0 313.9h1M257.0 321.6h1M339.7 98.1h1M331.9 112.8h1M325.1 120.4h1M317.9 146.2h1M318.2 152.6h1M315.2 153.2h1M276.7 275.4h1M273.1 290.5h1M270.3 314.3h1M266.7 305.2h1M266.0 313.1h1M268.0 319.5h1M266.8 318.9h1M264.2 323.3h1M260.6 333.2h1M47.4 50.0h1M37.5 57.6h1M25.1 75.5h1M62.8 25.2h1M42.5 60.6h1M1.1 99.8h1M55.2 15.5h1M53.3 33.5h1M35.8 67.0h1M49.9 28.5h1M6.6 85.1h1M51.0 29.4h1M70.0 15.3h1M15.9 84.4h1M37.5 52.6h1M23.2 67.8h1M29.9 52.5h1M36.3 52.8h1M30.5 60.5h1M58.0 10.4h1M23.3 69.5h1M2.3 125.8h1M43.0 41.5h1M56.3 13.1h1M61.8 25.0h1M62.3 29.5h1M61.3 33.0h1M13.4 77.8h1M60.7 37.0h1M78.1 5.4h1M58.0 38.0h1M23.8 62.0h1M3.8 101.6h1M24.3 73.7h1M76.4 6.1h1M55.4 40.9h1M44.2 30.7h1M49.8 28.6h1M65.8 16.0h1M21.2 85.1h1M42.0 35.6h1M72.4 7.2h1M37.1 62.0h1M83.8 8.3h1M53.9 53.7h1M48.7 62.1h1M15.2 114.9h1M83.6 6.1h1M26.8 86.8h1M40.6 71.9h1M8.7 117.7h1M73.8 19.9h1M52.7 55.5h1M71.0 24.9h1M45.3 63.6h1M14.3 113.2h1M10.5 118.2h1M57.5 49.7h1M61.3 43.2h1M75.1 22.9h1M67.4 35.6h1M39.6 74.7h1M46.6 66.7h1M57.9 45.0h1M86.0 1.5h1M25.6 93.2h1M70.4 29.3h1M23.0 102.4h1M65.8 36.4h1M10.5 122.6h1M3.0 133.4h1M48.8 58.3h1M33.1 85.8h1M51.0 58.7h1M20.9 103.4h1M73.7 26.6h1M30.4 86.7h1M49.2 62.5h1M24.3 97.5h1M38.5 76.0h1M56.9 49.3h1M21.3 98.2h1M86.7 5.6h1M5.0 127.1h1M53.1 51.5h1M3.0 133.1h1M2.8 133.9h1M22.5 98.6h1M5.1 127.7h1M59.2 46.3h1M83.6 12.6h1M82.4 10.4h1M62.2 43.9h1M5.5 124.1h1M81.2 15.1h1M21.0 100.9h1M78.8 12.3h1"/>
<path stroke="#a89cb9" d="M97.6 17.6h1M95.9 16.9h1M93.3 26.3h1M88.6 32.9h1M84.5 37.6h1M80.9 43.9h1M53.8 78.8h1M51.4 89.6h1M20.5 131.4h1M18.4 143.8h1M11.8 151.5h1M3.7 164.9h1M11.3 164.3h1M6.0 176.0h1M115.7 7.4h1M109.4 14.1h1M102.0 25.1h1M98.3 29.7h1M99.9 29.4h1M98.0 26.6h1M98.4 39.1h1M82.0 56.0h1M84.9 53.7h1M83.2 67.0h1M70.4 77.9h1M64.8 84.4h1M62.1 93.8h1M55.0 99.3h1M56.7 101.2h1M50.4 104.9h1M31.5 146.7h1M23.1 151.3h1M20.2 158.4h1M121.2 14.0h1M119.5 14.9h1M116.1 18.0h1M115.3 31.2h1M93.0 59.8h1M86.0 68.1h1M73.8 87.8h1M68.9 99.0h1M57.6 113.2h1M59.7 115.3h1M37.5 147.8h1M18.2 171.7h1M12.3 191.7h1M12.9 191.1h1M136.9 5.6h1M131.4 11.5h1M132.1 13.1h1M131.3 11.7h1M122.1 30.3h1M117.2 36.8h1M117.9 37.4h1M111.3 43.2h1M107.3 45.3h1M92.9 78.8h1M77.2 111.4h1M51.7 149.4h1M29.5 176.3h1M20.4 189.2h1M16.2 201.9h1M136.9 26.6h1M135.4 25.8h1M120.8 52.1h1M119.6 47.3h1M115.7 54.6h1M106.7 62.1h1M108.8 70.1h1M107.0 69.7h1M104.2 77.1h1M104.9 74.8h1M105.0 74.8h1M102.2 77.9h1M104.7 73.7h1M95.1 90.5h1M92.9 98.8h1M91.1 98.3h1M48.4 172.0h1M41.4 182.7h1M42.1 187.5h1M35.9 191.8h1M28.0 206.9h1M22.7 216.5h1M13.1 230.9h1M155.9 5.7h1M151.8 5.2h1M135.8 38.0h1M133.8 43.4h1M128.5 54.5h1M127.2 59.7h1M121.5 65.8h1M120.9 66.6h1M122.1 67.2h1M112.8 80.9h1M108.1 90.3h1M93.8 112.4h1M25.3 228.2h1M29.3 219.8h1M164.2 7.5h1M159.9 5.5h1M164.3 5.5h1M159.4 18.1h1M153.9 22.6h1M149.7 20.7h1M150.5 28.8h1M142.6 50.4h1M130.5 64.0h1M129.9 68.8h1M124.2 76.5h1M121.7 75.2h1M120.8 77.7h1M119.4 81.0h1M104.8 113.9h1M91.4 138.7h1M66.2 179.9h1M62.3 183.9h1M43.7 218.0h1M43.6 219.3h1M172.4 9.5h1M168.6 15.1h1M173.1 17.5h1M166.9 26.5h1M158.8 21.6h1M162.6 26.0h1M155.0 39.2h1M160.6 38.4h1M154.6 39.5h1M156.5 40.3h1M154.2 40.1h1M124.5 95.7h1M127.3 95.9h1M88.1 158.4h1M81.2 177.3h1M60.8 214.7h1M56.4 224.0h1M56.3 225.7h1M50.5 232.2h1M46.5 236.0h1M49.1 232.1h1M180.4 13.6h1M177.5 18.6h1M168.1 35.0h1M166.2 39.1h1M168.0 38.4h1M157.2 52.6h1M158.2 60.2h1M154.1 57.9h1M151.5 65.2h1M140.5 87.0h1M137.5 95.1h1M133.2 100.2h1M125.0 118.1h1M87.8 181.7h1M76.0 196.8h1M75.1 200.3h1M79.0 198.1h1M59.5 237.3h1M54.5 247.5h1M54.3 249.9h1M186.1 24.2h1M185.7 24.7h1M185.0 23.0h1M177.3 27.8h1M178.0 35.6h1M178.5 35.2h1M177.0 39.1h1M171.7 53.2h1M163.7 60.5h1M152.3 83.9h1M149.1 89.3h1M102.2 173.1h1M89.9 198.9h1M84.7 217.1h1M192.9 31.5h1M190.0 32.9h1M180.8 51.6h1M172.3 66.6h1M168.7 72.2h1M163.2 79.5h1M107.7 192.0h1M96.1 198.4h1M97.1 215.4h1M83.3 231.4h1M81.6 236.6h1M73.5 256.2h1M203.6 25.9h1M195.9 38.1h1M192.2 43.9h1M194.9 41.3h1M189.6 51.8h1M188.6 45.9h1M184.5 52.2h1M188.7 49.6h1M185.0 57.2h1M182.1 56.3h1M133.0 170.7h1M133.0 170.0h1M114.7 191.3h1M107.7 211.8h1M102.9 225.0h1M90.9 245.8h1M205.4 49.3h1M192.9 53.2h1M195.5 55.7h1M189.1 59.9h1M193.8 69.0h1M184.5 77.0h1M143.9 165.5h1M128.9 190.4h1M110.4 225.5h1M105.4 237.3h1M105.1 235.0h1M106.3 234.5h1M113.7 236.4h1M217.4 34.4h1M213.1 38.2h1M203.8 58.2h1M209.3 62.0h1M197.9 71.2h1M188.1 86.3h1M128.4 212.7h1M125.5 220.6h1M217.7 49.6h1M210.2 63.0h1M206.4 71.0h1M203.8 72.1h1M206.2 78.7h1M222.5 51.5h1M225.9 52.3h1M220.8 60.5h1M151.7 212.0h1M146.8 222.9h1M146.2 223.1h1M127.2 260.4h1M231.3 51.2h1M234.1 50.3h1M232.4 52.8h1M230.5 49.3h1M230.3 56.5h1M232.3 58.4h1M221.0 78.2h1M220.8 76.9h1M154.9 225.5h1M155.3 227.8h1M144.1 253.4h1M139.3 263.0h1M129.4 282.8h1M246.0 57.5h1M235.6 69.2h1M201.9 146.1h1M166.6 222.5h1M156.7 243.9h1M251.1 59.0h1M248.2 66.0h1M238.8 91.1h1M197.4 189.9h1M174.1 236.5h1M164.8 253.8h1M157.9 273.8h1M258.8 54.9h1M189.4 224.1h1M187.4 230.1h1M162.3 290.8h1M157.5 297.4h1M244.3 112.9h1M241.5 121.9h1M195.1 232.5h1M196.1 235.6h1M193.7 235.9h1M194.7 233.8h1M192.9 244.5h1M192.9 244.5h1M182.7 252.9h1M171.7 294.7h1M270.4 78.8h1M268.8 89.6h1M266.5 84.0h1M266.5 82.6h1M254.9 118.3h1M246.0 133.3h1M241.1 149.8h1M212.0 218.7h1M198.1 256.0h1M189.8 279.6h1M183.1 288.2h1M269.4 101.9h1M265.9 107.7h1M231.2 201.4h1M218.0 212.1h1M208.9 254.2h1M284.0 85.8h1M272.7 118.8h1M212.1 267.9h1M195.6 309.0h1M290.7 88.0h1M288.0 96.4h1M280.4 118.0h1M228.9 254.2h1M294.6 99.3h1M293.1 102.7h1M291.9 106.3h1M292.3 112.7h1M286.7 117.5h1M282.5 129.3h1M276.4 149.6h1M229.6 274.9h1M221.0 305.0h1M221.6 304.8h1M221.5 304.2h1M309.7 82.7h1M296.4 120.1h1M298.4 114.4h1M292.2 132.4h1M286.6 146.3h1M285.9 146.0h1M232.4 297.5h1M308.4 101.4h1M305.9 113.3h1M304.8 120.5h1M231.1 336.3h1M314.4 111.4h1M312.0 122.3h1M240.0 334.6h1M238.5 336.9h1M326.8 100.8h1M324.5 109.4h1M321.2 121.3h1M312.4 148.3h1M255.6 320.9h1M335.4 103.5h1M329.7 115.9h1M329.1 118.3h1M325.7 117.0h1M325.1 122.8h1M328.6 122.7h1M319.2 151.4h1M274.8 285.4h1M88.4 0.8h1M76.7 19.5h1M30.3 87.7h1M71.3 25.3h1M33.0 80.3h1M28.6 91.7h1M85.7 5.4h1M44.1 66.2h1M2.7 127.3h1M62.6 38.0h1M18.3 105.1h1M85.8 3.5h1M75.5 23.5h1M55.0 49.4h1M79.4 10.2h1M2.9 135.6h1M13.3 117.2h1M46.8 58.8h1M13.7 113.3h1M86.5 1.5h1M4.6 128.4h1M74.1 23.7h1M48.0 62.9h1M45.7 61.6h1M38.1 76.2h1M48.7 57.9h1M82.0 16.0h1M15.3 112.6h1M12.1 116.5h1M29.3 84.9h1M62.4 42.7h1M57.3 51.9h1M67.6 29.1h1M80.5 8.7h1M80.4 14.5h1M19.4 107.0h1M86.2 2.5h1M24.1 102.4h1M11.3 116.3h1M73.5 27.7h1M40.1 72.6h1M65.6 33.1h1M42.6 71.2h1M35.2 85.6h1M3.4 128.0h1M61.5 39.9h1M56.7 49.6h1M85.9 3.5h1M59.4 48.1h1M11.6 119.7h1M16.6 106.5h1M23.8 104.0h1M68.5 29.1h1M5.7 122.8h1M11.4 120.0h1M44.5 69.0h1M88.6 5.7h1M57.1 44.3h1M55.9 55.8h1M21.2 101.5h1M85.1 6.6h1M58.1 45.8h1M7.5 122.3h1M24.6 94.9h1M3.8 124.7h1M75.9 20.1h1M46.9 65.9h1M67.0 41.1h1M327.4 103.8h1M321.3 103.0h1M326.9 108.0h1M333.4 107.3h1M328.0 104.1h1M330.0 90.6h1M334.3 106.2h1M328.0 109.1h1M331.6 102.9h1M330.5 104.3h1M326.7 117.2h1M329.7 97.2h1M327.8 109.2h1M327.8 104.1h1M330.9 87.8h1M328.0 103.1h1M335.1 98.2h1M332.0 102.4h1M329.8 97.9h1"/>
<path stroke="#777096" d="M93.7 25.2h1M82.8 37.9h1M71.4 58.9h1M68.2 55.9h1M55.9 78.8h1M48.9 90.6h1M52.9 87.9h1M51.5 85.5h1M51.3 87.7h1M36.6 112.8h1M22.0 134.1h1M18.5 143.5h1M18.6 151.0h1M105.3 21.4h1M94.8 35.2h1M92.0 40.2h1M90.6 39.2h1M80.9 49.4h1M81.6 60.0h1M70.0 72.3h1M68.0 76.5h1M66.1 83.4h1M64.6 81.0h1M56.9 92.4h1M61.8 91.7h1M58.1 100.3h1M47.2 119.4h1M43.1 117.9h1M42.8 117.1h1M33.8 132.1h1M28.2 145.1h1M20.9 160.1h1M17.3 165.9h1M12.6 171.6h1M9.4 173.7h1M11.8 172.7h1M3.8 177.1h1M2.5 185.1h1M125.8 5.4h1M118.7 12.9h1M123.6 17.1h1M102.5 44.5h1M102.0 45.2h1M97.6 52.9h1M95.6 53.7h1M91.2 60.8h1M82.5 75.4h1M79.8 81.6h1M80.1 80.6h1M68.8 95.1h1M65.7 99.5h1M38.1 145.7h1M28.0 156.4h1M21.7 176.3h1M18.4 181.1h1M136.3 6.3h1M130.2 6.7h1M136.3 6.6h1M119.7 36.8h1M117.2 35.0h1M114.8 35.6h1M97.0 70.3h1M93.3 77.8h1M86.5 86.2h1M75.4 95.8h1M60.2 131.4h1M64.9 129.7h1M56.8 132.7h1M53.1 142.6h1M47.4 165.0h1M36.9 171.1h1M22.4 186.9h1M18.0 194.0h1M3.7 228.6h1M148.4 3.3h1M144.2 1.0h1M126.3 36.9h1M127.3 36.5h1M118.3 49.0h1M115.9 56.2h1M100.9 80.9h1M102.6 92.9h1M80.8 121.5h1M58.6 153.3h1M49.5 172.9h1M41.6 182.3h1M35.1 189.8h1M30.5 199.5h1M32.5 201.5h1M25.3 206.3h1M21.2 205.1h1M16.6 234.7h1M151.1 13.0h1M150.3 11.3h1M126.0 59.0h1M117.5 69.6h1M117.6 70.7h1M111.5 81.9h1M77.3 144.6h1M69.8 153.0h1M69.6 155.3h1M59.0 166.8h1M58.1 178.5h1M34.3 220.5h1M28.3 229.3h1M31.3 226.0h1M161.8 7.7h1M165.0 5.9h1M162.8 9.2h1M159.9 14.5h1M159.4 17.1h1M155.0 21.8h1M150.0 39.2h1M139.3 49.2h1M148.5 48.9h1M135.0 58.0h1M133.6 55.1h1M124.4 71.3h1M124.5 72.2h1M125.3 75.9h1M112.7 98.7h1M108.2 114.6h1M85.3 144.9h1M84.1 149.0h1M85.8 147.4h1M64.2 183.1h1M51.4 196.2h1M34.0 240.0h1M172.4 13.8h1M165.9 20.9h1M171.2 19.9h1M152.1 37.7h1M148.5 56.5h1M146.7 57.8h1M145.9 60.8h1M134.6 82.3h1M81.8 174.4h1M181.1 10.7h1M169.6 31.8h1M167.4 27.8h1M162.0 47.3h1M163.1 45.8h1M154.8 57.1h1M88.0 180.0h1M81.2 201.4h1M73.3 207.9h1M74.0 207.5h1M182.5 14.6h1M186.4 20.6h1M186.2 25.4h1M181.2 20.7h1M177.4 35.2h1M179.5 32.9h1M177.7 36.8h1M176.0 45.4h1M173.5 38.0h1M174.3 43.1h1M171.3 47.5h1M166.2 55.0h1M153.9 67.5h1M156.7 73.8h1M154.7 85.0h1M149.5 81.0h1M146.5 97.6h1M140.9 96.1h1M133.3 113.3h1M77.7 225.3h1M77.0 227.9h1M192.1 19.5h1M189.9 30.8h1M189.8 31.2h1M184.6 38.7h1M174.7 45.9h1M178.0 54.5h1M176.7 48.3h1M165.7 80.5h1M104.0 204.8h1M87.1 227.3h1M75.5 253.1h1M204.4 24.5h1M199.3 29.8h1M187.8 46.4h1M189.1 49.3h1M187.9 49.1h1M185.0 59.3h1M113.4 202.4h1M204.1 47.8h1M190.2 66.8h1M124.5 199.5h1M128.2 199.0h1M118.3 214.6h1M113.2 224.9h1M103.6 244.7h1M96.4 249.1h1M93.3 271.0h1M202.3 72.2h1M124.8 209.8h1M128.8 222.1h1M122.7 230.1h1M122.3 232.9h1M223.6 37.6h1M211.1 63.4h1M201.2 87.7h1M152.1 188.5h1M178.1 162.8h1M143.7 231.4h1M235.8 47.0h1M233.5 51.2h1M233.0 47.1h1M227.4 59.7h1M177.9 180.8h1M138.5 263.6h1M243.6 53.3h1M243.7 62.1h1M241.8 60.3h1M231.8 80.5h1M188.8 177.8h1M164.5 230.4h1M153.3 253.7h1M146.5 270.5h1M146.7 267.0h1M138.3 289.8h1M137.3 290.0h1M245.1 72.1h1M166.0 254.9h1M165.6 255.1h1M155.8 273.3h1M148.2 292.9h1M250.7 77.3h1M242.4 108.1h1M236.3 102.5h1M176.3 254.1h1M174.5 256.2h1M162.5 284.7h1M249.7 104.1h1M234.7 134.2h1M205.2 207.3h1M202.3 230.7h1M199.1 240.7h1M178.6 271.6h1M176.7 277.2h1M270.1 68.1h1M252.0 119.2h1M189.2 276.1h1M176.0 296.0h1M179.9 297.6h1M174.1 310.2h1M274.5 81.1h1M260.6 113.2h1M252.2 123.7h1M258.5 129.3h1M256.8 129.4h1M217.0 227.6h1M216.5 236.4h1M216.9 236.3h1M214.7 235.9h1M185.9 310.3h1M292.9 72.8h1M276.7 104.8h1M264.4 134.0h1M264.8 133.9h1M258.3 144.3h1M226.2 229.6h1M209.0 276.8h1M208.4 284.2h1M206.7 284.8h1M199.9 305.2h1M296.6 79.7h1M286.9 95.8h1M287.4 96.0h1M269.7 146.1h1M271.0 144.6h1M253.1 181.1h1M225.7 260.2h1M221.3 272.6h1M218.7 279.8h1M215.2 290.3h1M204.6 318.2h1M294.7 102.6h1M292.0 107.0h1M290.1 108.6h1M271.4 157.0h1M236.2 257.5h1M212.7 325.7h1M302.3 95.7h1M301.1 110.3h1M290.6 130.9h1M282.1 161.5h1M316.8 87.2h1M303.2 121.3h1M293.2 159.0h1M262.4 237.2h1M247.0 284.2h1M249.2 284.6h1M243.1 303.2h1M236.2 314.7h1M235.0 321.6h1M228.5 333.9h1M304.1 147.5h1M298.8 161.8h1M297.5 167.1h1M264.9 260.5h1M264.7 258.9h1M244.2 316.7h1M320.5 122.2h1M311.0 149.4h1M300.6 169.1h1M303.9 172.1h1M256.2 313.3h1M331.8 111.7h1M323.8 138.0h1M312.9 151.5h1M318.5 152.0h1M268.1 308.0h1M264.1 323.8h1M75.6 21.8h1M74.4 23.6h1M43.8 66.4h1M52.3 59.8h1M44.0 63.9h1M81.4 14.2h1M43.6 67.2h1M2.8 128.6h1M54.2 48.5h1M36.7 75.4h1M63.6 44.2h1M61.6 39.8h1M35.7 77.2h1M5.9 127.8h1M52.4 55.3h1M26.8 98.4h1M30.8 89.2h1M77.5 13.8h1M33.3 87.9h1M71.3 22.0h1M78.8 16.8h1M71.9 26.4h1M40.0 79.5h1M71.3 24.0h1M20.4 102.2h1M10.0 124.6h1M38.8 70.5h1M77.3 17.7h1M87.6 6.2h1M21.7 104.4h1M54.4 55.3h1M19.7 103.4h1M11.9 116.1h1M75.0 24.0h1M39.1 74.3h1M26.8 88.8h1M29.9 93.5h1M0.7 128.1h1M48.1 59.9h1M78.4 19.1h1M3.9 123.9h1M5.7 123.6h1M83.3 7.7h1M63.4 36.8h1M19.6 104.7h1M85.6 4.3h1M33.5 79.9h1M46.3 65.8h1M86.2 3.2h1M2.6 127.3h1M60.4 43.2h1M36.6 83.0h1M10.7 116.7h1M2.7 128.5h1M84.4 3.9h1M333.2 102.0h1M327.9 111.2h1M325.3 111.3h1M324.7 101.5h1M334.2 99.6h1M328.3 95.3h1M328.5 105.6h1M322.5 111.6h1M334.4 99.5h1M329.1 102.1h1M324.5 103.0h1M332.6 99.7h1M330.1 103.2h1M329.7 101.7h1M328.4 96.6h1M327.3 102.1h1M323.4 98.1h1M327.9 106.7h1M326.9 106.4h1M330.5 103.7h1M331.1 114.8h1M330.0 94.8h1M330.6 102.2h1M328.7 105.2h1"/>
<path stroke="#9c2952" d="M87.9 33.9h1M79.9 43.1h1M75.0 53.4h1M70.9 57.8h1M53.5 79.5h1M52.8 81.7h1M56.6 89.9h1M43.4 102.7h1M45.1 104.4h1M36.5 114.6h1M22.9 132.5h1M29.1 134.6h1M14.3 146.2h1M3.6 165.3h1M95.9 26.4h1M96.1 36.4h1M81.9 55.1h1M78.5 63.9h1M68.5 77.4h1M65.2 86.3h1M50.9 111.2h1M54.3 104.0h1M53.2 107.8h1M35.8 134.3h1M38.9 128.7h1M36.0 133.7h1M35.3 135.6h1M27.0 147.8h1M19.8 159.7h1M20.8 159.9h1M109.8 28.4h1M96.3 52.9h1M92.2 60.1h1M95.0 59.0h1M84.5 76.4h1M75.5 87.6h1M74.3 89.0h1M57.6 124.1h1M44.6 141.6h1M24.9 171.1h1M4.1 199.1h1M10.3 198.6h1M126.3 15.5h1M116.4 34.3h1M117.4 38.1h1M112.3 44.4h1M109.8 48.8h1M103.7 56.5h1M108.7 60.7h1M91.5 81.2h1M92.5 80.8h1M84.3 86.5h1M60.2 132.2h1M46.4 146.8h1M26.8 195.7h1M141.6 16.0h1M134.1 27.1h1M123.3 38.4h1M112.6 63.6h1M111.4 63.9h1M98.8 74.8h1M103.1 77.0h1M97.9 84.5h1M100.2 81.2h1M98.0 88.0h1M88.4 108.2h1M76.1 125.7h1M80.1 121.2h1M68.9 145.7h1M43.9 175.2h1M36.1 192.2h1M34.5 190.7h1M32.1 201.5h1M21.4 223.3h1M147.3 20.8h1M149.7 26.4h1M142.7 27.1h1M144.6 26.4h1M138.0 43.0h1M128.4 52.5h1M122.3 54.0h1M120.8 65.4h1M119.5 66.5h1M99.2 106.7h1M99.1 104.7h1M30.8 218.3h1M34.6 216.2h1M32.2 224.8h1M164.7 5.2h1M161.8 11.3h1M160.6 14.9h1M159.7 18.0h1M149.0 29.2h1M147.4 38.7h1M142.9 36.7h1M65.7 183.2h1M44.9 217.5h1M42.9 219.5h1M34.0 237.0h1M172.1 7.8h1M151.0 49.5h1M149.2 55.6h1M140.4 66.9h1M140.0 68.1h1M125.1 95.2h1M76.9 180.6h1M59.7 217.0h1M57.8 225.6h1M47.9 233.7h1M47.2 233.8h1M42.8 242.2h1M179.5 11.6h1M177.2 18.7h1M178.0 19.2h1M171.3 33.3h1M164.3 46.8h1M155.9 56.2h1M92.6 176.3h1M87.8 181.6h1M77.7 197.0h1M188.5 18.3h1M176.5 36.4h1M172.7 47.0h1M161.2 57.4h1M168.7 53.3h1M97.0 185.5h1M99.4 195.2h1M85.2 221.6h1M69.4 242.6h1M65.8 249.9h1M63.1 251.8h1M191.0 26.7h1M190.1 27.8h1M181.6 46.5h1M168.0 71.2h1M164.2 80.1h1M164.7 82.7h1M161.0 90.7h1M86.9 231.2h1M198.9 29.6h1M196.4 46.6h1M186.2 45.4h1M187.1 58.8h1M186.8 57.8h1M178.7 69.5h1M109.1 202.6h1M87.0 256.3h1M87.2 250.3h1M203.7 35.2h1M204.0 34.5h1M192.5 61.2h1M193.0 59.9h1M191.6 67.0h1M184.8 74.0h1M183.7 81.3h1M183.8 81.8h1M150.1 147.6h1M126.9 200.6h1M110.2 229.0h1M205.7 52.7h1M201.9 57.2h1M140.3 194.1h1M224.4 37.4h1M219.0 46.8h1M213.3 56.9h1M213.8 61.9h1M214.1 60.1h1M203.4 77.7h1M152.0 186.3h1M150.5 192.2h1M147.8 201.4h1M115.8 262.0h1M218.2 59.8h1M222.3 57.1h1M216.3 69.6h1M218.0 78.1h1M213.8 79.7h1M173.2 171.1h1M156.8 204.3h1M145.3 227.6h1M143.9 230.1h1M138.8 241.4h1M130.9 259.4h1M232.0 46.6h1M230.6 54.9h1M220.7 76.8h1M146.4 245.5h1M138.2 266.7h1M243.6 54.3h1M243.3 55.6h1M242.1 56.3h1M237.9 64.5h1M234.3 76.4h1M245.7 65.1h1M244.3 70.7h1M242.2 78.4h1M161.7 262.9h1M159.2 287.0h1M160.4 286.3h1M258.2 79.9h1M244.8 112.8h1M207.7 228.7h1M270.0 98.7h1M261.3 120.8h1M280.8 88.3h1M211.6 265.8h1M210.3 310.6h1M214.8 316.7h1M298.4 109.9h1M307.6 104.1h1M307.5 107.5h1M305.0 120.1h1M299.1 128.5h1M241.2 304.2h1M321.1 98.0h1M317.3 105.6h1M312.7 117.1h1M311.6 122.2h1M310.9 122.7h1M312.2 123.4h1M303.0 145.6h1M326.3 101.7h1M323.1 116.6h1M325.1 121.1h1M10.1 128.1h1M35.3 86.8h1M52.4 62.4h1M65.4 42.4h1M54.2 57.3h1M49.6 74.4h1M74.2 30.6h1M36.5 89.8h1M34.7 91.4h1M79.8 20.3h1M12.9 121.4h1M34.8 86.0h1M89.0 7.6h1M66.1 40.7h1"/>
<path stroke="#c2b0d9" d="M88.7 31.8h1M90.3 32.3h1M84.8 36.5h1M79.2 45.2h1M80.0 42.3h1M75.5 51.7h1M68.9 58.6h1M72.4 57.4h1M49.2 89.7h1M20.2 136.0h1M10.4 153.8h1M3.6 156.3h1M118.9 3.8h1M114.1 7.8h1M106.0 21.7h1M95.5 33.6h1M95.5 35.3h1M92.3 41.9h1M83.0 55.5h1M80.2 60.9h1M61.6 92.1h1M56.3 100.9h1M51.0 111.2h1M42.6 120.5h1M46.7 116.9h1M40.3 116.4h1M36.1 135.5h1M38.5 132.0h1M37.6 137.2h1M37.5 133.6h1M40.0 127.5h1M24.2 146.9h1M25.5 148.5h1M131.3 3.0h1M121.9 5.3h1M121.0 12.5h1M116.5 19.4h1M114.1 27.8h1M100.7 47.8h1M102.3 43.0h1M96.4 54.7h1M92.4 60.8h1M91.7 60.6h1M84.8 66.6h1M81.7 79.7h1M78.1 80.9h1M79.2 80.8h1M69.7 94.5h1M69.7 97.4h1M68.7 94.8h1M69.3 96.7h1M61.3 107.6h1M50.5 128.7h1M52.2 127.7h1M40.7 134.2h1M15.4 185.8h1M14.5 192.1h1M132.9 15.6h1M133.0 8.8h1M132.7 11.7h1M127.8 17.1h1M125.9 17.9h1M119.9 31.4h1M124.6 31.2h1M123.1 28.3h1M124.4 31.4h1M98.0 72.7h1M94.3 66.8h1M93.7 78.5h1M89.0 79.3h1M84.4 84.8h1M84.6 92.1h1M83.7 92.4h1M73.3 110.2h1M54.1 142.9h1M43.5 161.9h1M38.7 177.5h1M15.0 209.1h1M3.1 226.7h1M145.0 7.0h1M144.7 9.8h1M135.8 20.4h1M118.3 48.0h1M120.2 47.7h1M116.0 55.0h1M108.7 73.7h1M101.3 82.2h1M100.0 79.9h1M95.2 94.1h1M93.3 96.6h1M72.5 129.9h1M67.7 137.2h1M61.8 149.5h1M61.3 146.5h1M43.3 171.7h1M49.3 171.8h1M48.2 169.9h1M43.3 177.1h1M37.5 192.2h1M31.5 199.2h1M32.2 200.4h1M27.0 208.3h1M146.9 18.2h1M142.8 25.1h1M143.0 24.1h1M140.4 32.6h1M128.2 54.0h1M116.4 63.0h1M120.5 67.9h1M118.6 69.9h1M119.7 72.2h1M112.5 82.0h1M98.2 97.8h1M99.8 101.1h1M101.1 103.4h1M90.5 115.1h1M86.9 128.4h1M67.6 160.8h1M56.5 178.9h1M56.4 175.9h1M54.5 177.7h1M54.2 186.7h1M44.9 197.6h1M44.7 195.8h1M44.0 198.2h1M31.1 224.7h1M158.9 9.1h1M158.9 19.2h1M155.4 22.5h1M149.9 30.7h1M148.3 35.9h1M143.6 44.2h1M136.4 57.7h1M129.5 61.5h1M129.1 72.4h1M98.8 121.2h1M74.9 163.7h1M58.0 190.4h1M56.4 200.0h1M54.1 202.0h1M39.2 229.1h1M172.1 8.1h1M173.1 7.9h1M163.7 30.6h1M160.3 34.3h1M154.7 39.6h1M145.8 57.5h1M145.3 64.9h1M145.3 68.1h1M121.7 103.3h1M79.9 177.2h1M80.6 177.5h1M62.0 216.4h1M51.5 232.4h1M52.1 236.0h1M51.0 230.8h1M50.0 233.5h1M176.6 19.4h1M176.8 19.6h1M170.2 31.8h1M167.8 31.0h1M168.0 36.0h1M170.1 42.4h1M167.3 38.1h1M170.2 40.3h1M157.4 44.8h1M152.4 56.9h1M151.4 67.5h1M150.2 66.6h1M136.8 94.3h1M138.4 101.0h1M83.2 192.7h1M80.4 204.4h1M74.4 207.2h1M68.5 216.6h1M63.1 230.4h1M59.7 236.3h1M53.8 246.9h1M55.8 245.5h1M187.7 14.6h1M188.3 16.9h1M187.7 16.7h1M183.4 23.1h1M185.0 23.0h1M183.4 23.7h1M177.7 35.8h1M178.0 34.7h1M174.8 42.4h1M174.4 41.7h1M172.6 45.8h1M166.1 57.8h1M151.5 81.3h1M154.4 79.2h1M151.5 81.8h1M152.4 82.8h1M139.8 104.7h1M77.2 222.8h1M76.1 225.0h1M71.0 225.9h1M61.6 252.5h1M189.7 31.5h1M178.2 53.1h1M183.5 53.4h1M174.3 59.0h1M157.7 82.8h1M157.3 95.3h1M160.7 97.2h1M113.8 173.1h1M107.9 191.1h1M101.7 198.4h1M97.4 209.5h1M77.8 247.4h1M82.8 242.7h1M70.9 257.7h1M75.1 256.5h1M203.5 25.7h1M203.3 24.8h1M203.3 26.0h1M202.6 30.6h1M199.0 33.3h1M199.6 30.9h1M200.2 29.9h1M197.4 40.5h1M194.8 38.0h1M193.5 43.4h1M189.0 48.4h1M187.4 58.2h1M188.2 53.9h1M185.9 57.4h1M189.6 60.3h1M186.1 57.0h1M177.5 68.7h1M178.9 70.4h1M179.6 66.9h1M172.2 85.0h1M134.3 166.4h1M125.8 176.2h1M113.1 204.4h1M112.1 204.8h1M111.0 207.1h1M86.7 249.7h1M185.1 72.9h1M153.9 139.9h1M134.2 183.2h1M109.9 228.1h1M107.9 235.3h1M106.3 241.2h1M100.5 252.5h1M101.1 245.2h1M92.0 265.1h1M89.0 262.4h1M216.6 31.8h1M212.6 36.0h1M204.4 51.7h1M203.9 60.0h1M193.7 80.2h1M154.2 165.0h1M143.5 186.4h1M140.4 194.5h1M128.8 214.6h1M126.6 221.8h1M106.1 261.3h1M220.9 42.4h1M218.9 48.6h1M214.7 56.7h1M207.2 68.8h1M206.3 79.8h1M203.8 84.5h1M171.5 146.3h1M156.6 172.3h1M138.9 214.9h1M132.6 234.1h1M126.0 243.5h1M127.1 246.5h1M121.1 257.4h1M118.6 255.7h1M228.7 46.7h1M228.0 46.4h1M225.3 53.1h1M216.6 73.5h1M173.9 169.7h1M158.5 203.4h1M142.1 231.3h1M119.6 284.7h1M171.9 192.6h1M158.1 225.8h1M153.2 236.6h1M244.3 59.9h1M242.5 55.2h1M236.7 69.5h1M169.2 233.0h1M153.8 260.9h1M249.7 59.2h1M250.1 59.0h1M158.8 274.2h1M257.4 55.5h1M252.3 70.7h1M180.6 238.5h1M266.6 60.4h1M265.7 60.4h1M262.1 65.8h1M254.3 87.0h1M249.8 100.6h1M246.5 107.5h1M269.8 78.3h1M257.4 104.9h1M250.7 125.3h1M269.4 101.8h1M238.4 174.0h1M289.1 72.5h1M281.0 91.2h1M276.5 106.5h1M276.7 105.3h1M264.9 133.9h1M221.4 240.2h1M287.2 104.3h1M280.6 115.8h1M280.1 115.5h1M281.5 115.5h1M226.9 263.7h1M215.2 290.8h1M212.2 304.4h1M301.4 80.2h1M300.1 82.5h1M289.9 112.4h1M288.5 114.6h1M299.4 95.9h1M296.6 116.1h1M227.3 319.6h1M314.8 87.9h1M317.0 88.1h1M307.3 112.7h1M318.4 104.3h1M247.9 310.0h1M325.3 109.7h1M325.5 109.9h1M324.4 110.5h1M320.2 123.2h1M320.5 123.8h1M316.8 130.9h1M264.2 291.5h1M246.7 341.5h1M331.5 112.9h1M330.5 111.5h1M315.2 148.3h1M267.6 317.8h1M37.7 52.8h1M61.2 5.7h1M52.5 19.4h1M20.2 69.0h1M17.1 92.4h1M54.1 22.6h1M13.2 88.6h1M51.1 34.1h1M56.5 40.1h1M67.0 27.8h1M73.1 2.0h1M67.4 7.2h1M33.5 84.3h1M50.2 59.9h1M36.0 79.4h1M56.8 50.2h1M86.6 7.0h1M45.3 70.9h1M50.7 59.9h1M39.4 78.9h1M11.7 122.6h1M8.7 124.4h1M71.5 30.8h1M60.1 40.8h1M10.7 117.2h1M40.4 73.5h1M38.1 78.7h1M2.3 137.6h1M21.4 99.5h1M47.7 58.3h1M25.3 96.4h1M71.2 31.5h1M49.5 64.4h1M75.5 19.3h1M3.3 128.7h1M45.6 62.4h1M19.7 101.1h1M35.9 84.7h1M74.6 18.3h1M30.4 85.0h1M25.1 97.6h1M64.9 39.5h1M3.5 130.3h1M76.9 16.9h1M65.5 35.4h1M82.2 8.3h1M23.2 98.6h1M17.0 112.9h1M83.7 10.8h1M68.8 31.9h1"/>
<path stroke="#977cc2" d="M80.0 45.1h1M78.7 44.0h1M80.8 42.9h1M66.7 63.4h1M62.5 71.9h1M55.9 80.6h1M54.7 79.2h1M54.9 80.9h1M51.3 88.7h1M49.2 85.6h1M11.8 152.3h1M7.2 161.1h1M113.2 9.1h1M102.8 25.0h1M105.3 16.8h1M104.9 22.0h1M104.7 19.9h1M99.8 27.0h1M96.6 36.6h1M96.4 36.2h1M85.1 53.6h1M84.5 58.8h1M74.5 71.7h1M74.5 77.2h1M61.7 93.5h1M53.2 108.4h1M47.3 115.5h1M37.3 132.9h1M27.3 146.3h1M13.9 167.1h1M4.3 189.9h1M125.6 1.0h1M117.1 12.0h1M113.9 23.9h1M114.5 29.6h1M113.9 26.9h1M112.6 23.3h1M107.5 34.3h1M107.3 41.3h1M104.1 40.8h1M105.5 40.8h1M102.4 45.5h1M106.7 45.8h1M97.6 42.0h1M96.2 53.3h1M92.7 50.9h1M94.1 55.5h1M82.0 75.3h1M67.5 95.6h1M53.3 129.5h1M43.4 138.1h1M16.1 180.0h1M135.6 6.8h1M137.4 4.4h1M125.8 20.8h1M127.5 17.8h1M123.5 30.5h1M116.3 37.1h1M120.3 40.0h1M112.9 44.8h1M105.4 67.0h1M85.3 88.2h1M85.9 82.4h1M83.4 92.9h1M78.1 98.8h1M74.2 109.6h1M76.4 106.6h1M59.6 132.7h1M32.5 177.6h1M29.6 185.0h1M144.5 9.2h1M140.1 15.0h1M134.3 26.8h1M133.5 27.1h1M125.9 38.5h1M128.3 34.6h1M123.5 42.6h1M111.8 64.8h1M114.3 59.9h1M108.0 70.9h1M109.4 71.5h1M104.1 76.1h1M99.6 80.1h1M100.0 88.5h1M99.0 91.7h1M94.0 102.8h1M91.6 100.1h1M67.4 138.0h1M47.0 171.9h1M36.2 191.7h1M39.8 188.7h1M34.3 193.3h1M36.3 191.3h1M29.1 202.7h1M160.4 4.4h1M155.5 5.5h1M152.2 10.8h1M145.7 26.3h1M141.7 40.2h1M133.6 45.0h1M130.1 53.7h1M126.7 58.4h1M112.6 83.0h1M82.9 137.1h1M72.8 151.4h1M53.9 176.1h1M55.4 184.8h1M43.8 197.3h1M37.5 217.7h1M29.3 230.0h1M166.1 5.7h1M165.5 5.0h1M162.1 11.8h1M153.6 20.6h1M147.0 34.9h1M124.7 75.9h1M76.4 164.3h1M65.7 181.5h1M65.4 182.4h1M52.7 208.7h1M43.6 222.7h1M172.9 8.8h1M172.4 7.6h1M172.6 7.7h1M170.3 18.7h1M151.1 44.7h1M154.1 57.2h1M150.4 54.0h1M144.6 59.7h1M144.8 61.1h1M142.7 67.3h1M78.1 181.4h1M79.7 177.5h1M76.4 186.5h1M70.3 197.9h1M60.8 203.0h1M60.2 205.7h1M60.0 214.2h1M63.2 214.8h1M61.5 215.9h1M55.5 226.3h1M52.3 233.2h1M50.6 230.3h1M43.5 242.5h1M169.3 31.4h1M169.9 28.4h1M166.2 38.4h1M165.0 39.5h1M166.1 37.9h1M166.5 38.8h1M162.5 46.1h1M146.1 70.9h1M147.5 70.5h1M144.8 81.5h1M74.2 207.0h1M185.1 23.3h1M182.9 26.0h1M177.5 39.4h1M174.3 42.5h1M167.3 56.2h1M166.5 56.1h1M168.6 55.6h1M162.8 59.3h1M157.9 67.4h1M152.4 79.6h1M146.8 91.5h1M145.9 84.3h1M136.4 114.1h1M93.8 196.0h1M98.8 193.4h1M76.3 222.8h1M62.5 251.6h1M183.4 39.2h1M181.0 44.6h1M176.4 54.5h1M177.6 53.4h1M171.6 67.7h1M165.0 77.4h1M151.9 100.4h1M152.2 101.0h1M102.7 197.0h1M92.4 219.5h1M86.8 232.9h1M79.3 247.8h1M76.9 250.8h1M202.8 27.2h1M192.3 40.9h1M186.5 57.1h1M185.7 62.3h1M177.5 70.7h1M170.2 79.6h1M173.7 91.7h1M163.6 96.1h1M125.7 176.2h1M108.5 196.0h1M108.8 206.9h1M110.8 208.0h1M111.4 206.8h1M109.0 207.1h1M100.0 225.7h1M85.7 249.8h1M203.6 43.8h1M193.2 62.0h1M195.1 64.4h1M189.9 67.2h1M185.2 75.0h1M183.7 72.6h1M178.9 90.6h1M141.8 168.9h1M125.4 199.9h1M126.4 201.6h1M126.9 200.2h1M110.1 235.7h1M107.8 235.5h1M102.1 245.6h1M97.9 259.2h1M216.1 33.3h1M210.5 44.0h1M202.5 65.3h1M200.9 65.2h1M199.0 72.7h1M142.7 185.3h1M137.7 196.2h1M123.8 230.2h1M107.6 258.6h1M222.2 36.9h1M213.6 55.3h1M213.3 56.1h1M208.0 59.9h1M208.7 68.3h1M204.5 78.4h1M205.8 79.6h1M204.2 78.5h1M207.6 75.0h1M198.7 88.1h1M155.7 179.9h1M143.2 208.7h1M139.7 216.8h1M137.5 215.6h1M126.1 247.3h1M227.9 47.0h1M228.5 47.3h1M224.7 62.2h1M221.7 60.7h1M216.8 74.2h1M209.9 89.2h1M162.7 187.2h1M152.9 212.5h1M231.8 45.3h1M232.6 51.3h1M233.5 50.0h1M237.0 51.8h1M233.6 59.1h1M157.5 227.4h1M146.0 232.6h1M144.5 254.4h1M139.1 264.7h1M137.3 269.1h1M139.4 266.8h1M138.0 265.5h1M242.2 45.4h1M241.8 54.5h1M240.3 61.3h1M235.6 71.3h1M229.6 88.4h1M253.1 60.8h1M248.0 61.1h1M244.4 72.0h1M237.6 84.7h1M170.2 244.8h1M166.1 254.3h1M259.5 53.9h1M257.9 62.6h1M250.8 77.2h1M178.5 246.2h1M267.1 60.7h1M259.0 86.4h1M187.7 253.3h1M174.1 273.1h1M169.3 297.9h1M259.0 102.6h1M250.6 136.7h1M205.8 236.5h1M269.6 103.9h1M256.6 127.8h1M277.1 97.6h1M208.2 296.7h1M199.2 304.2h1M289.4 90.6h1M281.5 111.7h1M279.2 115.9h1M297.9 81.8h1M300.9 86.3h1M295.5 98.4h1M290.1 107.7h1M291.2 106.2h1M286.8 118.5h1M281.3 134.2h1M309.7 84.8h1M299.5 108.1h1M297.4 117.2h1M227.9 307.1h1M218.9 329.8h1M316.4 87.1h1M315.6 87.8h1M260.6 249.1h1M320.8 94.4h1M318.3 104.6h1M325.0 109.1h1M321.7 115.1h1M315.2 134.5h1M313.4 134.8h1M255.1 326.2h1M327.0 125.3h1M321.8 146.9h1M323.3 149.6h1M316.1 159.8h1M267.9 313.9h1M43.4 45.2h1M66.9 27.4h1M76.0 3.7h1M69.7 16.1h1M70.0 17.8h1M2.3 121.8h1M15.2 98.2h1M18.4 73.4h1M31.1 50.4h1M70.2 11.9h1M40.0 37.6h1M75.4 3.4h1M80.0 4.3h1M1.3 95.2h1M20.5 81.2h1M5.3 107.6h1M52.2 39.7h1M33.9 53.4h1M36.9 45.0h1M1.8 107.5h1M30.1 57.8h1M68.6 3.1h1M8.7 87.1h1M27.9 232.2h1M194.2 311.4h1M199.7 318.2h1M225.0 330.3h1M98.9 268.6h1M107.0 270.6h1M145.3 291.8h1M191.3 311.4h1M70.2 252.8h1M59.1 246.7h1M238.4 333.4h1M126.4 280.8h1M56.1 245.5h1M207.9 322.2h1M106.1 271.1h1M257.8 341.5h1M243.3 335.5h1M153.3 293.5h1M189.5 310.7h1M62.6 250.1h1M50.4 246.0h1M185.7 311.1h1M194.1 314.8h1M230.0 331.9h1M66.4 253.3h1M29.3 235.8h1M21.5 227.7h1M30.8 234.1h1M146.7 292.0h1M211.7 318.8h1M181.0 308.1h1M115.2 277.2h1M141.9 289.4h1M13.5 226.2h1M81.3 258.2h1M139.4 289.1h1M82.4 259.7h1M122.9 279.6h1M51.2 243.9h1M93.6 266.3h1M57.9 248.9h1M249.0 339.1h1M115.7 276.7h1M11.4 222.4h1M20.3 228.6h1M32.1 235.8h1"/>
<path stroke="#7c5ca9" d="M75.7 60.4h1M24.4 126.3h1M20.3 134.5h1M14.7 144.0h1M83.2 56.8h1M62.6 99.6h1M28.1 146.9h1M119.8 14.0h1M101.5 45.6h1M23.6 170.5h1M132.4 12.6h1M124.0 29.9h1M103.6 67.7h1M71.5 108.0h1M135.8 20.8h1M122.6 48.0h1M105.9 76.6h1M100.7 80.8h1M35.6 191.9h1M13.1 228.9h1M137.3 37.2h1M137.7 37.9h1M135.0 43.4h1M109.3 88.7h1M149.2 36.8h1M137.1 56.5h1M119.3 78.3h1M103.2 116.4h1M167.0 20.8h1M156.3 39.1h1M140.3 68.0h1M52.4 232.1h1M178.3 21.2h1M167.4 38.4h1M147.8 71.0h1M146.2 76.4h1M86.6 185.0h1M186.5 21.3h1M183.1 24.6h1M181.5 28.1h1M175.2 42.7h1M150.7 83.6h1M67.3 252.1h1M180.7 40.7h1M179.6 53.8h1M162.1 78.9h1M104.1 194.6h1M203.1 26.1h1M186.3 58.6h1M110.8 204.0h1M106.1 214.2h1M178.5 96.5h1M150.1 150.6h1M142.6 171.9h1M131.5 183.5h1M124.9 200.7h1M114.7 216.2h1M133.5 215.5h1M209.5 61.5h1M204.4 78.7h1M157.6 171.1h1M233.2 50.0h1M234.6 50.9h1M231.6 57.0h1M139.4 264.9h1M260.6 60.0h1M259.9 61.8h1M246.0 88.5h1M194.0 235.7h1M272.5 69.0h1M258.0 104.0h1M268.8 102.9h1M261.2 114.9h1M285.3 76.4h1M292.9 80.9h1M223.9 333.5h1M321.6 99.6h1"/>
<path stroke="#ebebf0" d="M83.6 5.2h1M12.5 112.9h1M62.0 40.0h1M70.4 29.0h1M56.4 45.9h1M61.7 40.8h1M76.1 20.0h1M16.4 112.0h1M86.7 4.2h1M40.8 71.2h1M64.2 37.5h1M53.5 51.4h1"/>
<path stroke="#adadc2" d="M78.1 18.8h1M70.5 30.7h1M60.2 41.5h1M36.1 79.9h1M58.2 47.1h1M65.2 35.3h1M10.8 112.6h1M5.6 127.8h1M31.8 87.9h1M67.6 35.8h1M62.7 37.9h1M32.2 86.2h1M46.4 61.2h1M53.4 57.8h1M15.9 108.6h1M81.5 7.5h1M18.4 107.3h1M61.2 41.0h1M22.6 105.4h1M35.4 78.3h1M21.9 100.7h1M42.7 71.1h1M16.7 108.7h1M76.9 14.7h1M37.1 77.3h1M36.2 81.2h1M76.9 17.2h1M48.0 68.1h1M53.6 46.7h1M20.3 105.9h1M31.1 85.2h1M15.3 112.1h1M30.6 92.3h1M73.6 23.0h1M68.9 28.6h1M48.7 62.5h1M89.6 2.1h1M73.1 23.0h1M45.6 64.2h1M61.8 39.3h1M77.4 17.1h1M77.7 16.6h1M72.6 20.1h1M78.2 16.7h1M82.7 12.4h1M66.4 30.3h1M76.6 13.3h1M1.4 132.9h1M65.5 37.6h1"/>
<path stroke="#7a7a9c" d="M24.7 95.7h1M77.4 18.7h1M65.6 33.5h1M68.1 28.8h1M11.9 115.9h1M71.1 27.7h1M74.2 22.8h1M81.7 14.7h1M80.4 11.2h1M40.2 76.9h1M12.4 110.8h1M44.4 66.0h1M82.9 10.2h1M36.5 78.3h1M79.9 14.6h1M30.0 86.6h1M79.8 15.0h1M0.8 135.8h1M81.0 7.7h1M57.1 53.8h1M79.9 15.1h1M76.0 21.3h1M24.2 101.6h1M82.9 8.9h1M75.0 17.3h1M7.7 126.2h1M15.9 110.6h1M83.7 9.1h1M25.7 90.9h1M56.7 49.0h1M17.9 111.9h1M62.5 39.7h1"/>
<path stroke="#c02b57" d="M22.8 107.3h1M74.0 32.5h1M43.4 77.9h1M73.6 31.9h1M82.9 16.4h1M45.3 70.7h1M37.2 85.7h1M48.3 70.9h1M37.9 88.1h1M85.0 13.3h1M68.6 39.5h1M32.9 95.3h1M50.0 66.1h1M23.5 107.8h1M54.2 58.3h1M40.3 80.8h1M81.5 17.9h1M5.8 137.8h1M2.5 139.9h1M22.3 105.3h1M62.5 47.3h1M63.3 46.9h1"/>
<path stroke="#912e5c" d="M69.3 38.6h1M32.7 90.1h1M18.4 116.1h1M80.6 20.2h1M23.5 105.9h1M61.3 51.8h1M35.9 86.5h1M28.9 93.9h1M81.7 17.9h1M84.9 12.4h1M18.9 111.5h1M70.7 35.1h1M45.8 76.7h1M23.6 114.7h1M77.8 23.4h1M73.6 30.7h1M95.0 2.1h1M39.2 84.7h1M81.1 18.6h1M83.2 12.4h1M28.7 96.5h1M55.1 53.0h1M3.7 137.4h1M6.6 131.7h1M68.6 38.7h1M56.3 54.5h1M86.8 8.2h1M27.2 103.5h1M33.5 96.5h1M61.9 49.5h1M36.0 92.0h1M57.0 53.2h1M15.7 116.5h1M33.7 95.3h1M71.2 31.3h1"/>
<path stroke="#6a3060" d="M88.2 8.5h1M60.7 48.4h1M30.9 98.8h1M71.0 36.4h1M1.0 144.3h1M73.0 30.6h1M72.6 29.7h1M16.7 117.6h1M66.3 43.7h1M40.2 76.6h1M65.5 46.1h1M17.2 114.8h1M1.3 145.4h1M85.5 9.8h1M17.2 115.5h1M69.1 36.5h1M71.0 35.9h1M41.3 78.6h1M34.7 90.5h1M15.0 122.3h1M72.9 31.7h1M18.2 114.0h1M77.8 23.9h1M69.4 36.0h1M66.5 40.6h1M11.5 126.6h1M45.4 76.3h1M79.9 21.7h1M54.9 59.0h1M3.0 139.7h1M36.4 86.7h1M23.0 107.2h1M70.8 35.1h1M29.0 98.7h1M8.0 131.7h1M52.6 59.6h1M48.8 63.9h1M22.5 107.1h1M39.3 84.5h1M1.7 139.3h1M72.9 31.5h1M18.4 116.5h1M17.8 116.6h1M72.4 36.6h1"/>
<path stroke="#ddb2cd" d="M166.5 4.7h1M237.8 44.1h1M312.7 85.0h1M273.7 65.8h1M234.4 45.3h1M187.1 18.7h1M331.4 97.7h1M240.5 49.1h1M332.5 97.0h1M294.8 77.5h1M246.6 51.9h1M169.8 9.8h1M243.5 47.8h1M294.3 76.5h1M224.7 37.5h1M246.3 50.5h1M243.9 47.9h1M229.3 41.5h1M238.0 51.2h1M233.2 41.9h1M161.2 5.1h1M233.8 41.7h1M202.0 24.8h1M279.9 67.7h1M273.4 65.7h1M201.0 25.1h1M177.4 12.9h1M249.9 51.6h1M186.8 19.7h1M302.8 80.3h1M286.9 73.0h1M303.6 81.1h1M225.9 38.6h1M331.8 101.8h1M327.4 103.2h1M324.1 108.5h1M323.9 106.8h1M332.2 108.4h1M329.1 103.0h1M334.8 101.6h1M321.8 107.2h1M327.1 111.2h1M327.5 104.7h1M327.4 100.0h1"/>
<path stroke="#7e2e5c" d="M201.2 27.1h1M182.1 15.4h1M266.8 62.7h1M202.4 24.3h1M236.1 47.6h1M191.7 22.9h1M296.2 78.2h1M309.9 86.6h1M288.5 77.2h1M292.7 75.2h1M194.4 22.9h1M328.3 93.7h1M299.8 79.1h1M313.9 89.2h1M238.4 46.1h1M232.5 42.7h1M229.9 45.4h1M201.9 28.5h1M292.5 75.3h1M208.1 31.2h1M309.4 85.5h1M195.2 21.9h1M202.2 25.8h1M209.3 30.4h1M331.4 98.1h1M181.7 16.6h1M207.8 29.7h1M186.1 18.1h1M293.0 77.6h1M235.7 42.7h1M155.5 0.8h1M282.9 69.9h1M328.8 96.9h1M218.3 36.8h1M301.7 79.1h1M157.9 4.2h1M186.3 17.9h1M323.3 92.6h1M287.6 71.5h1M313.6 88.2h1M279.6 68.6h1M244.0 49.1h1M311.9 86.5h1M177.1 11.8h1M187.3 17.5h1M290.0 76.2h1M189.0 17.3h1M328.7 95.3h1M250.8 55.4h1M227.9 40.8h1M297.7 79.9h1M299.2 79.5h1M260.5 59.3h1M261.8 58.7h1M313.7 87.6h1M286.2 73.0h1M308.3 84.6h1M261.2 58.4h1M185.5 16.3h1M243.2 48.2h1M185.4 19.6h1M324.0 94.1h1M291.7 75.1h1M176.9 10.3h1M249.8 54.1h1"/>
<path stroke="#a488aa" d="M315.5 89.9h1M230.1 41.0h1M313.6 89.2h1M283.3 71.8h1M163.4 3.0h1M163.1 5.0h1M163.0 4.8h1M327.4 96.5h1M310.4 86.1h1M282.9 69.5h1M277.9 68.4h1M189.6 19.6h1M241.8 47.7h1M208.8 30.6h1M158.3 1.7h1M278.1 70.8h1M335.2 98.6h1M261.6 59.7h1M273.7 65.0h1M165.1 6.7h1M211.6 32.4h1M157.8 4.2h1M320.7 90.5h1M159.7 4.3h1M196.4 22.3h1M265.0 62.0h1M278.2 66.6h1M245.4 49.8h1M208.9 30.0h1M171.4 8.2h1M266.5 61.2h1M336.2 99.1h1M243.3 48.2h1M200.6 25.6h1M324.6 93.4h1M209.5 29.9h1M301.3 81.0h1M330.4 95.6h1M204.0 27.7h1M305.3 82.8h1M256.5 55.2h1M222.9 38.7h1M212.7 32.1h1M159.3 1.8h1M321.8 92.6h1M249.5 52.2h1M202.6 26.4h1M243.1 49.9h1M318.0 103.3h1M334.9 103.4h1M328.5 99.8h1M326.0 107.2h1M323.9 106.5h1M330.6 96.6h1M327.9 92.1h1M329.3 100.0h1M326.4 99.4h1M325.2 106.1h1M329.8 107.7h1M327.7 101.2h1M318.9 96.0h1M325.6 95.1h1"/>
<path stroke="#704675" d="M221.3 39.4h1M213.9 34.1h1M330.1 95.1h1M258.0 56.2h1M201.4 26.2h1M257.2 56.2h1M184.7 16.8h1M166.3 7.2h1M186.3 17.9h1M289.6 74.1h1M252.1 54.0h1M233.5 42.6h1M221.5 39.2h1M285.0 74.3h1M239.5 48.5h1M299.1 79.1h1M303.4 83.2h1M314.8 88.3h1M198.9 24.0h1M238.1 45.9h1M206.4 28.9h1M294.6 77.0h1M199.7 23.9h1M283.5 70.5h1M224.1 38.7h1M163.6 6.9h1M313.0 87.3h1M236.2 46.3h1M235.6 44.8h1M285.4 72.7h1M200.3 25.9h1M245.3 52.0h1M230.9 44.1h1M315.4 88.3h1M297.2 78.6h1M270.3 63.9h1M169.8 8.8h1M252.2 59.1h1M182.2 15.1h1M282.6 71.9h1M187.5 16.7h1M269.0 63.7h1M245.6 51.7h1M271.9 65.3h1M203.6 27.7h1M252.2 53.8h1M317.9 92.1h1M317.8 91.0h1M293.8 81.0h1M231.4 41.6h1M177.0 12.1h1M319.4 90.1h1M185.3 17.2h1M241.7 48.3h1M169.9 8.5h1M157.2 0.5h1M216.0 35.9h1M207.9 29.2h1M163.7 7.8h1M302.7 80.6h1M244.4 49.6h1M294.1 77.4h1M334.6 91.7h1M333.7 106.1h1M330.5 110.6h1M331.5 107.4h1M334.4 113.6h1M333.4 100.5h1M327.7 112.6h1M327.1 103.6h1M321.0 102.9h1M323.5 116.1h1M321.8 111.4h1M331.0 107.2h1M334.0 99.6h1M321.7 115.2h1M327.7 95.0h1M317.6 101.9h1M327.2 103.3h1M332.9 93.0h1M329.8 94.7h1M328.8 108.9h1M323.6 94.1h1M322.3 92.8h1"/>
<path stroke="#66305f" d="M268.3 61.7h1M169.0 9.8h1M262.0 58.2h1M301.8 80.2h1M292.5 79.6h1M261.3 58.4h1M324.1 93.8h1M206.1 26.6h1M229.7 39.6h1M189.3 17.0h1M320.5 92.3h1M202.1 25.5h1M193.6 21.9h1M150.7 0.7h1M198.8 23.4h1M168.7 9.5h1M311.1 84.6h1M245.8 48.9h1M211.5 33.2h1M206.2 28.5h1M197.4 25.8h1M244.6 50.0h1M308.5 84.4h1M220.9 35.5h1M317.3 88.9h1M243.9 47.9h1M311.4 85.5h1M219.3 36.7h1M304.8 86.3h1M278.4 70.0h1M306.5 83.9h1M230.1 40.4h1M210.3 29.7h1M196.4 24.1h1M271.3 64.9h1M197.2 22.8h1M195.0 22.3h1M231.9 41.9h1M171.1 7.7h1M190.7 21.1h1M324.6 93.3h1M176.1 12.0h1M230.8 41.8h1M256.1 58.9h1M198.0 23.8h1M239.7 46.9h1M157.6 1.8h1M283.3 70.8h1M296.6 77.4h1M221.9 38.1h1M308.6 86.2h1M317.7 88.7h1M320.6 90.4h1M272.3 67.3h1M302.4 81.5h1M167.1 5.9h1M309.1 84.6h1M160.0 2.8h1M254.4 53.5h1M233.4 44.9h1M183.8 16.9h1M225.5 40.7h1M184.6 17.0h1M317.7 88.9h1M193.2 21.0h1M167.1 8.2h1M323.3 92.7h1M326.5 94.7h1M239.7 47.8h1M241.5 47.2h1M282.0 69.7h1M205.8 27.3h1M207.8 28.2h1M167.1 5.9h1M279.1 67.6h1M195.9 22.4h1M156.6 3.2h1M226.1 39.0h1M320.0 89.8h1M210.2 30.4h1M204.9 30.3h1M267.9 64.3h1M187.7 16.1h1M280.2 68.9h1M254.0 54.7h1M327.0 108.4h1M323.2 101.4h1M329.6 95.6h1M328.3 106.7h1M319.7 104.6h1M327.3 103.4h1M330.2 104.7h1M331.1 101.7h1M328.8 102.7h1M336.6 115.2h1M331.2 106.8h1M333.1 95.5h1M331.2 102.5h1M325.0 100.1h1M328.0 102.3h1M332.3 107.4h1M330.3 101.4h1M334.8 110.3h1M328.3 111.3h1M333.0 106.1h1M332.7 102.3h1"/>
<path stroke="#672854" d="M292.1 75.8h1M192.3 21.8h1M177.4 13.6h1M278.8 68.8h1M220.9 34.5h1M294.6 76.2h1M325.0 93.2h1M192.7 19.9h1M311.9 86.4h1M330.3 96.1h1M223.3 37.8h1M170.5 8.5h1M330.6 96.8h1M224.1 39.3h1M318.7 89.8h1M323.6 92.2h1M327.7 95.9h1M255.2 54.5h1M326.4 94.4h1M207.1 28.4h1M192.5 20.3h1M240.5 47.1h1"/>
<path stroke="#cf648c" d="M228.7 40.5h1M331.1 98.2h1M194.8 22.7h1M317.8 92.0h1M179.8 12.5h1M166.7 6.4h1M205.9 27.7h1M204.6 29.0h1M234.2 44.1h1M168.1 6.9h1M307.0 84.0h1M194.3 21.4h1M316.9 88.8h1M293.2 77.1h1M171.0 11.2h1M163.4 5.0h1M324.2 97.1h1M332.3 97.2h1M268.3 65.1h1M214.7 34.9h1M313.5 87.5h1M155.1 2.0h1M240.6 47.3h1M188.5 21.0h1M286.2 71.6h1M286.3 71.5h1M241.3 47.3h1M297.3 78.1h1M312.3 85.8h1M245.4 49.9h1M203.4 29.4h1M305.6 82.7h1M266.3 64.2h1M287.8 75.9h1M279.9 69.5h1M319.8 90.0h1M302.6 84.7h1M175.4 11.2h1M303.2 81.7h1M167.1 5.9h1M242.4 46.7h1M219.9 36.0h1M216.4 34.4h1M234.8 45.5h1M234.5 43.3h1M273.4 66.0h1M292.5 76.1h1M205.8 27.8h1M274.3 64.8h1M213.3 30.8h1M246.5 52.3h1M195.4 23.1h1M211.8 32.0h1M226.1 40.4h1M329.0 101.0h1M326.1 107.9h1M322.9 90.1h1M326.2 93.6h1M330.1 101.5h1M330.0 98.9h1M332.7 102.9h1"/>
<path stroke="#8a2e5a" d="M280.5 69.3h1M241.1 47.8h1M325.9 96.9h1M273.8 65.0h1M265.6 59.8h1M184.2 15.2h1M239.4 46.1h1M318.1 89.8h1M231.0 44.0h1M180.0 14.5h1M258.6 56.7h1M165.5 5.8h1M202.2 26.1h1M250.7 53.1h1M284.8 70.8h1M247.5 52.4h1M241.7 47.9h1M322.5 94.2h1M239.3 45.1h1M221.0 36.2h1M331.9 97.2h1M171.8 9.6h1M299.2 78.7h1M157.2 4.7h1M323.9 93.4h1M330.3 96.9h1M287.9 71.9h1M190.6 20.4h1M191.5 19.6h1M207.8 29.0h1M223.7 37.5h1M180.2 13.5h1M270.1 64.6h1M250.5 55.6h1M193.0 21.0h1M249.6 50.8h1M213.6 33.1h1M268.8 66.9h1M334.2 97.0h1M331.3 95.9h1M260.4 56.8h1M220.9 35.9h1M228.5 40.0h1M240.7 49.3h1M308.4 85.2h1M166.0 5.3h1M173.7 11.3h1M213.4 32.8h1M326.7 95.0h1M245.6 50.0h1M179.0 13.4h1M326.9 92.8h1M277.9 67.4h1M279.6 67.6h1M158.2 2.1h1M258.8 56.8h1M303.1 81.1h1M308.1 87.4h1M252.4 53.5h1M176.3 12.5h1M311.1 86.2h1M317.4 89.3h1M194.5 21.9h1M245.8 48.8h1M247.9 52.8h1M275.5 67.7h1M234.4 43.4h1M239.7 45.7h1M316.2 88.7h1M163.0 4.4h1M181.6 14.9h1M207.2 27.3h1M251.9 52.7h1M268.1 66.7h1M198.7 25.4h1M311.6 86.9h1M177.3 13.3h1M233.4 45.7h1M250.7 52.9h1M228.0 43.8h1M159.2 2.3h1M228.0 39.4h1M308.8 85.9h1M237.2 46.8h1M227.5 40.8h1M332.1 101.7h1M244.3 50.1h1M180.6 15.3h1M294.9 76.2h1M276.8 66.8h1M321.0 91.0h1M203.9 27.2h1M199.0 24.5h1M321.3 92.2h1M307.2 85.2h1M255.6 56.6h1M298.8 78.6h1M324.3 103.4h1M328.6 107.6h1M330.3 109.3h1M327.3 98.4h1M328.1 100.0h1M327.4 110.3h1M329.2 97.0h1M330.3 106.1h1M328.6 101.0h1M327.7 94.5h1M331.8 105.3h1M337.4 100.6h1M331.1 108.6h1M328.7 114.9h1M333.7 94.5h1M327.0 103.9h1M328.0 96.8h1M327.0 95.6h1"/>
<path stroke="#b62b54" d="M266.1 63.6h1M270.9 68.0h1M215.3 33.1h1M247.0 49.7h1M186.6 18.6h1M209.9 28.8h1M186.0 17.1h1M263.0 58.7h1M238.7 47.5h1M267.4 62.7h1M226.2 38.7h1M208.5 28.5h1M251.2 56.5h1M214.3 32.2h1M236.8 48.4h1M189.4 19.9h1M292.7 75.9h1M232.4 43.8h1M244.4 49.2h1M312.8 87.7h1M236.5 44.6h1M232.3 44.5h1M231.7 43.3h1M259.8 57.9h1M321.7 91.1h1M260.4 60.0h1M264.6 60.5h1M333.7 98.9h1M199.1 24.6h1M167.9 7.3h1M210.2 30.3h1M282.5 72.3h1M239.5 46.9h1M331.5 99.8h1M277.5 69.9h1M231.1 43.7h1M316.7 89.0h1M242.7 48.9h1M261.1 58.4h1M213.6 32.1h1M212.3 31.7h1M168.4 6.5h1M209.5 31.8h1M155.8 1.7h1M303.7 82.2h1M271.0 64.5h1M276.9 67.5h1M292.1 75.2h1M302.3 83.5h1M193.0 20.7h1M300.7 81.3h1M211.3 30.3h1M308.5 86.6h1M224.7 38.4h1M227.0 40.9h1M326.6 94.0h1M154.6 0.9h1M205.7 27.8h1M284.7 70.4h1M334.0 95.2h1M321.7 110.9h1M324.4 109.3h1M324.8 107.1h1M331.7 109.2h1M326.0 107.2h1M325.2 102.0h1M320.0 113.1h1M325.4 102.4h1M323.4 107.2h1M325.1 99.0h1M332.5 100.6h1"/>
<path stroke="#5f3060" d="M271.8 64.5h1M284.4 73.1h1M317.9 89.6h1M164.5 5.9h1M216.3 36.0h1M211.8 31.6h1M255.4 54.8h1M276.5 67.5h1M282.6 69.8h1M181.7 13.9h1M213.4 31.8h1M199.6 25.6h1M182.6 18.0h1M288.4 76.4h1M168.4 10.5h1M251.9 54.4h1M204.6 27.7h1M232.2 41.9h1M280.1 71.4h1M171.6 10.4h1M279.4 71.4h1M294.7 76.0h1M230.6 42.9h1M298.3 78.5h1M156.3 1.3h1M199.3 26.1h1M170.1 7.4h1M156.1 4.0h1M191.5 21.5h1M184.4 18.9h1M221.4 36.6h1M195.4 23.2h1M302.9 80.5h1M274.5 64.9h1M324.4 91.7h1M222.9 39.0h1M259.5 58.7h1M244.6 48.8h1M273.2 65.7h1M295.8 76.5h1M293.0 79.4h1M315.2 89.6h1M185.8 16.2h1M253.3 52.9h1M162.8 4.3h1M199.6 27.2h1M228.2 40.6h1M314.0 86.6h1M293.1 75.8h1M176.8 14.3h1M265.4 60.7h1M326.1 93.3h1M159.7 1.9h1M245.0 50.5h1M228.1 39.6h1M329.5 96.4h1M314.4 87.2h1M252.0 55.9h1M281.9 69.4h1M199.7 25.7h1M192.4 21.3h1"/>
<path stroke="#a42b57" d="M171.7 10.7h1M210.1 31.9h1M164.4 6.0h1M267.5 62.2h1M191.5 20.3h1M333.6 99.6h1M292.0 75.0h1M255.8 56.3h1M229.8 41.3h1M332.6 97.6h1M173.3 11.7h1M245.8 48.8h1M204.5 26.5h1M240.6 47.3h1M307.4 82.6h1M238.5 46.4h1M336.0 98.8h1M191.6 20.9h1M223.4 39.8h1M276.9 66.9h1M276.4 66.2h1M308.9 84.9h1M297.0 79.5h1M184.1 15.0h1M208.0 28.7h1M211.1 31.1h1M327.3 94.9h1M248.4 50.7h1M235.6 43.7h1M311.0 85.5h1M194.3 21.1h1M287.3 74.4h1M164.2 5.0h1M168.0 8.8h1M195.5 23.9h1M171.4 8.8h1M306.4 84.0h1M300.7 80.0h1M256.3 56.5h1M174.3 13.0h1M279.9 71.3h1M284.0 74.1h1M304.1 80.4h1M235.4 44.1h1"/>
<path stroke="#81224b" d="M215.0 36.8h1M242.5 50.1h1M202.9 27.4h1M282.9 72.6h1M266.5 61.3h1M231.3 41.8h1M222.7 36.8h1M190.2 18.7h1M297.0 77.9h1M184.4 17.1h1M234.4 43.6h1M321.0 91.4h1M170.1 11.3h1M329.4 98.7h1M259.6 59.2h1"/>
<path stroke="#75648e" d="M185.3 16.6h1M258.8 55.4h1M237.9 46.1h1M153.7 4.7h1M315.0 89.3h1M252.8 55.1h1M268.7 62.8h1M300.9 80.9h1M180.3 16.0h1M158.4 2.1h1M234.7 45.1h1M295.1 77.9h1M318.2 88.8h1M203.9 27.1h1M157.5 1.9h1M289.7 75.4h1M303.3 79.9h1M313.0 86.6h1M315.9 88.0h1M334.7 98.5h1M191.4 22.0h1M201.8 26.5h1M324.7 95.5h1M320.2 92.7h1M200.2 26.4h1M327.7 94.8h1M322.9 95.1h1M324.7 99.9h1M329.9 103.2h1M322.2 102.6h1M328.0 104.1h1M326.7 108.3h1M329.0 107.1h1M329.0 101.9h1M329.1 108.0h1M330.1 97.1h1M323.2 95.6h1M333.0 106.0h1M333.4 104.9h1M329.8 96.6h1M322.0 109.1h1M330.2 101.1h1M329.4 101.5h1M340.4 112.7h1M331.8 99.0h1M324.2 99.9h1M326.6 112.9h1M326.1 106.4h1M331.0 98.3h1M326.0 107.6h1M326.8 101.1h1M332.2 103.7h1"/>
<path stroke="#9b547f" d="M221.9 40.2h1M163.7 6.0h1M157.7 4.0h1M246.3 50.1h1M284.0 72.0h1M315.0 87.5h1M180.6 13.5h1M241.1 47.3h1M278.0 67.0h1M164.0 5.1h1M293.1 76.5h1M191.8 19.9h1M155.3 2.8h1M253.4 54.0h1M187.6 20.3h1M207.6 28.6h1M165.6 5.6h1M248.6 52.7h1M164.7 8.2h1M160.5 7.4h1M276.8 65.9h1M229.1 40.4h1M315.0 89.4h1M192.4 23.0h1M291.5 74.7h1M252.9 54.6h1M224.1 39.5h1M162.7 5.7h1M276.0 65.3h1M184.5 15.6h1M215.1 32.6h1M163.2 4.2h1M292.2 75.4h1M184.5 19.5h1M160.0 3.7h1M324.6 94.5h1M245.7 49.5h1M197.4 23.6h1M195.6 21.0h1M289.8 74.6h1M331.7 101.2h1M222.6 37.2h1M215.9 33.0h1M316.7 91.2h1M275.8 67.1h1M302.8 80.6h1M286.3 74.0h1M284.5 75.6h1M278.3 69.0h1M176.1 15.2h1M265.7 63.3h1M163.9 4.6h1M292.0 75.0h1M176.9 11.9h1M180.6 14.1h1M326.1 93.5h1M242.9 48.9h1M228.2 40.9h1M208.7 29.8h1M245.5 50.4h1M163.8 6.2h1M328.6 94.9h1M331.4 97.3h1M329.8 99.1h1M323.6 99.3h1M327.3 97.7h1M325.9 97.6h1M326.9 113.7h1M332.6 105.8h1M329.2 101.9h1M328.9 101.4h1M336.1 104.5h1M321.4 96.7h1M329.4 106.5h1M324.7 99.4h1M324.5 100.2h1M341.2 102.9h1M339.3 100.4h1M325.8 99.6h1"/>
<path stroke="#512c5c" d="M216.1 34.8h1M224.5 36.7h1M304.3 82.0h1M317.4 90.8h1M168.4 5.8h1M214.5 32.3h1M322.7 92.5h1M319.0 90.3h1M311.1 86.3h1M309.5 84.2h1M192.0 20.9h1M233.1 41.5h1M189.6 18.9h1M332.2 97.1h1M245.3 50.2h1M328.8 94.9h1M154.9 2.4h1M291.0 75.8h1M296.6 79.1h1M263.2 63.7h1M247.1 55.6h1M263.7 58.7h1M282.9 71.7h1M326.5 93.8h1"/>
<path stroke="#6e5181" d="M329.7 108.6h1M327.9 98.8h1M337.3 104.4h1M333.0 107.7h1M323.3 97.6h1M333.1 104.8h1M325.4 98.8h1M330.6 101.7h1M323.2 95.7h1M328.2 99.0h1M325.9 103.5h1M325.2 100.0h1M329.6 106.3h1M328.6 105.0h1M323.7 97.6h1M331.2 99.7h1M331.8 99.1h1M330.1 98.5h1M332.1 106.9h1M324.4 99.7h1M329.2 100.2h1M332.6 104.6h1M319.2 106.2h1M322.6 97.9h1M324.4 98.3h1M325.6 104.0h1M328.9 100.2h1M327.8 103.4h1M327.2 101.1h1M334.6 88.7h1"/>
<path stroke="#986795" d="M326.0 105.0h1M321.8 113.5h1M327.7 104.0h1M322.1 97.6h1M324.1 111.5h1M330.0 95.9h1M325.9 102.5h1M322.8 99.9h1M318.6 102.0h1M326.7 90.7h1M329.2 104.8h1M327.1 108.4h1M322.8 102.1h1"/>
<path stroke="#cb81ac" d="M333.2 104.5h1M328.0 98.6h1M330.8 115.9h1M326.2 103.2h1M331.2 114.1h1M326.2 108.0h1M332.5 104.6h1M331.3 99.9h1M323.5 100.9h1M330.7 97.8h1"/>
<path stroke="#181834" d="M100.2 267.9h1M75.2 258.0h1M155.8 295.6h1M40.9 237.3h1M128.4 283.0h1M13.4 223.1h1M125.9 277.1h1M61.9 250.1h1M74.8 256.9h1M185.1 306.4h1M177.5 301.3h1M16.7 223.5h1M255.2 343.0h1M8.1 223.7h1M118.1 278.5h1M223.1 328.7h1M140.3 285.1h1M121.9 278.5h1M21.6 229.5h1M59.9 247.6h1M111.9 273.9h1M143.3 289.3h1M58.3 249.6h1M127.6 280.9h1M38.7 237.5h1M104.8 269.6h1M238.3 335.4h1M127.5 280.2h1M70.0 254.3h1M27.3 232.7h1M90.4 264.5h1M28.3 231.7h1M105.1 266.8h1M79.9 257.9h1M5.6 221.5h1M52.6 244.7h1M6.6 220.1h1M247.4 340.3h1M172.1 302.7h1M81.6 259.0h1M240.7 334.0h1M84.2 258.4h1M27.3 231.8h1M66.3 253.7h1M25.5 231.4h1M6.6 221.7h1M217.2 323.9h1M243.7 339.1h1M127.8 278.9h1M188.8 312.1h1M22.7 232.2h1M160.4 298.1h1M16.4 226.8h1M200.5 312.8h1M250.3 340.6h1M163.2 300.0h1M121.2 279.1h1M42.9 239.6h1M106.1 271.6h1M38.4 239.6h1M110.2 272.0h1M221.4 328.3h1M161.6 295.7h1M84.5 262.4h1"/>
<path stroke="#212144" d="M122.1 278.7h1M231.0 330.4h1M230.7 330.6h1M31.1 235.2h1M202.2 319.6h1M134.3 284.7h1M132.2 283.5h1M168.4 297.6h1M219.0 326.2h1M81.3 260.0h1M154.4 291.2h1M249.3 342.1h1M21.3 231.6h1M239.9 337.8h1M14.1 224.5h1M53.6 246.5h1M214.1 319.7h1M184.1 309.8h1M93.2 264.8h1M51.0 243.6h1M164.1 301.1h1M4.0 221.5h1M149.4 292.8h1M62.1 251.7h1M111.9 272.8h1M80.8 260.0h1M136.7 287.5h1M72.5 251.1h1M208.9 317.5h1M165.7 299.9h1M176.7 306.9h1M226.3 329.6h1M210.0 314.2h1M18.3 229.3h1M14.1 225.3h1M28.5 234.9h1M125.2 282.4h1M177.0 304.6h1M104.6 269.2h1M168.1 298.9h1M220.8 327.2h1M118.0 275.4h1M176.5 306.6h1M107.6 266.8h1M203.7 317.5h1M0.7 221.4h1M198.3 313.3h1M63.6 252.4h1M174.2 305.2h1M170.8 302.2h1M176.4 305.9h1M163.7 296.6h1M234.3 332.6h1M170.2 297.9h1M13.4 225.2h1M1.7 219.5h1M161.9 293.7h1M185.0 305.6h1M215.9 323.6h1M105.5 271.5h1M7.7 224.6h1M140.8 286.8h1M115.9 277.1h1M190.8 310.7h1M55.9 242.7h1M105.9 270.2h1M17.4 223.7h1M248.3 341.6h1M240.7 337.1h1M204.9 316.7h1M62.7 248.5h1M142.3 288.8h1M233.0 333.9h1M175.6 305.1h1M239.4 337.0h1M43.3 241.6h1"/>
<path stroke="#282852" d="M115.8 277.4h1M133.0 278.6h1M122.4 275.7h1M190.6 310.5h1M10.4 224.5h1M166.8 300.5h1M182.1 309.3h1M253.8 342.5h1M4.1 223.3h1M243.0 338.3h1M234.6 332.3h1M132.3 283.6h1M183.1 309.5h1M101.3 270.1h1M4.8 220.4h1M154.3 292.9h1M191.3 314.2h1M221.1 328.2h1M239.8 335.5h1M190.1 310.1h1M242.3 338.2h1M64.9 252.1h1M107.6 270.0h1M60.6 244.0h1M248.8 340.6h1M223.2 329.3h1M51.1 245.7h1M47.5 243.3h1M252.1 343.5h1M189.7 313.2h1M167.5 294.6h1M208.6 321.9h1M24.4 230.3h1M188.6 309.6h1M138.2 285.1h1M87.1 261.2h1M178.8 306.5h1M68.4 254.0h1M246.1 340.5h1"/>
<path stroke="#242244" d="M101.8 266.8h1M65.8 252.2h1M204.2 319.8h1M101.9 268.4h1M212.1 319.4h1M186.0 310.7h1M235.6 331.9h1M43.3 241.7h1M43.5 241.8h1M11.1 226.4h1M219.5 328.0h1M4.1 223.4h1M27.3 231.3h1M147.5 292.0h1M247.5 341.1h1M201.4 313.5h1M156.6 296.5h1M169.5 303.8h1M100.3 269.8h1M86.0 262.4h1M227.3 328.4h1M220.9 328.7h1M183.6 308.8h1M42.2 239.3h1M64.7 252.2h1M103.3 268.5h1M118.3 278.0h1M103.9 267.8h1M67.8 251.2h1M56.3 245.2h1M144.0 288.5h1M84.9 262.7h1M144.8 289.5h1M188.7 311.7h1M147.5 289.8h1M169.0 302.2h1M144.3 290.9h1"/>
<path stroke="#29284f" d="M220.5 326.5h1M183.6 309.9h1M251.1 342.8h1M190.9 308.9h1M15.0 225.3h1M231.6 331.8h1M209.8 322.7h1M96.2 267.0h1M5.0 220.8h1M153.3 292.1h1M61.5 249.9h1M112.4 275.6h1M236.4 332.8h1M236.9 334.9h1M196.0 315.7h1M174.2 304.1h1M37.7 236.6h1M113.7 273.4h1M205.8 319.2h1M2.9 220.2h1M9.2 225.2h1M134.3 281.3h1M5.8 221.0h1M125.3 281.7h1M41.3 240.4h1M248.4 338.7h1M231.9 331.9h1M30.6 235.2h1M98.1 265.4h1M22.7 230.0h1M43.4 237.6h1M176.1 304.0h1M230.5 332.1h1M19.1 229.8h1M139.6 288.3h1M174.2 303.2h1"/>
<path stroke="#2d2c59" d="M81.0 257.1h1M212.1 323.3h1M105.7 272.6h1M200.8 315.4h1M121.9 280.2h1M7.3 223.5h1M36.0 236.1h1M16.7 225.8h1M56.1 246.5h1M103.2 269.3h1M178.8 306.9h1M147.7 290.4h1M130.6 284.0h1M146.3 292.0h1M224.9 330.3h1M4.3 223.6h1M50.6 245.7h1M61.5 248.9h1M16.1 228.0h1M174.8 301.1h1M241.6 337.0h1M56.0 246.8h1M27.3 234.2h1M171.7 300.9h1M221.0 328.8h1"/>
<path stroke="#46467a" d="M258.3 317.2h1M250.2 211.7h1M359.2 284.9h1M54.4 14.8h1M372.8 188.0h1M81.5 271.8h1M130.0 89.1h1M330.1 184.3h1M337.6 82.8h1M127.3 223.1h1M332.8 92.2h1M93.0 221.3h1M180.8 97.0h1M366.4 329.0h1M245.8 242.5h1M282.1 197.1h1M51.2 320.9h1M72.9 47.9h1M87.8 41.1h1M321.1 76.2h1M85.6 108.0h1M201.1 118.1h1M197.9 52.7h1M226.8 199.6h1M219.7 164.7h1"/>
</g></g>
<g fill="none" stroke-width="1.1">
<path stroke="#ffffff" d="M212.4 89.7h1M196.2 90.0h1M211.4 87.0h1M236.0 81.6h1M242.6 87.6h1M213.1 90.9h1M209.8 85.3h1M212.3 87.2h1M196.7 87.0h1M257.1 90.7h1M229.4 88.5h1M206.4 87.3h1M206.3 89.1h1M216.0 82.0h1M224.4 92.2h1M232.4 92.5h1M253.8 86.4h1M209.0 82.8h1M229.1 89.6h1M219.5 83.7h1M229.8 85.6h1M246.1 82.6h1M241.6 90.4h1M225.2 90.2h1M252.2 88.6h1M251.9 88.9h1M232.8 91.6h1M247.7 89.5h1M250.6 86.2h1M243.2 91.3h1M226.0 83.9h1M226.6 87.1h1M238.2 85.7h1M201.2 87.5h1M221.3 88.8h1M198.6 89.7h1M226.5 82.1h1M250.7 87.7h1M214.2 90.3h1M249.3 89.0h1M243.6 90.5h1M221.1 85.7h1M242.5 91.8h1M259.4 89.2h1M201.2 84.0h1M210.2 82.7h1M230.9 81.5h1M232.6 82.4h1M205.8 81.9h1M238.7 83.9h1M250.5 82.5h1M239.1 88.5h1M264.4 88.0h1M230.3 82.4h1M190.1 87.6h1M206.1 83.2h1M264.1 86.2h1M200.2 87.7h1M264.7 90.4h1M232.4 90.8h1M232.6 84.9h1M206.8 86.1h1M187.7 86.0h1M245.3 87.6h1M155.5 93.5h1M181.3 84.1h1M178.8 91.9h1M173.2 91.6h1M161.1 94.9h1M167.2 90.2h1M179.1 89.6h1M178.4 82.7h1M189.3 88.7h1M180.9 91.3h1M175.7 91.0h1M169.8 93.9h1M249.6 86.8h1M228.1 86.4h1M238.2 87.6h1M181.9 109.9h1M157.4 103.5h1M203.0 95.1h1M178.0 107.2h1M151.5 120.5h1M193.5 98.0h1M253.2 91.4h1M259.9 96.0h1M154.9 104.5h1M204.7 88.3h1M183.7 121.4h1M188.2 97.1h1M220.1 88.7h1M206.4 83.6h1M193.6 98.5h1M187.0 83.8h1M152.9 111.0h1M221.1 86.9h1M216.7 88.9h1M235.3 109.2h1M181.7 123.4h1M202.4 115.8h1M227.1 86.7h1M167.9 109.2h1M226.0 109.8h1M201.1 85.9h1M186.9 98.1h1M186.3 113.3h1M211.3 83.2h1M212.1 107.9h1M152.6 109.0h1M217.2 94.9h1M154.9 95.2h1M153.6 122.2h1M169.4 119.8h1M201.9 98.6h1M220.0 87.1h1M174.2 88.5h1M155.6 115.9h1M266.9 89.3h1M195.3 125.7h1M151.7 108.1h1M148.1 122.6h1M151.4 100.9h1M168.1 108.5h1M156.1 114.5h1M154.2 122.0h1M128.0 115.0h1M122.0 125.5h1M131.7 110.2h1M140.0 129.5h1M144.7 113.4h1M135.5 128.8h1M132.8 106.7h1M169.4 116.5h1M152.2 108.8h1M166.9 102.2h1M136.0 107.2h1M135.2 107.5h1M148.2 127.8h1M147.5 109.2h1M142.4 122.0h1M161.7 115.6h1M135.9 119.4h1M157.1 98.3h1M114.6 140.1h1M148.6 123.4h1M123.9 142.7h1M126.8 138.2h1M129.6 150.1h1M113.7 119.2h1M128.2 127.2h1M121.0 130.0h1M140.5 125.8h1M134.6 119.9h1M119.4 121.4h1M143.7 133.0h1M109.1 150.5h1M114.3 139.0h1M106.8 147.9h1M119.4 136.2h1M110.8 139.8h1M117.1 133.4h1M108.8 138.0h1M116.8 130.5h1M115.3 154.8h1M118.7 128.9h1M108.6 124.5h1M111.8 123.4h1M108.7 145.1h1M87.6 154.1h1M111.9 154.1h1M107.5 154.3h1M107.3 152.0h1M86.8 156.2h1M90.9 161.5h1M108.8 168.1h1M112.7 167.6h1M90.0 159.4h1M110.5 159.9h1M98.7 164.2h1M109.0 155.6h1M93.8 154.0h1M101.7 163.5h1M104.1 171.8h1M98.1 171.2h1M106.9 173.1h1M107.7 172.5h1M103.1 154.6h1M114.1 161.0h1M106.7 151.6h1M94.8 150.1h1M106.2 162.4h1M109.9 159.1h1M114.1 154.0h1M95.2 175.1h1M110.7 165.9h1M92.8 161.6h1M86.9 162.7h1M83.6 168.7h1M107.3 158.6h1M98.1 151.4h1M106.7 164.4h1M103.6 178.4h1M97.2 167.8h1M95.3 169.4h1M99.7 165.9h1M89.5 162.7h1M114.9 162.9h1M115.3 164.0h1M107.6 152.3h1M110.5 153.4h1"/>
<path stroke="#f6f6f6" d="M226.9 91.0h1M223.1 87.5h1M204.3 87.3h1M252.8 83.6h1M195.6 85.5h1M216.1 84.9h1M258.8 85.2h1M263.4 87.8h1M210.6 88.6h1M209.0 82.7h1M243.8 88.2h1M256.5 86.4h1M251.2 83.5h1M211.0 81.2h1M251.9 88.6h1M186.8 86.5h1M239.0 88.4h1M199.2 85.9h1M216.0 90.3h1M232.0 83.4h1M187.3 85.3h1M222.6 89.9h1M206.1 82.5h1M263.4 90.5h1M250.1 87.2h1M206.5 83.3h1M208.3 88.1h1M217.2 88.8h1M226.6 81.0h1M251.0 86.6h1M266.4 84.2h1M229.7 84.1h1M243.8 82.8h1M257.2 85.4h1M255.8 88.3h1M196.1 89.2h1M226.0 86.4h1M233.6 87.7h1M239.7 88.4h1M233.5 83.0h1M260.0 86.4h1M217.1 87.5h1M234.5 89.8h1M249.3 86.7h1"/>
<path stroke="#d6d6e0" d="M239.2 86.6h1M261.8 85.8h1M207.4 89.4h1M219.0 81.3h1M258.7 87.2h1M232.6 87.3h1M216.7 87.2h1M202.8 86.7h1M214.4 84.6h1M230.8 91.4h1M223.9 85.2h1M257.3 85.5h1M228.6 90.7h1M214.2 86.2h1M252.1 85.5h1M258.3 86.1h1M181.4 87.4h1M248.5 87.9h1M242.4 89.2h1M209.9 89.4h1M198.2 87.7h1M249.8 84.8h1M235.1 83.6h1M250.3 91.4h1M250.1 85.8h1M242.3 85.4h1M203.9 90.4h1M194.4 86.2h1M241.9 84.5h1M205.5 86.3h1M213.5 88.8h1M244.9 85.2h1M194.7 85.3h1M249.1 86.8h1M221.6 87.7h1M193.9 90.5h1M209.5 88.0h1M216.3 81.4h1M253.0 85.8h1M263.2 84.7h1M203.6 89.8h1M197.8 88.3h1M181.0 87.4h1M176.7 84.1h1M164.0 86.1h1M161.8 86.8h1M180.6 88.3h1M163.0 92.9h1M167.4 85.1h1M185.5 87.5h1M172.7 86.6h1M181.3 88.8h1M165.9 92.7h1M197.8 112.2h1M195.5 85.6h1M238.6 106.7h1M214.7 99.1h1M244.3 104.3h1M186.7 98.2h1M153.4 104.5h1M184.8 113.6h1M243.4 103.3h1M214.4 107.3h1M205.8 93.4h1M228.7 103.4h1M233.8 84.2h1M197.2 84.0h1M248.8 96.7h1M192.0 87.7h1M243.0 105.4h1M183.2 101.3h1M184.5 117.8h1M158.3 110.1h1M238.1 91.4h1M174.1 90.6h1M196.2 113.1h1M255.3 91.6h1M171.7 95.8h1M248.8 104.2h1M233.6 86.0h1M196.7 83.1h1M165.6 88.2h1M214.6 87.9h1M164.3 96.0h1M201.2 102.0h1M248.6 99.7h1M257.6 93.7h1M149.8 117.1h1M228.0 90.2h1M266.7 89.7h1M234.0 108.4h1M163.4 106.4h1M224.0 86.9h1M166.6 90.1h1M181.6 96.5h1M194.7 102.8h1M161.5 109.3h1M152.1 93.8h1M170.3 92.7h1M229.8 118.5h1M210.2 106.4h1M236.9 90.1h1M227.9 95.8h1M150.8 119.3h1M158.4 92.9h1M180.3 104.6h1M222.1 111.3h1M222.3 113.0h1M136.2 108.4h1M145.0 121.8h1M126.9 114.9h1M120.2 129.0h1M158.9 114.3h1M172.8 99.4h1M139.5 107.4h1M156.4 117.6h1M163.9 103.3h1M164.2 118.0h1M122.8 118.0h1M169.8 108.8h1M154.9 118.1h1M177.7 101.5h1M163.6 115.3h1M139.1 117.6h1M137.4 129.2h1M141.1 115.6h1M175.5 105.5h1M174.2 113.9h1M128.4 132.3h1M155.6 115.7h1M124.4 121.9h1M136.2 106.9h1M137.8 120.0h1M120.4 135.5h1M133.3 129.1h1M130.6 145.9h1M146.6 139.8h1M127.3 127.6h1M125.1 127.2h1M128.6 134.3h1M147.2 150.7h1M143.9 122.5h1M136.7 129.6h1M124.3 139.9h1M125.6 134.6h1M137.8 148.4h1M125.4 143.9h1M140.5 146.9h1M124.8 137.1h1M132.2 147.4h1M112.3 134.5h1M107.0 147.5h1M109.8 148.4h1M108.6 147.9h1M117.9 125.2h1M112.2 139.6h1M119.0 131.6h1M121.3 133.6h1M107.2 143.5h1M108.3 141.0h1M105.7 140.6h1M107.9 172.1h1M107.1 163.1h1M109.0 174.4h1M87.3 155.6h1M88.9 150.0h1M99.7 171.1h1M110.0 168.1h1M90.8 174.6h1M108.6 164.3h1M103.2 154.9h1M93.4 153.0h1M108.4 164.5h1M113.6 161.5h1M113.3 174.6h1M98.3 148.6h1M97.8 164.2h1M114.7 162.9h1M88.4 171.3h1M98.4 153.6h1M99.3 181.2h1M94.3 177.5h1M92.3 169.4h1M99.6 172.5h1M98.4 156.0h1M109.4 154.6h1M104.0 177.4h1M101.0 159.9h1M110.7 172.0h1"/>
<path stroke="#9c9aa0" d="M231.8 84.4h1M211.0 85.3h1M258.6 89.0h1M193.5 87.5h1M195.1 88.6h1M241.5 89.7h1M242.9 86.8h1M226.3 89.0h1M272.6 86.1h1M260.8 84.9h1M227.7 82.3h1M252.8 91.3h1M205.4 88.7h1M222.2 83.9h1M236.3 86.6h1M255.5 90.1h1M158.2 89.1h1M184.4 85.0h1M169.0 87.3h1M166.5 90.0h1M183.3 82.7h1M190.1 84.8h1M173.3 93.1h1M182.4 88.5h1M170.9 87.4h1M250.6 103.6h1M235.7 103.5h1M205.3 83.7h1M177.2 116.1h1M214.9 105.4h1M205.7 114.9h1M185.1 89.3h1M169.5 108.6h1M192.4 130.3h1M193.1 92.7h1M199.3 91.4h1M177.9 110.6h1M207.0 106.3h1M203.8 108.8h1M153.1 99.3h1M164.7 118.9h1M208.5 90.7h1M243.2 108.5h1M187.0 109.3h1M230.3 96.3h1M230.2 84.8h1M259.7 97.8h1M207.4 111.2h1M197.3 102.5h1M163.9 101.3h1M168.0 113.6h1M226.0 86.5h1M177.1 96.9h1M208.1 83.5h1M243.8 88.8h1M195.5 102.5h1M162.6 94.3h1M208.1 95.2h1M198.4 105.7h1M173.5 120.7h1M183.9 131.3h1M151.1 108.3h1M175.3 106.8h1M164.7 97.6h1M129.4 131.9h1M159.1 121.4h1M163.5 101.2h1M161.0 119.8h1M142.2 113.9h1M164.5 106.8h1M138.6 115.7h1M128.6 112.1h1M161.1 107.4h1M129.9 123.4h1M173.5 112.1h1M138.9 101.9h1M149.8 114.7h1M140.7 107.2h1M146.9 107.6h1M147.2 128.1h1M134.7 115.8h1M139.8 122.9h1M122.9 129.1h1M133.6 130.0h1M146.0 102.3h1M129.1 147.8h1M130.5 126.4h1M150.0 120.2h1M116.4 129.9h1M125.0 134.9h1M130.3 119.0h1M141.6 146.4h1M125.6 134.2h1M143.3 133.8h1M133.7 127.4h1M116.5 138.6h1M123.3 123.8h1M128.2 133.5h1M150.7 130.4h1M127.4 130.8h1M119.1 129.8h1M144.6 134.5h1"/>
<path stroke="#c4ba91" d="M218.3 90.2h1M263.9 85.9h1M226.6 84.4h1M248.1 82.9h1M263.4 89.6h1M232.9 90.2h1M226.9 90.9h1M238.2 91.2h1M224.9 85.3h1M220.2 87.7h1M190.5 85.4h1M229.2 90.3h1M210.3 85.2h1M253.0 91.6h1M268.9 86.1h1M215.7 81.8h1M200.9 86.2h1M234.6 87.5h1M218.4 83.0h1M189.7 83.5h1M155.9 94.3h1M180.5 82.8h1M152.6 93.4h1M177.1 87.3h1M164.3 92.8h1M184.0 82.4h1M158.2 94.9h1M186.0 88.0h1M214.6 86.9h1M218.2 106.2h1M197.0 83.1h1M267.3 84.7h1M230.5 84.5h1M225.8 105.3h1M247.2 86.1h1M173.7 101.6h1M213.3 119.9h1M211.3 115.0h1M176.0 94.2h1M179.2 85.1h1M207.0 90.8h1M173.4 113.8h1M222.6 91.9h1M159.1 99.4h1M203.4 107.2h1M256.5 95.7h1M213.2 130.9h1M193.7 96.3h1M175.0 94.6h1M253.4 97.6h1M151.8 109.9h1M251.8 93.0h1M171.7 127.1h1M161.1 108.6h1M257.2 86.1h1M209.5 88.9h1M212.4 112.6h1M173.4 107.6h1M182.8 108.1h1M227.4 116.3h1M246.7 100.1h1M206.2 119.0h1M247.8 104.5h1M151.9 96.9h1M168.6 100.8h1M149.8 106.4h1M193.0 110.1h1M173.8 99.6h1M175.1 101.7h1M217.4 95.4h1M225.1 100.4h1M222.9 116.0h1M206.4 95.5h1M218.8 93.2h1M178.8 114.0h1M256.0 99.7h1M161.9 122.7h1M206.0 88.0h1M188.9 89.0h1M267.4 85.9h1M157.1 103.1h1M225.3 115.2h1M237.1 88.2h1M224.4 112.7h1M160.0 112.9h1M203.7 99.9h1M237.7 86.5h1M264.3 95.0h1M169.0 113.5h1M168.5 112.5h1M163.9 88.9h1M193.1 122.6h1M184.4 84.7h1M234.4 89.5h1M218.1 117.8h1M188.5 101.4h1M221.5 93.1h1M144.3 111.4h1M148.3 104.5h1M130.9 119.5h1M148.4 129.3h1M152.9 118.8h1M154.1 125.8h1M160.3 120.7h1M144.1 99.8h1M134.2 122.5h1M137.9 129.9h1M174.9 107.8h1M160.8 106.4h1M153.5 130.0h1M138.9 115.8h1M167.7 114.0h1M156.4 120.8h1M139.3 130.0h1M160.0 110.1h1M128.5 114.8h1M180.8 128.5h1M169.9 121.6h1M178.6 114.7h1M246.8 103.5h1M206.6 130.3h1M189.0 124.4h1"/>
<path stroke="#e8dc9c" d="M221.0 89.9h1M241.3 84.4h1M206.7 82.3h1M196.9 89.5h1M217.8 90.0h1M202.9 84.8h1M242.0 85.8h1M210.8 87.5h1M201.3 89.4h1M224.7 90.7h1M239.7 83.8h1M234.0 86.5h1M194.6 90.2h1M210.7 91.5h1M201.7 82.5h1M254.9 83.1h1M253.3 82.7h1M238.6 90.0h1M195.9 85.7h1M218.2 88.5h1M201.4 84.6h1M170.3 94.7h1M168.9 94.3h1M156.0 91.0h1M189.0 84.4h1M184.2 85.2h1M168.1 90.8h1M182.2 88.1h1M177.8 85.8h1M171.9 86.8h1M156.5 92.9h1M173.8 82.5h1M166.8 118.5h1M215.2 127.6h1M192.8 109.2h1M223.2 123.0h1M261.5 96.8h1M177.8 99.2h1M149.4 121.0h1M163.8 101.0h1M233.3 94.2h1M167.4 102.7h1M205.1 84.8h1M225.8 116.4h1M239.1 113.2h1M240.9 105.1h1M221.5 125.3h1M158.9 101.2h1M235.6 103.6h1M211.8 104.8h1M195.1 110.0h1M255.6 90.2h1M177.7 108.5h1M202.7 93.4h1M196.7 83.7h1M208.3 99.1h1M231.9 85.7h1M173.7 91.6h1M208.9 83.9h1M257.7 86.0h1M218.6 83.0h1M191.7 125.9h1M237.5 109.0h1M161.2 108.6h1M154.2 93.9h1M207.9 100.5h1M162.4 124.2h1M158.1 106.9h1M249.7 106.2h1M213.3 119.3h1M175.2 109.0h1M222.3 96.9h1M189.2 106.1h1M193.5 122.1h1M222.9 122.5h1M196.0 92.8h1M199.3 97.8h1M171.9 129.5h1M196.1 110.1h1M256.5 91.9h1M179.0 88.6h1M159.9 98.1h1M225.8 94.2h1M186.7 98.7h1M171.7 93.3h1M235.6 84.1h1M153.9 116.5h1M138.1 124.3h1M133.3 107.9h1M132.9 124.0h1M131.5 116.0h1M145.3 113.0h1M160.0 99.3h1M152.7 113.3h1M158.7 100.3h1M149.5 109.6h1M136.8 126.3h1M158.6 114.5h1M136.7 132.7h1M167.9 109.0h1M161.3 94.8h1M162.2 121.2h1M131.6 121.6h1M140.3 128.3h1M153.4 103.5h1M162.1 134.3h1M227.7 109.1h1M172.8 165.8h1M185.8 112.7h1M212.5 129.2h1"/>
<path stroke="#d2bc78" d="M187.0 89.7h1M249.4 92.1h1M259.3 86.7h1M228.2 91.6h1M225.7 86.5h1M271.1 85.9h1M214.2 91.5h1M197.0 88.3h1M215.7 89.3h1M244.6 87.2h1M218.4 85.1h1M256.8 88.8h1M195.9 88.5h1M265.4 85.3h1M223.9 91.8h1M255.7 89.6h1M225.0 90.4h1M258.3 88.8h1M205.9 84.1h1M265.6 88.8h1M216.9 89.6h1M214.3 84.9h1M200.6 82.6h1M201.0 83.1h1M197.3 84.8h1M203.6 90.9h1M196.3 86.9h1M218.8 122.0h1M166.8 92.9h1M221.8 99.8h1M233.9 105.4h1M170.4 97.4h1M187.5 92.8h1M207.5 83.7h1M223.2 108.3h1M204.1 132.6h1M183.5 92.9h1M193.2 96.9h1M190.0 126.9h1M246.4 95.4h1M237.7 94.3h1M211.9 131.3h1M183.2 115.9h1M225.4 97.1h1M193.6 84.2h1M227.5 114.2h1M186.6 126.8h1M176.3 108.9h1M190.1 129.0h1M201.5 86.8h1M255.9 84.9h1M248.3 92.7h1M189.2 124.6h1M223.2 118.3h1M176.8 95.9h1M177.5 116.5h1M173.9 96.4h1M160.0 106.2h1M167.1 122.4h1M152.6 118.1h1M220.5 106.7h1M246.9 94.0h1M233.1 84.6h1M195.7 108.4h1M169.0 106.5h1M170.0 126.9h1M230.3 120.4h1M222.0 114.3h1M215.7 129.1h1M199.0 96.2h1M221.8 97.5h1M208.6 118.0h1M236.2 99.7h1M226.0 119.4h1M227.2 86.8h1M189.7 90.3h1M217.5 125.6h1M190.2 106.1h1M185.0 100.1h1M185.1 111.3h1M184.8 86.9h1M168.2 97.0h1M150.3 102.3h1M176.0 94.6h1M223.1 88.2h1M240.4 86.3h1M192.4 120.8h1M168.8 126.7h1M164.0 125.4h1M157.4 92.6h1M262.9 87.0h1M206.1 103.9h1M197.1 104.2h1M219.2 84.9h1M206.0 91.8h1M187.6 88.5h1M240.7 109.4h1M189.8 122.9h1M151.6 164.6h1M229.9 118.1h1M239.3 107.8h1M174.7 126.0h1M220.7 107.7h1"/>
<path stroke="#ccc9bb" d="M234.9 84.6h1M205.9 89.8h1M209.6 85.3h1M235.1 90.9h1M198.8 82.9h1M188.9 86.2h1M214.7 92.1h1M239.3 82.0h1M215.9 90.2h1M247.1 84.6h1M236.9 84.6h1M258.0 87.4h1M190.4 84.7h1M251.6 88.3h1M219.9 90.9h1M214.6 82.2h1M238.7 90.4h1M232.7 88.7h1M210.1 90.0h1M219.0 88.9h1M201.2 84.4h1M248.2 88.2h1M212.8 84.0h1M185.3 84.2h1M175.9 91.3h1M155.2 88.7h1M188.9 84.1h1M168.4 91.1h1M171.4 93.9h1M161.5 88.0h1M161.5 95.4h1M155.5 95.8h1M161.7 94.9h1M165.7 95.1h1M170.5 88.5h1M182.5 85.0h1M187.5 83.8h1M155.8 93.3h1M181.1 84.4h1M184.4 87.8h1M184.4 85.4h1M178.0 89.9h1M166.0 87.6h1M181.7 87.4h1M218.2 91.9h1M226.4 100.5h1M197.7 99.1h1M189.2 86.6h1M150.4 103.1h1M231.5 103.2h1M231.8 100.4h1M171.6 115.0h1M204.6 97.0h1M206.5 85.8h1M256.5 93.5h1M151.8 108.2h1M217.6 88.4h1M150.6 107.5h1M173.4 118.1h1M182.9 85.8h1M202.2 93.1h1M172.3 104.9h1M269.0 91.1h1M225.6 105.8h1M211.5 96.9h1M169.4 108.2h1M193.5 82.5h1M163.7 105.6h1M194.6 88.3h1M257.0 85.0h1M219.5 88.9h1M221.8 95.7h1M154.0 114.2h1M250.4 93.4h1M166.4 116.7h1M160.4 94.5h1M230.0 98.4h1M173.3 92.7h1M226.1 96.3h1M154.1 92.8h1M172.6 112.0h1M191.7 107.2h1M190.5 110.6h1M207.4 107.3h1M165.4 91.5h1M205.1 118.6h1M258.7 86.9h1M205.1 115.6h1M187.5 116.4h1M265.4 91.9h1M170.4 98.0h1M222.7 109.1h1M207.4 106.2h1M184.2 93.1h1M177.3 94.8h1M230.5 83.9h1M203.4 94.1h1M259.7 88.9h1M239.9 107.3h1M223.2 116.2h1M204.8 113.1h1M132.4 115.3h1M147.0 102.9h1M151.7 108.9h1M141.3 115.4h1M154.5 105.0h1M164.1 103.3h1M146.1 111.0h1M161.9 111.3h1M163.4 104.1h1M161.9 111.0h1M161.0 96.2h1M135.7 112.6h1M170.7 99.2h1M131.7 128.8h1M171.9 103.9h1M146.4 98.2h1M128.6 129.8h1M156.5 120.6h1M161.5 121.7h1M135.5 129.1h1M155.7 120.3h1M152.4 113.3h1M143.4 124.6h1M140.0 103.3h1M149.9 108.6h1M135.9 149.9h1M126.7 137.5h1M139.3 131.0h1M135.4 127.8h1M149.0 133.6h1M152.8 125.8h1M137.1 130.9h1M144.3 140.8h1M120.6 146.1h1M129.7 130.5h1M126.2 136.8h1M126.7 139.6h1"/>
<path stroke="#cfcfd9" d="M225.8 92.0h1M259.4 85.2h1M256.8 84.4h1M257.7 88.6h1M231.1 90.8h1M218.6 84.6h1M256.2 83.8h1M246.7 89.5h1M234.1 90.7h1M235.1 81.6h1M197.7 83.6h1M192.9 84.4h1M252.5 89.3h1M227.2 92.4h1M217.0 87.9h1M202.8 84.4h1M233.5 92.0h1M212.9 89.1h1M217.8 85.1h1M248.6 83.5h1M205.0 87.2h1M250.2 82.9h1M208.9 83.6h1M217.3 89.7h1M265.6 89.2h1"/>
<path stroke="#f2eed0" d="M235.6 87.9h1M205.6 88.3h1M223.2 84.7h1M223.8 83.5h1M205.6 86.0h1M242.3 81.8h1M213.3 90.2h1M213.0 90.7h1M212.7 80.9h1M225.0 88.1h1M243.4 89.5h1M248.6 85.6h1M224.1 86.5h1M226.6 87.7h1M198.4 82.6h1M223.2 83.6h1M205.0 83.0h1M232.1 86.7h1M259.4 89.0h1M198.1 85.0h1M257.4 88.9h1M200.9 83.3h1M238.6 85.3h1M211.2 84.8h1M233.4 83.5h1M251.4 91.3h1M233.0 90.9h1M214.1 83.6h1M247.8 82.5h1M221.4 87.6h1M250.1 91.4h1M191.2 85.8h1M185.7 86.2h1M212.0 86.3h1M213.0 83.7h1M234.6 92.3h1M231.3 87.1h1M234.6 85.7h1M191.2 84.0h1M217.3 85.9h1M227.3 84.9h1M165.7 95.2h1M183.9 85.7h1M155.7 95.0h1M178.5 90.3h1M175.7 83.4h1M180.6 88.4h1M184.1 90.5h1M164.4 90.4h1M162.0 86.9h1M172.9 85.4h1M170.6 89.7h1M159.5 92.9h1M169.1 89.4h1M182.1 119.2h1M189.7 121.0h1M201.9 89.6h1M177.2 91.5h1M258.8 87.4h1M233.6 113.4h1M229.2 102.8h1M196.8 106.3h1M219.7 104.0h1M196.0 85.7h1M251.9 87.7h1M182.2 101.9h1M190.2 95.4h1M173.8 116.2h1M169.3 108.4h1M154.0 119.1h1M250.5 104.5h1M167.2 114.4h1M203.9 111.2h1M248.8 88.6h1M159.0 116.3h1M223.2 85.2h1M185.6 92.9h1M227.9 88.1h1M176.5 95.5h1M199.8 87.6h1M263.1 84.5h1M197.4 97.9h1M266.0 88.6h1M206.0 96.5h1M195.9 113.5h1M191.3 85.5h1M180.9 85.7h1M179.4 102.3h1M196.9 88.3h1M252.0 90.0h1M169.5 95.3h1M266.2 87.4h1M200.9 113.8h1M200.2 88.8h1M215.8 91.2h1M186.5 111.8h1M232.9 103.0h1M191.8 108.5h1M231.2 109.2h1M158.1 120.0h1M111.2 129.7h1M135.7 130.8h1M144.1 121.4h1M149.9 119.8h1M136.3 120.8h1M162.0 116.5h1M144.6 120.6h1M158.8 114.5h1M143.0 119.5h1M155.1 109.7h1M164.7 118.9h1M149.8 104.6h1M154.0 104.3h1M154.5 123.3h1M155.1 123.3h1M135.7 112.5h1M132.9 124.9h1M123.3 131.9h1M123.5 134.7h1M115.7 114.9h1M146.1 115.4h1M135.4 130.3h1M151.3 122.9h1M134.9 148.3h1M130.3 126.2h1M145.2 118.7h1M129.9 147.9h1M138.0 118.4h1"/>
<path stroke="#8a7e70" d="M231.1 88.8h1M213.1 89.6h1M224.0 91.2h1M257.5 89.1h1M197.5 89.9h1M253.4 101.7h1M151.9 99.7h1M224.0 104.6h1M210.2 108.3h1M219.8 110.6h1M216.8 119.2h1M188.2 124.9h1M169.2 111.4h1M210.4 111.2h1M176.7 126.5h1M211.7 95.3h1M196.7 130.2h1M196.8 125.9h1M183.1 92.8h1M188.3 118.3h1M155.2 121.9h1M258.8 97.0h1M173.9 117.2h1M216.8 99.4h1M182.7 125.5h1M211.8 89.4h1M242.5 109.3h1M157.2 100.0h1M178.3 85.7h1M184.1 121.7h1M217.4 92.4h1M199.1 123.3h1M193.4 102.5h1M251.1 88.4h1M211.4 108.1h1M222.0 129.0h1M173.5 109.2h1M232.7 105.3h1M214.9 89.3h1M224.9 121.2h1M204.2 102.4h1M255.4 95.6h1M254.4 96.9h1M157.8 122.8h1M160.2 108.7h1M228.0 103.8h1M219.6 127.6h1M200.9 101.5h1M213.1 113.4h1M173.4 114.1h1M158.2 108.9h1M160.6 115.0h1M171.0 87.3h1M202.5 98.3h1M249.9 97.5h1M214.1 105.5h1M140.0 168.3h1M193.6 114.8h1M158.7 153.5h1M183.4 128.7h1M185.8 146.1h1M208.3 124.8h1M159.4 154.0h1M190.4 136.3h1M175.1 142.4h1M151.5 177.5h1M140.8 164.7h1M190.9 148.3h1M164.0 155.9h1M147.7 162.0h1M222.0 113.9h1"/>
<path stroke="#b2a174" d="M216.7 83.6h1M240.0 91.6h1M207.8 88.1h1M235.2 86.6h1M253.8 83.9h1M196.0 86.5h1M259.4 91.1h1M241.4 88.8h1M231.5 117.5h1M245.7 91.8h1M171.8 98.7h1M231.8 104.2h1M249.6 87.8h1M223.3 92.4h1M230.5 99.8h1M206.0 128.0h1M187.6 117.5h1M224.5 97.6h1M180.1 112.2h1M183.3 121.8h1M218.8 85.9h1M260.2 93.2h1M240.6 92.0h1M177.9 96.6h1M198.2 114.8h1M165.8 94.1h1M213.6 95.3h1M204.8 126.9h1M173.2 107.5h1M202.5 107.6h1M179.3 107.6h1M153.0 93.1h1M158.0 109.0h1M156.6 123.4h1M202.6 91.4h1M211.7 129.4h1M211.8 113.6h1M236.2 103.6h1M169.3 88.3h1M166.5 97.9h1M251.8 92.4h1M191.5 120.0h1M169.9 127.6h1M202.2 93.6h1M219.6 128.0h1M191.5 125.6h1M223.8 89.6h1M182.0 117.0h1M213.2 99.4h1M153.9 105.0h1M248.2 89.3h1M184.9 103.2h1M218.9 113.4h1M192.2 107.0h1M154.7 116.6h1M176.0 96.5h1M179.2 92.7h1M218.6 96.4h1M214.2 100.2h1M193.0 102.6h1M237.5 104.3h1M159.5 151.4h1M229.8 113.7h1M220.4 115.5h1M132.7 171.8h1M185.9 135.6h1M182.5 156.4h1M219.5 117.1h1M150.7 161.8h1M165.6 143.8h1"/>
<path stroke="#9e9eb5" d="M199.9 84.9h1M237.0 84.8h1M241.0 84.3h1M214.4 87.3h1M254.0 88.3h1M220.6 90.6h1M197.8 88.0h1M221.6 83.6h1M221.9 83.1h1M216.9 86.8h1M212.9 83.9h1M190.7 84.3h1M205.2 84.6h1"/>
<path stroke="#a3a3ba" d="M246.7 85.0h1M218.8 82.8h1M210.6 88.6h1M221.5 89.0h1M215.9 90.6h1M259.9 86.4h1M236.0 86.2h1M245.6 86.4h1M208.9 91.2h1M212.7 82.6h1M256.0 88.9h1M228.5 87.0h1M200.9 84.4h1M267.3 88.9h1M262.2 84.4h1M211.1 88.7h1M239.7 82.7h1M225.7 91.2h1M253.3 91.0h1M225.6 91.4h1M155.9 93.3h1M175.0 83.8h1M159.3 92.8h1M178.7 83.9h1M168.3 91.7h1M190.2 84.2h1M179.0 84.0h1M179.2 85.0h1M163.1 93.1h1M184.4 94.5h1M188.6 118.0h1M194.5 88.3h1M215.2 110.6h1M218.6 90.7h1M187.8 89.7h1M160.1 101.6h1M177.9 93.0h1M158.7 122.2h1M204.9 84.5h1M176.5 111.8h1M180.7 96.3h1M218.6 94.9h1M158.5 114.4h1M256.4 100.2h1M163.0 96.5h1M262.6 92.8h1M167.5 102.7h1M179.4 110.5h1M217.9 94.2h1M157.0 121.5h1M201.0 91.7h1M194.8 88.0h1M230.9 106.5h1M162.3 111.0h1M185.6 95.5h1M233.9 83.8h1M154.7 100.4h1M185.3 107.0h1M153.5 106.2h1M204.2 87.2h1M230.3 98.5h1M207.3 113.0h1M234.6 103.9h1M191.2 111.5h1M187.6 93.6h1M184.8 103.5h1M226.8 112.9h1M192.1 110.5h1M193.7 83.4h1M230.0 92.6h1M209.1 114.1h1M176.6 100.8h1M154.9 118.3h1M154.3 101.3h1M164.2 109.9h1M141.4 107.4h1M162.1 114.2h1M123.8 124.0h1M162.2 100.6h1M157.0 116.3h1M129.6 124.2h1M166.0 111.6h1M157.0 96.9h1M147.6 119.5h1M143.8 121.2h1M130.8 106.4h1M119.5 117.3h1M163.5 100.4h1M162.2 113.0h1M149.7 126.3h1M161.9 114.8h1M138.7 130.6h1M169.7 106.2h1M169.9 110.9h1M166.4 111.3h1M149.2 124.6h1M140.4 121.3h1M135.7 120.8h1M151.4 99.9h1M125.1 131.2h1M135.0 126.4h1M127.7 126.0h1M144.7 138.1h1M117.1 137.5h1M126.6 122.1h1M123.5 142.8h1M125.9 126.1h1M166.4 127.2h1M140.7 128.5h1M127.0 128.1h1M128.2 121.5h1M120.1 145.4h1M128.0 129.7h1M145.7 136.7h1M132.6 128.9h1M129.9 145.3h1M125.9 133.1h1M125.6 133.8h1M127.3 146.7h1M125.5 132.9h1M144.5 144.2h1M147.8 133.3h1M134.3 129.3h1M117.5 124.5h1M117.7 122.5h1M102.1 138.2h1M113.7 135.8h1M114.0 135.4h1M106.3 143.8h1M118.9 125.4h1M108.7 143.7h1M108.4 156.4h1M97.3 178.3h1M90.0 176.3h1M114.1 165.8h1M85.7 160.4h1M90.4 159.6h1M112.8 156.9h1M101.9 148.5h1M98.7 155.4h1M93.9 169.3h1M88.4 168.9h1M107.7 165.4h1M90.0 154.0h1M90.1 173.4h1M103.8 164.9h1M108.8 148.1h1M93.5 148.9h1M110.8 150.2h1M106.0 152.4h1M99.2 166.6h1M93.7 154.8h1M110.1 177.8h1M110.6 149.3h1M85.8 173.7h1M102.9 165.1h1M97.4 159.6h1"/>
<path stroke="#979084" d="M211.0 91.1h1M261.9 89.2h1M248.0 87.4h1M229.0 86.2h1M246.6 90.3h1M240.7 91.4h1M211.5 84.4h1M215.0 87.2h1M252.2 92.2h1M249.8 86.2h1M187.3 87.5h1M211.1 86.3h1M207.6 90.3h1M245.3 87.6h1M169.7 89.3h1M163.6 94.5h1M168.6 94.5h1M187.2 83.9h1M178.8 85.4h1M162.2 91.4h1M179.8 85.5h1M163.1 88.3h1M159.8 94.4h1M155.8 90.2h1M200.2 117.5h1M188.2 101.2h1M244.9 94.8h1M180.7 86.7h1M238.4 104.7h1M227.9 86.3h1M186.4 95.0h1M152.9 119.4h1M193.2 133.6h1M153.2 104.4h1M209.6 85.5h1M228.8 105.2h1M193.9 129.5h1M203.2 97.9h1M228.8 86.8h1M162.9 101.3h1M240.3 85.0h1M199.6 103.8h1M237.8 113.5h1M160.4 103.1h1M219.8 107.1h1M259.5 91.5h1M161.9 109.4h1M165.3 108.1h1M219.0 92.3h1M192.3 117.8h1M173.9 98.5h1M186.4 132.0h1M258.2 95.3h1M208.5 126.6h1M246.4 95.3h1M241.2 98.0h1M188.7 89.4h1M179.6 94.5h1M227.9 93.4h1M158.1 119.2h1M155.8 94.8h1M152.6 93.5h1M233.3 88.3h1M205.0 127.8h1M197.5 85.0h1M235.4 90.5h1M152.6 109.6h1M182.7 121.8h1M203.0 133.6h1M245.6 84.9h1M199.1 123.8h1M152.0 96.0h1M159.2 122.5h1M238.2 102.9h1M265.9 87.4h1M219.2 86.9h1M167.9 119.6h1M206.8 116.2h1M260.7 90.0h1M253.8 87.9h1M154.0 117.3h1M161.8 120.2h1M157.4 120.3h1M141.5 123.2h1M144.6 119.9h1M150.3 126.4h1M153.0 111.1h1M131.5 123.5h1M160.0 111.0h1M155.5 119.0h1M128.6 129.8h1M120.0 129.3h1M149.3 120.6h1M156.1 114.7h1M139.3 127.4h1M128.8 129.6h1M146.0 110.8h1M138.3 127.7h1M175.5 102.8h1M151.2 105.1h1M168.1 110.4h1M168.6 111.5h1M172.2 100.7h1M161.9 107.2h1M138.3 126.9h1M173.9 121.2h1M152.5 181.7h1M171.7 125.0h1M239.2 103.2h1M221.5 121.5h1M207.6 118.0h1M134.6 157.6h1M145.9 169.2h1M196.7 112.0h1M120.0 176.2h1M134.7 164.8h1M173.9 143.0h1M217.7 127.6h1M126.3 177.6h1M128.0 167.7h1"/>
<path stroke="#e6ecf8" d="M172.8 91.2h1M172.8 86.6h1M190.5 84.3h1M170.6 92.6h1M170.0 93.3h1M160.2 88.0h1M159.4 91.9h1M183.0 82.8h1M172.3 86.3h1M183.5 83.9h1M179.4 84.9h1M173.8 92.3h1M178.8 85.8h1M185.8 81.9h1M162.7 95.1h1M171.7 91.4h1M165.4 90.8h1M200.2 101.9h1M220.5 95.0h1M216.1 85.3h1M218.8 108.4h1M158.6 107.9h1M173.6 95.9h1M172.4 89.1h1M230.3 86.3h1M161.1 112.4h1M219.7 91.2h1M196.3 92.3h1M157.8 113.6h1M177.0 97.2h1M212.4 89.2h1M187.7 89.9h1M207.9 83.9h1M130.2 133.1h1M157.4 104.5h1M160.0 121.3h1M147.1 104.7h1M163.6 101.8h1M145.7 112.2h1M131.4 112.3h1M163.1 120.8h1M158.3 110.2h1M153.6 105.8h1M167.1 102.1h1M158.6 108.8h1M164.8 119.0h1M123.6 115.6h1M144.1 147.4h1M161.8 118.1h1M114.6 132.6h1M137.5 125.9h1M117.9 131.1h1M150.0 135.3h1M131.3 148.6h1M147.7 132.1h1M146.9 138.9h1M141.6 149.1h1M121.8 117.8h1M111.1 142.4h1M125.0 104.8h1M112.0 113.7h1M115.5 133.5h1M106.5 153.2h1M124.0 131.6h1M97.5 127.9h1M118.1 137.3h1M111.4 156.4h1M106.3 144.4h1M110.3 133.8h1M113.2 159.6h1M113.4 149.6h1M124.1 127.2h1M110.6 137.9h1M120.4 118.6h1M94.8 178.1h1M98.6 157.6h1M109.4 152.8h1M108.8 160.9h1M97.0 161.9h1M100.3 166.9h1M113.5 168.4h1M105.7 162.5h1M93.8 154.9h1M114.1 165.2h1M97.8 153.0h1M95.3 150.2h1M103.6 174.7h1M97.9 150.8h1M90.1 159.2h1M94.0 150.2h1M98.0 167.0h1M84.6 157.9h1M96.9 169.6h1M100.6 176.4h1M110.1 174.6h1M106.8 173.0h1M95.1 175.5h1M99.7 146.7h1M97.8 176.9h1M105.5 162.0h1M104.5 165.4h1M109.5 176.1h1M87.4 159.9h1M107.7 157.0h1M110.6 154.7h1M113.9 162.9h1M87.9 174.0h1M86.6 168.8h1M94.3 164.5h1M87.3 160.9h1M106.7 165.2h1M97.7 149.0h1M108.9 164.6h1M89.0 152.2h1M100.9 165.9h1M103.1 170.5h1M83.6 162.6h1M105.1 147.1h1M108.0 165.1h1M110.4 153.5h1M104.3 160.4h1M109.8 163.8h1M112.8 155.3h1M93.4 172.9h1M93.3 173.7h1M113.6 174.5h1M111.3 172.1h1M89.4 165.1h1M86.7 170.4h1M110.9 167.5h1M105.3 175.0h1"/>
<path stroke="#f4f4f0" d="M188.8 85.0h1M158.3 93.1h1M185.1 81.1h1M180.0 85.5h1M188.6 81.3h1M168.1 84.7h1M177.0 87.5h1M160.2 92.7h1M174.7 90.8h1M180.3 83.6h1M163.4 92.7h1M196.4 84.5h1M159.2 92.5h1M236.7 83.6h1M153.6 94.1h1M231.0 83.7h1M150.5 114.9h1M161.6 102.5h1M220.5 94.7h1M162.7 107.4h1M176.6 104.7h1M212.0 89.7h1M202.7 86.6h1M191.9 102.3h1M191.0 84.2h1M158.4 98.5h1M229.1 91.9h1M184.6 93.8h1M181.6 88.5h1M183.7 91.5h1M153.4 94.3h1M151.2 94.6h1M170.5 90.0h1M242.2 94.4h1M179.4 90.9h1M151.8 101.3h1M156.7 112.9h1M137.2 115.9h1M135.6 113.7h1M157.7 107.3h1M127.9 129.8h1M147.0 130.0h1M170.2 110.3h1M145.4 115.4h1M155.0 93.7h1M152.0 102.0h1M120.9 123.8h1M119.6 139.0h1M124.4 118.0h1M138.8 130.8h1M106.7 130.8h1M141.5 121.8h1M154.8 130.0h1M127.4 131.9h1M149.2 120.6h1M115.4 132.8h1M139.9 123.5h1M117.0 142.5h1M123.4 123.3h1M136.0 149.3h1M97.2 147.8h1M102.8 146.3h1M131.6 131.5h1M113.6 130.2h1M111.6 142.3h1M104.4 142.3h1M111.8 149.8h1M105.3 151.6h1M114.3 138.2h1M104.8 162.2h1M110.9 130.8h1M104.1 144.6h1M109.7 130.6h1M116.8 132.3h1M119.2 126.7h1M99.2 132.0h1M111.9 126.0h1M109.9 132.9h1M107.5 148.1h1M120.3 130.2h1M113.7 128.3h1M111.6 139.0h1M129.7 127.8h1M107.8 156.3h1M99.3 172.2h1M111.1 159.5h1M115.6 160.6h1M105.7 160.2h1M102.3 176.2h1M110.0 169.2h1M99.8 155.6h1M97.7 171.5h1M87.8 153.4h1M96.3 168.2h1M111.3 162.0h1M94.5 166.3h1M95.4 153.7h1M96.7 153.8h1M93.4 155.9h1M98.9 155.4h1M95.4 173.0h1M86.5 151.8h1M104.1 163.5h1M101.4 152.1h1M104.4 156.1h1M102.8 166.4h1M94.6 159.3h1M96.2 158.3h1M99.1 151.0h1M94.7 154.5h1M101.6 159.4h1M92.9 174.2h1M86.6 170.7h1M102.7 170.9h1M95.1 156.7h1M101.8 163.7h1M92.3 174.4h1M89.3 149.6h1M103.7 170.2h1M107.0 159.0h1M91.8 178.5h1M111.6 167.7h1M98.3 152.5h1M95.4 153.2h1M104.0 162.0h1M91.2 158.6h1M92.2 169.6h1M88.7 157.2h1M106.6 155.4h1M104.8 148.7h1M97.5 162.6h1M132.7 158.2h1M158.1 137.7h1M239.5 112.0h1M205.0 123.5h1"/>
<path stroke="#c2c7db" d="M179.5 86.7h1M166.4 91.1h1M162.3 87.4h1M182.0 83.7h1M184.2 82.9h1M179.3 87.4h1M166.6 88.8h1M158.2 91.1h1M188.4 89.2h1M174.9 91.7h1M186.8 103.1h1M171.5 117.0h1M161.1 116.2h1M256.2 87.1h1M211.2 98.6h1M206.2 97.8h1M220.2 86.8h1M179.1 104.6h1M187.2 93.1h1M234.1 83.6h1M166.3 110.9h1M235.1 90.6h1M240.4 88.4h1M170.1 97.8h1M193.0 90.4h1M178.2 86.4h1M125.8 123.0h1M131.9 124.6h1M141.6 114.7h1M159.0 122.5h1M156.1 118.6h1M162.1 115.1h1M129.5 126.6h1M148.0 106.4h1M142.3 128.1h1M159.0 116.2h1M148.0 100.0h1M135.9 112.4h1M142.0 104.0h1M166.2 118.1h1M127.8 122.2h1M140.3 120.4h1M129.4 129.8h1M140.8 121.6h1M114.3 135.5h1M127.3 131.5h1M125.5 141.3h1M116.0 130.3h1M139.4 127.4h1M153.9 130.4h1M125.7 139.8h1M148.0 131.9h1M132.2 148.5h1M146.8 141.6h1M130.1 149.9h1M128.8 132.7h1M127.6 131.5h1M142.9 147.1h1M127.8 134.4h1M127.6 129.0h1M123.3 135.5h1M117.7 125.1h1M114.2 135.4h1M109.1 135.3h1M114.5 139.4h1M104.7 135.5h1M117.4 121.2h1M111.2 139.1h1M130.0 136.8h1M108.6 142.2h1M105.7 150.6h1M124.3 128.9h1M88.9 155.1h1M105.0 168.8h1M101.0 158.2h1M99.3 155.1h1M93.3 153.8h1M95.9 149.3h1M100.1 165.8h1M84.7 161.9h1M98.0 159.3h1M105.7 163.2h1M89.8 176.0h1M106.9 157.7h1M105.9 163.1h1M94.3 161.1h1M87.9 161.2h1M104.7 177.1h1M93.6 159.5h1M102.5 160.3h1M89.3 160.5h1M111.2 165.4h1M107.2 161.0h1M107.6 174.0h1M106.2 174.0h1M102.6 172.4h1M109.8 162.4h1M93.0 174.7h1M94.3 156.6h1M104.6 160.3h1M112.1 156.7h1M95.2 178.9h1M97.6 172.3h1M91.0 163.6h1M91.2 157.5h1M94.0 174.0h1M100.1 150.5h1M98.1 157.6h1M109.5 161.6h1M89.5 170.8h1M90.6 147.0h1M115.1 171.8h1M103.4 168.3h1M89.0 156.5h1M110.7 167.0h1M90.9 160.0h1M98.8 155.9h1M107.6 161.2h1M96.9 166.4h1"/>
<path stroke="#cdcdd4" d="M187.4 84.5h1M153.1 90.8h1M163.5 93.0h1M172.0 89.0h1M156.3 92.8h1M159.1 92.0h1M173.0 93.3h1M186.7 83.3h1M162.5 93.5h1M153.8 94.7h1M168.9 84.3h1M178.6 86.4h1M200.6 83.1h1M179.2 90.8h1M177.4 91.5h1M178.8 90.2h1M175.9 99.0h1M181.3 90.5h1M218.5 85.0h1M213.5 96.6h1M209.4 89.9h1M204.1 85.3h1M155.7 98.5h1M230.0 89.8h1M211.3 94.2h1M174.3 98.0h1M191.3 92.1h1M233.7 104.2h1M151.2 93.0h1M152.3 105.8h1M245.6 89.0h1M206.6 91.5h1M197.0 102.6h1M167.0 102.2h1M203.5 96.9h1M192.5 105.7h1M134.8 112.7h1M129.5 111.5h1M132.5 110.8h1M164.4 109.0h1M125.3 123.8h1M148.3 101.4h1M133.4 106.2h1M171.9 112.2h1M147.8 116.3h1M145.5 108.7h1M146.9 124.5h1M144.8 102.6h1M146.3 108.4h1M121.2 121.3h1M146.0 98.8h1M154.5 104.8h1M140.2 120.3h1M136.0 119.8h1M132.8 148.3h1M141.5 127.9h1M130.9 128.1h1M127.7 146.3h1M129.1 121.2h1M129.3 129.0h1M125.2 135.0h1M139.7 124.7h1M119.1 134.8h1M138.3 125.8h1M137.9 129.1h1M128.0 133.1h1M111.8 140.8h1M125.0 136.0h1M121.3 122.3h1M143.9 135.4h1M134.1 130.5h1M129.5 135.2h1M133.3 129.5h1M145.6 132.3h1M126.7 132.7h1M116.1 141.5h1M106.5 142.1h1M114.1 132.7h1M123.3 130.5h1M115.1 136.3h1M110.0 141.6h1M108.6 139.6h1M112.5 155.5h1M89.2 159.3h1M94.3 155.5h1M95.4 175.3h1M103.0 173.6h1M103.1 165.6h1M118.1 159.2h1M105.4 169.3h1M93.3 171.4h1M110.2 159.0h1M101.8 179.2h1M96.9 159.4h1M95.6 156.5h1M93.4 161.5h1M104.1 174.1h1M96.7 165.9h1M106.2 161.4h1M96.7 153.9h1M105.8 160.2h1M102.6 179.3h1M109.6 159.5h1M98.6 162.2h1M104.1 171.1h1M112.0 166.1h1M106.7 153.7h1M103.9 164.1h1M92.4 155.5h1M99.4 172.1h1M98.7 149.2h1M104.3 171.7h1M104.1 165.7h1M104.6 166.7h1M108.7 149.9h1M85.9 162.2h1M107.8 172.6h1M104.5 149.9h1M185.7 147.2h1M235.8 120.6h1M138.7 178.4h1M159.2 137.8h1M128.3 165.4h1M247.1 109.2h1M166.5 161.3h1M159.8 145.4h1M160.8 153.4h1M208.0 137.6h1M216.4 118.4h1M173.9 126.6h1M209.6 130.8h1"/>
<path stroke="#9d9db2" d="M171.2 84.5h1M185.6 88.8h1M180.2 86.9h1M159.4 89.8h1M167.2 91.7h1M182.1 89.9h1M187.8 84.4h1M153.0 92.2h1M163.5 86.0h1M156.6 92.7h1M233.0 91.5h1M197.3 96.6h1M200.2 85.8h1M223.8 96.1h1M183.1 84.8h1M213.1 90.9h1M251.0 86.3h1M218.0 87.3h1M262.7 85.2h1M224.9 91.7h1M156.5 113.2h1M142.6 110.2h1M160.2 107.7h1M137.4 133.3h1M153.7 124.8h1M129.9 124.2h1M121.8 130.9h1M135.2 107.6h1M162.2 112.2h1M160.9 110.4h1M160.7 102.4h1M124.1 115.7h1M147.5 101.2h1M134.4 126.4h1M126.2 130.2h1M125.5 123.8h1M159.5 100.9h1M126.4 115.1h1M158.3 119.7h1M171.2 110.4h1M161.7 121.6h1M141.7 129.5h1M127.8 121.7h1M155.4 115.4h1M164.8 114.7h1M118.4 145.8h1M134.0 151.5h1M134.3 128.6h1M133.9 127.1h1M123.3 127.5h1M119.2 129.7h1M137.7 129.8h1M142.3 130.1h1M139.1 129.2h1M133.4 128.4h1M131.9 130.8h1M143.1 130.7h1M138.1 130.6h1M148.3 145.2h1M114.8 153.8h1M123.7 137.3h1M127.4 136.1h1M115.7 115.6h1M136.1 128.1h1M128.8 131.5h1M144.2 134.3h1M128.1 122.7h1M126.7 130.9h1M140.8 131.1h1M121.5 132.3h1M127.6 125.2h1M139.7 130.9h1M136.7 129.8h1M120.5 133.8h1M155.1 133.2h1M135.7 148.5h1M143.5 130.9h1M125.9 139.4h1M145.0 143.2h1M133.1 148.7h1M129.9 129.0h1M144.5 144.4h1M137.5 148.1h1M125.4 140.2h1M137.0 131.1h1M107.5 142.2h1M110.3 149.8h1M99.3 138.3h1M107.4 151.1h1M121.2 134.2h1M86.3 167.4h1M95.9 152.0h1M96.4 179.3h1M96.9 157.7h1M97.1 179.5h1M102.7 150.8h1M101.3 147.7h1M86.9 162.9h1M108.4 160.4h1M99.8 165.0h1M107.8 170.2h1M100.1 167.1h1M94.0 161.5h1M98.1 166.2h1M106.9 152.8h1M103.1 176.5h1M90.3 169.3h1M91.5 171.7h1M92.8 165.2h1M92.2 150.0h1M106.0 163.0h1M104.8 173.8h1M113.6 154.8h1M110.2 151.2h1M92.6 161.8h1M194.8 114.4h1M137.8 184.0h1M153.0 171.2h1M185.3 114.4h1M155.4 168.2h1M204.8 125.8h1M170.6 157.6h1M167.7 132.8h1M186.2 140.6h1M197.4 108.5h1M237.0 110.6h1M193.5 135.5h1M173.2 140.1h1"/>
<path stroke="#9599b6" d="M186.4 85.5h1M167.3 93.4h1M163.4 89.3h1M164.8 95.5h1M163.5 87.6h1M163.9 91.9h1M236.8 85.9h1M192.9 107.9h1M155.1 95.3h1M266.3 87.5h1M210.8 92.2h1M185.6 107.3h1M217.6 87.4h1M219.2 88.8h1M178.9 95.8h1M220.2 83.5h1M185.3 86.5h1M148.5 101.4h1M156.5 122.1h1M165.5 101.1h1M129.0 110.4h1M165.5 113.8h1M153.7 102.9h1M141.5 131.4h1M164.7 96.6h1M150.0 103.8h1M155.4 122.1h1M130.8 113.3h1M165.6 106.7h1M143.7 108.1h1M148.7 107.0h1M134.4 118.9h1M124.1 115.8h1M147.0 124.5h1M152.6 99.9h1M143.9 107.5h1M137.3 119.3h1M144.3 127.8h1M140.2 131.5h1M129.3 126.0h1M127.8 147.7h1M147.4 138.0h1M154.2 116.7h1M134.4 149.3h1M127.2 125.8h1M128.1 134.4h1M130.9 130.0h1M126.1 120.3h1M129.2 122.9h1M116.1 128.3h1M124.5 127.5h1M141.5 131.7h1M145.4 145.0h1M125.3 142.9h1M125.4 144.1h1M132.1 131.6h1M125.9 133.2h1M125.3 141.6h1M121.8 134.5h1M146.1 136.1h1M136.7 129.7h1M124.7 144.4h1M121.5 122.3h1M112.3 131.8h1M114.6 137.2h1M105.2 138.3h1M117.0 140.8h1M115.4 124.7h1M116.2 126.1h1M121.8 126.5h1M112.4 141.0h1M96.2 176.0h1M99.3 153.0h1M103.9 157.0h1M106.4 170.8h1M99.1 173.9h1M99.1 151.8h1M92.5 161.7h1M112.5 156.8h1M88.1 154.2h1M107.4 160.2h1M102.9 165.1h1M100.6 160.1h1M103.4 162.1h1M89.9 151.1h1M115.5 162.2h1M98.2 174.8h1M107.7 154.3h1M104.0 166.3h1M100.3 148.4h1M97.2 157.2h1M97.3 148.7h1"/>
<path stroke="#21213b" d="M205.7 126.9h1M188.9 127.3h1M248.4 108.6h1M170.1 127.4h1M199.3 117.7h1M193.0 102.9h1M208.6 116.3h1M204.1 98.8h1M225.8 92.6h1M221.5 97.7h1M232.1 118.2h1M184.2 125.9h1M156.9 110.5h1M200.4 116.8h1M197.1 128.9h1M199.2 111.8h1M164.2 120.6h1M208.3 123.1h1M208.0 120.7h1M223.7 120.2h1M196.5 107.0h1M223.6 123.6h1M227.4 89.0h1M213.8 106.0h1M177.4 107.3h1M244.8 102.9h1M249.2 94.2h1M167.0 119.0h1M209.7 103.1h1M215.2 121.5h1M236.0 117.1h1M253.7 104.1h1M198.0 107.3h1M228.9 106.8h1M255.7 92.5h1M241.5 108.4h1M206.1 132.6h1M251.3 91.4h1M194.7 111.0h1M161.1 122.9h1M178.6 155.6h1M137.9 171.1h1M152.4 167.6h1M172.1 120.3h1M134.3 165.2h1M163.2 131.2h1M124.9 181.3h1M162.2 147.5h1M247.2 104.6h1M189.4 117.0h1M201.1 129.4h1M196.5 124.3h1M201.1 141.6h1M191.3 124.9h1M178.6 131.0h1M185.3 110.9h1M216.0 114.8h1"/>
<path stroke="#786b5e" d="M190.2 131.2h1M185.5 113.0h1M180.4 127.2h1M165.7 123.8h1M224.1 88.4h1M183.1 127.8h1M214.2 90.3h1M260.1 94.8h1M210.5 125.2h1M185.3 112.4h1M153.6 118.6h1M218.7 128.5h1M256.9 85.1h1M242.7 91.7h1M205.7 116.8h1M189.9 126.0h1M224.8 122.3h1M180.7 112.2h1M225.6 119.2h1M205.2 124.8h1M238.0 85.8h1M167.4 126.3h1M222.6 95.4h1M263.8 85.5h1M240.7 113.9h1M212.1 123.5h1M194.7 107.9h1M233.4 94.8h1M227.1 118.4h1M218.1 106.9h1M157.2 114.0h1M178.2 105.6h1M201.4 97.4h1M143.0 181.7h1M195.3 116.2h1M197.0 133.6h1M151.8 170.3h1M145.7 157.9h1M227.0 119.8h1M219.5 105.0h1M131.5 179.7h1M156.5 146.7h1M229.6 103.5h1M184.1 131.1h1M199.6 144.8h1M207.3 115.2h1M162.2 155.4h1M154.2 164.0h1M129.9 179.2h1M181.3 131.3h1M139.3 167.9h1M127.1 181.3h1"/>
<path stroke="#796748" d="M258.6 92.3h1M203.0 107.7h1M189.8 103.7h1M204.8 120.1h1M200.7 133.3h1M251.2 84.4h1M246.5 106.2h1M216.1 104.5h1M212.2 130.6h1M182.6 99.1h1M224.3 117.3h1M252.2 103.6h1M186.6 129.0h1M208.5 119.0h1M173.3 123.0h1M160.9 116.8h1M222.9 109.9h1M213.8 117.4h1M189.1 115.2h1M151.6 108.7h1M206.9 104.6h1M254.3 97.3h1M222.1 101.0h1M235.8 118.4h1M209.8 112.7h1M153.5 123.2h1M204.6 122.7h1M173.2 130.2h1M231.6 106.5h1M236.6 116.0h1M208.7 106.8h1M167.5 101.7h1M217.2 110.8h1M229.0 119.1h1M186.7 131.0h1M241.7 97.3h1M190.2 101.0h1M201.9 131.1h1M215.5 114.5h1M263.8 92.7h1M171.4 116.1h1M164.3 119.1h1M191.8 114.1h1M161.7 118.5h1M214.9 110.7h1M230.7 92.0h1M253.2 91.2h1M210.5 107.0h1M164.4 132.5h1M242.0 105.5h1M175.8 144.7h1M207.6 136.5h1M216.3 121.2h1M198.2 107.7h1M147.3 175.8h1M139.5 177.6h1M178.6 125.9h1M131.3 169.9h1M178.3 151.4h1M211.9 109.3h1M230.8 106.9h1M224.0 129.3h1M220.6 150.1h1M224.5 139.2h1M233.2 133.4h1M224.7 144.5h1M187.5 157.3h1M165.0 130.8h1M195.0 150.0h1M192.1 157.0h1M194.1 149.2h1M149.2 140.8h1"/>
<path stroke="#635751" d="M269.3 89.9h1M166.3 119.6h1M189.2 121.9h1M213.9 99.1h1M166.4 109.3h1M231.9 96.7h1M230.5 86.4h1M209.0 117.8h1M213.7 104.7h1M216.7 113.7h1M181.5 102.8h1M208.5 127.1h1M199.0 124.5h1M181.7 101.5h1M172.2 106.8h1M223.1 121.4h1M191.4 91.4h1M186.0 129.4h1M216.4 119.2h1M234.5 112.8h1M197.4 128.6h1M246.8 104.9h1M171.0 106.2h1M233.3 97.8h1M246.2 94.1h1M171.7 125.9h1M174.8 98.1h1M181.9 101.7h1M228.4 101.0h1M207.3 110.3h1M165.3 112.0h1M257.7 87.8h1M162.6 166.1h1M118.9 178.5h1M130.8 173.8h1M202.6 142.1h1M183.3 125.8h1M178.6 123.4h1M193.1 124.4h1M176.5 138.4h1M156.0 145.1h1M124.0 169.6h1M195.9 116.5h1M144.0 176.1h1M196.5 115.6h1M146.1 169.7h1M187.5 139.5h1M211.5 130.8h1M232.1 115.0h1M228.8 133.9h1M228.0 161.8h1M234.3 152.3h1M224.4 142.6h1M221.8 155.3h1M226.6 149.7h1M232.1 138.9h1M218.2 158.4h1M221.4 155.1h1M137.5 146.2h1"/>
<path stroke="#8a7440" d="M198.3 106.6h1M194.4 103.9h1M171.5 128.8h1M238.6 116.5h1M154.6 123.4h1M196.7 99.0h1M229.6 108.2h1M203.1 116.3h1M221.6 107.1h1M215.1 122.0h1M161.8 120.4h1M161.2 98.4h1M160.7 115.7h1M224.3 100.2h1M181.7 107.6h1M222.1 122.9h1M216.9 104.4h1M197.9 101.7h1M211.3 128.9h1M193.9 116.7h1M203.4 125.2h1M254.7 92.4h1M185.0 133.1h1M174.4 124.9h1M191.5 115.4h1M202.8 115.6h1M238.4 110.2h1M193.8 129.9h1M195.8 121.7h1M240.3 94.9h1M160.6 100.4h1M228.9 118.4h1M199.1 104.3h1M199.9 97.6h1M215.1 103.2h1M159.0 118.9h1M192.0 112.6h1M205.8 119.4h1M160.0 124.8h1M244.5 91.9h1M236.9 107.9h1M208.7 129.1h1M212.7 104.4h1M179.4 115.4h1M222.5 84.0h1M156.7 106.9h1M219.9 106.4h1M192.4 102.5h1M149.1 114.9h1M206.4 128.3h1M239.7 111.2h1M170.6 120.5h1M169.5 161.9h1M131.4 173.0h1M204.5 107.0h1M133.5 178.7h1M230.8 151.2h1M225.0 137.0h1M233.2 136.9h1M226.9 141.8h1M231.0 139.7h1M227.9 133.3h1M221.3 140.9h1M228.7 155.2h1M229.8 145.6h1M233.2 135.8h1M233.2 133.6h1M184.4 159.1h1M141.7 149.2h1M211.0 163.2h1M204.1 154.9h1M195.8 174.6h1M194.7 151.9h1M163.5 142.9h1M199.2 146.3h1M171.6 149.6h1M146.3 140.4h1M197.7 150.3h1"/>
<path stroke="#97845b" d="M161.8 96.8h1M253.5 99.2h1M191.9 111.2h1M174.3 104.8h1M233.0 97.8h1M171.7 115.1h1M246.4 109.4h1M151.8 112.1h1M236.7 108.2h1M238.0 92.3h1M187.6 125.9h1M203.0 103.0h1M210.2 94.9h1M179.8 121.3h1M167.8 109.5h1M193.1 125.9h1M180.3 125.9h1M156.7 122.5h1M248.2 100.1h1M176.7 108.5h1M188.0 120.2h1M191.9 128.4h1M246.1 103.2h1M176.4 128.3h1M177.5 110.3h1M165.4 127.3h1M237.1 104.8h1M197.1 129.0h1M249.8 106.8h1M156.8 117.9h1M221.7 129.8h1M252.0 101.3h1M237.7 100.9h1M240.7 100.3h1M233.1 92.9h1M183.1 112.8h1M204.6 128.9h1M165.3 116.1h1M159.8 96.9h1M218.2 100.1h1M226.1 109.2h1M164.4 162.7h1M120.9 180.2h1M216.3 114.4h1M235.2 117.5h1M160.1 130.7h1M209.0 124.4h1M180.7 147.0h1M128.9 180.0h1M249.5 110.7h1M189.2 129.7h1M239.3 114.0h1M170.9 138.4h1M192.5 126.6h1M171.3 159.0h1M220.0 128.8h1M170.5 132.9h1M156.7 139.0h1M155.5 154.4h1"/>
<path stroke="#b09858" d="M223.9 107.6h1M212.4 108.0h1M182.3 123.3h1M230.1 115.9h1M162.1 116.4h1M194.6 98.3h1M218.8 111.0h1M207.0 105.4h1M235.5 94.4h1M195.7 118.2h1M196.8 128.3h1M180.1 114.7h1M206.9 116.4h1M208.7 109.0h1M213.2 101.9h1M170.0 99.9h1M149.4 121.6h1M245.1 88.9h1M248.3 101.8h1M269.5 89.2h1M203.8 110.0h1M190.3 127.4h1M216.9 89.4h1M240.8 101.5h1M160.9 116.0h1M231.1 119.3h1M182.9 132.0h1M196.9 126.6h1M165.6 114.4h1M165.8 125.3h1M182.3 122.4h1M163.1 126.7h1M231.6 114.8h1M181.2 107.8h1M165.5 124.5h1M162.4 164.1h1M179.4 142.7h1M206.4 120.2h1M136.5 171.0h1M157.8 147.3h1M210.4 106.5h1M223.5 119.1h1M151.4 183.0h1M170.8 143.1h1M200.3 111.9h1"/>
<path stroke="#262648" d="M262.0 90.2h1M240.6 100.6h1M242.9 112.7h1M209.6 100.3h1M176.3 104.7h1M170.8 109.3h1M173.2 121.8h1M203.7 129.0h1M180.6 109.3h1M185.4 96.9h1M226.9 106.7h1M235.3 97.2h1M168.9 117.2h1M161.9 101.4h1M169.2 112.9h1M188.3 114.2h1M186.2 109.0h1M224.2 117.0h1M173.0 128.0h1M161.7 119.7h1M180.9 106.9h1M152.7 115.9h1M239.3 99.0h1M254.0 95.8h1M261.7 86.4h1M151.2 120.9h1M245.8 95.4h1M207.0 111.1h1M173.0 115.6h1M220.1 113.8h1M192.0 96.7h1M179.5 115.3h1M231.7 84.4h1M173.0 157.0h1M189.6 133.8h1M210.1 133.8h1M163.1 143.5h1M215.2 128.3h1M206.9 138.5h1M160.6 151.2h1M241.7 102.0h1M182.2 119.1h1M178.6 123.1h1M185.7 112.1h1M237.8 117.6h1M179.2 149.8h1M203.6 122.5h1M173.8 125.6h1M181.3 140.3h1"/>
<path stroke="#51485a" d="M202.4 116.4h1M221.4 122.7h1M186.7 120.7h1M194.2 125.1h1M196.5 132.4h1M219.2 119.5h1M213.3 119.2h1M192.2 122.2h1M221.2 118.3h1M184.8 132.0h1M225.6 120.0h1M244.4 111.8h1M260.0 98.2h1M184.2 157.6h1M203.0 121.4h1M131.5 173.4h1M240.0 113.2h1M198.5 144.7h1M192.1 144.1h1M182.5 152.5h1M201.3 142.1h1M192.4 146.1h1M134.7 182.2h1M252.7 110.2h1M211.2 135.4h1M226.4 125.0h1M157.7 167.3h1M171.6 169.3h1M153.6 151.3h1M186.8 148.2h1M207.0 161.3h1"/>
<path stroke="#1c1c30" d="M252.7 90.2h1M210.8 99.9h1M231.1 113.1h1M225.2 97.7h1M183.6 117.3h1M197.3 97.9h1M186.0 102.3h1M249.0 93.0h1M234.7 114.3h1M221.7 115.7h1M238.6 98.3h1M211.2 91.9h1M214.9 110.1h1M179.2 108.4h1M235.6 114.1h1M228.4 101.9h1M184.4 107.4h1M180.8 119.3h1M222.6 106.4h1M203.8 108.2h1M154.3 118.3h1M245.7 101.8h1M169.0 106.2h1M163.0 99.8h1M167.9 122.1h1M221.6 123.2h1M204.2 118.9h1M158.8 117.8h1M231.5 96.7h1M173.2 126.7h1M182.1 108.6h1M196.6 132.2h1M153.3 120.4h1M236.4 99.4h1M161.5 110.4h1M214.7 109.4h1M192.2 125.2h1M167.5 116.0h1M169.2 157.0h1M169.9 131.5h1M171.8 166.7h1"/>
<path stroke="#5f5254" d="M223.0 126.3h1M220.8 111.2h1M189.6 125.7h1M166.3 118.7h1M243.2 104.9h1M204.9 128.3h1M219.9 123.5h1M158.6 145.2h1M208.4 110.8h1M166.0 146.6h1M200.6 141.1h1M190.9 131.2h1M168.7 160.2h1M236.2 114.5h1M181.6 150.6h1M142.9 172.1h1M132.0 182.1h1M263.1 104.0h1M184.3 150.3h1M137.3 176.4h1M258.0 105.6h1M137.3 174.5h1M160.8 160.5h1M179.9 161.9h1M152.6 129.1h1M178.6 139.8h1M213.6 165.1h1"/>
<path stroke="#15152e" d="M194.5 122.1h1M166.1 124.2h1M167.5 127.0h1M199.9 128.1h1M237.7 111.8h1M210.9 111.6h1M228.3 117.8h1M212.1 126.1h1M222.6 106.0h1M157.6 123.5h1M254.5 97.2h1M228.2 114.9h1M221.2 115.1h1M204.1 124.8h1M145.5 182.9h1M132.8 185.1h1M113.7 178.6h1M104.2 180.6h1M135.7 181.2h1M125.4 182.5h1M116.6 182.0h1M116.1 180.2h1M127.5 181.4h1M131.4 184.7h1M117.0 182.1h1M115.0 184.9h1M127.5 185.6h1M133.4 182.5h1M134.8 186.1h1M145.4 186.9h1M109.4 180.2h1M108.6 180.4h1M140.6 183.1h1M142.3 187.0h1M158.7 157.6h1M204.5 120.8h1M141.9 182.3h1M172.8 163.2h1M202.2 142.6h1M131.9 182.4h1M148.0 158.6h1M149.5 159.2h1M235.1 119.1h1M215.5 132.4h1M122.0 182.3h1M160.2 165.0h1M195.4 145.5h1M125.1 185.1h1M150.5 170.2h1M245.7 115.7h1M161.3 166.6h1M193.7 147.4h1M256.3 104.9h1M228.6 123.7h1M165.3 162.7h1M182.1 154.5h1M245.6 115.6h1M234.3 152.0h1M231.9 128.4h1M224.7 132.0h1M225.4 137.5h1M224.4 136.8h1M230.5 153.3h1M226.8 140.6h1M228.2 146.9h1M232.9 150.2h1M206.9 147.4h1M188.6 172.7h1M153.7 154.4h1M209.0 152.5h1M177.4 152.0h1M205.7 164.2h1M165.5 146.2h1"/>
<path stroke="#6a5a50" d="M217.3 129.4h1M173.2 112.1h1M246.1 110.2h1M218.6 105.6h1M237.3 116.0h1M220.3 111.1h1M190.3 126.9h1M188.8 123.9h1M184.1 155.8h1M219.5 107.6h1M123.5 171.2h1M165.1 135.8h1M236.0 122.3h1M130.5 183.0h1M190.9 149.7h1M167.0 157.8h1M137.2 174.6h1M259.3 104.5h1M220.0 132.8h1M211.4 139.5h1M161.4 164.5h1M179.5 153.9h1M168.6 144.1h1M160.2 136.0h1M226.0 172.0h1M162.6 153.1h1M143.0 148.2h1M169.8 150.6h1"/>
<path stroke="#222247" d="M170.1 122.4h1M187.2 123.3h1M245.6 108.4h1M166.5 126.9h1M214.2 125.0h1M150.2 117.9h1M174.9 119.4h1M184.2 119.2h1M161.4 118.2h1M267.5 92.3h1M146.7 184.7h1M123.0 182.0h1M107.3 179.8h1M172.6 131.0h1M204.9 136.1h1M210.0 118.9h1M182.8 141.8h1M163.2 146.9h1M161.6 151.6h1M188.1 126.8h1M142.2 163.8h1M192.0 111.0h1M208.9 118.1h1M152.1 152.9h1M170.1 145.1h1M159.8 150.8h1M202.1 140.9h1M155.6 166.1h1M186.7 114.0h1M232.1 107.1h1M240.2 118.0h1M190.9 127.8h1M209.4 135.5h1M154.4 170.5h1M131.1 179.8h1M188.8 147.0h1M220.0 131.1h1M252.5 108.4h1M231.9 125.1h1M235.6 119.6h1M230.2 140.6h1M232.9 129.8h1M231.4 137.7h1M226.0 141.3h1M205.2 149.5h1M156.7 143.5h1M150.7 141.2h1M157.3 154.6h1"/>
<path stroke="#1b1b39" d="M203.1 112.7h1M238.8 106.4h1M182.1 125.1h1M180.6 123.1h1M225.3 122.9h1M215.8 116.0h1M195.3 125.6h1M199.3 124.4h1M197.2 130.1h1M226.4 97.7h1M104.0 178.6h1M133.5 183.1h1M104.0 180.8h1M137.4 184.8h1M144.5 187.7h1M134.7 185.2h1M148.5 183.8h1M138.6 183.3h1M119.5 182.7h1M110.1 179.0h1M123.7 183.3h1M150.2 187.7h1M136.8 183.4h1M146.9 162.6h1M237.4 105.2h1M191.6 109.1h1M137.9 171.5h1M175.2 129.7h1M177.1 142.7h1M233.4 121.0h1M222.2 129.5h1M146.2 172.2h1M199.6 140.2h1M259.4 109.8h1M239.2 121.2h1M152.9 168.1h1M247.8 111.4h1M150.3 167.7h1M174.4 156.7h1M153.9 168.8h1M246.3 115.3h1M229.5 141.3h1M226.2 140.6h1M225.7 135.0h1M224.2 141.6h1M235.7 145.5h1M221.1 145.0h1M228.4 133.1h1M209.6 145.6h1M178.2 143.3h1M141.6 136.1h1M143.6 134.7h1M221.0 150.3h1M190.3 148.8h1M128.6 125.6h1M169.1 141.3h1"/>
<path stroke="#dcdce8" d="M123.5 126.8h1M140.7 146.5h1M130.0 147.6h1M126.2 128.2h1M152.5 144.4h1M134.4 120.2h1M122.8 143.4h1M145.7 132.0h1M126.8 143.0h1M147.4 134.5h1M143.7 130.9h1M122.2 136.0h1M126.5 129.9h1M123.7 136.8h1M105.3 135.5h1M112.3 139.7h1M121.7 119.1h1M113.2 132.6h1M119.0 138.6h1M104.5 139.0h1M122.0 120.5h1M116.2 143.7h1M110.2 132.2h1M111.1 134.3h1M106.4 129.4h1M104.1 151.5h1M113.9 112.0h1M114.9 131.3h1M109.3 144.4h1M114.3 130.2h1M117.5 145.7h1M108.0 139.9h1M85.1 166.1h1M102.0 153.7h1M114.8 161.1h1M103.5 173.9h1M111.8 161.5h1M106.0 174.3h1M86.1 162.6h1M100.9 161.5h1M99.4 155.5h1M111.9 174.3h1M89.2 154.6h1M105.8 165.1h1M96.9 169.7h1M102.0 158.8h1M116.3 158.6h1M95.4 155.7h1M105.4 159.6h1M88.9 165.1h1M89.9 159.4h1M101.3 146.7h1M96.6 169.4h1M103.9 172.7h1M98.5 158.2h1M94.0 158.9h1M88.0 162.7h1M113.4 163.7h1M98.9 166.0h1M107.9 171.6h1M108.0 151.3h1M94.0 170.2h1M103.0 177.0h1M98.8 156.9h1M97.2 155.4h1M102.0 156.6h1M108.9 157.6h1M100.1 154.5h1M104.2 156.5h1"/>
<path stroke="#babace" d="M126.0 143.7h1M119.8 135.6h1M118.0 139.2h1M116.5 128.4h1M127.3 126.7h1M137.6 127.0h1M123.7 123.0h1M127.0 129.1h1M125.1 139.0h1M137.7 129.4h1M122.6 142.0h1M124.9 128.8h1M121.7 143.3h1M125.3 136.0h1M140.9 145.2h1M116.7 133.8h1M133.4 127.8h1M134.8 119.6h1M153.6 138.3h1M128.3 129.8h1M124.1 133.7h1M146.9 142.3h1M133.3 147.5h1M122.1 139.0h1M142.6 133.5h1M140.9 147.6h1M129.3 131.5h1M133.8 149.6h1M128.9 141.1h1M127.6 146.5h1M131.8 150.1h1M129.8 129.2h1M128.9 128.6h1M90.8 151.3h1M109.6 154.2h1M118.4 133.2h1M117.1 131.4h1M111.1 139.3h1M105.5 150.7h1M118.8 138.2h1M114.6 145.7h1M91.4 169.6h1M97.2 163.1h1M102.7 172.3h1M108.1 154.2h1M116.0 156.7h1M108.3 170.0h1M99.3 176.4h1M84.6 158.4h1M99.3 173.8h1M88.7 150.6h1M85.2 167.6h1M111.8 169.6h1M92.1 170.4h1M88.9 154.6h1M104.1 162.9h1M114.3 164.2h1M104.0 160.0h1M111.6 169.3h1M111.2 158.7h1M107.3 156.4h1M90.2 172.9h1M104.2 154.3h1M102.9 180.2h1M110.6 178.8h1M88.2 160.3h1M104.2 156.6h1M87.3 158.7h1M94.7 156.7h1M100.0 151.4h1M87.2 162.0h1M102.7 153.0h1M99.8 177.6h1M85.4 166.1h1M95.9 152.1h1M109.4 166.5h1M89.2 159.0h1M104.1 161.4h1M93.3 154.1h1M112.6 165.5h1M103.5 155.4h1M94.7 169.5h1M110.6 155.4h1M90.9 165.8h1M113.9 162.3h1M111.2 169.7h1M116.0 173.2h1"/>
<path stroke="#b0b7d4" d="M146.8 144.0h1M128.3 133.5h1M112.6 129.5h1M148.9 115.2h1M120.6 138.4h1M144.3 128.5h1M122.9 126.2h1M116.6 135.2h1M124.3 144.1h1M123.3 139.8h1M133.5 158.8h1M132.2 128.8h1M124.5 137.3h1M125.7 134.6h1M148.3 134.1h1M130.2 130.7h1M113.9 141.8h1M122.4 143.0h1M112.9 121.5h1M119.0 130.7h1M110.4 134.6h1M108.7 146.5h1M119.1 139.4h1M114.5 132.3h1"/>
<path stroke="#9daad3" d="M139.8 128.4h1M140.8 114.6h1M125.3 132.1h1M137.8 151.6h1M125.1 133.4h1M125.2 132.6h1M122.4 130.8h1M141.2 115.5h1M132.8 123.3h1M123.5 139.7h1M139.7 122.0h1M143.7 133.6h1M143.2 117.6h1M129.0 119.5h1M131.9 131.1h1M130.0 152.4h1M126.1 139.0h1M127.1 121.6h1M144.5 133.5h1M125.8 140.5h1M128.4 141.8h1M125.2 146.8h1M127.1 131.3h1M141.5 141.9h1M144.2 132.6h1M112.7 144.0h1M106.9 144.3h1M126.5 118.5h1M102.4 143.1h1M109.3 135.2h1M112.9 143.6h1M104.8 148.8h1M101.9 157.4h1M109.9 128.0h1M109.2 153.9h1M111.9 148.3h1M99.5 146.9h1M116.1 139.0h1M108.9 134.1h1M109.1 144.3h1M111.6 134.1h1M116.2 135.1h1M123.0 125.2h1M115.3 140.7h1M107.0 144.7h1M102.3 155.7h1"/>
<path stroke="#7c85b1" d="M154.9 147.1h1M142.3 128.0h1M136.8 123.3h1M142.9 121.6h1M125.8 133.4h1M116.5 146.3h1M148.4 122.0h1M120.9 132.7h1M123.8 116.3h1M127.4 145.7h1M143.6 132.4h1M139.7 132.1h1M130.7 146.0h1M145.8 142.5h1M121.2 127.2h1M143.3 117.0h1M132.7 128.3h1M129.0 131.3h1M127.2 136.0h1M144.7 119.5h1M142.2 130.4h1M135.2 158.1h1M128.4 123.9h1M145.9 141.4h1M148.4 132.0h1M143.6 128.2h1M127.8 145.1h1M130.3 128.0h1M127.4 144.2h1M125.5 131.2h1M146.2 137.4h1M145.6 139.1h1M143.9 146.0h1M144.5 130.7h1M147.5 132.7h1M146.0 133.3h1M146.6 132.1h1M119.2 146.5h1M113.1 154.5h1M110.9 125.2h1M112.9 130.7h1M116.9 123.0h1M111.2 131.2h1"/>
<path stroke="#9090ae" d="M141.9 126.0h1M123.8 120.6h1M147.0 149.0h1M134.8 129.9h1M132.8 129.7h1M119.2 132.9h1M124.1 137.3h1M139.5 129.6h1M124.5 135.4h1M124.1 122.3h1M130.4 122.8h1M120.7 133.7h1M143.5 146.7h1M126.1 126.1h1M144.7 138.2h1M143.4 128.5h1M134.6 148.9h1M127.6 140.0h1M140.1 129.5h1M125.3 132.3h1M125.0 141.0h1M134.3 129.3h1M130.2 147.0h1M124.5 137.4h1M137.7 127.7h1M119.6 137.6h1M116.3 137.7h1M106.3 151.8h1M119.6 131.4h1M105.1 137.7h1M113.5 139.4h1M117.6 142.8h1M118.5 133.2h1M108.5 165.5h1M104.6 181.8h1M112.4 168.0h1M105.5 148.3h1M118.7 166.0h1M108.7 176.1h1M99.5 164.0h1M114.2 169.8h1M113.9 172.2h1M102.4 149.8h1M95.7 163.4h1M91.4 149.3h1M90.3 154.8h1M104.0 175.3h1M102.2 169.0h1M98.9 152.3h1M110.0 158.3h1"/>
<path stroke="#cfd8f0" d="M137.2 122.2h1M126.4 126.2h1M143.8 129.7h1M108.4 120.7h1M137.5 116.5h1M130.4 128.4h1M120.7 142.8h1M135.6 125.1h1M133.2 131.2h1M121.6 133.2h1M134.3 148.2h1M130.9 149.9h1M128.3 147.3h1M135.7 128.7h1M132.9 146.8h1M145.8 138.0h1M146.3 137.0h1M104.3 150.4h1M113.3 140.9h1M113.2 144.1h1M110.3 152.8h1M112.0 125.9h1M121.8 127.3h1M113.9 140.1h1M111.7 135.8h1M109.3 133.7h1M110.5 144.7h1M130.6 124.3h1M113.2 142.9h1M121.1 131.3h1M110.4 137.9h1"/>
<path stroke="#898eb2" d="M130.3 148.6h1M143.3 150.6h1M157.8 123.1h1M160.9 120.7h1M146.9 129.2h1M126.0 128.3h1M122.2 138.0h1M145.2 139.7h1M150.6 140.2h1M130.6 148.6h1M129.6 128.0h1M125.5 125.5h1M124.5 147.1h1M140.2 131.3h1M143.5 124.9h1M128.1 134.4h1M143.4 135.6h1M137.3 126.2h1M142.3 146.5h1M132.6 150.5h1M125.8 144.5h1M142.6 143.5h1M144.9 132.9h1M142.5 143.4h1M124.7 132.9h1M129.9 147.2h1M131.3 129.1h1M118.7 139.6h1M104.4 137.2h1M111.0 135.8h1M128.1 106.7h1M108.3 138.8h1M109.1 145.5h1M112.5 122.8h1"/>
<path stroke="#b8c8ee" d="M121.2 138.2h1M124.5 121.7h1M139.0 129.6h1M126.1 132.6h1M145.9 132.8h1M144.8 134.7h1M125.5 136.2h1M133.7 130.9h1M127.9 145.5h1M114.6 110.4h1M102.0 142.4h1M110.0 140.4h1M115.6 129.4h1M114.6 136.0h1M118.9 137.5h1M120.7 125.7h1M113.4 135.3h1M106.3 148.5h1M117.8 119.2h1M105.2 148.8h1M101.2 137.0h1M104.2 140.1h1M112.8 135.2h1M120.8 122.4h1M118.3 133.2h1M108.8 132.3h1M115.6 136.3h1M117.7 136.5h1M98.6 155.1h1M122.3 132.1h1M115.2 146.0h1M123.1 138.9h1M115.3 140.6h1M106.0 152.8h1"/>
<path stroke="#2a2951" d="M126.6 187.7h1M114.2 181.1h1M142.2 184.9h1M123.5 183.6h1M119.4 178.6h1M105.3 179.4h1M119.2 181.4h1M125.9 182.4h1M144.5 182.8h1M197.1 147.8h1M173.9 157.4h1M203.7 136.5h1M229.2 141.5h1M224.3 137.5h1M231.2 152.1h1M185.4 143.9h1M153.9 150.2h1M166.3 163.3h1M179.9 154.4h1M169.7 141.1h1"/>
<path stroke="#252448" d="M110.6 177.9h1M150.6 187.6h1M139.0 183.1h1M135.4 183.7h1M134.6 185.3h1M133.9 179.4h1M191.6 148.8h1M129.1 179.0h1M212.1 136.3h1M165.9 161.0h1M138.6 180.4h1M218.0 132.2h1M251.5 112.5h1M182.9 155.9h1M165.1 163.0h1M124.1 184.4h1M150.1 171.0h1M221.0 130.0h1M188.9 147.6h1M131.6 182.8h1M195.9 147.8h1M216.5 131.1h1M220.3 130.0h1M224.8 146.1h1M222.2 146.4h1M224.7 133.0h1M191.4 154.8h1M145.3 152.9h1M200.7 155.1h1M178.1 144.9h1M225.9 167.9h1M173.5 155.7h1M166.5 136.5h1M167.9 138.0h1"/>
<path stroke="#222040" d="M117.5 182.6h1M109.0 178.4h1M134.0 182.6h1M147.0 185.8h1M134.4 186.1h1M127.6 180.7h1M147.8 183.8h1M129.3 183.8h1M124.8 180.6h1M141.4 183.3h1M105.1 181.2h1M116.6 185.2h1M136.5 178.1h1M229.0 124.3h1M189.6 149.3h1M148.2 171.3h1M185.5 151.3h1M200.6 146.6h1M153.3 168.4h1M171.2 156.2h1M153.4 168.0h1M248.2 112.9h1M229.9 140.8h1M227.3 149.6h1M233.6 133.1h1M223.4 143.9h1M234.8 135.4h1M234.3 135.7h1M232.1 152.3h1M227.1 145.1h1M225.3 146.0h1M229.1 142.7h1M227.6 139.7h1M230.3 164.0h1M145.6 147.3h1M198.3 142.7h1M138.9 136.8h1M173.5 134.2h1M142.4 125.9h1M136.7 140.5h1M160.6 143.3h1M157.1 155.3h1M156.0 158.3h1M167.0 143.4h1M206.4 158.2h1M159.8 152.3h1"/>
<path stroke="#17172e" d="M102.2 183.1h1M130.0 187.9h1M126.6 182.3h1M106.8 181.2h1M123.2 183.4h1M139.9 182.2h1M125.6 181.8h1M145.6 186.3h1M140.2 185.9h1M230.7 125.9h1M237.3 119.5h1M223.2 127.7h1M224.7 128.1h1M180.2 152.9h1M165.0 165.7h1M206.7 136.0h1M232.0 125.4h1M125.8 182.8h1M254.5 109.1h1M171.3 159.8h1M251.8 109.0h1M142.3 173.7h1M172.7 156.7h1M243.3 115.1h1"/>
<path stroke="#101020" d="M132.3 181.4h1M140.8 184.3h1M133.6 183.0h1M137.5 184.4h1M125.9 182.3h1M142.2 183.2h1M135.0 181.0h1M141.6 186.3h1M125.3 180.3h1M139.9 187.2h1M125.6 179.6h1M124.6 184.8h1M123.1 184.6h1M147.4 184.3h1M136.0 185.6h1M145.5 187.4h1M164.3 164.7h1M177.5 154.4h1M149.9 172.1h1M136.3 175.6h1M171.0 159.1h1M131.4 180.1h1M193.4 143.7h1M243.0 114.1h1M248.2 112.9h1M204.8 138.4h1M225.5 130.7h1M129.6 179.7h1M199.9 144.6h1M171.8 160.2h1M151.2 169.7h1M142.7 175.7h1M191.3 152.2h1"/>
<path stroke="#202040" d="M135.3 184.4h1M129.5 183.9h1M111.6 180.9h1M199.4 142.7h1M194.8 147.6h1M223.5 126.1h1M261.2 105.4h1M186.6 151.8h1M184.0 149.6h1M211.7 135.0h1M246.5 113.0h1"/>
</g>
<g fill="none" stroke="#9a9cca" stroke-width="0.7" transform="translate(-152.8 -56.7)">
<ellipse cx="353.6" cy="222.3" rx="132.8" ry="128.5" transform="rotate(-0.6 353.6 222.3)"/>
<ellipse cx="348.7" cy="234.4" rx="135.3" ry="34.1" transform="rotate(33.3 348.7 234.4)"/>
<ellipse cx="356.6" cy="229.8" rx="136.0" ry="20.3" transform="rotate(-58.0 356.6 229.8)"/>
</g></svg>
</div>
<div class="grp" style="left:558.5px;top:61px;width:77px;height:219.5px"></div>
<div class="t" style="left:560.5px;top:57px;background:#f0f0f0;padding:0 1.3px">3D View controls</div>
<div class="chk" style="left:561px;top:69.2px"></div>
<svg class="abs" style="left:561px;top:69.2px" width="7.6" height="7.6" viewBox="0 0 7.6 7.6"><path d="M1.6 3.9l1.7 1.7L6.2 2" fill="none" stroke="#222" stroke-width=".9"/></svg>
<div class="t" style="left:570.9px;top:68.5px">Show trackball</div>
<div class="grp" style="left:561.5px;top:85px;width:71.5px;height:41px"></div>
<div class="t" style="left:563.7px;top:80px;background:#f0f0f0;padding:0 1.3px">Point size</div>
<div class="abs" style="left:568.5px;top:96.8px;width:57px;height:2px;background:#dedede"></div>
<svg class="abs" style="left:574.3px;top:93.2px" width="5.4" height="10.4" viewBox="0 0 5.4 10.4"><path d="M0 0h5.4v7.4l-2.7 3l-2.7-3z" fill="#0078d7"/></svg>
<div class="abs" style="left:564px;top:109.7px;width:66.6px;height:13.2px;border:1px solid #aeaeae;background:#f0f0f0"><span class="t" style="left:3px;top:1.6px;font-size:6.8px">1</span></div>
<div class="chk" style="left:561px;top:129.79999999999998px"></div>
<svg class="abs" style="left:561px;top:129.79999999999998px" width="7.6" height="7.6" viewBox="0 0 7.6 7.6"><path d="M1.6 3.9l1.7 1.7L6.2 2" fill="none" stroke="#222" stroke-width=".9"/></svg>
<div class="t" style="left:570.9px;top:129.1px">Show texture</div>
<div class="chk" style="left:561px;top:142.7px"></div>
<svg class="abs" style="left:561px;top:142.7px" width="7.6" height="7.6" viewBox="0 0 7.6 7.6"><path d="M1.6 3.9l1.7 1.7L6.2 2" fill="none" stroke="#222" stroke-width=".9"/></svg>
<div class="t" style="left:570.9px;top:142.0px">Enable lighting</div>
<div class="grp" style="left:561.5px;top:161px;width:71.5px;height:48px"></div>
<div class="t" style="left:565px;top:155px;background:#f0f0f0;padding:0 1.3px">Polygon mode</div>
<div class="rad on" style="left:564.6px;top:169.4px"></div>
<div class="t" style="left:574.2px;top:169.0px">Fill</div>
<div class="rad" style="left:564.6px;top:182.4px"></div>
<div class="t" style="left:574.2px;top:182.0px">Line</div>
<div class="rad" style="left:564.6px;top:195.7px"></div>
<div class="t" style="left:574.2px;top:195.3px">Point</div>
<div class="grp" style="left:561.5px;top:220px;width:71.5px;height:35px"></div>
<div class="t" style="left:565px;top:214px;background:#f0f0f0;padding:0 1.3px">Shading model</div>
<div class="rad on" style="left:564.6px;top:229.1px"></div>
<div class="t" style="left:574.2px;top:228.7px">Smooth</div>
<div class="rad" style="left:564.6px;top:242.6px"></div>
<div class="t" style="left:574.2px;top:242.2px">Flat</div>
<div class="btn" style="left:561.4px;top:261.2px;width:72px;height:14px;line-height:12.2px">Reset orientation</div>
</body></html>
